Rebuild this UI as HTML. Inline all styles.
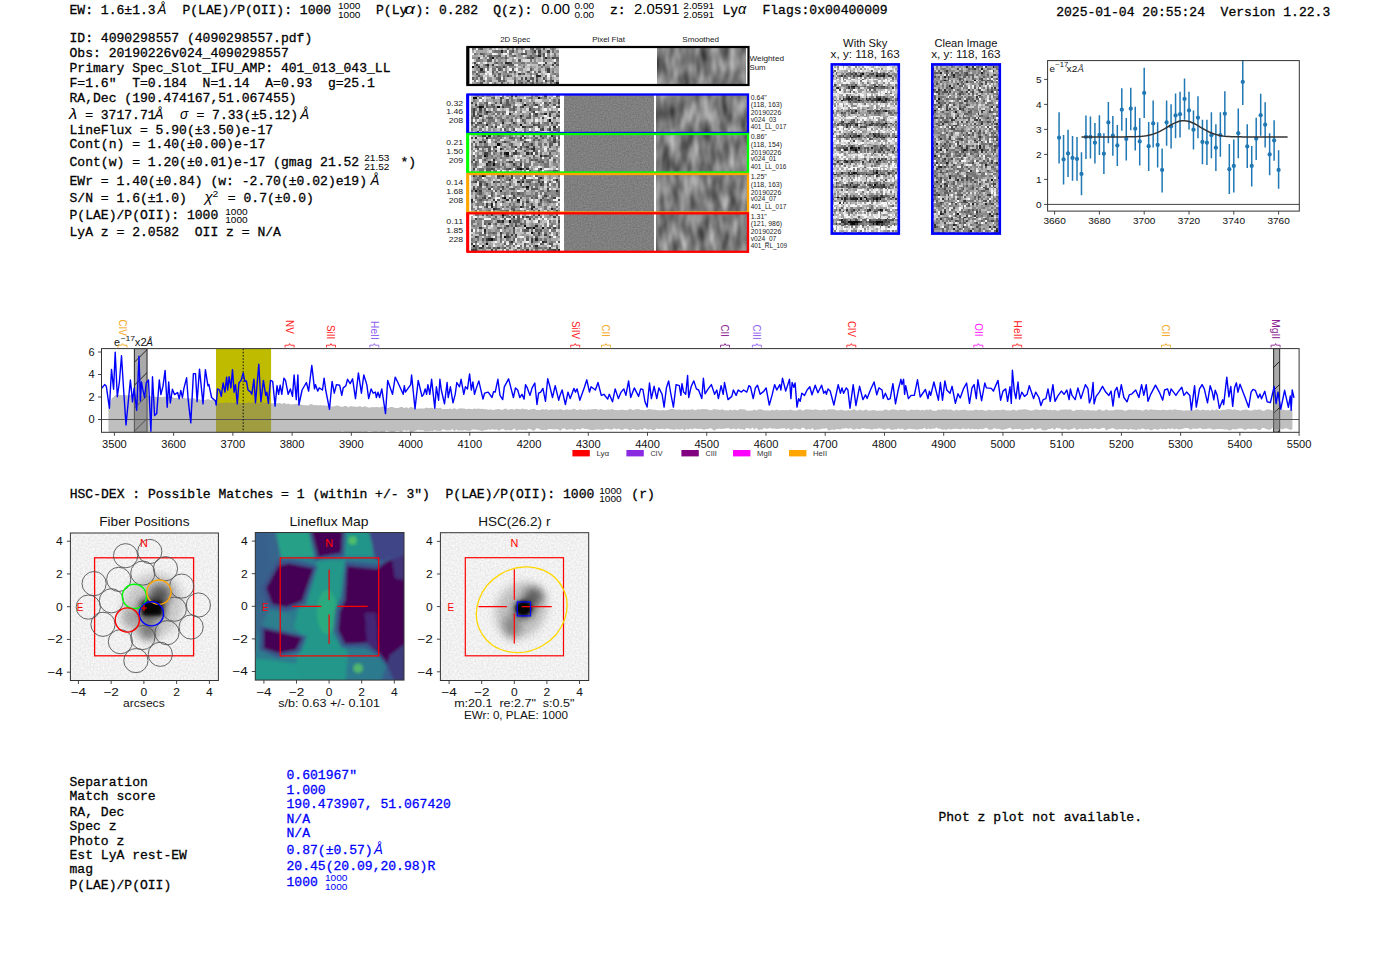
<!DOCTYPE html><html><head><meta charset="utf-8"><title>ELiXer report</title><style>html,body{margin:0;padding:0;background:#fff;width:1400px;height:953px;overflow:hidden}svg{display:block}.m{font-family:"Liberation Mono",monospace;font-size:13.60px}.s{font-family:"Liberation Sans",sans-serif}</style></head><body>
<svg width="1400" height="953" viewBox="0 0 1400 953">
<rect width="1400" height="953" fill="#fff"/>
<defs>
<filter id="fNoise" x="0" y="0" width="100%" height="100%" filterUnits="objectBoundingBox" color-interpolation-filters="sRGB">
  <feTurbulence type="fractalNoise" baseFrequency="0.6" numOctaves="1" seed="3" result="t"/>
  <feColorMatrix in="t" type="matrix" values="1 0 0 0 0  1 0 0 0 0  1 0 0 0 0  0 0 0 0 1"/>
  <feComponentTransfer><feFuncR type="linear" slope="1.6" intercept="-0.23"/><feFuncG type="linear" slope="1.6" intercept="-0.23"/><feFuncB type="linear" slope="1.6" intercept="-0.23"/></feComponentTransfer>
</filter>
<filter id="fNoise2" x="0" y="0" width="100%" height="100%" filterUnits="objectBoundingBox" color-interpolation-filters="sRGB">
  <feTurbulence type="fractalNoise" baseFrequency="0.62" numOctaves="1" seed="11" result="t"/>
  <feColorMatrix in="t" type="matrix" values="1 0 0 0 0  1 0 0 0 0  1 0 0 0 0  0 0 0 0 1"/>
  <feComponentTransfer><feFuncR type="linear" slope="1.55" intercept="-0.2"/><feFuncG type="linear" slope="1.55" intercept="-0.2"/><feFuncB type="linear" slope="1.55" intercept="-0.2"/></feComponentTransfer>
</filter>
<filter id="fSmooth" x="0" y="0" width="100%" height="100%" filterUnits="objectBoundingBox" color-interpolation-filters="sRGB">
  <feTurbulence type="fractalNoise" baseFrequency="0.1 0.04" numOctaves="2" seed="5" result="t"/>
  <feColorMatrix in="t" type="matrix" values="1 0 0 0 0  1 0 0 0 0  1 0 0 0 0  0 0 0 0 1"/>
  <feComponentTransfer><feFuncR type="linear" slope="0.72" intercept="0.13"/><feFuncG type="linear" slope="0.72" intercept="0.13"/><feFuncB type="linear" slope="0.72" intercept="0.13"/></feComponentTransfer>
</filter>
<filter id="fFlat" x="0" y="0" width="100%" height="100%" filterUnits="objectBoundingBox" color-interpolation-filters="sRGB">
  <feTurbulence type="fractalNoise" baseFrequency="0.7" numOctaves="1" seed="2" result="t"/>
  <feColorMatrix in="t" type="matrix" values="1 0 0 0 0  1 0 0 0 0  1 0 0 0 0  0 0 0 0 1"/>
  <feComponentTransfer><feFuncR type="linear" slope="0.19" intercept="0.405"/><feFuncG type="linear" slope="0.19" intercept="0.405"/><feFuncB type="linear" slope="0.19" intercept="0.405"/></feComponentTransfer>
</filter>
<filter id="fLight" x="0" y="0" width="100%" height="100%" filterUnits="objectBoundingBox" color-interpolation-filters="sRGB">
  <feTurbulence type="fractalNoise" baseFrequency="0.6" numOctaves="1" seed="9" result="t"/>
  <feColorMatrix in="t" type="matrix" values="1 0 0 0 0  1 0 0 0 0  1 0 0 0 0  0 0 0 0 1"/>
  <feComponentTransfer><feFuncR type="linear" slope="0.16" intercept="0.865"/><feFuncG type="linear" slope="0.16" intercept="0.865"/><feFuncB type="linear" slope="0.16" intercept="0.865"/></feComponentTransfer>
</filter>
<filter id="fClean" x="0" y="0" width="100%" height="100%" filterUnits="objectBoundingBox" color-interpolation-filters="sRGB">
  <feTurbulence type="fractalNoise" baseFrequency="0.8" numOctaves="1" seed="17" result="t"/>
  <feColorMatrix in="t" type="matrix" values="1 0 0 0 0  1 0 0 0 0  1 0 0 0 0  0 0 0 0 1"/>
  <feComponentTransfer><feFuncR type="linear" slope="1.7" intercept="-0.28"/><feFuncG type="linear" slope="1.7" intercept="-0.28"/><feFuncB type="linear" slope="1.7" intercept="-0.28"/></feComponentTransfer>
</filter>
<filter id="fBlur1"><feGaussianBlur stdDeviation="1.6"/></filter>
<filter id="fBlur2"><feGaussianBlur stdDeviation="4"/></filter>
<filter id="fBlur3"><feGaussianBlur stdDeviation="2.5"/></filter>
<pattern id="hatch0" patternUnits="userSpaceOnUse" width="23" height="23" patternTransform="translate(0,13.6)">
  <path d="M-2,25 L25,-2" stroke="#111" stroke-width="0.9"/>
</pattern>
<pattern id="hatch1" patternUnits="userSpaceOnUse" width="23" height="23" patternTransform="translate(0,8)">
  <path d="M-2,25 L25,-2" stroke="#111" stroke-width="0.9"/>
</pattern>
<pattern id="skyBands" patternUnits="userSpaceOnUse" x="0" y="69.5" width="70" height="12.4">
  <rect y="1.5" width="70" height="5.0" fill="#404040" filter="url(#fBlur1)"/>
</pattern>
<linearGradient id="skyMaskG" x1="0" x2="1" y1="0" y2="0">
  <stop offset="0" stop-color="#fff" stop-opacity="0.15"/>
  <stop offset="0.3" stop-color="#fff" stop-opacity="0.95"/>
  <stop offset="0.5" stop-color="#fff" stop-opacity="0.55"/>
  <stop offset="0.7" stop-color="#fff" stop-opacity="1.0"/>
  <stop offset="1" stop-color="#fff" stop-opacity="0.2"/>
</linearGradient>
<mask id="skyMask" maskUnits="userSpaceOnUse" x="830" y="60" width="72" height="180"><rect x="830" y="60" width="72" height="180" fill="url(#skyMaskG)"/></mask>
<filter id="fSkyN" x="0" y="0" width="100%" height="100%" filterUnits="objectBoundingBox" color-interpolation-filters="sRGB">
  <feTurbulence type="fractalNoise" baseFrequency="0.6" numOctaves="1" seed="21" result="t"/>
  <feColorMatrix in="t" type="matrix" values="1 0 0 0 0  1 0 0 0 0  1 0 0 0 0  0 0 0 0 1"/>
  <feComponentTransfer><feFuncR type="linear" slope="2.0" intercept="-0.15"/><feFuncG type="linear" slope="2.0" intercept="-0.15"/><feFuncB type="linear" slope="2.0" intercept="-0.15"/></feComponentTransfer>
</filter>
<filter id="fBlotch" x="0" y="0" width="100%" height="100%" filterUnits="objectBoundingBox" color-interpolation-filters="sRGB">
  <feTurbulence type="fractalNoise" baseFrequency="0.12 0.25" numOctaves="1" seed="4" result="t"/>
  <feColorMatrix in="t" type="matrix" values="0 0 0 0 1  0 0 0 0 1  0 0 0 0 1  3.5 0 0 0 -1.3"/>
</filter>
<radialGradient id="blobG" cx="50%" cy="50%" r="50%">
  <stop offset="0" stop-color="#000" stop-opacity="1"/>
  <stop offset="0.35" stop-color="#000" stop-opacity="0.85"/>
  <stop offset="1" stop-color="#000" stop-opacity="0"/>
</radialGradient>
<radialGradient id="haloG" cx="50%" cy="50%" r="50%">
  <stop offset="0" stop-color="#000" stop-opacity="0.55"/>
  <stop offset="0.5" stop-color="#000" stop-opacity="0.25"/>
  <stop offset="1" stop-color="#000" stop-opacity="0"/>
</radialGradient>
<clipPath id="cSpec"><rect x="101.5" y="348.6" width="1197.6" height="83.7"/></clipPath>
<clipPath id="cErr"><rect x="1047.6" y="60.6" width="251.7" height="150.5"/></clipPath>
<clipPath id="cFib"><rect x="70.4" y="533" width="148" height="147.5"/></clipPath>
<clipPath id="cLf"><rect x="255.3" y="532.5" width="148.7" height="147.6"/></clipPath>
<clipPath id="cHsc"><rect x="440.4" y="532.7" width="148.3" height="147.8"/></clipPath>
</defs>
<text x="69.50" y="14.40" class="m" fill="#000" stroke="#000" stroke-width="0.3" textLength="86.13" lengthAdjust="spacingAndGlyphs" xml:space="preserve">EW: 1.6±1.3</text>
<text x="157.50" y="14.40" class="s" font-size="13.78" fill="#000" text-anchor="start" textLength="8.89" lengthAdjust="spacingAndGlyphs" font-style="italic" xml:space="preserve" >Å</text>
<text x="182.40" y="14.40" class="m" fill="#000" stroke="#000" stroke-width="0.3" textLength="148.77" lengthAdjust="spacingAndGlyphs" xml:space="preserve">P(LAE)/P(OII): 1000</text>
<text x="338.00" y="8.90" class="s" font-size="9.33" fill="#000" text-anchor="start" textLength="22.40" lengthAdjust="spacingAndGlyphs" xml:space="preserve" >1000</text>
<text x="338.00" y="17.70" class="s" font-size="9.33" fill="#000" text-anchor="start" textLength="22.40" lengthAdjust="spacingAndGlyphs" xml:space="preserve" >1000</text>
<text x="376.00" y="14.40" class="m" fill="#000" stroke="#000" stroke-width="0.3" textLength="31.32" lengthAdjust="spacingAndGlyphs" xml:space="preserve">P(Ly</text>
<text x="404.50" y="14.40" class="s" font-size="14.31" fill="#000" text-anchor="start" textLength="10.50" lengthAdjust="spacingAndGlyphs" font-style="italic" xml:space="preserve" >α</text>
<text x="415.50" y="14.40" class="m" fill="#000" stroke="#000" stroke-width="0.3" textLength="62.64" lengthAdjust="spacingAndGlyphs" xml:space="preserve">): 0.282</text>
<text x="493.20" y="14.40" class="m" fill="#000" stroke="#000" stroke-width="0.3" textLength="39.15" lengthAdjust="spacingAndGlyphs" xml:space="preserve">Q(z):</text>
<text x="541.20" y="14.40" class="s" font-size="13.78" fill="#000" text-anchor="start" textLength="28.95" lengthAdjust="spacingAndGlyphs" xml:space="preserve" >0.00</text>
<text x="574.50" y="8.90" class="s" font-size="9.33" fill="#000" text-anchor="start" textLength="19.59" lengthAdjust="spacingAndGlyphs" xml:space="preserve" >0.00</text>
<text x="574.50" y="17.70" class="s" font-size="9.33" fill="#000" text-anchor="start" textLength="19.59" lengthAdjust="spacingAndGlyphs" xml:space="preserve" >0.00</text>
<text x="610.00" y="14.40" class="m" fill="#000" stroke="#000" stroke-width="0.3" textLength="15.66" lengthAdjust="spacingAndGlyphs" xml:space="preserve">z:</text>
<text x="634.00" y="14.40" class="s" font-size="13.78" fill="#000" text-anchor="start" textLength="45.49" lengthAdjust="spacingAndGlyphs" xml:space="preserve" >2.0591</text>
<text x="683.30" y="8.90" class="s" font-size="9.33" fill="#000" text-anchor="start" textLength="30.79" lengthAdjust="spacingAndGlyphs" xml:space="preserve" >2.0591</text>
<text x="683.30" y="17.70" class="s" font-size="9.33" fill="#000" text-anchor="start" textLength="30.79" lengthAdjust="spacingAndGlyphs" xml:space="preserve" >2.0591</text>
<text x="722.50" y="14.40" class="m" fill="#000" stroke="#000" stroke-width="0.3" textLength="15.66" lengthAdjust="spacingAndGlyphs" xml:space="preserve">Ly</text>
<text x="738.00" y="14.40" class="s" font-size="13.78" fill="#000" text-anchor="start" textLength="8.25" lengthAdjust="spacingAndGlyphs" font-style="italic" xml:space="preserve" >α</text>
<text x="762.40" y="14.40" class="m" fill="#000" stroke="#000" stroke-width="0.3" textLength="125.28" lengthAdjust="spacingAndGlyphs" xml:space="preserve">Flags:0x00400009</text>
<text x="1056.20" y="16.20" class="m" fill="#000" stroke="#000" stroke-width="0.3" textLength="274.05" lengthAdjust="spacingAndGlyphs" xml:space="preserve">2025-01-04 20:55:24  Version 1.22.3</text>
<text x="69.50" y="42.40" class="m" fill="#000" stroke="#000" stroke-width="0.3" textLength="242.73" lengthAdjust="spacingAndGlyphs" xml:space="preserve">ID: 4090298557 (4090298557.pdf)</text>
<text x="69.50" y="57.10" class="m" fill="#000" stroke="#000" stroke-width="0.3" textLength="219.24" lengthAdjust="spacingAndGlyphs" xml:space="preserve">Obs: 20190226v024_4090298557</text>
<text x="69.50" y="72.10" class="m" fill="#000" stroke="#000" stroke-width="0.3" textLength="321.03" lengthAdjust="spacingAndGlyphs" xml:space="preserve">Primary Spec_Slot_IFU_AMP: 401_013_043_LL</text>
<text x="69.50" y="87.10" class="m" fill="#000" stroke="#000" stroke-width="0.3" textLength="305.37" lengthAdjust="spacingAndGlyphs" xml:space="preserve">F=1.6&quot;  T=0.184  N=1.14  A=0.93  g=25.1</text>
<text x="69.50" y="101.90" class="m" fill="#000" stroke="#000" stroke-width="0.3" textLength="227.07" lengthAdjust="spacingAndGlyphs" xml:space="preserve">RA,Dec (190.474167,51.067455)</text>
<text x="69.00" y="118.60" class="s" font-size="13.78" fill="#000" text-anchor="start" textLength="8.25" lengthAdjust="spacingAndGlyphs" font-style="italic" xml:space="preserve" >λ</text>
<text x="77.30" y="118.60" class="m" fill="#000" stroke="#000" stroke-width="0.3" textLength="78.30" lengthAdjust="spacingAndGlyphs" xml:space="preserve"> = 3717.71</text>
<text x="154.50" y="118.60" class="s" font-size="13.78" fill="#000" text-anchor="start" textLength="8.89" lengthAdjust="spacingAndGlyphs" font-style="italic" xml:space="preserve" >Å</text>
<text x="180.00" y="118.60" class="s" font-size="13.78" fill="#000" text-anchor="start" textLength="8.25" lengthAdjust="spacingAndGlyphs" font-style="italic" xml:space="preserve" >σ</text>
<text x="188.60" y="118.60" class="m" fill="#000" stroke="#000" stroke-width="0.3" textLength="109.62" lengthAdjust="spacingAndGlyphs" xml:space="preserve"> = 7.33(±5.12)</text>
<text x="300.30" y="118.60" class="s" font-size="13.78" fill="#000" text-anchor="start" textLength="8.89" lengthAdjust="spacingAndGlyphs" font-style="italic" xml:space="preserve" >Å</text>
<text x="69.50" y="133.60" class="m" fill="#000" stroke="#000" stroke-width="0.3" textLength="203.58" lengthAdjust="spacingAndGlyphs" xml:space="preserve">LineFlux = 5.90(±3.50)e-17</text>
<text x="69.50" y="148.30" class="m" fill="#000" stroke="#000" stroke-width="0.3" textLength="195.75" lengthAdjust="spacingAndGlyphs" xml:space="preserve">Cont(n) = 1.40(±0.00)e-17</text>
<text x="69.50" y="166.40" class="m" fill="#000" stroke="#000" stroke-width="0.3" textLength="289.71" lengthAdjust="spacingAndGlyphs" xml:space="preserve">Cont(w) = 1.20(±0.01)e-17 (gmag 21.52</text>
<text x="364.20" y="160.60" class="s" font-size="9.33" fill="#000" text-anchor="start" textLength="25.19" lengthAdjust="spacingAndGlyphs" xml:space="preserve" >21.53</text>
<text x="364.20" y="169.60" class="s" font-size="9.33" fill="#000" text-anchor="start" textLength="25.19" lengthAdjust="spacingAndGlyphs" xml:space="preserve" >21.52</text>
<text x="392.60" y="166.40" class="m" fill="#000" stroke="#000" stroke-width="0.3" textLength="23.49" lengthAdjust="spacingAndGlyphs" xml:space="preserve"> *)</text>
<text x="69.50" y="184.60" class="m" fill="#000" stroke="#000" stroke-width="0.3" textLength="297.54" lengthAdjust="spacingAndGlyphs" xml:space="preserve">EWr = 1.40(±0.84) (w: -2.70(±0.02)e19)</text>
<text x="370.50" y="184.60" class="s" font-size="13.78" fill="#000" text-anchor="start" textLength="8.89" lengthAdjust="spacingAndGlyphs" font-style="italic" xml:space="preserve" >Å</text>
<text x="69.50" y="202.10" class="m" fill="#000" stroke="#000" stroke-width="0.3" textLength="117.45" lengthAdjust="spacingAndGlyphs" xml:space="preserve">S/N = 1.6(±1.0)</text>
<text x="204.50" y="202.10" class="s" font-size="13.78" fill="#000" text-anchor="start" textLength="8.25" lengthAdjust="spacingAndGlyphs" font-style="italic" xml:space="preserve" >χ</text>
<text x="212.50" y="196.60" class="s" font-size="9.54" fill="#000" text-anchor="start" textLength="5.73" lengthAdjust="spacingAndGlyphs" xml:space="preserve" >2</text>
<text x="220.00" y="202.10" class="m" fill="#000" stroke="#000" stroke-width="0.3" textLength="93.96" lengthAdjust="spacingAndGlyphs" xml:space="preserve"> = 0.7(±0.0)</text>
<text x="69.50" y="219.30" class="m" fill="#000" stroke="#000" stroke-width="0.3" textLength="148.77" lengthAdjust="spacingAndGlyphs" xml:space="preserve">P(LAE)/P(OII): 1000</text>
<text x="225.20" y="214.80" class="s" font-size="9.33" fill="#000" text-anchor="start" textLength="22.40" lengthAdjust="spacingAndGlyphs" xml:space="preserve" >1000</text>
<text x="225.20" y="223.20" class="s" font-size="9.33" fill="#000" text-anchor="start" textLength="22.40" lengthAdjust="spacingAndGlyphs" xml:space="preserve" >1000</text>
<text x="69.50" y="235.70" class="m" fill="#000" stroke="#000" stroke-width="0.3" textLength="211.41" lengthAdjust="spacingAndGlyphs" xml:space="preserve">LyA z = 2.0582  OII z = N/A</text>
<text x="69.70" y="498.40" class="m" fill="#000" stroke="#000" stroke-width="0.3" textLength="524.61" lengthAdjust="spacingAndGlyphs" xml:space="preserve">HSC-DEX : Possible Matches = 1 (within +/- 3&quot;)  P(LAE)/P(OII): 1000</text>
<text x="599.20" y="493.60" class="s" font-size="9.33" fill="#000" text-anchor="start" textLength="22.40" lengthAdjust="spacingAndGlyphs" xml:space="preserve" >1000</text>
<text x="599.20" y="502.20" class="s" font-size="9.33" fill="#000" text-anchor="start" textLength="22.40" lengthAdjust="spacingAndGlyphs" xml:space="preserve" >1000</text>
<text x="623.50" y="498.40" class="m" fill="#000" stroke="#000" stroke-width="0.3" textLength="31.32" lengthAdjust="spacingAndGlyphs" xml:space="preserve"> (r)</text>
<text x="69.50" y="785.70" class="m" fill="#000" stroke="#000" stroke-width="0.3" textLength="78.30" lengthAdjust="spacingAndGlyphs" xml:space="preserve">Separation</text>
<text x="69.50" y="800.40" class="m" fill="#000" stroke="#000" stroke-width="0.3" textLength="86.13" lengthAdjust="spacingAndGlyphs" xml:space="preserve">Match score</text>
<text x="69.50" y="815.50" class="m" fill="#000" stroke="#000" stroke-width="0.3" textLength="54.81" lengthAdjust="spacingAndGlyphs" xml:space="preserve">RA, Dec</text>
<text x="69.50" y="829.80" class="m" fill="#000" stroke="#000" stroke-width="0.3" textLength="46.98" lengthAdjust="spacingAndGlyphs" xml:space="preserve">Spec z</text>
<text x="69.50" y="844.50" class="m" fill="#000" stroke="#000" stroke-width="0.3" textLength="54.81" lengthAdjust="spacingAndGlyphs" xml:space="preserve">Photo z</text>
<text x="69.50" y="858.80" class="m" fill="#000" stroke="#000" stroke-width="0.3" textLength="117.45" lengthAdjust="spacingAndGlyphs" xml:space="preserve">Est LyA rest-EW</text>
<text x="69.50" y="873.20" class="m" fill="#000" stroke="#000" stroke-width="0.3" textLength="23.49" lengthAdjust="spacingAndGlyphs" xml:space="preserve">mag</text>
<text x="69.50" y="888.60" class="m" fill="#000" stroke="#000" stroke-width="0.3" textLength="101.79" lengthAdjust="spacingAndGlyphs" xml:space="preserve">P(LAE)/P(OII)</text>
<text x="286.50" y="779.10" class="m" fill="#0000ff" stroke="#0000ff" stroke-width="0.3" textLength="70.47" lengthAdjust="spacingAndGlyphs" xml:space="preserve">0.601967&quot;</text>
<text x="286.50" y="793.50" class="m" fill="#0000ff" stroke="#0000ff" stroke-width="0.3" textLength="39.15" lengthAdjust="spacingAndGlyphs" xml:space="preserve">1.000</text>
<text x="286.50" y="807.80" class="m" fill="#0000ff" stroke="#0000ff" stroke-width="0.3" textLength="164.43" lengthAdjust="spacingAndGlyphs" xml:space="preserve">190.473907, 51.067420</text>
<text x="286.50" y="822.50" class="m" fill="#0000ff" stroke="#0000ff" stroke-width="0.3" textLength="23.49" lengthAdjust="spacingAndGlyphs" xml:space="preserve">N/A</text>
<text x="286.50" y="837.10" class="m" fill="#0000ff" stroke="#0000ff" stroke-width="0.3" textLength="23.49" lengthAdjust="spacingAndGlyphs" xml:space="preserve">N/A</text>
<text x="286.50" y="854.00" class="m" fill="#0000ff" stroke="#0000ff" stroke-width="0.3" textLength="86.13" lengthAdjust="spacingAndGlyphs" xml:space="preserve">0.87(±0.57)</text>
<text x="374.00" y="854.00" class="s" font-size="13.78" fill="#0000ff" text-anchor="start" textLength="8.89" lengthAdjust="spacingAndGlyphs" font-style="italic" xml:space="preserve" >Å</text>
<text x="286.50" y="869.50" class="m" fill="#0000ff" stroke="#0000ff" stroke-width="0.3" textLength="148.77" lengthAdjust="spacingAndGlyphs" xml:space="preserve">20.45(20.09,20.98)R</text>
<text x="286.50" y="886.10" class="m" fill="#0000ff" stroke="#0000ff" stroke-width="0.3" textLength="31.32" lengthAdjust="spacingAndGlyphs" xml:space="preserve">1000</text>
<text x="325.00" y="880.80" class="s" font-size="9.33" fill="#0000ff" text-anchor="start" textLength="22.40" lengthAdjust="spacingAndGlyphs" xml:space="preserve" >1000</text>
<text x="325.00" y="889.60" class="s" font-size="9.33" fill="#0000ff" text-anchor="start" textLength="22.40" lengthAdjust="spacingAndGlyphs" xml:space="preserve" >1000</text>
<text x="938.40" y="820.70" class="m" fill="#000" stroke="#000" stroke-width="0.3" textLength="203.58" lengthAdjust="spacingAndGlyphs" xml:space="preserve">Phot z plot not available.</text>
<text x="515.20" y="42.20" class="s" font-size="7.63" fill="#222" text-anchor="middle" textLength="29.94" lengthAdjust="spacingAndGlyphs" xml:space="preserve" >2D Spec</text>
<text x="608.50" y="42.20" class="s" font-size="7.63" fill="#222" text-anchor="middle" textLength="32.70" lengthAdjust="spacingAndGlyphs" xml:space="preserve" >Pixel Flat</text>
<text x="700.70" y="42.20" class="s" font-size="7.63" fill="#222" text-anchor="middle" textLength="36.78" lengthAdjust="spacingAndGlyphs" xml:space="preserve" >Smoothed</text>
<g transform="translate(471.50,48.00) scale(2.2308,2.2500)" shape-rendering="crispEdges"><path fill="rgb(12,12,12)" d="M9 4h1v1h-1zM0 8h1v1h-1z"/><path fill="rgb(38,38,38)" d="M13 1h1v1h-1zM30 3h1v1h-1zM33 4h1v1h-1zM15 6h1v1h-1zM16 6h1v1h-1zM7 7h1v1h-1zM4 9h1v1h-1zM29 12h1v1h-1zM30 12h1v1h-1zM38 15h1v1h-1z"/><path fill="rgb(64,64,64)" d="M28 1h1v1h-1zM30 1h1v1h-1zM34 1h1v1h-1zM3 4h1v1h-1zM27 4h1v1h-1zM36 4h1v1h-1zM1 6h1v1h-1zM17 6h1v1h-1zM33 6h1v1h-1zM37 6h1v1h-1zM2 7h1v1h-1zM9 7h1v1h-1zM32 7h1v1h-1zM36 7h1v1h-1zM3 8h1v1h-1zM14 8h1v1h-1zM34 9h1v1h-1zM34 10h1v1h-1zM21 11h1v1h-1zM16 12h1v1h-1zM24 13h1v1h-1zM25 14h1v1h-1zM29 14h1v1h-1zM33 14h1v1h-1zM36 14h1v1h-1zM19 15h1v1h-1z"/><path fill="rgb(89,89,89)" d="M4 0h1v1h-1zM27 0h1v1h-1zM32 0h1v1h-1zM18 1h1v1h-1zM4 2h1v1h-1zM22 2h1v1h-1zM23 2h1v1h-1zM24 2h1v1h-1zM30 2h1v1h-1zM32 2h1v1h-1zM8 3h1v1h-1zM12 3h1v1h-1zM19 3h1v1h-1zM26 3h1v1h-1zM32 3h1v1h-1zM8 4h1v1h-1zM15 4h1v1h-1zM25 4h1v1h-1zM26 4h1v1h-1zM37 4h1v1h-1zM38 4h1v1h-1zM7 5h1v1h-1zM8 5h1v1h-1zM21 5h1v1h-1zM11 6h1v1h-1zM6 7h1v1h-1zM17 7h1v1h-1zM18 7h1v1h-1zM38 7h1v1h-1zM7 8h1v1h-1zM11 8h1v1h-1zM12 9h1v1h-1zM18 9h1v1h-1zM26 9h1v1h-1zM4 10h1v1h-1zM5 10h1v1h-1zM9 10h1v1h-1zM17 10h1v1h-1zM19 10h1v1h-1zM25 10h1v1h-1zM30 10h1v1h-1zM2 11h1v1h-1zM12 11h1v1h-1zM23 11h1v1h-1zM29 11h1v1h-1zM3 12h1v1h-1zM10 12h1v1h-1zM0 13h1v1h-1zM4 13h1v1h-1zM12 13h1v1h-1zM22 13h1v1h-1zM26 13h1v1h-1zM27 13h1v1h-1zM29 13h1v1h-1zM32 13h1v1h-1zM5 14h1v1h-1zM12 14h1v1h-1zM14 14h1v1h-1zM19 14h1v1h-1zM35 14h1v1h-1zM4 15h1v1h-1zM13 15h1v1h-1zM22 15h1v1h-1zM27 15h1v1h-1z"/><path fill="rgb(115,115,115)" d="M0 0h1v1h-1zM3 0h1v1h-1zM16 0h1v1h-1zM18 0h1v1h-1zM20 0h1v1h-1zM22 0h1v1h-1zM26 0h1v1h-1zM29 0h1v1h-1zM30 0h1v1h-1zM36 0h1v1h-1zM10 1h1v1h-1zM11 1h1v1h-1zM12 1h1v1h-1zM15 1h1v1h-1zM17 1h1v1h-1zM24 1h1v1h-1zM27 1h1v1h-1zM36 1h1v1h-1zM1 2h1v1h-1zM5 2h1v1h-1zM17 2h1v1h-1zM27 2h1v1h-1zM37 2h1v1h-1zM5 3h1v1h-1zM7 3h1v1h-1zM10 3h1v1h-1zM11 3h1v1h-1zM15 3h1v1h-1zM18 3h1v1h-1zM28 3h1v1h-1zM29 3h1v1h-1zM37 3h1v1h-1zM11 4h1v1h-1zM13 4h1v1h-1zM32 4h1v1h-1zM34 4h1v1h-1zM2 5h1v1h-1zM3 5h1v1h-1zM26 5h1v1h-1zM32 5h1v1h-1zM38 5h1v1h-1zM10 6h1v1h-1zM13 6h1v1h-1zM22 6h1v1h-1zM23 6h1v1h-1zM16 7h1v1h-1zM30 7h1v1h-1zM12 8h1v1h-1zM15 8h1v1h-1zM23 8h1v1h-1zM31 8h1v1h-1zM7 9h1v1h-1zM9 9h1v1h-1zM10 9h1v1h-1zM13 9h1v1h-1zM33 9h1v1h-1zM0 10h1v1h-1zM1 10h1v1h-1zM3 10h1v1h-1zM11 10h1v1h-1zM15 10h1v1h-1zM28 10h1v1h-1zM36 10h1v1h-1zM9 11h1v1h-1zM22 11h1v1h-1zM26 11h1v1h-1zM37 11h1v1h-1zM12 12h1v1h-1zM14 12h1v1h-1zM17 12h1v1h-1zM33 12h1v1h-1zM38 12h1v1h-1zM2 13h1v1h-1zM11 13h1v1h-1zM14 13h1v1h-1zM19 13h1v1h-1zM35 13h1v1h-1zM1 14h1v1h-1zM8 14h1v1h-1zM13 14h1v1h-1zM21 14h1v1h-1zM27 14h1v1h-1zM10 15h1v1h-1zM21 15h1v1h-1zM24 15h1v1h-1zM26 15h1v1h-1zM29 15h1v1h-1zM31 15h1v1h-1zM35 15h1v1h-1zM37 15h1v1h-1z"/><path fill="rgb(140,140,140)" d="M1 0h1v1h-1zM8 0h1v1h-1zM35 0h1v1h-1zM37 0h1v1h-1zM9 1h1v1h-1zM14 1h1v1h-1zM20 1h1v1h-1zM26 1h1v1h-1zM38 1h1v1h-1zM2 2h1v1h-1zM6 2h1v1h-1zM8 2h1v1h-1zM12 2h1v1h-1zM21 2h1v1h-1zM28 2h1v1h-1zM31 2h1v1h-1zM34 2h1v1h-1zM9 3h1v1h-1zM17 3h1v1h-1zM21 3h1v1h-1zM25 3h1v1h-1zM27 3h1v1h-1zM34 3h1v1h-1zM0 4h1v1h-1zM1 4h1v1h-1zM2 4h1v1h-1zM6 4h1v1h-1zM12 4h1v1h-1zM14 4h1v1h-1zM16 4h1v1h-1zM24 4h1v1h-1zM28 4h1v1h-1zM35 4h1v1h-1zM4 5h1v1h-1zM10 5h1v1h-1zM12 5h1v1h-1zM15 5h1v1h-1zM18 5h1v1h-1zM28 5h1v1h-1zM12 6h1v1h-1zM19 6h1v1h-1zM20 6h1v1h-1zM21 6h1v1h-1zM25 6h1v1h-1zM27 6h1v1h-1zM28 6h1v1h-1zM29 6h1v1h-1zM38 6h1v1h-1zM1 7h1v1h-1zM3 7h1v1h-1zM5 7h1v1h-1zM13 7h1v1h-1zM14 7h1v1h-1zM15 7h1v1h-1zM21 7h1v1h-1zM23 7h1v1h-1zM1 8h1v1h-1zM2 8h1v1h-1zM5 8h1v1h-1zM6 8h1v1h-1zM9 8h1v1h-1zM10 8h1v1h-1zM13 8h1v1h-1zM17 8h1v1h-1zM18 8h1v1h-1zM19 8h1v1h-1zM26 8h1v1h-1zM33 8h1v1h-1zM34 8h1v1h-1zM37 8h1v1h-1zM2 9h1v1h-1zM3 9h1v1h-1zM5 9h1v1h-1zM15 9h1v1h-1zM21 9h1v1h-1zM22 9h1v1h-1zM27 9h1v1h-1zM30 9h1v1h-1zM36 9h1v1h-1zM14 10h1v1h-1zM18 10h1v1h-1zM0 11h1v1h-1zM3 11h1v1h-1zM10 11h1v1h-1zM14 11h1v1h-1zM15 11h1v1h-1zM16 11h1v1h-1zM19 11h1v1h-1zM28 11h1v1h-1zM36 11h1v1h-1zM38 11h1v1h-1zM2 12h1v1h-1zM4 12h1v1h-1zM15 12h1v1h-1zM26 12h1v1h-1zM35 12h1v1h-1zM1 13h1v1h-1zM7 13h1v1h-1zM8 13h1v1h-1zM33 13h1v1h-1zM4 14h1v1h-1zM7 14h1v1h-1zM15 14h1v1h-1zM22 14h1v1h-1zM34 14h1v1h-1zM38 14h1v1h-1zM2 15h1v1h-1zM3 15h1v1h-1zM7 15h1v1h-1zM16 15h1v1h-1zM30 15h1v1h-1zM33 15h1v1h-1z"/><path fill="rgb(166,166,166)" d="M5 0h1v1h-1zM6 0h1v1h-1zM13 0h1v1h-1zM21 0h1v1h-1zM23 0h1v1h-1zM0 1h1v1h-1zM2 1h1v1h-1zM3 1h1v1h-1zM4 1h1v1h-1zM5 1h1v1h-1zM6 1h1v1h-1zM19 1h1v1h-1zM22 1h1v1h-1zM25 1h1v1h-1zM31 1h1v1h-1zM32 1h1v1h-1zM33 1h1v1h-1zM37 1h1v1h-1zM3 2h1v1h-1zM7 2h1v1h-1zM20 2h1v1h-1zM25 2h1v1h-1zM26 2h1v1h-1zM0 3h1v1h-1zM1 3h1v1h-1zM2 3h1v1h-1zM20 3h1v1h-1zM22 3h1v1h-1zM31 3h1v1h-1zM36 3h1v1h-1zM38 3h1v1h-1zM5 4h1v1h-1zM10 4h1v1h-1zM18 4h1v1h-1zM21 4h1v1h-1zM22 4h1v1h-1zM23 4h1v1h-1zM29 4h1v1h-1zM30 4h1v1h-1zM5 5h1v1h-1zM6 5h1v1h-1zM13 5h1v1h-1zM14 5h1v1h-1zM19 5h1v1h-1zM30 5h1v1h-1zM33 5h1v1h-1zM34 5h1v1h-1zM35 5h1v1h-1zM0 6h1v1h-1zM4 6h1v1h-1zM7 6h1v1h-1zM18 6h1v1h-1zM24 6h1v1h-1zM26 6h1v1h-1zM36 6h1v1h-1zM8 7h1v1h-1zM12 7h1v1h-1zM22 7h1v1h-1zM24 7h1v1h-1zM33 7h1v1h-1zM34 7h1v1h-1zM35 7h1v1h-1zM4 8h1v1h-1zM22 8h1v1h-1zM27 8h1v1h-1zM28 8h1v1h-1zM30 8h1v1h-1zM32 8h1v1h-1zM38 8h1v1h-1zM1 9h1v1h-1zM35 9h1v1h-1zM37 9h1v1h-1zM38 9h1v1h-1zM10 10h1v1h-1zM13 10h1v1h-1zM22 10h1v1h-1zM24 10h1v1h-1zM26 10h1v1h-1zM33 10h1v1h-1zM35 10h1v1h-1zM38 10h1v1h-1zM1 11h1v1h-1zM5 11h1v1h-1zM11 11h1v1h-1zM13 11h1v1h-1zM17 11h1v1h-1zM25 11h1v1h-1zM27 11h1v1h-1zM31 11h1v1h-1zM35 11h1v1h-1zM1 12h1v1h-1zM7 12h1v1h-1zM19 12h1v1h-1zM21 12h1v1h-1zM31 12h1v1h-1zM10 13h1v1h-1zM15 13h1v1h-1zM18 13h1v1h-1zM20 13h1v1h-1zM25 13h1v1h-1zM30 13h1v1h-1zM36 13h1v1h-1zM20 14h1v1h-1zM23 14h1v1h-1zM24 14h1v1h-1zM30 14h1v1h-1zM31 14h1v1h-1zM0 15h1v1h-1zM1 15h1v1h-1zM9 15h1v1h-1zM11 15h1v1h-1zM14 15h1v1h-1zM23 15h1v1h-1zM25 15h1v1h-1zM28 15h1v1h-1zM32 15h1v1h-1zM36 15h1v1h-1z"/><path fill="rgb(192,192,192)" d="M7 0h1v1h-1zM10 0h1v1h-1zM12 0h1v1h-1zM15 0h1v1h-1zM17 0h1v1h-1zM28 0h1v1h-1zM31 0h1v1h-1zM33 0h1v1h-1zM7 1h1v1h-1zM21 1h1v1h-1zM29 1h1v1h-1zM35 1h1v1h-1zM13 2h1v1h-1zM16 2h1v1h-1zM19 2h1v1h-1zM36 2h1v1h-1zM38 2h1v1h-1zM3 3h1v1h-1zM4 3h1v1h-1zM6 3h1v1h-1zM13 3h1v1h-1zM14 3h1v1h-1zM24 3h1v1h-1zM35 3h1v1h-1zM17 4h1v1h-1zM20 4h1v1h-1zM1 5h1v1h-1zM11 5h1v1h-1zM17 5h1v1h-1zM22 5h1v1h-1zM27 5h1v1h-1zM29 5h1v1h-1zM31 5h1v1h-1zM36 5h1v1h-1zM2 6h1v1h-1zM8 6h1v1h-1zM9 6h1v1h-1zM14 6h1v1h-1zM34 6h1v1h-1zM4 7h1v1h-1zM10 7h1v1h-1zM26 7h1v1h-1zM27 7h1v1h-1zM28 7h1v1h-1zM29 7h1v1h-1zM31 7h1v1h-1zM37 7h1v1h-1zM8 8h1v1h-1zM20 8h1v1h-1zM21 8h1v1h-1zM24 8h1v1h-1zM25 8h1v1h-1zM29 8h1v1h-1zM36 8h1v1h-1zM0 9h1v1h-1zM16 9h1v1h-1zM23 9h1v1h-1zM24 9h1v1h-1zM28 9h1v1h-1zM29 9h1v1h-1zM31 9h1v1h-1zM32 9h1v1h-1zM6 10h1v1h-1zM12 10h1v1h-1zM20 10h1v1h-1zM23 10h1v1h-1zM29 10h1v1h-1zM31 10h1v1h-1zM37 10h1v1h-1zM4 11h1v1h-1zM7 11h1v1h-1zM18 11h1v1h-1zM20 11h1v1h-1zM24 11h1v1h-1zM32 11h1v1h-1zM0 12h1v1h-1zM6 12h1v1h-1zM9 12h1v1h-1zM11 12h1v1h-1zM13 12h1v1h-1zM18 12h1v1h-1zM22 12h1v1h-1zM23 12h1v1h-1zM24 12h1v1h-1zM25 12h1v1h-1zM28 12h1v1h-1zM32 12h1v1h-1zM36 12h1v1h-1zM3 13h1v1h-1zM5 13h1v1h-1zM9 13h1v1h-1zM16 13h1v1h-1zM17 13h1v1h-1zM21 13h1v1h-1zM23 13h1v1h-1zM28 13h1v1h-1zM31 13h1v1h-1zM37 13h1v1h-1zM38 13h1v1h-1zM3 14h1v1h-1zM6 14h1v1h-1zM9 14h1v1h-1zM10 14h1v1h-1zM11 14h1v1h-1zM28 14h1v1h-1zM5 15h1v1h-1zM6 15h1v1h-1zM12 15h1v1h-1zM15 15h1v1h-1zM17 15h1v1h-1zM20 15h1v1h-1zM34 15h1v1h-1z"/><path fill="rgb(217,217,217)" d="M9 0h1v1h-1zM14 0h1v1h-1zM19 0h1v1h-1zM24 0h1v1h-1zM25 0h1v1h-1zM34 0h1v1h-1zM38 0h1v1h-1zM1 1h1v1h-1zM8 1h1v1h-1zM11 2h1v1h-1zM18 2h1v1h-1zM29 2h1v1h-1zM35 2h1v1h-1zM16 3h1v1h-1zM4 4h1v1h-1zM7 4h1v1h-1zM31 4h1v1h-1zM9 5h1v1h-1zM16 5h1v1h-1zM20 5h1v1h-1zM23 5h1v1h-1zM24 5h1v1h-1zM25 5h1v1h-1zM5 6h1v1h-1zM32 6h1v1h-1zM35 6h1v1h-1zM11 7h1v1h-1zM19 7h1v1h-1zM25 7h1v1h-1zM16 8h1v1h-1zM35 8h1v1h-1zM8 9h1v1h-1zM11 9h1v1h-1zM14 9h1v1h-1zM19 9h1v1h-1zM25 9h1v1h-1zM2 10h1v1h-1zM8 10h1v1h-1zM16 10h1v1h-1zM21 10h1v1h-1zM32 10h1v1h-1zM30 11h1v1h-1zM33 11h1v1h-1zM5 12h1v1h-1zM8 12h1v1h-1zM20 12h1v1h-1zM37 12h1v1h-1zM34 13h1v1h-1zM0 14h1v1h-1zM16 14h1v1h-1zM17 14h1v1h-1zM18 14h1v1h-1zM26 14h1v1h-1zM37 14h1v1h-1zM18 15h1v1h-1z"/><path fill="rgb(243,243,243)" d="M2 0h1v1h-1zM11 0h1v1h-1zM16 1h1v1h-1zM23 1h1v1h-1zM0 2h1v1h-1zM9 2h1v1h-1zM10 2h1v1h-1zM14 2h1v1h-1zM15 2h1v1h-1zM33 2h1v1h-1zM23 3h1v1h-1zM33 3h1v1h-1zM19 4h1v1h-1zM0 5h1v1h-1zM37 5h1v1h-1zM3 6h1v1h-1zM6 6h1v1h-1zM30 6h1v1h-1zM31 6h1v1h-1zM0 7h1v1h-1zM20 7h1v1h-1zM6 9h1v1h-1zM17 9h1v1h-1zM20 9h1v1h-1zM7 10h1v1h-1zM27 10h1v1h-1zM6 11h1v1h-1zM8 11h1v1h-1zM34 11h1v1h-1zM27 12h1v1h-1zM34 12h1v1h-1zM6 13h1v1h-1zM13 13h1v1h-1zM2 14h1v1h-1zM32 14h1v1h-1zM8 15h1v1h-1z"/></g>
<rect x="657.9" y="48" width="88" height="36" filter="url(#fSmooth)"/>
<rect x="467.5" y="47" width="281" height="38" fill="none" stroke="#000" stroke-width="2.2"/>
<rect x="466.4" y="46.5" width="3" height="39" fill="#000"/>
<text x="749.50" y="61.10" class="s" font-size="7.63" fill="#222" text-anchor="start" textLength="34.51" lengthAdjust="spacingAndGlyphs" xml:space="preserve" >Weighted</text>
<text x="749.50" y="70.00" class="s" font-size="7.63" fill="#222" text-anchor="start" textLength="16.15" lengthAdjust="spacingAndGlyphs" xml:space="preserve" >Sum</text>
<g transform="translate(470.50,94.90) scale(2.2375,2.2353)" shape-rendering="crispEdges"><path fill="rgb(12,12,12)" d="M1 1h1v1h-1zM2 1h1v1h-1zM30 1h1v1h-1zM24 4h1v1h-1zM4 5h1v1h-1zM12 5h1v1h-1zM35 11h1v1h-1zM22 13h1v1h-1z"/><path fill="rgb(38,38,38)" d="M5 5h1v1h-1zM7 7h1v1h-1zM17 8h1v1h-1zM33 8h1v1h-1zM4 9h1v1h-1zM22 9h1v1h-1zM14 12h1v1h-1zM7 13h1v1h-1zM23 14h1v1h-1zM37 14h1v1h-1z"/><path fill="rgb(64,64,64)" d="M18 0h1v1h-1zM20 0h1v1h-1zM33 0h1v1h-1zM13 1h1v1h-1zM22 2h1v1h-1zM0 3h1v1h-1zM13 3h1v1h-1zM39 3h1v1h-1zM2 4h1v1h-1zM29 4h1v1h-1zM14 5h1v1h-1zM23 5h1v1h-1zM39 5h1v1h-1zM1 6h1v1h-1zM4 6h1v1h-1zM26 6h1v1h-1zM1 7h1v1h-1zM28 7h1v1h-1zM39 7h1v1h-1zM1 8h1v1h-1zM29 8h1v1h-1zM35 8h1v1h-1zM1 9h1v1h-1zM35 9h1v1h-1zM39 9h1v1h-1zM32 10h1v1h-1zM0 12h1v1h-1zM4 12h1v1h-1zM19 12h1v1h-1zM36 12h1v1h-1zM28 13h1v1h-1zM11 14h1v1h-1zM24 14h1v1h-1zM30 14h1v1h-1zM32 15h1v1h-1zM35 15h1v1h-1zM3 16h1v1h-1z"/><path fill="rgb(89,89,89)" d="M38 0h1v1h-1zM10 1h1v1h-1zM13 2h1v1h-1zM16 2h1v1h-1zM39 2h1v1h-1zM7 3h1v1h-1zM11 3h1v1h-1zM16 3h1v1h-1zM28 3h1v1h-1zM33 3h1v1h-1zM35 3h1v1h-1zM7 4h1v1h-1zM9 4h1v1h-1zM16 4h1v1h-1zM17 4h1v1h-1zM34 4h1v1h-1zM37 4h1v1h-1zM3 5h1v1h-1zM7 5h1v1h-1zM10 5h1v1h-1zM19 5h1v1h-1zM22 5h1v1h-1zM38 5h1v1h-1zM6 6h1v1h-1zM19 6h1v1h-1zM4 7h1v1h-1zM8 7h1v1h-1zM36 7h1v1h-1zM3 8h1v1h-1zM7 8h1v1h-1zM14 8h1v1h-1zM26 8h1v1h-1zM26 9h1v1h-1zM29 9h1v1h-1zM38 9h1v1h-1zM0 10h1v1h-1zM2 10h1v1h-1zM3 10h1v1h-1zM8 10h1v1h-1zM9 10h1v1h-1zM22 10h1v1h-1zM25 10h1v1h-1zM26 10h1v1h-1zM37 10h1v1h-1zM5 11h1v1h-1zM14 11h1v1h-1zM18 11h1v1h-1zM23 11h1v1h-1zM3 12h1v1h-1zM24 12h1v1h-1zM30 12h1v1h-1zM38 12h1v1h-1zM2 13h1v1h-1zM17 13h1v1h-1zM29 13h1v1h-1zM30 13h1v1h-1zM2 14h1v1h-1zM5 14h1v1h-1zM9 14h1v1h-1zM26 14h1v1h-1zM27 14h1v1h-1zM15 15h1v1h-1zM19 15h1v1h-1zM31 15h1v1h-1zM37 15h1v1h-1zM5 16h1v1h-1zM16 16h1v1h-1zM17 16h1v1h-1zM20 16h1v1h-1z"/><path fill="rgb(115,115,115)" d="M3 0h1v1h-1zM5 0h1v1h-1zM14 0h1v1h-1zM27 0h1v1h-1zM29 0h1v1h-1zM39 0h1v1h-1zM4 1h1v1h-1zM9 1h1v1h-1zM14 1h1v1h-1zM18 1h1v1h-1zM26 1h1v1h-1zM27 1h1v1h-1zM31 1h1v1h-1zM33 1h1v1h-1zM1 2h1v1h-1zM18 2h1v1h-1zM21 2h1v1h-1zM37 2h1v1h-1zM6 3h1v1h-1zM19 3h1v1h-1zM4 4h1v1h-1zM5 4h1v1h-1zM10 4h1v1h-1zM14 4h1v1h-1zM15 4h1v1h-1zM23 4h1v1h-1zM25 4h1v1h-1zM28 4h1v1h-1zM33 4h1v1h-1zM8 5h1v1h-1zM9 5h1v1h-1zM15 5h1v1h-1zM16 5h1v1h-1zM17 5h1v1h-1zM20 5h1v1h-1zM26 5h1v1h-1zM27 5h1v1h-1zM30 5h1v1h-1zM33 5h1v1h-1zM0 6h1v1h-1zM2 6h1v1h-1zM10 6h1v1h-1zM17 6h1v1h-1zM18 6h1v1h-1zM27 6h1v1h-1zM28 6h1v1h-1zM30 6h1v1h-1zM0 7h1v1h-1zM6 7h1v1h-1zM11 7h1v1h-1zM12 7h1v1h-1zM14 7h1v1h-1zM15 7h1v1h-1zM22 7h1v1h-1zM27 7h1v1h-1zM35 7h1v1h-1zM37 7h1v1h-1zM6 8h1v1h-1zM10 8h1v1h-1zM12 8h1v1h-1zM28 8h1v1h-1zM31 8h1v1h-1zM32 8h1v1h-1zM38 8h1v1h-1zM0 9h1v1h-1zM11 9h1v1h-1zM19 9h1v1h-1zM23 9h1v1h-1zM28 9h1v1h-1zM7 10h1v1h-1zM12 10h1v1h-1zM13 10h1v1h-1zM16 10h1v1h-1zM20 10h1v1h-1zM0 11h1v1h-1zM8 11h1v1h-1zM9 11h1v1h-1zM10 11h1v1h-1zM13 11h1v1h-1zM24 11h1v1h-1zM34 11h1v1h-1zM1 12h1v1h-1zM7 12h1v1h-1zM8 12h1v1h-1zM11 12h1v1h-1zM20 12h1v1h-1zM27 12h1v1h-1zM28 12h1v1h-1zM33 12h1v1h-1zM34 12h1v1h-1zM0 13h1v1h-1zM3 13h1v1h-1zM5 13h1v1h-1zM11 13h1v1h-1zM20 13h1v1h-1zM34 13h1v1h-1zM38 13h1v1h-1zM1 14h1v1h-1zM14 14h1v1h-1zM16 14h1v1h-1zM18 14h1v1h-1zM25 14h1v1h-1zM32 14h1v1h-1zM35 14h1v1h-1zM39 14h1v1h-1zM0 15h1v1h-1zM4 15h1v1h-1zM13 15h1v1h-1zM24 15h1v1h-1zM34 15h1v1h-1zM38 15h1v1h-1zM39 15h1v1h-1zM24 16h1v1h-1zM26 16h1v1h-1zM29 16h1v1h-1zM39 16h1v1h-1z"/><path fill="rgb(140,140,140)" d="M2 0h1v1h-1zM7 0h1v1h-1zM8 0h1v1h-1zM10 0h1v1h-1zM16 0h1v1h-1zM17 1h1v1h-1zM25 1h1v1h-1zM32 1h1v1h-1zM35 1h1v1h-1zM38 1h1v1h-1zM2 2h1v1h-1zM7 2h1v1h-1zM10 2h1v1h-1zM19 2h1v1h-1zM27 2h1v1h-1zM2 3h1v1h-1zM4 3h1v1h-1zM15 3h1v1h-1zM17 3h1v1h-1zM18 3h1v1h-1zM23 3h1v1h-1zM25 3h1v1h-1zM26 3h1v1h-1zM34 3h1v1h-1zM37 3h1v1h-1zM38 3h1v1h-1zM19 4h1v1h-1zM27 4h1v1h-1zM30 4h1v1h-1zM39 4h1v1h-1zM0 5h1v1h-1zM2 5h1v1h-1zM11 5h1v1h-1zM31 5h1v1h-1zM35 5h1v1h-1zM11 6h1v1h-1zM20 6h1v1h-1zM22 6h1v1h-1zM29 6h1v1h-1zM3 7h1v1h-1zM9 7h1v1h-1zM13 7h1v1h-1zM19 7h1v1h-1zM0 8h1v1h-1zM4 8h1v1h-1zM9 8h1v1h-1zM18 8h1v1h-1zM23 8h1v1h-1zM39 8h1v1h-1zM2 9h1v1h-1zM3 9h1v1h-1zM5 9h1v1h-1zM8 9h1v1h-1zM13 9h1v1h-1zM16 9h1v1h-1zM17 9h1v1h-1zM18 9h1v1h-1zM21 9h1v1h-1zM25 9h1v1h-1zM5 10h1v1h-1zM18 10h1v1h-1zM28 10h1v1h-1zM30 10h1v1h-1zM2 11h1v1h-1zM6 11h1v1h-1zM15 11h1v1h-1zM17 11h1v1h-1zM28 11h1v1h-1zM10 12h1v1h-1zM18 12h1v1h-1zM32 12h1v1h-1zM39 12h1v1h-1zM4 13h1v1h-1zM6 13h1v1h-1zM8 13h1v1h-1zM12 13h1v1h-1zM14 13h1v1h-1zM16 13h1v1h-1zM19 13h1v1h-1zM31 13h1v1h-1zM32 13h1v1h-1zM33 13h1v1h-1zM36 13h1v1h-1zM37 13h1v1h-1zM8 14h1v1h-1zM17 14h1v1h-1zM21 14h1v1h-1zM31 14h1v1h-1zM8 15h1v1h-1zM10 15h1v1h-1zM16 15h1v1h-1zM18 15h1v1h-1zM6 16h1v1h-1zM7 16h1v1h-1zM27 16h1v1h-1zM36 16h1v1h-1zM38 16h1v1h-1z"/><path fill="rgb(166,166,166)" d="M1 0h1v1h-1zM4 0h1v1h-1zM9 0h1v1h-1zM17 0h1v1h-1zM21 0h1v1h-1zM22 0h1v1h-1zM23 0h1v1h-1zM28 0h1v1h-1zM30 0h1v1h-1zM32 0h1v1h-1zM36 0h1v1h-1zM21 1h1v1h-1zM28 1h1v1h-1zM29 1h1v1h-1zM37 1h1v1h-1zM39 1h1v1h-1zM3 2h1v1h-1zM5 2h1v1h-1zM8 2h1v1h-1zM9 2h1v1h-1zM11 2h1v1h-1zM12 2h1v1h-1zM15 2h1v1h-1zM17 2h1v1h-1zM20 2h1v1h-1zM23 2h1v1h-1zM24 2h1v1h-1zM25 2h1v1h-1zM28 2h1v1h-1zM32 2h1v1h-1zM33 2h1v1h-1zM34 2h1v1h-1zM36 2h1v1h-1zM38 2h1v1h-1zM1 3h1v1h-1zM5 3h1v1h-1zM10 3h1v1h-1zM12 3h1v1h-1zM14 3h1v1h-1zM22 3h1v1h-1zM27 3h1v1h-1zM29 3h1v1h-1zM31 3h1v1h-1zM36 3h1v1h-1zM0 4h1v1h-1zM6 4h1v1h-1zM8 4h1v1h-1zM18 4h1v1h-1zM26 4h1v1h-1zM36 4h1v1h-1zM1 5h1v1h-1zM13 5h1v1h-1zM24 5h1v1h-1zM25 5h1v1h-1zM34 5h1v1h-1zM5 6h1v1h-1zM8 6h1v1h-1zM14 6h1v1h-1zM24 6h1v1h-1zM31 6h1v1h-1zM34 6h1v1h-1zM36 6h1v1h-1zM38 6h1v1h-1zM5 7h1v1h-1zM10 7h1v1h-1zM17 7h1v1h-1zM21 7h1v1h-1zM25 7h1v1h-1zM26 7h1v1h-1zM31 7h1v1h-1zM33 7h1v1h-1zM34 7h1v1h-1zM5 8h1v1h-1zM8 8h1v1h-1zM15 8h1v1h-1zM21 8h1v1h-1zM24 8h1v1h-1zM25 8h1v1h-1zM30 8h1v1h-1zM36 8h1v1h-1zM9 9h1v1h-1zM12 9h1v1h-1zM14 9h1v1h-1zM20 9h1v1h-1zM24 9h1v1h-1zM30 9h1v1h-1zM31 9h1v1h-1zM37 9h1v1h-1zM1 10h1v1h-1zM10 10h1v1h-1zM11 10h1v1h-1zM15 10h1v1h-1zM17 10h1v1h-1zM21 10h1v1h-1zM23 10h1v1h-1zM24 10h1v1h-1zM39 10h1v1h-1zM4 11h1v1h-1zM7 11h1v1h-1zM12 11h1v1h-1zM16 11h1v1h-1zM20 11h1v1h-1zM22 11h1v1h-1zM32 11h1v1h-1zM37 11h1v1h-1zM5 12h1v1h-1zM9 12h1v1h-1zM12 12h1v1h-1zM13 12h1v1h-1zM15 12h1v1h-1zM22 12h1v1h-1zM23 12h1v1h-1zM25 12h1v1h-1zM29 12h1v1h-1zM37 12h1v1h-1zM9 13h1v1h-1zM15 13h1v1h-1zM18 13h1v1h-1zM21 13h1v1h-1zM25 13h1v1h-1zM26 13h1v1h-1zM27 13h1v1h-1zM0 14h1v1h-1zM4 14h1v1h-1zM6 14h1v1h-1zM10 14h1v1h-1zM15 14h1v1h-1zM19 14h1v1h-1zM20 14h1v1h-1zM28 14h1v1h-1zM1 15h1v1h-1zM2 15h1v1h-1zM6 15h1v1h-1zM11 15h1v1h-1zM25 15h1v1h-1zM27 15h1v1h-1zM28 15h1v1h-1zM0 16h1v1h-1zM2 16h1v1h-1zM8 16h1v1h-1zM10 16h1v1h-1zM11 16h1v1h-1zM12 16h1v1h-1zM15 16h1v1h-1zM22 16h1v1h-1zM25 16h1v1h-1zM30 16h1v1h-1zM35 16h1v1h-1z"/><path fill="rgb(192,192,192)" d="M0 0h1v1h-1zM6 0h1v1h-1zM12 0h1v1h-1zM19 0h1v1h-1zM24 0h1v1h-1zM25 0h1v1h-1zM26 0h1v1h-1zM34 0h1v1h-1zM35 0h1v1h-1zM0 1h1v1h-1zM3 1h1v1h-1zM7 1h1v1h-1zM8 1h1v1h-1zM12 1h1v1h-1zM15 1h1v1h-1zM20 1h1v1h-1zM22 1h1v1h-1zM23 1h1v1h-1zM34 1h1v1h-1zM0 2h1v1h-1zM14 2h1v1h-1zM9 3h1v1h-1zM20 3h1v1h-1zM21 3h1v1h-1zM30 3h1v1h-1zM1 4h1v1h-1zM3 4h1v1h-1zM11 4h1v1h-1zM12 4h1v1h-1zM32 4h1v1h-1zM35 4h1v1h-1zM6 5h1v1h-1zM18 5h1v1h-1zM21 5h1v1h-1zM32 5h1v1h-1zM36 5h1v1h-1zM3 6h1v1h-1zM13 6h1v1h-1zM15 6h1v1h-1zM21 6h1v1h-1zM23 6h1v1h-1zM37 6h1v1h-1zM2 7h1v1h-1zM18 7h1v1h-1zM30 7h1v1h-1zM32 7h1v1h-1zM38 7h1v1h-1zM13 8h1v1h-1zM19 8h1v1h-1zM20 8h1v1h-1zM22 8h1v1h-1zM34 8h1v1h-1zM37 8h1v1h-1zM7 9h1v1h-1zM10 9h1v1h-1zM15 9h1v1h-1zM27 9h1v1h-1zM32 9h1v1h-1zM34 9h1v1h-1zM36 9h1v1h-1zM6 10h1v1h-1zM14 10h1v1h-1zM19 10h1v1h-1zM27 10h1v1h-1zM29 10h1v1h-1zM33 10h1v1h-1zM19 11h1v1h-1zM25 11h1v1h-1zM26 11h1v1h-1zM30 11h1v1h-1zM36 11h1v1h-1zM38 11h1v1h-1zM39 11h1v1h-1zM16 12h1v1h-1zM17 12h1v1h-1zM21 12h1v1h-1zM35 12h1v1h-1zM1 13h1v1h-1zM23 13h1v1h-1zM24 13h1v1h-1zM35 13h1v1h-1zM33 14h1v1h-1zM3 15h1v1h-1zM9 15h1v1h-1zM12 15h1v1h-1zM23 15h1v1h-1zM33 15h1v1h-1zM9 16h1v1h-1zM13 16h1v1h-1zM14 16h1v1h-1zM18 16h1v1h-1zM19 16h1v1h-1zM21 16h1v1h-1zM28 16h1v1h-1zM31 16h1v1h-1zM37 16h1v1h-1z"/><path fill="rgb(217,217,217)" d="M11 0h1v1h-1zM15 0h1v1h-1zM31 0h1v1h-1zM6 1h1v1h-1zM11 1h1v1h-1zM16 1h1v1h-1zM19 1h1v1h-1zM36 1h1v1h-1zM6 2h1v1h-1zM26 2h1v1h-1zM29 2h1v1h-1zM30 2h1v1h-1zM31 2h1v1h-1zM35 2h1v1h-1zM3 3h1v1h-1zM24 3h1v1h-1zM13 4h1v1h-1zM21 4h1v1h-1zM22 4h1v1h-1zM38 4h1v1h-1zM28 5h1v1h-1zM7 6h1v1h-1zM9 6h1v1h-1zM12 6h1v1h-1zM16 6h1v1h-1zM25 6h1v1h-1zM32 6h1v1h-1zM35 6h1v1h-1zM23 7h1v1h-1zM24 7h1v1h-1zM2 8h1v1h-1zM11 8h1v1h-1zM6 9h1v1h-1zM4 10h1v1h-1zM31 10h1v1h-1zM35 10h1v1h-1zM36 10h1v1h-1zM38 10h1v1h-1zM3 11h1v1h-1zM11 11h1v1h-1zM27 11h1v1h-1zM31 11h1v1h-1zM33 11h1v1h-1zM2 12h1v1h-1zM26 12h1v1h-1zM31 12h1v1h-1zM10 13h1v1h-1zM3 14h1v1h-1zM13 14h1v1h-1zM22 14h1v1h-1zM29 14h1v1h-1zM34 14h1v1h-1zM36 14h1v1h-1zM5 15h1v1h-1zM7 15h1v1h-1zM17 15h1v1h-1zM21 15h1v1h-1zM22 15h1v1h-1zM30 15h1v1h-1zM36 15h1v1h-1zM1 16h1v1h-1zM4 16h1v1h-1z"/><path fill="rgb(243,243,243)" d="M13 0h1v1h-1zM37 0h1v1h-1zM5 1h1v1h-1zM24 1h1v1h-1zM4 2h1v1h-1zM8 3h1v1h-1zM32 3h1v1h-1zM20 4h1v1h-1zM31 4h1v1h-1zM29 5h1v1h-1zM37 5h1v1h-1zM33 6h1v1h-1zM39 6h1v1h-1zM16 7h1v1h-1zM20 7h1v1h-1zM29 7h1v1h-1zM16 8h1v1h-1zM27 8h1v1h-1zM33 9h1v1h-1zM34 10h1v1h-1zM1 11h1v1h-1zM21 11h1v1h-1zM29 11h1v1h-1zM6 12h1v1h-1zM13 13h1v1h-1zM39 13h1v1h-1zM7 14h1v1h-1zM12 14h1v1h-1zM38 14h1v1h-1zM14 15h1v1h-1zM20 15h1v1h-1zM26 15h1v1h-1zM29 15h1v1h-1zM23 16h1v1h-1zM32 16h1v1h-1zM33 16h1v1h-1zM34 16h1v1h-1z"/></g>
<rect x="564" y="94.9" width="89.6" height="38.0" filter="url(#fFlat)"/>
<rect x="656.4" y="94.9" width="90" height="38.0" filter="url(#fSmooth)" transform="translate(0,0)"/>
<rect x="467.6" y="94.5" width="280.4" height="38.5" fill="none" stroke="#0000ff" stroke-width="2.3"/>
<rect x="466.2" y="93.9" width="3" height="39.5" fill="#0000ff"/>
<text x="463.20" y="105.60" class="s" font-size="8.06" fill="#222" text-anchor="end" textLength="16.92" lengthAdjust="spacingAndGlyphs" xml:space="preserve" >0.32</text>
<text x="463.20" y="114.40" class="s" font-size="8.06" fill="#222" text-anchor="end" textLength="16.92" lengthAdjust="spacingAndGlyphs" xml:space="preserve" >1.46</text>
<text x="463.20" y="123.20" class="s" font-size="8.06" fill="#222" text-anchor="end" textLength="14.51" lengthAdjust="spacingAndGlyphs" xml:space="preserve" >208</text>
<text x="750.70" y="99.70" class="s" font-size="6.36" fill="#222" text-anchor="start" textLength="16.12" lengthAdjust="spacingAndGlyphs" xml:space="preserve" >0.64&quot;</text>
<text x="750.70" y="107.10" class="s" font-size="6.36" fill="#222" text-anchor="start" textLength="31.40" lengthAdjust="spacingAndGlyphs" xml:space="preserve" >(118, 163)</text>
<text x="750.70" y="115.40" class="s" font-size="6.36" fill="#222" text-anchor="start" textLength="30.54" lengthAdjust="spacingAndGlyphs" xml:space="preserve" >20190226</text>
<text x="750.70" y="121.90" class="s" font-size="6.36" fill="#222" text-anchor="start" textLength="25.64" lengthAdjust="spacingAndGlyphs" xml:space="preserve" >v024_03</text>
<text x="750.70" y="129.00" class="s" font-size="6.36" fill="#222" text-anchor="start" textLength="35.59" lengthAdjust="spacingAndGlyphs" xml:space="preserve" >401_LL_017</text>
<g transform="translate(470.50,134.40) scale(2.2375,2.2353)" shape-rendering="crispEdges"><path fill="rgb(12,12,12)" d="M12 4h1v1h-1zM16 8h1v1h-1zM6 9h1v1h-1zM10 13h1v1h-1zM22 15h1v1h-1z"/><path fill="rgb(38,38,38)" d="M8 0h1v1h-1zM36 0h1v1h-1zM2 1h1v1h-1zM7 1h1v1h-1zM6 3h1v1h-1zM11 5h1v1h-1zM13 6h1v1h-1zM28 6h1v1h-1zM15 8h1v1h-1zM25 8h1v1h-1zM31 9h1v1h-1zM10 11h1v1h-1zM8 12h1v1h-1zM7 13h1v1h-1zM21 15h1v1h-1zM25 15h1v1h-1zM31 15h1v1h-1z"/><path fill="rgb(64,64,64)" d="M5 0h1v1h-1zM6 0h1v1h-1zM23 0h1v1h-1zM31 0h1v1h-1zM22 1h1v1h-1zM24 1h1v1h-1zM37 2h1v1h-1zM4 3h1v1h-1zM15 3h1v1h-1zM24 3h1v1h-1zM37 3h1v1h-1zM27 4h1v1h-1zM2 5h1v1h-1zM20 5h1v1h-1zM25 5h1v1h-1zM28 5h1v1h-1zM27 6h1v1h-1zM11 7h1v1h-1zM20 7h1v1h-1zM28 7h1v1h-1zM6 8h1v1h-1zM7 8h1v1h-1zM19 8h1v1h-1zM20 8h1v1h-1zM27 8h1v1h-1zM7 9h1v1h-1zM16 9h1v1h-1zM33 9h1v1h-1zM1 11h1v1h-1zM17 12h1v1h-1zM18 12h1v1h-1zM19 13h1v1h-1zM22 13h1v1h-1zM1 15h1v1h-1zM9 15h1v1h-1zM17 15h1v1h-1zM23 15h1v1h-1z"/><path fill="rgb(89,89,89)" d="M12 0h1v1h-1zM28 0h1v1h-1zM0 1h1v1h-1zM17 1h1v1h-1zM18 1h1v1h-1zM29 1h1v1h-1zM32 1h1v1h-1zM37 1h1v1h-1zM39 1h1v1h-1zM22 2h1v1h-1zM28 2h1v1h-1zM30 2h1v1h-1zM1 3h1v1h-1zM11 3h1v1h-1zM39 3h1v1h-1zM18 4h1v1h-1zM23 4h1v1h-1zM35 4h1v1h-1zM36 4h1v1h-1zM39 4h1v1h-1zM3 5h1v1h-1zM6 5h1v1h-1zM7 5h1v1h-1zM8 5h1v1h-1zM10 5h1v1h-1zM18 5h1v1h-1zM22 5h1v1h-1zM35 5h1v1h-1zM3 6h1v1h-1zM8 6h1v1h-1zM22 6h1v1h-1zM8 7h1v1h-1zM24 7h1v1h-1zM13 8h1v1h-1zM29 8h1v1h-1zM35 8h1v1h-1zM1 9h1v1h-1zM18 9h1v1h-1zM28 9h1v1h-1zM34 9h1v1h-1zM35 10h1v1h-1zM6 11h1v1h-1zM27 11h1v1h-1zM29 11h1v1h-1zM37 11h1v1h-1zM0 12h1v1h-1zM2 12h1v1h-1zM10 12h1v1h-1zM30 12h1v1h-1zM32 12h1v1h-1zM2 13h1v1h-1zM8 13h1v1h-1zM14 13h1v1h-1zM21 14h1v1h-1zM24 14h1v1h-1zM7 15h1v1h-1zM8 15h1v1h-1zM10 15h1v1h-1zM16 15h1v1h-1zM7 16h1v1h-1zM8 16h1v1h-1zM26 16h1v1h-1zM30 16h1v1h-1zM37 16h1v1h-1zM38 16h1v1h-1z"/><path fill="rgb(115,115,115)" d="M10 0h1v1h-1zM13 0h1v1h-1zM14 0h1v1h-1zM17 0h1v1h-1zM33 0h1v1h-1zM37 0h1v1h-1zM39 0h1v1h-1zM8 1h1v1h-1zM10 1h1v1h-1zM11 1h1v1h-1zM13 1h1v1h-1zM19 1h1v1h-1zM35 1h1v1h-1zM5 2h1v1h-1zM12 2h1v1h-1zM19 2h1v1h-1zM23 2h1v1h-1zM34 2h1v1h-1zM35 2h1v1h-1zM5 3h1v1h-1zM14 3h1v1h-1zM16 3h1v1h-1zM25 3h1v1h-1zM35 3h1v1h-1zM36 3h1v1h-1zM0 4h1v1h-1zM2 4h1v1h-1zM6 4h1v1h-1zM7 4h1v1h-1zM13 4h1v1h-1zM17 4h1v1h-1zM26 4h1v1h-1zM30 4h1v1h-1zM31 4h1v1h-1zM33 4h1v1h-1zM4 5h1v1h-1zM5 5h1v1h-1zM15 5h1v1h-1zM19 5h1v1h-1zM24 5h1v1h-1zM31 5h1v1h-1zM38 5h1v1h-1zM0 6h1v1h-1zM5 6h1v1h-1zM10 6h1v1h-1zM14 6h1v1h-1zM25 6h1v1h-1zM26 6h1v1h-1zM34 6h1v1h-1zM5 7h1v1h-1zM29 7h1v1h-1zM36 7h1v1h-1zM37 7h1v1h-1zM8 8h1v1h-1zM10 8h1v1h-1zM21 8h1v1h-1zM26 8h1v1h-1zM31 8h1v1h-1zM3 9h1v1h-1zM4 9h1v1h-1zM9 9h1v1h-1zM15 9h1v1h-1zM24 9h1v1h-1zM32 9h1v1h-1zM35 9h1v1h-1zM36 9h1v1h-1zM3 10h1v1h-1zM4 10h1v1h-1zM7 10h1v1h-1zM11 10h1v1h-1zM13 10h1v1h-1zM26 10h1v1h-1zM28 10h1v1h-1zM31 10h1v1h-1zM19 11h1v1h-1zM22 11h1v1h-1zM26 11h1v1h-1zM28 11h1v1h-1zM31 11h1v1h-1zM34 11h1v1h-1zM3 12h1v1h-1zM9 12h1v1h-1zM16 12h1v1h-1zM22 12h1v1h-1zM26 12h1v1h-1zM31 12h1v1h-1zM34 12h1v1h-1zM37 12h1v1h-1zM1 13h1v1h-1zM9 13h1v1h-1zM11 13h1v1h-1zM12 13h1v1h-1zM20 13h1v1h-1zM24 13h1v1h-1zM25 13h1v1h-1zM26 13h1v1h-1zM33 13h1v1h-1zM34 13h1v1h-1zM2 14h1v1h-1zM7 14h1v1h-1zM8 14h1v1h-1zM12 14h1v1h-1zM15 14h1v1h-1zM20 14h1v1h-1zM22 14h1v1h-1zM25 14h1v1h-1zM33 14h1v1h-1zM34 14h1v1h-1zM38 14h1v1h-1zM4 15h1v1h-1zM5 15h1v1h-1zM15 15h1v1h-1zM20 15h1v1h-1zM30 15h1v1h-1zM4 16h1v1h-1zM5 16h1v1h-1zM10 16h1v1h-1zM11 16h1v1h-1zM24 16h1v1h-1z"/><path fill="rgb(140,140,140)" d="M3 0h1v1h-1zM4 0h1v1h-1zM11 0h1v1h-1zM15 0h1v1h-1zM16 0h1v1h-1zM18 0h1v1h-1zM20 0h1v1h-1zM22 0h1v1h-1zM32 0h1v1h-1zM5 1h1v1h-1zM9 1h1v1h-1zM12 1h1v1h-1zM20 1h1v1h-1zM21 1h1v1h-1zM25 1h1v1h-1zM27 1h1v1h-1zM28 1h1v1h-1zM31 1h1v1h-1zM33 1h1v1h-1zM6 2h1v1h-1zM7 2h1v1h-1zM9 2h1v1h-1zM11 2h1v1h-1zM18 2h1v1h-1zM21 2h1v1h-1zM29 2h1v1h-1zM31 2h1v1h-1zM39 2h1v1h-1zM10 3h1v1h-1zM17 3h1v1h-1zM27 3h1v1h-1zM28 3h1v1h-1zM30 3h1v1h-1zM31 3h1v1h-1zM38 3h1v1h-1zM4 4h1v1h-1zM25 4h1v1h-1zM28 4h1v1h-1zM0 5h1v1h-1zM14 5h1v1h-1zM23 5h1v1h-1zM16 6h1v1h-1zM18 6h1v1h-1zM19 6h1v1h-1zM21 6h1v1h-1zM29 6h1v1h-1zM30 6h1v1h-1zM31 6h1v1h-1zM38 6h1v1h-1zM1 7h1v1h-1zM4 7h1v1h-1zM6 7h1v1h-1zM9 7h1v1h-1zM10 7h1v1h-1zM25 7h1v1h-1zM31 7h1v1h-1zM32 7h1v1h-1zM34 7h1v1h-1zM35 7h1v1h-1zM3 8h1v1h-1zM5 8h1v1h-1zM11 8h1v1h-1zM18 8h1v1h-1zM38 8h1v1h-1zM0 9h1v1h-1zM8 9h1v1h-1zM12 9h1v1h-1zM13 9h1v1h-1zM17 9h1v1h-1zM23 9h1v1h-1zM39 9h1v1h-1zM0 10h1v1h-1zM1 10h1v1h-1zM6 10h1v1h-1zM8 10h1v1h-1zM9 10h1v1h-1zM10 10h1v1h-1zM14 10h1v1h-1zM15 10h1v1h-1zM16 10h1v1h-1zM29 10h1v1h-1zM33 10h1v1h-1zM37 10h1v1h-1zM38 10h1v1h-1zM0 11h1v1h-1zM3 11h1v1h-1zM5 11h1v1h-1zM7 11h1v1h-1zM11 11h1v1h-1zM14 11h1v1h-1zM15 11h1v1h-1zM24 11h1v1h-1zM30 11h1v1h-1zM32 11h1v1h-1zM33 11h1v1h-1zM39 11h1v1h-1zM5 12h1v1h-1zM12 12h1v1h-1zM14 12h1v1h-1zM20 12h1v1h-1zM21 12h1v1h-1zM24 12h1v1h-1zM29 12h1v1h-1zM39 12h1v1h-1zM0 13h1v1h-1zM3 13h1v1h-1zM15 13h1v1h-1zM18 13h1v1h-1zM28 13h1v1h-1zM29 13h1v1h-1zM31 13h1v1h-1zM32 13h1v1h-1zM37 13h1v1h-1zM38 13h1v1h-1zM1 14h1v1h-1zM6 14h1v1h-1zM9 14h1v1h-1zM10 14h1v1h-1zM11 14h1v1h-1zM13 14h1v1h-1zM18 14h1v1h-1zM19 14h1v1h-1zM3 15h1v1h-1zM12 15h1v1h-1zM14 15h1v1h-1zM18 15h1v1h-1zM24 15h1v1h-1zM27 15h1v1h-1zM0 16h1v1h-1zM1 16h1v1h-1zM13 16h1v1h-1zM16 16h1v1h-1zM22 16h1v1h-1zM27 16h1v1h-1zM31 16h1v1h-1zM34 16h1v1h-1zM35 16h1v1h-1zM36 16h1v1h-1zM39 16h1v1h-1z"/><path fill="rgb(166,166,166)" d="M1 0h1v1h-1zM7 0h1v1h-1zM25 0h1v1h-1zM30 0h1v1h-1zM38 0h1v1h-1zM14 1h1v1h-1zM16 1h1v1h-1zM26 1h1v1h-1zM36 1h1v1h-1zM3 2h1v1h-1zM15 2h1v1h-1zM16 2h1v1h-1zM17 2h1v1h-1zM24 2h1v1h-1zM27 2h1v1h-1zM32 2h1v1h-1zM36 2h1v1h-1zM38 2h1v1h-1zM7 3h1v1h-1zM9 3h1v1h-1zM12 3h1v1h-1zM13 3h1v1h-1zM21 3h1v1h-1zM23 3h1v1h-1zM32 3h1v1h-1zM34 3h1v1h-1zM5 4h1v1h-1zM9 4h1v1h-1zM11 4h1v1h-1zM16 4h1v1h-1zM19 4h1v1h-1zM24 4h1v1h-1zM1 5h1v1h-1zM13 5h1v1h-1zM16 5h1v1h-1zM26 5h1v1h-1zM27 5h1v1h-1zM29 5h1v1h-1zM36 5h1v1h-1zM37 5h1v1h-1zM39 5h1v1h-1zM2 6h1v1h-1zM6 6h1v1h-1zM11 6h1v1h-1zM17 6h1v1h-1zM24 6h1v1h-1zM32 6h1v1h-1zM37 6h1v1h-1zM0 7h1v1h-1zM3 7h1v1h-1zM13 7h1v1h-1zM15 7h1v1h-1zM17 7h1v1h-1zM23 7h1v1h-1zM38 7h1v1h-1zM0 8h1v1h-1zM2 8h1v1h-1zM12 8h1v1h-1zM14 8h1v1h-1zM22 8h1v1h-1zM23 8h1v1h-1zM33 8h1v1h-1zM36 8h1v1h-1zM37 8h1v1h-1zM39 8h1v1h-1zM5 9h1v1h-1zM10 9h1v1h-1zM11 9h1v1h-1zM25 9h1v1h-1zM2 10h1v1h-1zM12 10h1v1h-1zM17 10h1v1h-1zM18 10h1v1h-1zM21 10h1v1h-1zM25 10h1v1h-1zM30 10h1v1h-1zM34 10h1v1h-1zM39 10h1v1h-1zM8 11h1v1h-1zM12 11h1v1h-1zM17 11h1v1h-1zM38 11h1v1h-1zM6 12h1v1h-1zM7 12h1v1h-1zM13 12h1v1h-1zM15 12h1v1h-1zM23 12h1v1h-1zM33 12h1v1h-1zM36 12h1v1h-1zM17 13h1v1h-1zM21 13h1v1h-1zM30 13h1v1h-1zM36 13h1v1h-1zM39 13h1v1h-1zM0 14h1v1h-1zM5 14h1v1h-1zM14 14h1v1h-1zM16 14h1v1h-1zM17 14h1v1h-1zM27 14h1v1h-1zM28 14h1v1h-1zM32 14h1v1h-1zM35 14h1v1h-1zM39 14h1v1h-1zM0 15h1v1h-1zM6 15h1v1h-1zM26 15h1v1h-1zM32 15h1v1h-1zM37 15h1v1h-1zM39 15h1v1h-1zM3 16h1v1h-1zM19 16h1v1h-1zM20 16h1v1h-1zM21 16h1v1h-1zM28 16h1v1h-1zM29 16h1v1h-1zM33 16h1v1h-1z"/><path fill="rgb(192,192,192)" d="M0 0h1v1h-1zM2 0h1v1h-1zM9 0h1v1h-1zM19 0h1v1h-1zM21 0h1v1h-1zM27 0h1v1h-1zM29 0h1v1h-1zM35 0h1v1h-1zM1 1h1v1h-1zM4 1h1v1h-1zM30 1h1v1h-1zM34 1h1v1h-1zM0 2h1v1h-1zM2 2h1v1h-1zM4 2h1v1h-1zM10 2h1v1h-1zM33 2h1v1h-1zM0 3h1v1h-1zM2 3h1v1h-1zM3 3h1v1h-1zM18 3h1v1h-1zM19 3h1v1h-1zM20 3h1v1h-1zM22 3h1v1h-1zM26 3h1v1h-1zM29 3h1v1h-1zM33 3h1v1h-1zM3 4h1v1h-1zM8 4h1v1h-1zM10 4h1v1h-1zM14 4h1v1h-1zM15 4h1v1h-1zM20 4h1v1h-1zM21 4h1v1h-1zM29 4h1v1h-1zM32 4h1v1h-1zM34 4h1v1h-1zM37 4h1v1h-1zM9 5h1v1h-1zM17 5h1v1h-1zM21 5h1v1h-1zM30 5h1v1h-1zM32 5h1v1h-1zM34 5h1v1h-1zM7 6h1v1h-1zM15 6h1v1h-1zM23 6h1v1h-1zM35 6h1v1h-1zM36 6h1v1h-1zM7 7h1v1h-1zM14 7h1v1h-1zM16 7h1v1h-1zM18 7h1v1h-1zM21 7h1v1h-1zM22 7h1v1h-1zM26 7h1v1h-1zM27 7h1v1h-1zM4 8h1v1h-1zM24 8h1v1h-1zM30 8h1v1h-1zM32 8h1v1h-1zM34 8h1v1h-1zM14 9h1v1h-1zM19 9h1v1h-1zM21 9h1v1h-1zM26 9h1v1h-1zM27 9h1v1h-1zM29 9h1v1h-1zM30 9h1v1h-1zM37 9h1v1h-1zM5 10h1v1h-1zM19 10h1v1h-1zM22 10h1v1h-1zM23 10h1v1h-1zM24 10h1v1h-1zM27 10h1v1h-1zM2 11h1v1h-1zM18 11h1v1h-1zM23 11h1v1h-1zM25 11h1v1h-1zM19 12h1v1h-1zM25 12h1v1h-1zM28 12h1v1h-1zM35 12h1v1h-1zM38 12h1v1h-1zM4 13h1v1h-1zM6 13h1v1h-1zM13 13h1v1h-1zM16 13h1v1h-1zM35 13h1v1h-1zM29 14h1v1h-1zM36 14h1v1h-1zM37 14h1v1h-1zM11 15h1v1h-1zM13 15h1v1h-1zM28 15h1v1h-1zM2 16h1v1h-1zM9 16h1v1h-1zM18 16h1v1h-1z"/><path fill="rgb(217,217,217)" d="M24 0h1v1h-1zM26 0h1v1h-1zM34 0h1v1h-1zM3 1h1v1h-1zM6 1h1v1h-1zM15 1h1v1h-1zM23 1h1v1h-1zM1 2h1v1h-1zM13 2h1v1h-1zM14 2h1v1h-1zM20 2h1v1h-1zM1 4h1v1h-1zM38 4h1v1h-1zM33 5h1v1h-1zM1 6h1v1h-1zM4 6h1v1h-1zM12 6h1v1h-1zM39 6h1v1h-1zM12 7h1v1h-1zM19 7h1v1h-1zM33 7h1v1h-1zM39 7h1v1h-1zM9 8h1v1h-1zM17 8h1v1h-1zM2 9h1v1h-1zM20 10h1v1h-1zM36 10h1v1h-1zM9 11h1v1h-1zM13 11h1v1h-1zM16 11h1v1h-1zM35 11h1v1h-1zM36 11h1v1h-1zM1 12h1v1h-1zM27 12h1v1h-1zM5 13h1v1h-1zM23 13h1v1h-1zM27 13h1v1h-1zM3 14h1v1h-1zM26 14h1v1h-1zM31 14h1v1h-1zM2 15h1v1h-1zM35 15h1v1h-1zM36 15h1v1h-1zM6 16h1v1h-1zM15 16h1v1h-1zM23 16h1v1h-1z"/><path fill="rgb(243,243,243)" d="M38 1h1v1h-1zM8 2h1v1h-1zM25 2h1v1h-1zM26 2h1v1h-1zM8 3h1v1h-1zM22 4h1v1h-1zM12 5h1v1h-1zM9 6h1v1h-1zM20 6h1v1h-1zM33 6h1v1h-1zM2 7h1v1h-1zM30 7h1v1h-1zM1 8h1v1h-1zM28 8h1v1h-1zM20 9h1v1h-1zM22 9h1v1h-1zM38 9h1v1h-1zM32 10h1v1h-1zM4 11h1v1h-1zM20 11h1v1h-1zM21 11h1v1h-1zM4 12h1v1h-1zM11 12h1v1h-1zM4 14h1v1h-1zM23 14h1v1h-1zM30 14h1v1h-1zM19 15h1v1h-1zM29 15h1v1h-1zM33 15h1v1h-1zM34 15h1v1h-1zM38 15h1v1h-1zM12 16h1v1h-1zM14 16h1v1h-1zM17 16h1v1h-1zM25 16h1v1h-1zM32 16h1v1h-1z"/></g>
<rect x="564" y="134.4" width="89.6" height="38.0" filter="url(#fFlat)"/>
<rect x="656.4" y="134.4" width="90" height="38.0" filter="url(#fSmooth)" transform="translate(0,0)"/>
<rect x="467.6" y="134.0" width="280.4" height="38.5" fill="none" stroke="#00ff00" stroke-width="2.3"/>
<rect x="466.2" y="133.4" width="3" height="39.5" fill="#00ff00"/>
<text x="463.20" y="145.10" class="s" font-size="8.06" fill="#222" text-anchor="end" textLength="16.92" lengthAdjust="spacingAndGlyphs" xml:space="preserve" >0.21</text>
<text x="463.20" y="153.90" class="s" font-size="8.06" fill="#222" text-anchor="end" textLength="16.92" lengthAdjust="spacingAndGlyphs" xml:space="preserve" >1.50</text>
<text x="463.20" y="162.70" class="s" font-size="8.06" fill="#222" text-anchor="end" textLength="14.51" lengthAdjust="spacingAndGlyphs" xml:space="preserve" >209</text>
<text x="750.70" y="139.20" class="s" font-size="6.36" fill="#222" text-anchor="start" textLength="16.12" lengthAdjust="spacingAndGlyphs" xml:space="preserve" >0.86&quot;</text>
<text x="750.70" y="146.60" class="s" font-size="6.36" fill="#222" text-anchor="start" textLength="31.40" lengthAdjust="spacingAndGlyphs" xml:space="preserve" >(118, 154)</text>
<text x="750.70" y="154.90" class="s" font-size="6.36" fill="#222" text-anchor="start" textLength="30.54" lengthAdjust="spacingAndGlyphs" xml:space="preserve" >20190226</text>
<text x="750.70" y="161.40" class="s" font-size="6.36" fill="#222" text-anchor="start" textLength="25.64" lengthAdjust="spacingAndGlyphs" xml:space="preserve" >v024_01</text>
<text x="750.70" y="168.50" class="s" font-size="6.36" fill="#222" text-anchor="start" textLength="35.59" lengthAdjust="spacingAndGlyphs" xml:space="preserve" >401_LL_016</text>
<g transform="translate(470.50,174.40) scale(2.2375,2.2353)" shape-rendering="crispEdges"><path fill="rgb(12,12,12)" d="M5 0h1v1h-1zM25 5h1v1h-1zM2 7h1v1h-1zM15 10h1v1h-1zM21 11h1v1h-1z"/><path fill="rgb(38,38,38)" d="M14 0h1v1h-1zM24 0h1v1h-1zM24 1h1v1h-1zM31 1h1v1h-1zM38 2h1v1h-1zM21 3h1v1h-1zM23 3h1v1h-1zM13 7h1v1h-1zM38 7h1v1h-1zM0 11h1v1h-1zM16 11h1v1h-1zM11 12h1v1h-1zM9 13h1v1h-1zM9 14h1v1h-1zM22 14h1v1h-1zM28 14h1v1h-1zM10 15h1v1h-1zM27 15h1v1h-1zM36 15h1v1h-1z"/><path fill="rgb(64,64,64)" d="M1 0h1v1h-1zM6 0h1v1h-1zM12 0h1v1h-1zM18 0h1v1h-1zM18 1h1v1h-1zM17 2h1v1h-1zM2 3h1v1h-1zM10 3h1v1h-1zM30 3h1v1h-1zM32 3h1v1h-1zM4 4h1v1h-1zM7 4h1v1h-1zM31 4h1v1h-1zM14 5h1v1h-1zM1 6h1v1h-1zM8 6h1v1h-1zM25 6h1v1h-1zM34 6h1v1h-1zM4 7h1v1h-1zM19 9h1v1h-1zM33 9h1v1h-1zM6 10h1v1h-1zM14 10h1v1h-1zM37 10h1v1h-1zM10 11h1v1h-1zM31 11h1v1h-1zM39 11h1v1h-1zM0 12h1v1h-1zM21 12h1v1h-1zM25 12h1v1h-1zM7 13h1v1h-1zM7 14h1v1h-1zM27 14h1v1h-1zM11 15h1v1h-1zM19 16h1v1h-1zM30 16h1v1h-1zM38 16h1v1h-1z"/><path fill="rgb(89,89,89)" d="M4 0h1v1h-1zM13 0h1v1h-1zM29 0h1v1h-1zM12 1h1v1h-1zM30 1h1v1h-1zM3 2h1v1h-1zM23 2h1v1h-1zM27 2h1v1h-1zM30 2h1v1h-1zM1 3h1v1h-1zM4 3h1v1h-1zM12 3h1v1h-1zM25 3h1v1h-1zM26 3h1v1h-1zM35 3h1v1h-1zM39 3h1v1h-1zM17 4h1v1h-1zM22 4h1v1h-1zM32 4h1v1h-1zM34 4h1v1h-1zM39 4h1v1h-1zM1 5h1v1h-1zM4 5h1v1h-1zM9 5h1v1h-1zM23 5h1v1h-1zM39 5h1v1h-1zM3 6h1v1h-1zM14 6h1v1h-1zM18 6h1v1h-1zM19 6h1v1h-1zM27 6h1v1h-1zM28 6h1v1h-1zM29 6h1v1h-1zM0 7h1v1h-1zM11 7h1v1h-1zM34 7h1v1h-1zM4 8h1v1h-1zM9 8h1v1h-1zM18 8h1v1h-1zM21 8h1v1h-1zM6 9h1v1h-1zM9 9h1v1h-1zM2 10h1v1h-1zM5 10h1v1h-1zM8 10h1v1h-1zM17 10h1v1h-1zM19 10h1v1h-1zM22 10h1v1h-1zM27 10h1v1h-1zM29 10h1v1h-1zM32 10h1v1h-1zM4 11h1v1h-1zM12 11h1v1h-1zM18 11h1v1h-1zM34 11h1v1h-1zM14 12h1v1h-1zM31 12h1v1h-1zM35 12h1v1h-1zM23 13h1v1h-1zM27 13h1v1h-1zM30 13h1v1h-1zM23 14h1v1h-1zM12 15h1v1h-1zM18 15h1v1h-1zM19 15h1v1h-1zM2 16h1v1h-1zM16 16h1v1h-1z"/><path fill="rgb(115,115,115)" d="M2 0h1v1h-1zM39 0h1v1h-1zM3 1h1v1h-1zM4 1h1v1h-1zM16 1h1v1h-1zM23 1h1v1h-1zM32 1h1v1h-1zM2 2h1v1h-1zM16 2h1v1h-1zM25 2h1v1h-1zM26 2h1v1h-1zM37 2h1v1h-1zM0 3h1v1h-1zM5 3h1v1h-1zM6 3h1v1h-1zM11 3h1v1h-1zM14 3h1v1h-1zM22 3h1v1h-1zM31 3h1v1h-1zM38 3h1v1h-1zM6 4h1v1h-1zM26 4h1v1h-1zM29 4h1v1h-1zM37 4h1v1h-1zM3 5h1v1h-1zM7 5h1v1h-1zM12 5h1v1h-1zM13 5h1v1h-1zM16 5h1v1h-1zM20 5h1v1h-1zM24 5h1v1h-1zM27 5h1v1h-1zM29 5h1v1h-1zM4 6h1v1h-1zM12 6h1v1h-1zM17 6h1v1h-1zM3 7h1v1h-1zM9 7h1v1h-1zM24 7h1v1h-1zM31 7h1v1h-1zM32 7h1v1h-1zM35 7h1v1h-1zM39 7h1v1h-1zM3 8h1v1h-1zM15 8h1v1h-1zM19 8h1v1h-1zM22 8h1v1h-1zM23 8h1v1h-1zM29 8h1v1h-1zM31 8h1v1h-1zM33 8h1v1h-1zM38 8h1v1h-1zM39 8h1v1h-1zM2 9h1v1h-1zM12 9h1v1h-1zM15 9h1v1h-1zM23 9h1v1h-1zM25 9h1v1h-1zM26 9h1v1h-1zM28 9h1v1h-1zM29 9h1v1h-1zM34 9h1v1h-1zM36 9h1v1h-1zM39 9h1v1h-1zM20 10h1v1h-1zM36 10h1v1h-1zM3 11h1v1h-1zM5 11h1v1h-1zM7 11h1v1h-1zM25 11h1v1h-1zM33 11h1v1h-1zM35 11h1v1h-1zM4 12h1v1h-1zM23 12h1v1h-1zM34 12h1v1h-1zM36 12h1v1h-1zM37 12h1v1h-1zM3 13h1v1h-1zM5 13h1v1h-1zM11 13h1v1h-1zM17 13h1v1h-1zM19 13h1v1h-1zM31 13h1v1h-1zM0 14h1v1h-1zM6 14h1v1h-1zM11 14h1v1h-1zM14 14h1v1h-1zM16 14h1v1h-1zM18 14h1v1h-1zM19 14h1v1h-1zM20 14h1v1h-1zM25 14h1v1h-1zM33 14h1v1h-1zM38 14h1v1h-1zM0 15h1v1h-1zM3 15h1v1h-1zM33 15h1v1h-1zM37 15h1v1h-1zM8 16h1v1h-1zM10 16h1v1h-1zM13 16h1v1h-1zM14 16h1v1h-1zM15 16h1v1h-1zM21 16h1v1h-1zM24 16h1v1h-1zM28 16h1v1h-1zM34 16h1v1h-1z"/><path fill="rgb(140,140,140)" d="M15 0h1v1h-1zM16 0h1v1h-1zM20 0h1v1h-1zM21 0h1v1h-1zM22 0h1v1h-1zM26 0h1v1h-1zM30 0h1v1h-1zM31 0h1v1h-1zM32 0h1v1h-1zM35 0h1v1h-1zM1 1h1v1h-1zM2 1h1v1h-1zM7 1h1v1h-1zM8 1h1v1h-1zM13 1h1v1h-1zM14 1h1v1h-1zM17 1h1v1h-1zM20 1h1v1h-1zM21 1h1v1h-1zM35 1h1v1h-1zM1 2h1v1h-1zM4 2h1v1h-1zM5 2h1v1h-1zM8 2h1v1h-1zM13 2h1v1h-1zM15 2h1v1h-1zM22 2h1v1h-1zM28 2h1v1h-1zM29 2h1v1h-1zM39 2h1v1h-1zM15 3h1v1h-1zM17 3h1v1h-1zM18 3h1v1h-1zM34 3h1v1h-1zM8 4h1v1h-1zM11 4h1v1h-1zM13 4h1v1h-1zM16 4h1v1h-1zM27 4h1v1h-1zM28 4h1v1h-1zM30 4h1v1h-1zM36 4h1v1h-1zM8 5h1v1h-1zM10 5h1v1h-1zM19 5h1v1h-1zM21 5h1v1h-1zM22 5h1v1h-1zM32 5h1v1h-1zM34 5h1v1h-1zM35 5h1v1h-1zM37 5h1v1h-1zM2 6h1v1h-1zM5 6h1v1h-1zM6 6h1v1h-1zM10 6h1v1h-1zM11 6h1v1h-1zM15 6h1v1h-1zM21 6h1v1h-1zM30 6h1v1h-1zM1 7h1v1h-1zM7 7h1v1h-1zM8 7h1v1h-1zM16 7h1v1h-1zM19 7h1v1h-1zM27 7h1v1h-1zM28 7h1v1h-1zM30 7h1v1h-1zM36 7h1v1h-1zM37 7h1v1h-1zM0 8h1v1h-1zM2 8h1v1h-1zM5 8h1v1h-1zM10 8h1v1h-1zM13 8h1v1h-1zM14 8h1v1h-1zM16 8h1v1h-1zM20 8h1v1h-1zM24 8h1v1h-1zM27 8h1v1h-1zM34 8h1v1h-1zM35 8h1v1h-1zM36 8h1v1h-1zM37 8h1v1h-1zM4 9h1v1h-1zM5 9h1v1h-1zM10 9h1v1h-1zM20 9h1v1h-1zM21 9h1v1h-1zM22 9h1v1h-1zM24 9h1v1h-1zM27 9h1v1h-1zM32 9h1v1h-1zM37 9h1v1h-1zM38 9h1v1h-1zM3 10h1v1h-1zM4 10h1v1h-1zM9 10h1v1h-1zM18 10h1v1h-1zM25 10h1v1h-1zM28 10h1v1h-1zM33 10h1v1h-1zM35 10h1v1h-1zM6 11h1v1h-1zM15 11h1v1h-1zM32 11h1v1h-1zM36 11h1v1h-1zM1 12h1v1h-1zM3 12h1v1h-1zM9 12h1v1h-1zM15 12h1v1h-1zM18 12h1v1h-1zM20 12h1v1h-1zM33 12h1v1h-1zM0 13h1v1h-1zM2 13h1v1h-1zM4 13h1v1h-1zM8 13h1v1h-1zM25 13h1v1h-1zM26 13h1v1h-1zM34 13h1v1h-1zM39 13h1v1h-1zM3 14h1v1h-1zM21 14h1v1h-1zM36 14h1v1h-1zM1 15h1v1h-1zM4 15h1v1h-1zM7 15h1v1h-1zM8 15h1v1h-1zM13 15h1v1h-1zM25 15h1v1h-1zM26 15h1v1h-1zM29 15h1v1h-1zM4 16h1v1h-1zM7 16h1v1h-1zM12 16h1v1h-1zM18 16h1v1h-1zM20 16h1v1h-1zM22 16h1v1h-1zM37 16h1v1h-1zM39 16h1v1h-1z"/><path fill="rgb(166,166,166)" d="M0 0h1v1h-1zM3 0h1v1h-1zM9 0h1v1h-1zM10 0h1v1h-1zM17 0h1v1h-1zM19 0h1v1h-1zM25 0h1v1h-1zM27 0h1v1h-1zM34 0h1v1h-1zM36 0h1v1h-1zM37 0h1v1h-1zM38 0h1v1h-1zM9 1h1v1h-1zM10 1h1v1h-1zM15 1h1v1h-1zM34 1h1v1h-1zM36 1h1v1h-1zM38 1h1v1h-1zM39 1h1v1h-1zM9 2h1v1h-1zM11 2h1v1h-1zM18 2h1v1h-1zM21 2h1v1h-1zM24 2h1v1h-1zM31 2h1v1h-1zM32 2h1v1h-1zM35 2h1v1h-1zM7 3h1v1h-1zM8 3h1v1h-1zM13 3h1v1h-1zM24 3h1v1h-1zM27 3h1v1h-1zM29 3h1v1h-1zM36 3h1v1h-1zM0 4h1v1h-1zM5 4h1v1h-1zM10 4h1v1h-1zM15 4h1v1h-1zM18 4h1v1h-1zM19 4h1v1h-1zM21 4h1v1h-1zM24 4h1v1h-1zM25 4h1v1h-1zM11 5h1v1h-1zM15 5h1v1h-1zM26 5h1v1h-1zM30 5h1v1h-1zM31 5h1v1h-1zM36 5h1v1h-1zM0 6h1v1h-1zM7 6h1v1h-1zM16 6h1v1h-1zM20 6h1v1h-1zM32 6h1v1h-1zM36 6h1v1h-1zM38 6h1v1h-1zM39 6h1v1h-1zM5 7h1v1h-1zM6 7h1v1h-1zM12 7h1v1h-1zM14 7h1v1h-1zM15 7h1v1h-1zM17 7h1v1h-1zM18 7h1v1h-1zM20 7h1v1h-1zM26 7h1v1h-1zM33 7h1v1h-1zM6 8h1v1h-1zM8 8h1v1h-1zM12 8h1v1h-1zM17 8h1v1h-1zM25 8h1v1h-1zM26 8h1v1h-1zM28 8h1v1h-1zM7 9h1v1h-1zM13 9h1v1h-1zM0 10h1v1h-1zM10 10h1v1h-1zM13 10h1v1h-1zM24 10h1v1h-1zM2 11h1v1h-1zM8 11h1v1h-1zM14 11h1v1h-1zM20 11h1v1h-1zM23 11h1v1h-1zM28 11h1v1h-1zM30 11h1v1h-1zM5 12h1v1h-1zM13 12h1v1h-1zM19 12h1v1h-1zM24 12h1v1h-1zM26 12h1v1h-1zM28 12h1v1h-1zM30 12h1v1h-1zM32 12h1v1h-1zM38 12h1v1h-1zM14 13h1v1h-1zM15 13h1v1h-1zM16 13h1v1h-1zM18 13h1v1h-1zM20 13h1v1h-1zM21 13h1v1h-1zM28 13h1v1h-1zM33 13h1v1h-1zM35 13h1v1h-1zM37 13h1v1h-1zM10 14h1v1h-1zM13 14h1v1h-1zM15 14h1v1h-1zM17 14h1v1h-1zM24 14h1v1h-1zM30 14h1v1h-1zM31 14h1v1h-1zM32 14h1v1h-1zM37 14h1v1h-1zM6 15h1v1h-1zM15 15h1v1h-1zM16 15h1v1h-1zM17 15h1v1h-1zM20 15h1v1h-1zM21 15h1v1h-1zM28 15h1v1h-1zM32 15h1v1h-1zM35 15h1v1h-1zM39 15h1v1h-1zM0 16h1v1h-1zM1 16h1v1h-1zM5 16h1v1h-1zM6 16h1v1h-1zM11 16h1v1h-1zM23 16h1v1h-1zM26 16h1v1h-1zM27 16h1v1h-1zM32 16h1v1h-1zM35 16h1v1h-1z"/><path fill="rgb(192,192,192)" d="M7 0h1v1h-1zM23 0h1v1h-1zM33 0h1v1h-1zM0 1h1v1h-1zM6 1h1v1h-1zM11 1h1v1h-1zM28 1h1v1h-1zM0 2h1v1h-1zM6 2h1v1h-1zM7 2h1v1h-1zM14 2h1v1h-1zM19 2h1v1h-1zM34 2h1v1h-1zM1 4h1v1h-1zM2 4h1v1h-1zM9 4h1v1h-1zM12 4h1v1h-1zM14 4h1v1h-1zM33 4h1v1h-1zM38 4h1v1h-1zM0 5h1v1h-1zM2 5h1v1h-1zM6 5h1v1h-1zM17 5h1v1h-1zM38 5h1v1h-1zM13 6h1v1h-1zM22 6h1v1h-1zM23 6h1v1h-1zM26 6h1v1h-1zM33 6h1v1h-1zM25 7h1v1h-1zM29 7h1v1h-1zM1 8h1v1h-1zM7 8h1v1h-1zM30 8h1v1h-1zM0 9h1v1h-1zM1 9h1v1h-1zM3 9h1v1h-1zM11 9h1v1h-1zM16 9h1v1h-1zM18 9h1v1h-1zM31 9h1v1h-1zM35 9h1v1h-1zM1 10h1v1h-1zM7 10h1v1h-1zM16 10h1v1h-1zM23 10h1v1h-1zM26 10h1v1h-1zM30 10h1v1h-1zM31 10h1v1h-1zM34 10h1v1h-1zM9 11h1v1h-1zM13 11h1v1h-1zM22 11h1v1h-1zM24 11h1v1h-1zM26 11h1v1h-1zM7 12h1v1h-1zM10 12h1v1h-1zM12 12h1v1h-1zM16 12h1v1h-1zM17 12h1v1h-1zM27 12h1v1h-1zM1 13h1v1h-1zM6 13h1v1h-1zM12 13h1v1h-1zM29 13h1v1h-1zM32 13h1v1h-1zM36 13h1v1h-1zM5 14h1v1h-1zM12 14h1v1h-1zM29 14h1v1h-1zM34 14h1v1h-1zM39 14h1v1h-1zM5 15h1v1h-1zM9 15h1v1h-1zM24 15h1v1h-1zM30 15h1v1h-1zM34 15h1v1h-1zM38 15h1v1h-1zM29 16h1v1h-1zM31 16h1v1h-1zM36 16h1v1h-1z"/><path fill="rgb(217,217,217)" d="M8 0h1v1h-1zM11 0h1v1h-1zM27 1h1v1h-1zM33 1h1v1h-1zM37 1h1v1h-1zM10 2h1v1h-1zM12 2h1v1h-1zM20 2h1v1h-1zM33 2h1v1h-1zM36 2h1v1h-1zM3 3h1v1h-1zM9 3h1v1h-1zM16 3h1v1h-1zM19 3h1v1h-1zM20 3h1v1h-1zM28 3h1v1h-1zM20 4h1v1h-1zM23 4h1v1h-1zM5 5h1v1h-1zM18 5h1v1h-1zM28 5h1v1h-1zM33 5h1v1h-1zM24 6h1v1h-1zM31 6h1v1h-1zM37 6h1v1h-1zM10 7h1v1h-1zM22 7h1v1h-1zM23 7h1v1h-1zM11 8h1v1h-1zM32 8h1v1h-1zM39 10h1v1h-1zM1 11h1v1h-1zM17 11h1v1h-1zM19 11h1v1h-1zM29 11h1v1h-1zM2 12h1v1h-1zM8 12h1v1h-1zM22 12h1v1h-1zM29 12h1v1h-1zM39 12h1v1h-1zM22 13h1v1h-1zM24 13h1v1h-1zM1 14h1v1h-1zM2 14h1v1h-1zM8 14h1v1h-1zM26 14h1v1h-1zM35 14h1v1h-1zM2 15h1v1h-1zM14 15h1v1h-1zM23 15h1v1h-1zM31 15h1v1h-1zM3 16h1v1h-1zM17 16h1v1h-1zM25 16h1v1h-1zM33 16h1v1h-1z"/><path fill="rgb(243,243,243)" d="M28 0h1v1h-1zM5 1h1v1h-1zM19 1h1v1h-1zM22 1h1v1h-1zM25 1h1v1h-1zM26 1h1v1h-1zM29 1h1v1h-1zM33 3h1v1h-1zM37 3h1v1h-1zM3 4h1v1h-1zM35 4h1v1h-1zM9 6h1v1h-1zM35 6h1v1h-1zM21 7h1v1h-1zM8 9h1v1h-1zM14 9h1v1h-1zM17 9h1v1h-1zM30 9h1v1h-1zM11 10h1v1h-1zM12 10h1v1h-1zM21 10h1v1h-1zM38 10h1v1h-1zM11 11h1v1h-1zM27 11h1v1h-1zM37 11h1v1h-1zM38 11h1v1h-1zM6 12h1v1h-1zM10 13h1v1h-1zM13 13h1v1h-1zM38 13h1v1h-1zM4 14h1v1h-1zM22 15h1v1h-1zM9 16h1v1h-1z"/></g>
<rect x="564" y="174.4" width="89.6" height="38.0" filter="url(#fFlat)"/>
<rect x="656.4" y="174.4" width="90" height="38.0" filter="url(#fSmooth)" transform="translate(0,0)"/>
<rect x="467.6" y="174.0" width="280.4" height="38.5" fill="none" stroke="#ffa500" stroke-width="2.3"/>
<rect x="466.2" y="173.4" width="3" height="39.5" fill="#ffa500"/>
<text x="463.20" y="185.10" class="s" font-size="8.06" fill="#222" text-anchor="end" textLength="16.92" lengthAdjust="spacingAndGlyphs" xml:space="preserve" >0.14</text>
<text x="463.20" y="193.90" class="s" font-size="8.06" fill="#222" text-anchor="end" textLength="16.92" lengthAdjust="spacingAndGlyphs" xml:space="preserve" >1.68</text>
<text x="463.20" y="202.70" class="s" font-size="8.06" fill="#222" text-anchor="end" textLength="14.51" lengthAdjust="spacingAndGlyphs" xml:space="preserve" >208</text>
<text x="750.70" y="179.20" class="s" font-size="6.36" fill="#222" text-anchor="start" textLength="16.12" lengthAdjust="spacingAndGlyphs" xml:space="preserve" >1.25&quot;</text>
<text x="750.70" y="186.60" class="s" font-size="6.36" fill="#222" text-anchor="start" textLength="31.40" lengthAdjust="spacingAndGlyphs" xml:space="preserve" >(118, 163)</text>
<text x="750.70" y="194.90" class="s" font-size="6.36" fill="#222" text-anchor="start" textLength="30.54" lengthAdjust="spacingAndGlyphs" xml:space="preserve" >20190226</text>
<text x="750.70" y="201.40" class="s" font-size="6.36" fill="#222" text-anchor="start" textLength="25.64" lengthAdjust="spacingAndGlyphs" xml:space="preserve" >v024_07</text>
<text x="750.70" y="208.50" class="s" font-size="6.36" fill="#222" text-anchor="start" textLength="35.59" lengthAdjust="spacingAndGlyphs" xml:space="preserve" >401_LL_017</text>
<g transform="translate(470.50,213.70) scale(2.2375,2.2353)" shape-rendering="crispEdges"><path fill="rgb(12,12,12)" d="M14 0h1v1h-1zM17 3h1v1h-1zM24 5h1v1h-1zM28 6h1v1h-1zM32 6h1v1h-1zM27 8h1v1h-1zM15 10h1v1h-1zM9 11h1v1h-1zM7 13h1v1h-1zM1 14h1v1h-1z"/><path fill="rgb(38,38,38)" d="M30 0h1v1h-1zM19 1h1v1h-1zM14 3h1v1h-1zM29 5h1v1h-1zM25 6h1v1h-1zM6 7h1v1h-1zM8 11h1v1h-1zM29 11h1v1h-1zM18 12h1v1h-1zM32 12h1v1h-1zM5 14h1v1h-1zM29 14h1v1h-1zM39 16h1v1h-1z"/><path fill="rgb(64,64,64)" d="M9 0h1v1h-1zM14 1h1v1h-1zM23 1h1v1h-1zM25 1h1v1h-1zM37 1h1v1h-1zM2 2h1v1h-1zM26 2h1v1h-1zM12 3h1v1h-1zM39 3h1v1h-1zM8 4h1v1h-1zM16 5h1v1h-1zM20 5h1v1h-1zM4 6h1v1h-1zM19 6h1v1h-1zM26 6h1v1h-1zM37 6h1v1h-1zM6 8h1v1h-1zM13 8h1v1h-1zM30 8h1v1h-1zM18 9h1v1h-1zM20 9h1v1h-1zM33 9h1v1h-1zM2 10h1v1h-1zM16 10h1v1h-1zM35 10h1v1h-1zM7 11h1v1h-1zM27 11h1v1h-1zM27 12h1v1h-1zM33 12h1v1h-1zM0 13h1v1h-1zM4 15h1v1h-1zM12 15h1v1h-1zM35 15h1v1h-1zM0 16h1v1h-1zM1 16h1v1h-1zM2 16h1v1h-1zM9 16h1v1h-1zM25 16h1v1h-1zM37 16h1v1h-1z"/><path fill="rgb(89,89,89)" d="M5 0h1v1h-1zM7 0h1v1h-1zM15 0h1v1h-1zM28 0h1v1h-1zM38 0h1v1h-1zM11 1h1v1h-1zM17 1h1v1h-1zM21 1h1v1h-1zM15 2h1v1h-1zM21 2h1v1h-1zM13 3h1v1h-1zM19 3h1v1h-1zM20 3h1v1h-1zM21 3h1v1h-1zM30 3h1v1h-1zM6 4h1v1h-1zM11 4h1v1h-1zM20 4h1v1h-1zM22 4h1v1h-1zM39 5h1v1h-1zM12 6h1v1h-1zM15 6h1v1h-1zM27 6h1v1h-1zM34 6h1v1h-1zM35 6h1v1h-1zM39 6h1v1h-1zM0 7h1v1h-1zM19 7h1v1h-1zM24 7h1v1h-1zM25 7h1v1h-1zM29 7h1v1h-1zM31 7h1v1h-1zM10 8h1v1h-1zM19 8h1v1h-1zM13 9h1v1h-1zM16 9h1v1h-1zM30 9h1v1h-1zM38 9h1v1h-1zM3 10h1v1h-1zM13 10h1v1h-1zM17 10h1v1h-1zM20 10h1v1h-1zM29 10h1v1h-1zM5 11h1v1h-1zM10 11h1v1h-1zM19 11h1v1h-1zM25 11h1v1h-1zM2 12h1v1h-1zM17 12h1v1h-1zM39 12h1v1h-1zM15 13h1v1h-1zM24 13h1v1h-1zM31 13h1v1h-1zM35 13h1v1h-1zM36 13h1v1h-1zM24 14h1v1h-1zM2 15h1v1h-1zM5 15h1v1h-1zM8 15h1v1h-1zM10 15h1v1h-1zM15 15h1v1h-1zM21 15h1v1h-1zM29 15h1v1h-1zM38 15h1v1h-1zM11 16h1v1h-1zM34 16h1v1h-1zM35 16h1v1h-1zM36 16h1v1h-1z"/><path fill="rgb(115,115,115)" d="M2 0h1v1h-1zM3 0h1v1h-1zM16 0h1v1h-1zM18 0h1v1h-1zM21 0h1v1h-1zM35 0h1v1h-1zM36 0h1v1h-1zM16 1h1v1h-1zM26 1h1v1h-1zM27 1h1v1h-1zM29 1h1v1h-1zM31 1h1v1h-1zM39 1h1v1h-1zM4 2h1v1h-1zM10 2h1v1h-1zM18 2h1v1h-1zM19 2h1v1h-1zM28 2h1v1h-1zM39 2h1v1h-1zM0 3h1v1h-1zM1 3h1v1h-1zM6 3h1v1h-1zM7 3h1v1h-1zM8 3h1v1h-1zM24 3h1v1h-1zM35 3h1v1h-1zM0 4h1v1h-1zM3 4h1v1h-1zM18 4h1v1h-1zM23 4h1v1h-1zM24 4h1v1h-1zM36 4h1v1h-1zM39 4h1v1h-1zM1 5h1v1h-1zM18 5h1v1h-1zM21 5h1v1h-1zM35 5h1v1h-1zM36 5h1v1h-1zM13 6h1v1h-1zM23 7h1v1h-1zM27 7h1v1h-1zM30 7h1v1h-1zM36 7h1v1h-1zM37 7h1v1h-1zM4 8h1v1h-1zM8 8h1v1h-1zM9 8h1v1h-1zM11 8h1v1h-1zM16 8h1v1h-1zM28 8h1v1h-1zM33 8h1v1h-1zM35 8h1v1h-1zM38 8h1v1h-1zM4 9h1v1h-1zM5 9h1v1h-1zM6 9h1v1h-1zM28 9h1v1h-1zM8 10h1v1h-1zM11 10h1v1h-1zM25 10h1v1h-1zM0 11h1v1h-1zM3 11h1v1h-1zM11 11h1v1h-1zM13 11h1v1h-1zM16 11h1v1h-1zM31 11h1v1h-1zM33 11h1v1h-1zM7 12h1v1h-1zM13 12h1v1h-1zM36 12h1v1h-1zM17 13h1v1h-1zM18 13h1v1h-1zM20 13h1v1h-1zM32 13h1v1h-1zM2 14h1v1h-1zM3 14h1v1h-1zM16 14h1v1h-1zM19 14h1v1h-1zM22 14h1v1h-1zM26 14h1v1h-1zM28 14h1v1h-1zM36 14h1v1h-1zM38 14h1v1h-1zM1 15h1v1h-1zM7 15h1v1h-1zM11 15h1v1h-1zM14 15h1v1h-1zM17 15h1v1h-1zM24 15h1v1h-1zM30 15h1v1h-1zM31 15h1v1h-1zM33 15h1v1h-1zM16 16h1v1h-1zM20 16h1v1h-1zM23 16h1v1h-1zM27 16h1v1h-1zM29 16h1v1h-1zM32 16h1v1h-1zM38 16h1v1h-1z"/><path fill="rgb(140,140,140)" d="M8 0h1v1h-1zM10 0h1v1h-1zM13 0h1v1h-1zM20 0h1v1h-1zM24 0h1v1h-1zM8 1h1v1h-1zM24 1h1v1h-1zM34 1h1v1h-1zM35 1h1v1h-1zM3 2h1v1h-1zM5 2h1v1h-1zM9 2h1v1h-1zM11 2h1v1h-1zM22 2h1v1h-1zM23 2h1v1h-1zM32 2h1v1h-1zM3 3h1v1h-1zM4 3h1v1h-1zM9 3h1v1h-1zM18 3h1v1h-1zM22 3h1v1h-1zM37 3h1v1h-1zM4 4h1v1h-1zM7 4h1v1h-1zM10 4h1v1h-1zM13 4h1v1h-1zM14 4h1v1h-1zM17 4h1v1h-1zM27 4h1v1h-1zM29 4h1v1h-1zM33 4h1v1h-1zM37 4h1v1h-1zM0 5h1v1h-1zM2 5h1v1h-1zM3 5h1v1h-1zM4 5h1v1h-1zM7 5h1v1h-1zM11 5h1v1h-1zM15 5h1v1h-1zM17 5h1v1h-1zM22 5h1v1h-1zM27 5h1v1h-1zM28 5h1v1h-1zM31 5h1v1h-1zM33 5h1v1h-1zM2 6h1v1h-1zM5 6h1v1h-1zM7 6h1v1h-1zM16 6h1v1h-1zM29 6h1v1h-1zM30 6h1v1h-1zM38 6h1v1h-1zM2 7h1v1h-1zM8 7h1v1h-1zM11 7h1v1h-1zM12 7h1v1h-1zM15 7h1v1h-1zM17 7h1v1h-1zM33 7h1v1h-1zM34 7h1v1h-1zM2 8h1v1h-1zM3 8h1v1h-1zM14 8h1v1h-1zM17 8h1v1h-1zM24 8h1v1h-1zM31 8h1v1h-1zM0 9h1v1h-1zM8 9h1v1h-1zM10 9h1v1h-1zM11 9h1v1h-1zM23 9h1v1h-1zM29 9h1v1h-1zM31 9h1v1h-1zM34 9h1v1h-1zM6 10h1v1h-1zM7 10h1v1h-1zM19 10h1v1h-1zM27 10h1v1h-1zM34 10h1v1h-1zM36 10h1v1h-1zM39 10h1v1h-1zM1 11h1v1h-1zM6 11h1v1h-1zM17 11h1v1h-1zM21 11h1v1h-1zM23 11h1v1h-1zM28 11h1v1h-1zM30 11h1v1h-1zM35 11h1v1h-1zM0 12h1v1h-1zM1 12h1v1h-1zM5 12h1v1h-1zM15 12h1v1h-1zM19 12h1v1h-1zM22 12h1v1h-1zM28 12h1v1h-1zM29 12h1v1h-1zM35 12h1v1h-1zM37 12h1v1h-1zM2 13h1v1h-1zM6 13h1v1h-1zM25 13h1v1h-1zM27 13h1v1h-1zM8 14h1v1h-1zM14 14h1v1h-1zM17 14h1v1h-1zM0 15h1v1h-1zM3 15h1v1h-1zM13 15h1v1h-1zM22 15h1v1h-1zM25 15h1v1h-1zM28 15h1v1h-1zM32 15h1v1h-1zM3 16h1v1h-1zM5 16h1v1h-1zM6 16h1v1h-1zM14 16h1v1h-1zM19 16h1v1h-1zM22 16h1v1h-1z"/><path fill="rgb(166,166,166)" d="M4 0h1v1h-1zM11 0h1v1h-1zM12 0h1v1h-1zM19 0h1v1h-1zM23 0h1v1h-1zM27 0h1v1h-1zM31 0h1v1h-1zM33 0h1v1h-1zM34 0h1v1h-1zM37 0h1v1h-1zM0 1h1v1h-1zM3 1h1v1h-1zM7 1h1v1h-1zM10 1h1v1h-1zM13 1h1v1h-1zM28 1h1v1h-1zM33 1h1v1h-1zM0 2h1v1h-1zM12 2h1v1h-1zM20 2h1v1h-1zM34 2h1v1h-1zM2 3h1v1h-1zM11 3h1v1h-1zM15 3h1v1h-1zM16 3h1v1h-1zM27 3h1v1h-1zM31 3h1v1h-1zM36 3h1v1h-1zM19 4h1v1h-1zM21 4h1v1h-1zM26 4h1v1h-1zM28 4h1v1h-1zM30 4h1v1h-1zM35 4h1v1h-1zM10 5h1v1h-1zM13 5h1v1h-1zM19 5h1v1h-1zM23 5h1v1h-1zM26 5h1v1h-1zM30 5h1v1h-1zM38 5h1v1h-1zM0 6h1v1h-1zM1 6h1v1h-1zM3 6h1v1h-1zM6 6h1v1h-1zM10 6h1v1h-1zM11 6h1v1h-1zM14 6h1v1h-1zM17 6h1v1h-1zM18 6h1v1h-1zM23 6h1v1h-1zM31 6h1v1h-1zM33 6h1v1h-1zM36 6h1v1h-1zM4 7h1v1h-1zM7 7h1v1h-1zM9 7h1v1h-1zM10 7h1v1h-1zM14 7h1v1h-1zM16 7h1v1h-1zM18 7h1v1h-1zM21 7h1v1h-1zM32 7h1v1h-1zM7 8h1v1h-1zM15 8h1v1h-1zM18 8h1v1h-1zM29 8h1v1h-1zM34 8h1v1h-1zM37 8h1v1h-1zM39 8h1v1h-1zM9 9h1v1h-1zM17 9h1v1h-1zM19 9h1v1h-1zM22 9h1v1h-1zM24 9h1v1h-1zM25 9h1v1h-1zM37 9h1v1h-1zM1 10h1v1h-1zM4 10h1v1h-1zM12 10h1v1h-1zM18 10h1v1h-1zM24 10h1v1h-1zM26 10h1v1h-1zM30 10h1v1h-1zM33 10h1v1h-1zM38 10h1v1h-1zM2 11h1v1h-1zM4 11h1v1h-1zM14 11h1v1h-1zM18 11h1v1h-1zM22 11h1v1h-1zM32 11h1v1h-1zM34 11h1v1h-1zM36 11h1v1h-1zM37 11h1v1h-1zM38 11h1v1h-1zM3 12h1v1h-1zM6 12h1v1h-1zM8 12h1v1h-1zM21 12h1v1h-1zM30 12h1v1h-1zM34 12h1v1h-1zM4 13h1v1h-1zM8 13h1v1h-1zM9 13h1v1h-1zM11 13h1v1h-1zM12 13h1v1h-1zM14 13h1v1h-1zM28 13h1v1h-1zM34 13h1v1h-1zM0 14h1v1h-1zM6 14h1v1h-1zM9 14h1v1h-1zM12 14h1v1h-1zM13 14h1v1h-1zM30 14h1v1h-1zM32 14h1v1h-1zM33 14h1v1h-1zM37 14h1v1h-1zM6 15h1v1h-1zM9 15h1v1h-1zM27 15h1v1h-1zM34 15h1v1h-1zM4 16h1v1h-1zM24 16h1v1h-1zM30 16h1v1h-1zM33 16h1v1h-1z"/><path fill="rgb(192,192,192)" d="M1 0h1v1h-1zM6 0h1v1h-1zM17 0h1v1h-1zM25 0h1v1h-1zM29 0h1v1h-1zM5 1h1v1h-1zM6 1h1v1h-1zM9 1h1v1h-1zM12 1h1v1h-1zM15 1h1v1h-1zM18 1h1v1h-1zM30 1h1v1h-1zM36 1h1v1h-1zM38 1h1v1h-1zM1 2h1v1h-1zM14 2h1v1h-1zM25 2h1v1h-1zM27 2h1v1h-1zM29 2h1v1h-1zM35 2h1v1h-1zM37 2h1v1h-1zM10 3h1v1h-1zM23 3h1v1h-1zM26 3h1v1h-1zM32 3h1v1h-1zM33 3h1v1h-1zM1 4h1v1h-1zM2 4h1v1h-1zM9 4h1v1h-1zM12 4h1v1h-1zM15 4h1v1h-1zM25 4h1v1h-1zM31 4h1v1h-1zM32 4h1v1h-1zM38 4h1v1h-1zM8 5h1v1h-1zM12 5h1v1h-1zM14 5h1v1h-1zM25 5h1v1h-1zM9 6h1v1h-1zM21 6h1v1h-1zM22 6h1v1h-1zM20 7h1v1h-1zM26 7h1v1h-1zM39 7h1v1h-1zM1 8h1v1h-1zM12 8h1v1h-1zM20 8h1v1h-1zM21 8h1v1h-1zM22 8h1v1h-1zM23 8h1v1h-1zM1 9h1v1h-1zM2 9h1v1h-1zM3 9h1v1h-1zM15 9h1v1h-1zM21 9h1v1h-1zM26 9h1v1h-1zM32 9h1v1h-1zM35 9h1v1h-1zM39 9h1v1h-1zM0 10h1v1h-1zM9 10h1v1h-1zM31 10h1v1h-1zM32 10h1v1h-1zM12 11h1v1h-1zM15 11h1v1h-1zM26 11h1v1h-1zM39 11h1v1h-1zM4 12h1v1h-1zM9 12h1v1h-1zM12 12h1v1h-1zM26 12h1v1h-1zM5 13h1v1h-1zM13 13h1v1h-1zM21 13h1v1h-1zM22 13h1v1h-1zM26 13h1v1h-1zM29 13h1v1h-1zM38 13h1v1h-1zM11 14h1v1h-1zM18 14h1v1h-1zM31 14h1v1h-1zM39 14h1v1h-1zM16 15h1v1h-1zM18 15h1v1h-1zM19 15h1v1h-1zM23 15h1v1h-1zM26 15h1v1h-1zM36 15h1v1h-1zM39 15h1v1h-1zM7 16h1v1h-1zM8 16h1v1h-1zM10 16h1v1h-1zM12 16h1v1h-1zM17 16h1v1h-1zM21 16h1v1h-1zM26 16h1v1h-1zM28 16h1v1h-1zM31 16h1v1h-1z"/><path fill="rgb(217,217,217)" d="M22 0h1v1h-1zM32 0h1v1h-1zM4 1h1v1h-1zM13 2h1v1h-1zM17 2h1v1h-1zM31 2h1v1h-1zM36 2h1v1h-1zM38 2h1v1h-1zM5 3h1v1h-1zM25 3h1v1h-1zM28 3h1v1h-1zM38 3h1v1h-1zM5 4h1v1h-1zM16 4h1v1h-1zM5 5h1v1h-1zM32 5h1v1h-1zM8 6h1v1h-1zM20 6h1v1h-1zM24 6h1v1h-1zM3 7h1v1h-1zM5 7h1v1h-1zM22 7h1v1h-1zM28 7h1v1h-1zM38 7h1v1h-1zM0 8h1v1h-1zM25 8h1v1h-1zM26 8h1v1h-1zM32 8h1v1h-1zM36 8h1v1h-1zM7 9h1v1h-1zM12 9h1v1h-1zM14 9h1v1h-1zM27 9h1v1h-1zM5 10h1v1h-1zM14 10h1v1h-1zM21 10h1v1h-1zM28 10h1v1h-1zM24 11h1v1h-1zM10 12h1v1h-1zM16 12h1v1h-1zM20 12h1v1h-1zM23 12h1v1h-1zM24 12h1v1h-1zM10 13h1v1h-1zM23 13h1v1h-1zM33 13h1v1h-1zM37 13h1v1h-1zM39 13h1v1h-1zM7 14h1v1h-1zM15 14h1v1h-1zM20 14h1v1h-1zM23 14h1v1h-1zM25 14h1v1h-1zM27 14h1v1h-1zM34 14h1v1h-1zM20 15h1v1h-1zM37 15h1v1h-1zM13 16h1v1h-1zM18 16h1v1h-1z"/><path fill="rgb(243,243,243)" d="M0 0h1v1h-1zM26 0h1v1h-1zM39 0h1v1h-1zM1 1h1v1h-1zM2 1h1v1h-1zM20 1h1v1h-1zM22 1h1v1h-1zM32 1h1v1h-1zM6 2h1v1h-1zM7 2h1v1h-1zM8 2h1v1h-1zM16 2h1v1h-1zM24 2h1v1h-1zM30 2h1v1h-1zM33 2h1v1h-1zM29 3h1v1h-1zM34 3h1v1h-1zM34 4h1v1h-1zM6 5h1v1h-1zM9 5h1v1h-1zM34 5h1v1h-1zM37 5h1v1h-1zM1 7h1v1h-1zM13 7h1v1h-1zM35 7h1v1h-1zM5 8h1v1h-1zM36 9h1v1h-1zM10 10h1v1h-1zM22 10h1v1h-1zM23 10h1v1h-1zM37 10h1v1h-1zM20 11h1v1h-1zM11 12h1v1h-1zM14 12h1v1h-1zM25 12h1v1h-1zM31 12h1v1h-1zM38 12h1v1h-1zM1 13h1v1h-1zM3 13h1v1h-1zM16 13h1v1h-1zM19 13h1v1h-1zM30 13h1v1h-1zM4 14h1v1h-1zM10 14h1v1h-1zM21 14h1v1h-1zM35 14h1v1h-1zM15 16h1v1h-1z"/></g>
<rect x="564" y="213.7" width="89.6" height="38.0" filter="url(#fFlat)"/>
<rect x="656.4" y="213.7" width="90" height="38.0" filter="url(#fSmooth)" transform="translate(0,0)"/>
<rect x="467.6" y="213.3" width="280.4" height="38.5" fill="none" stroke="#ff0000" stroke-width="2.3"/>
<rect x="466.2" y="212.7" width="3" height="39.5" fill="#ff0000"/>
<text x="463.20" y="224.40" class="s" font-size="8.06" fill="#222" text-anchor="end" textLength="16.92" lengthAdjust="spacingAndGlyphs" xml:space="preserve" >0.11</text>
<text x="463.20" y="233.20" class="s" font-size="8.06" fill="#222" text-anchor="end" textLength="16.92" lengthAdjust="spacingAndGlyphs" xml:space="preserve" >1.85</text>
<text x="463.20" y="242.00" class="s" font-size="8.06" fill="#222" text-anchor="end" textLength="14.51" lengthAdjust="spacingAndGlyphs" xml:space="preserve" >228</text>
<text x="750.70" y="218.50" class="s" font-size="6.36" fill="#222" text-anchor="start" textLength="16.12" lengthAdjust="spacingAndGlyphs" xml:space="preserve" >1.31&quot;</text>
<text x="750.70" y="225.90" class="s" font-size="6.36" fill="#222" text-anchor="start" textLength="31.40" lengthAdjust="spacingAndGlyphs" xml:space="preserve" >(121, 986)</text>
<text x="750.70" y="234.20" class="s" font-size="6.36" fill="#222" text-anchor="start" textLength="30.54" lengthAdjust="spacingAndGlyphs" xml:space="preserve" >20190226</text>
<text x="750.70" y="240.70" class="s" font-size="6.36" fill="#222" text-anchor="start" textLength="25.64" lengthAdjust="spacingAndGlyphs" xml:space="preserve" >v024_07</text>
<text x="750.70" y="247.80" class="s" font-size="6.36" fill="#222" text-anchor="start" textLength="36.42" lengthAdjust="spacingAndGlyphs" xml:space="preserve" >401_RL_109</text>
<text x="865.20" y="47.00" class="s" font-size="10.60" fill="#111" text-anchor="middle" textLength="44.16" lengthAdjust="spacingAndGlyphs" xml:space="preserve" >With Sky</text>
<text x="865.20" y="57.80" class="s" font-size="10.60" fill="#111" text-anchor="middle" textLength="69.27" lengthAdjust="spacingAndGlyphs" xml:space="preserve" >x, y: 118, 163</text>
<text x="965.90" y="47.00" class="s" font-size="10.60" fill="#111" text-anchor="middle" textLength="62.88" lengthAdjust="spacingAndGlyphs" xml:space="preserve" >Clean Image</text>
<text x="965.90" y="57.80" class="s" font-size="10.60" fill="#111" text-anchor="middle" textLength="69.27" lengthAdjust="spacingAndGlyphs" xml:space="preserve" >x, y: 118, 163</text>
<g transform="translate(832.00,64.50) scale(1.7632,1.7604)" shape-rendering="crispEdges"><path fill="rgb(10,10,10)" d="M17 5h1v1h-1zM25 6h1v1h-1zM12 12h1v1h-1zM25 12h1v1h-1zM26 19h1v1h-1zM27 19h1v1h-1zM5 20h1v1h-1zM15 20h1v1h-1zM26 20h1v1h-1zM30 33h1v1h-1zM14 34h1v1h-1zM10 40h1v1h-1zM15 40h1v1h-1zM36 41h1v1h-1zM10 47h1v1h-1zM11 47h1v1h-1zM15 47h1v1h-1zM13 48h1v1h-1zM27 54h1v1h-1zM12 61h1v1h-1zM25 61h1v1h-1zM10 62h1v1h-1zM19 62h1v1h-1zM24 68h1v1h-1zM3 75h1v1h-1zM18 75h1v1h-1zM14 76h1v1h-1zM16 76h1v1h-1zM19 76h1v1h-1zM25 76h1v1h-1zM27 76h1v1h-1zM27 82h1v1h-1zM9 89h1v1h-1zM10 89h1v1h-1zM11 89h1v1h-1zM12 89h1v1h-1zM13 89h1v1h-1zM14 89h1v1h-1zM25 89h1v1h-1zM26 89h1v1h-1zM27 89h1v1h-1zM28 89h1v1h-1zM11 90h1v1h-1zM12 90h1v1h-1zM23 90h1v1h-1zM25 90h1v1h-1z"/><path fill="rgb(32,32,32)" d="M16 6h1v1h-1zM29 6h1v1h-1zM11 12h1v1h-1zM3 13h1v1h-1zM9 19h1v1h-1zM10 19h1v1h-1zM19 19h1v1h-1zM30 19h1v1h-1zM28 20h1v1h-1zM30 20h1v1h-1zM13 26h1v1h-1zM30 26h1v1h-1zM9 33h1v1h-1zM23 33h1v1h-1zM23 39h1v1h-1zM24 40h1v1h-1zM11 41h1v1h-1zM27 41h1v1h-1zM29 41h1v1h-1zM22 47h1v1h-1zM7 48h1v1h-1zM7 54h1v1h-1zM26 54h1v1h-1zM8 55h1v1h-1zM13 61h1v1h-1zM14 62h1v1h-1zM10 68h1v1h-1zM12 69h1v1h-1zM23 69h1v1h-1zM7 75h1v1h-1zM10 75h1v1h-1zM23 75h1v1h-1zM25 75h1v1h-1zM34 75h1v1h-1zM7 76h1v1h-1zM11 76h1v1h-1zM12 76h1v1h-1zM13 76h1v1h-1zM23 76h1v1h-1zM21 82h1v1h-1zM28 82h1v1h-1zM5 88h1v1h-1zM6 89h1v1h-1zM15 89h1v1h-1zM10 90h1v1h-1zM14 90h1v1h-1z"/><path fill="rgb(53,53,53)" d="M12 0h1v1h-1zM26 0h1v1h-1zM29 0h1v1h-1zM13 5h1v1h-1zM23 5h1v1h-1zM29 5h1v1h-1zM5 6h1v1h-1zM27 6h1v1h-1zM28 6h1v1h-1zM32 6h1v1h-1zM9 12h1v1h-1zM24 12h1v1h-1zM29 12h1v1h-1zM9 13h1v1h-1zM12 13h1v1h-1zM34 13h1v1h-1zM9 18h1v1h-1zM11 18h1v1h-1zM15 18h1v1h-1zM6 19h1v1h-1zM8 19h1v1h-1zM13 19h1v1h-1zM21 19h1v1h-1zM25 19h1v1h-1zM31 19h1v1h-1zM37 19h1v1h-1zM9 20h1v1h-1zM20 20h1v1h-1zM22 20h1v1h-1zM25 20h1v1h-1zM25 26h1v1h-1zM6 32h1v1h-1zM11 33h1v1h-1zM14 33h1v1h-1zM22 33h1v1h-1zM8 34h1v1h-1zM10 34h1v1h-1zM13 34h1v1h-1zM21 34h1v1h-1zM29 34h1v1h-1zM8 35h1v1h-1zM14 40h1v1h-1zM26 40h1v1h-1zM25 41h1v1h-1zM6 47h1v1h-1zM8 47h1v1h-1zM12 47h1v1h-1zM13 47h1v1h-1zM27 47h1v1h-1zM35 47h1v1h-1zM8 48h1v1h-1zM12 48h1v1h-1zM28 48h1v1h-1zM11 54h1v1h-1zM13 54h1v1h-1zM15 54h1v1h-1zM3 55h1v1h-1zM11 55h1v1h-1zM17 55h1v1h-1zM25 55h1v1h-1zM25 60h1v1h-1zM5 61h1v1h-1zM9 61h1v1h-1zM32 61h1v1h-1zM1 62h1v1h-1zM11 62h1v1h-1zM22 62h1v1h-1zM23 62h1v1h-1zM28 62h1v1h-1zM25 63h1v1h-1zM8 68h1v1h-1zM21 68h1v1h-1zM29 68h1v1h-1zM13 69h1v1h-1zM29 69h1v1h-1zM28 74h1v1h-1zM12 75h1v1h-1zM13 75h1v1h-1zM16 75h1v1h-1zM26 75h1v1h-1zM27 75h1v1h-1zM28 75h1v1h-1zM29 75h1v1h-1zM5 76h1v1h-1zM10 76h1v1h-1zM24 76h1v1h-1zM36 76h1v1h-1zM4 78h1v1h-1zM6 78h1v1h-1zM8 82h1v1h-1zM12 82h1v1h-1zM6 83h1v1h-1zM20 83h1v1h-1zM31 87h1v1h-1zM35 87h1v1h-1zM30 88h1v1h-1zM5 89h1v1h-1zM16 89h1v1h-1zM21 89h1v1h-1zM22 89h1v1h-1zM23 89h1v1h-1zM24 89h1v1h-1zM2 90h1v1h-1zM7 90h1v1h-1zM13 90h1v1h-1zM26 90h1v1h-1zM28 90h1v1h-1zM28 91h1v1h-1zM7 95h1v1h-1z"/><path fill="rgb(74,74,74)" d="M8 0h1v1h-1zM11 5h1v1h-1zM16 5h1v1h-1zM22 5h1v1h-1zM25 5h1v1h-1zM27 5h1v1h-1zM31 5h1v1h-1zM0 6h1v1h-1zM7 6h1v1h-1zM12 6h1v1h-1zM14 6h1v1h-1zM15 6h1v1h-1zM20 6h1v1h-1zM26 6h1v1h-1zM33 6h1v1h-1zM1 11h1v1h-1zM13 11h1v1h-1zM14 12h1v1h-1zM28 12h1v1h-1zM2 13h1v1h-1zM11 13h1v1h-1zM23 13h1v1h-1zM4 14h1v1h-1zM10 15h1v1h-1zM25 18h1v1h-1zM27 18h1v1h-1zM11 19h1v1h-1zM23 19h1v1h-1zM24 19h1v1h-1zM6 20h1v1h-1zM11 20h1v1h-1zM14 20h1v1h-1zM16 20h1v1h-1zM23 20h1v1h-1zM24 20h1v1h-1zM27 20h1v1h-1zM32 20h1v1h-1zM10 21h1v1h-1zM29 21h1v1h-1zM10 25h1v1h-1zM27 25h1v1h-1zM26 26h1v1h-1zM29 26h1v1h-1zM5 27h1v1h-1zM11 27h1v1h-1zM5 32h1v1h-1zM4 33h1v1h-1zM5 33h1v1h-1zM13 33h1v1h-1zM16 33h1v1h-1zM25 33h1v1h-1zM26 33h1v1h-1zM29 33h1v1h-1zM33 33h1v1h-1zM3 34h1v1h-1zM6 34h1v1h-1zM19 34h1v1h-1zM22 34h1v1h-1zM25 34h1v1h-1zM28 34h1v1h-1zM16 35h1v1h-1zM18 35h1v1h-1zM24 39h1v1h-1zM26 39h1v1h-1zM6 40h1v1h-1zM12 40h1v1h-1zM13 40h1v1h-1zM28 40h1v1h-1zM32 40h1v1h-1zM7 41h1v1h-1zM12 41h1v1h-1zM13 41h1v1h-1zM23 41h1v1h-1zM28 41h1v1h-1zM21 42h1v1h-1zM12 43h1v1h-1zM11 46h1v1h-1zM29 46h1v1h-1zM20 47h1v1h-1zM28 47h1v1h-1zM10 48h1v1h-1zM11 48h1v1h-1zM31 48h1v1h-1zM32 48h1v1h-1zM37 48h1v1h-1zM13 49h1v1h-1zM14 49h1v1h-1zM24 49h1v1h-1zM26 49h1v1h-1zM27 49h1v1h-1zM34 49h1v1h-1zM23 50h1v1h-1zM26 53h1v1h-1zM28 53h1v1h-1zM30 53h1v1h-1zM21 54h1v1h-1zM7 55h1v1h-1zM21 55h1v1h-1zM5 56h1v1h-1zM23 60h1v1h-1zM11 61h1v1h-1zM23 61h1v1h-1zM24 61h1v1h-1zM36 61h1v1h-1zM9 62h1v1h-1zM15 62h1v1h-1zM20 62h1v1h-1zM26 62h1v1h-1zM29 62h1v1h-1zM32 62h1v1h-1zM11 67h1v1h-1zM18 67h1v1h-1zM25 67h1v1h-1zM14 68h1v1h-1zM27 68h1v1h-1zM33 68h1v1h-1zM2 69h1v1h-1zM5 69h1v1h-1zM22 69h1v1h-1zM24 69h1v1h-1zM25 69h1v1h-1zM26 69h1v1h-1zM28 69h1v1h-1zM23 70h1v1h-1zM8 74h1v1h-1zM27 74h1v1h-1zM19 75h1v1h-1zM22 75h1v1h-1zM24 75h1v1h-1zM8 76h1v1h-1zM26 76h1v1h-1zM7 77h1v1h-1zM20 77h1v1h-1zM23 77h1v1h-1zM25 77h1v1h-1zM4 82h1v1h-1zM20 82h1v1h-1zM26 82h1v1h-1zM11 83h1v1h-1zM24 83h1v1h-1zM7 88h1v1h-1zM10 88h1v1h-1zM13 88h1v1h-1zM21 88h1v1h-1zM27 88h1v1h-1zM34 88h1v1h-1zM7 89h1v1h-1zM19 89h1v1h-1zM29 89h1v1h-1zM30 89h1v1h-1zM32 89h1v1h-1zM8 90h1v1h-1zM29 90h1v1h-1zM17 91h1v1h-1zM15 95h1v1h-1z"/><path fill="rgb(96,96,96)" d="M6 0h1v1h-1zM11 0h1v1h-1zM27 0h1v1h-1zM31 0h1v1h-1zM1 3h1v1h-1zM22 3h1v1h-1zM0 4h1v1h-1zM10 4h1v1h-1zM12 4h1v1h-1zM25 4h1v1h-1zM2 5h1v1h-1zM8 5h1v1h-1zM10 5h1v1h-1zM21 5h1v1h-1zM26 5h1v1h-1zM4 6h1v1h-1zM10 6h1v1h-1zM34 7h1v1h-1zM17 8h1v1h-1zM8 11h1v1h-1zM24 11h1v1h-1zM13 12h1v1h-1zM18 12h1v1h-1zM27 12h1v1h-1zM15 13h1v1h-1zM21 13h1v1h-1zM22 13h1v1h-1zM24 13h1v1h-1zM28 13h1v1h-1zM29 13h1v1h-1zM31 13h1v1h-1zM21 14h1v1h-1zM24 14h1v1h-1zM30 16h1v1h-1zM33 16h1v1h-1zM8 18h1v1h-1zM26 18h1v1h-1zM29 18h1v1h-1zM7 19h1v1h-1zM12 19h1v1h-1zM15 19h1v1h-1zM20 19h1v1h-1zM28 19h1v1h-1zM29 19h1v1h-1zM32 19h1v1h-1zM1 20h1v1h-1zM7 20h1v1h-1zM29 20h1v1h-1zM34 20h1v1h-1zM36 20h1v1h-1zM37 20h1v1h-1zM13 21h1v1h-1zM22 21h1v1h-1zM25 21h1v1h-1zM28 21h1v1h-1zM30 21h1v1h-1zM9 26h1v1h-1zM11 26h1v1h-1zM20 26h1v1h-1zM21 26h1v1h-1zM23 26h1v1h-1zM32 26h1v1h-1zM0 27h1v1h-1zM7 27h1v1h-1zM12 27h1v1h-1zM21 27h1v1h-1zM24 27h1v1h-1zM26 27h1v1h-1zM32 27h1v1h-1zM33 27h1v1h-1zM35 27h1v1h-1zM6 28h1v1h-1zM14 29h1v1h-1zM12 31h1v1h-1zM14 31h1v1h-1zM29 31h1v1h-1zM10 32h1v1h-1zM11 32h1v1h-1zM12 32h1v1h-1zM18 32h1v1h-1zM22 32h1v1h-1zM36 32h1v1h-1zM7 33h1v1h-1zM8 33h1v1h-1zM12 33h1v1h-1zM18 33h1v1h-1zM27 33h1v1h-1zM5 34h1v1h-1zM24 34h1v1h-1zM27 34h1v1h-1zM17 35h1v1h-1zM19 35h1v1h-1zM28 35h1v1h-1zM30 35h1v1h-1zM32 35h1v1h-1zM0 39h1v1h-1zM7 39h1v1h-1zM13 39h1v1h-1zM21 39h1v1h-1zM25 39h1v1h-1zM4 40h1v1h-1zM16 40h1v1h-1zM20 40h1v1h-1zM23 40h1v1h-1zM25 40h1v1h-1zM30 40h1v1h-1zM4 41h1v1h-1zM8 41h1v1h-1zM9 41h1v1h-1zM15 41h1v1h-1zM18 41h1v1h-1zM20 41h1v1h-1zM22 42h1v1h-1zM24 46h1v1h-1zM4 47h1v1h-1zM7 47h1v1h-1zM18 47h1v1h-1zM30 47h1v1h-1zM4 48h1v1h-1zM14 48h1v1h-1zM15 48h1v1h-1zM20 48h1v1h-1zM24 48h1v1h-1zM26 48h1v1h-1zM35 48h1v1h-1zM29 49h1v1h-1zM31 50h1v1h-1zM18 53h1v1h-1zM24 53h1v1h-1zM4 54h1v1h-1zM8 54h1v1h-1zM12 54h1v1h-1zM14 54h1v1h-1zM23 54h1v1h-1zM36 54h1v1h-1zM23 55h1v1h-1zM27 55h1v1h-1zM0 56h1v1h-1zM1 56h1v1h-1zM10 56h1v1h-1zM18 58h1v1h-1zM14 59h1v1h-1zM10 60h1v1h-1zM14 60h1v1h-1zM34 60h1v1h-1zM27 61h1v1h-1zM33 61h1v1h-1zM0 62h1v1h-1zM2 62h1v1h-1zM3 62h1v1h-1zM5 62h1v1h-1zM12 62h1v1h-1zM17 62h1v1h-1zM21 62h1v1h-1zM35 62h1v1h-1zM5 64h1v1h-1zM19 64h1v1h-1zM30 65h1v1h-1zM29 66h1v1h-1zM2 67h1v1h-1zM24 67h1v1h-1zM27 67h1v1h-1zM6 68h1v1h-1zM13 68h1v1h-1zM15 68h1v1h-1zM20 68h1v1h-1zM22 68h1v1h-1zM25 68h1v1h-1zM28 68h1v1h-1zM34 68h1v1h-1zM8 69h1v1h-1zM9 69h1v1h-1zM10 69h1v1h-1zM11 69h1v1h-1zM14 69h1v1h-1zM27 69h1v1h-1zM30 69h1v1h-1zM32 69h1v1h-1zM30 70h1v1h-1zM5 71h1v1h-1zM10 74h1v1h-1zM12 74h1v1h-1zM24 74h1v1h-1zM25 74h1v1h-1zM30 74h1v1h-1zM31 74h1v1h-1zM35 74h1v1h-1zM2 75h1v1h-1zM4 75h1v1h-1zM5 75h1v1h-1zM8 75h1v1h-1zM11 75h1v1h-1zM15 75h1v1h-1zM32 75h1v1h-1zM0 76h1v1h-1zM20 76h1v1h-1zM21 76h1v1h-1zM22 76h1v1h-1zM33 76h1v1h-1zM13 77h1v1h-1zM34 80h1v1h-1zM5 81h1v1h-1zM15 82h1v1h-1zM30 82h1v1h-1zM37 82h1v1h-1zM14 83h1v1h-1zM25 83h1v1h-1zM28 83h1v1h-1zM0 85h1v1h-1zM15 86h1v1h-1zM4 88h1v1h-1zM14 88h1v1h-1zM18 88h1v1h-1zM25 88h1v1h-1zM26 88h1v1h-1zM29 88h1v1h-1zM32 88h1v1h-1zM33 88h1v1h-1zM37 88h1v1h-1zM8 89h1v1h-1zM31 89h1v1h-1zM4 90h1v1h-1zM22 90h1v1h-1zM24 90h1v1h-1zM27 90h1v1h-1zM31 90h1v1h-1zM35 90h1v1h-1zM5 91h1v1h-1zM6 91h1v1h-1zM11 91h1v1h-1zM21 91h1v1h-1zM30 91h1v1h-1zM31 91h1v1h-1zM35 91h1v1h-1zM32 92h1v1h-1zM21 95h1v1h-1zM23 95h1v1h-1z"/><path fill="rgb(117,117,117)" d="M13 0h1v1h-1zM14 0h1v1h-1zM16 0h1v1h-1zM19 0h1v1h-1zM21 0h1v1h-1zM23 0h1v1h-1zM24 0h1v1h-1zM28 0h1v1h-1zM2 4h1v1h-1zM15 4h1v1h-1zM19 4h1v1h-1zM32 4h1v1h-1zM6 5h1v1h-1zM9 5h1v1h-1zM12 5h1v1h-1zM28 5h1v1h-1zM30 5h1v1h-1zM9 6h1v1h-1zM13 6h1v1h-1zM19 6h1v1h-1zM21 6h1v1h-1zM22 6h1v1h-1zM24 6h1v1h-1zM36 6h1v1h-1zM2 7h1v1h-1zM6 7h1v1h-1zM12 7h1v1h-1zM18 7h1v1h-1zM21 7h1v1h-1zM29 7h1v1h-1zM6 8h1v1h-1zM34 8h1v1h-1zM16 9h1v1h-1zM20 10h1v1h-1zM5 11h1v1h-1zM11 11h1v1h-1zM23 11h1v1h-1zM26 11h1v1h-1zM36 11h1v1h-1zM0 12h1v1h-1zM1 12h1v1h-1zM10 12h1v1h-1zM15 12h1v1h-1zM17 12h1v1h-1zM20 12h1v1h-1zM21 12h1v1h-1zM26 12h1v1h-1zM31 12h1v1h-1zM36 12h1v1h-1zM8 13h1v1h-1zM20 13h1v1h-1zM26 13h1v1h-1zM27 13h1v1h-1zM30 13h1v1h-1zM10 14h1v1h-1zM19 14h1v1h-1zM12 15h1v1h-1zM22 15h1v1h-1zM8 17h1v1h-1zM6 18h1v1h-1zM12 18h1v1h-1zM13 18h1v1h-1zM19 18h1v1h-1zM22 18h1v1h-1zM34 18h1v1h-1zM37 18h1v1h-1zM4 19h1v1h-1zM17 19h1v1h-1zM22 19h1v1h-1zM36 19h1v1h-1zM12 20h1v1h-1zM13 20h1v1h-1zM17 20h1v1h-1zM19 20h1v1h-1zM33 20h1v1h-1zM9 21h1v1h-1zM12 21h1v1h-1zM15 21h1v1h-1zM17 21h1v1h-1zM23 21h1v1h-1zM18 22h1v1h-1zM36 22h1v1h-1zM6 23h1v1h-1zM20 24h1v1h-1zM17 25h1v1h-1zM0 26h1v1h-1zM3 26h1v1h-1zM8 26h1v1h-1zM22 26h1v1h-1zM27 26h1v1h-1zM28 26h1v1h-1zM31 26h1v1h-1zM13 27h1v1h-1zM15 27h1v1h-1zM25 27h1v1h-1zM27 27h1v1h-1zM36 27h1v1h-1zM37 27h1v1h-1zM19 28h1v1h-1zM26 28h1v1h-1zM34 28h1v1h-1zM7 29h1v1h-1zM11 31h1v1h-1zM26 32h1v1h-1zM30 32h1v1h-1zM1 33h1v1h-1zM3 33h1v1h-1zM10 33h1v1h-1zM15 33h1v1h-1zM24 33h1v1h-1zM28 33h1v1h-1zM31 33h1v1h-1zM35 33h1v1h-1zM9 34h1v1h-1zM20 34h1v1h-1zM26 34h1v1h-1zM30 34h1v1h-1zM34 34h1v1h-1zM36 34h1v1h-1zM10 35h1v1h-1zM14 35h1v1h-1zM19 36h1v1h-1zM12 37h1v1h-1zM11 38h1v1h-1zM9 39h1v1h-1zM11 39h1v1h-1zM12 39h1v1h-1zM16 39h1v1h-1zM28 39h1v1h-1zM31 39h1v1h-1zM35 39h1v1h-1zM2 40h1v1h-1zM8 40h1v1h-1zM9 40h1v1h-1zM19 40h1v1h-1zM27 40h1v1h-1zM29 40h1v1h-1zM34 40h1v1h-1zM35 40h1v1h-1zM37 40h1v1h-1zM3 41h1v1h-1zM5 41h1v1h-1zM6 41h1v1h-1zM14 41h1v1h-1zM16 41h1v1h-1zM24 41h1v1h-1zM26 41h1v1h-1zM30 41h1v1h-1zM34 41h1v1h-1zM8 42h1v1h-1zM28 42h1v1h-1zM29 42h1v1h-1zM17 43h1v1h-1zM28 45h1v1h-1zM2 46h1v1h-1zM5 46h1v1h-1zM7 46h1v1h-1zM9 46h1v1h-1zM10 46h1v1h-1zM12 46h1v1h-1zM16 46h1v1h-1zM23 46h1v1h-1zM25 46h1v1h-1zM27 46h1v1h-1zM33 46h1v1h-1zM2 47h1v1h-1zM3 47h1v1h-1zM5 47h1v1h-1zM14 47h1v1h-1zM16 47h1v1h-1zM19 47h1v1h-1zM24 47h1v1h-1zM25 47h1v1h-1zM29 47h1v1h-1zM3 48h1v1h-1zM16 48h1v1h-1zM18 48h1v1h-1zM25 48h1v1h-1zM27 48h1v1h-1zM30 48h1v1h-1zM5 49h1v1h-1zM10 49h1v1h-1zM16 49h1v1h-1zM18 49h1v1h-1zM20 49h1v1h-1zM29 50h1v1h-1zM28 51h1v1h-1zM0 53h1v1h-1zM10 53h1v1h-1zM22 53h1v1h-1zM29 53h1v1h-1zM1 54h1v1h-1zM3 54h1v1h-1zM5 54h1v1h-1zM9 54h1v1h-1zM10 54h1v1h-1zM28 54h1v1h-1zM29 54h1v1h-1zM32 54h1v1h-1zM34 54h1v1h-1zM9 55h1v1h-1zM10 55h1v1h-1zM12 55h1v1h-1zM26 55h1v1h-1zM29 55h1v1h-1zM33 55h1v1h-1zM4 56h1v1h-1zM17 56h1v1h-1zM25 56h1v1h-1zM26 56h1v1h-1zM32 56h1v1h-1zM7 57h1v1h-1zM22 57h1v1h-1zM24 57h1v1h-1zM37 57h1v1h-1zM12 59h1v1h-1zM27 60h1v1h-1zM30 60h1v1h-1zM31 60h1v1h-1zM0 61h1v1h-1zM2 61h1v1h-1zM6 61h1v1h-1zM7 61h1v1h-1zM14 61h1v1h-1zM15 61h1v1h-1zM16 61h1v1h-1zM17 61h1v1h-1zM18 61h1v1h-1zM19 61h1v1h-1zM28 61h1v1h-1zM29 61h1v1h-1zM31 61h1v1h-1zM4 62h1v1h-1zM8 62h1v1h-1zM13 62h1v1h-1zM16 62h1v1h-1zM3 63h1v1h-1zM9 63h1v1h-1zM12 63h1v1h-1zM14 63h1v1h-1zM21 63h1v1h-1zM26 63h1v1h-1zM30 63h1v1h-1zM34 63h1v1h-1zM10 64h1v1h-1zM35 64h1v1h-1zM2 65h1v1h-1zM3 67h1v1h-1zM10 67h1v1h-1zM14 67h1v1h-1zM21 67h1v1h-1zM35 67h1v1h-1zM2 68h1v1h-1zM7 68h1v1h-1zM12 68h1v1h-1zM26 68h1v1h-1zM3 69h1v1h-1zM4 69h1v1h-1zM6 69h1v1h-1zM17 69h1v1h-1zM18 69h1v1h-1zM21 69h1v1h-1zM36 69h1v1h-1zM9 70h1v1h-1zM20 70h1v1h-1zM27 70h1v1h-1zM28 70h1v1h-1zM32 70h1v1h-1zM8 71h1v1h-1zM20 71h1v1h-1zM17 72h1v1h-1zM33 72h1v1h-1zM18 74h1v1h-1zM21 74h1v1h-1zM22 74h1v1h-1zM23 74h1v1h-1zM29 74h1v1h-1zM32 74h1v1h-1zM37 74h1v1h-1zM1 75h1v1h-1zM35 75h1v1h-1zM9 76h1v1h-1zM17 77h1v1h-1zM18 77h1v1h-1zM19 77h1v1h-1zM22 77h1v1h-1zM29 77h1v1h-1zM22 80h1v1h-1zM11 81h1v1h-1zM16 81h1v1h-1zM22 81h1v1h-1zM2 82h1v1h-1zM10 82h1v1h-1zM11 82h1v1h-1zM24 82h1v1h-1zM25 82h1v1h-1zM31 82h1v1h-1zM1 83h1v1h-1zM8 83h1v1h-1zM12 83h1v1h-1zM23 83h1v1h-1zM27 83h1v1h-1zM32 83h1v1h-1zM9 84h1v1h-1zM11 84h1v1h-1zM24 84h1v1h-1zM27 84h1v1h-1zM12 87h1v1h-1zM13 87h1v1h-1zM19 87h1v1h-1zM6 88h1v1h-1zM8 88h1v1h-1zM17 88h1v1h-1zM22 88h1v1h-1zM23 88h1v1h-1zM24 88h1v1h-1zM28 88h1v1h-1zM31 88h1v1h-1zM17 89h1v1h-1zM20 89h1v1h-1zM6 90h1v1h-1zM9 90h1v1h-1zM15 90h1v1h-1zM16 90h1v1h-1zM17 90h1v1h-1zM21 90h1v1h-1zM30 90h1v1h-1zM32 90h1v1h-1zM13 91h1v1h-1zM14 91h1v1h-1zM19 91h1v1h-1zM26 91h1v1h-1zM33 91h1v1h-1zM11 92h1v1h-1zM1 94h1v1h-1zM13 94h1v1h-1zM16 94h1v1h-1zM34 94h1v1h-1zM0 95h1v1h-1zM10 95h1v1h-1zM17 95h1v1h-1zM31 95h1v1h-1z"/><path fill="rgb(138,138,138)" d="M5 0h1v1h-1zM7 0h1v1h-1zM10 0h1v1h-1zM15 0h1v1h-1zM20 0h1v1h-1zM25 0h1v1h-1zM30 0h1v1h-1zM3 1h1v1h-1zM13 1h1v1h-1zM16 2h1v1h-1zM28 2h1v1h-1zM10 3h1v1h-1zM33 3h1v1h-1zM37 3h1v1h-1zM9 4h1v1h-1zM13 4h1v1h-1zM17 4h1v1h-1zM20 4h1v1h-1zM23 4h1v1h-1zM29 4h1v1h-1zM5 5h1v1h-1zM34 5h1v1h-1zM35 5h1v1h-1zM36 5h1v1h-1zM3 6h1v1h-1zM8 6h1v1h-1zM23 6h1v1h-1zM30 6h1v1h-1zM31 6h1v1h-1zM35 6h1v1h-1zM7 7h1v1h-1zM8 7h1v1h-1zM25 7h1v1h-1zM36 7h1v1h-1zM10 8h1v1h-1zM26 8h1v1h-1zM12 10h1v1h-1zM17 10h1v1h-1zM25 10h1v1h-1zM29 10h1v1h-1zM2 11h1v1h-1zM6 11h1v1h-1zM7 11h1v1h-1zM9 11h1v1h-1zM12 11h1v1h-1zM18 11h1v1h-1zM22 11h1v1h-1zM28 11h1v1h-1zM32 11h1v1h-1zM6 12h1v1h-1zM7 12h1v1h-1zM8 12h1v1h-1zM16 12h1v1h-1zM22 12h1v1h-1zM30 12h1v1h-1zM33 12h1v1h-1zM34 12h1v1h-1zM4 13h1v1h-1zM10 13h1v1h-1zM25 13h1v1h-1zM32 13h1v1h-1zM37 13h1v1h-1zM0 14h1v1h-1zM1 14h1v1h-1zM7 14h1v1h-1zM11 14h1v1h-1zM16 14h1v1h-1zM23 14h1v1h-1zM2 15h1v1h-1zM7 15h1v1h-1zM15 15h1v1h-1zM23 15h1v1h-1zM24 15h1v1h-1zM25 15h1v1h-1zM10 17h1v1h-1zM37 17h1v1h-1zM14 18h1v1h-1zM23 18h1v1h-1zM28 18h1v1h-1zM30 18h1v1h-1zM31 18h1v1h-1zM33 18h1v1h-1zM0 19h1v1h-1zM14 19h1v1h-1zM16 19h1v1h-1zM33 19h1v1h-1zM8 20h1v1h-1zM10 20h1v1h-1zM18 20h1v1h-1zM21 20h1v1h-1zM31 20h1v1h-1zM11 21h1v1h-1zM14 21h1v1h-1zM16 21h1v1h-1zM19 21h1v1h-1zM20 21h1v1h-1zM27 21h1v1h-1zM11 22h1v1h-1zM1 23h1v1h-1zM11 23h1v1h-1zM12 23h1v1h-1zM13 23h1v1h-1zM25 23h1v1h-1zM9 24h1v1h-1zM25 24h1v1h-1zM28 24h1v1h-1zM5 25h1v1h-1zM9 25h1v1h-1zM12 25h1v1h-1zM13 25h1v1h-1zM18 25h1v1h-1zM24 25h1v1h-1zM2 26h1v1h-1zM12 26h1v1h-1zM14 26h1v1h-1zM15 26h1v1h-1zM24 26h1v1h-1zM33 26h1v1h-1zM34 26h1v1h-1zM35 26h1v1h-1zM2 27h1v1h-1zM6 27h1v1h-1zM9 27h1v1h-1zM20 27h1v1h-1zM28 27h1v1h-1zM7 28h1v1h-1zM9 28h1v1h-1zM17 28h1v1h-1zM24 28h1v1h-1zM25 28h1v1h-1zM27 28h1v1h-1zM33 28h1v1h-1zM5 29h1v1h-1zM18 29h1v1h-1zM31 29h1v1h-1zM23 30h1v1h-1zM29 30h1v1h-1zM0 31h1v1h-1zM26 31h1v1h-1zM28 31h1v1h-1zM19 32h1v1h-1zM21 32h1v1h-1zM25 32h1v1h-1zM28 32h1v1h-1zM6 33h1v1h-1zM17 33h1v1h-1zM19 33h1v1h-1zM20 33h1v1h-1zM21 33h1v1h-1zM32 33h1v1h-1zM37 33h1v1h-1zM0 34h1v1h-1zM1 34h1v1h-1zM7 34h1v1h-1zM11 34h1v1h-1zM12 34h1v1h-1zM18 34h1v1h-1zM23 34h1v1h-1zM31 34h1v1h-1zM0 35h1v1h-1zM12 35h1v1h-1zM13 35h1v1h-1zM26 35h1v1h-1zM36 35h1v1h-1zM3 36h1v1h-1zM6 36h1v1h-1zM15 36h1v1h-1zM22 36h1v1h-1zM36 36h1v1h-1zM16 37h1v1h-1zM34 37h1v1h-1zM1 38h1v1h-1zM4 38h1v1h-1zM17 38h1v1h-1zM22 39h1v1h-1zM32 39h1v1h-1zM34 39h1v1h-1zM5 40h1v1h-1zM11 40h1v1h-1zM17 40h1v1h-1zM21 40h1v1h-1zM22 40h1v1h-1zM36 40h1v1h-1zM2 41h1v1h-1zM10 41h1v1h-1zM21 41h1v1h-1zM31 41h1v1h-1zM33 41h1v1h-1zM35 41h1v1h-1zM11 42h1v1h-1zM15 42h1v1h-1zM16 42h1v1h-1zM4 43h1v1h-1zM10 43h1v1h-1zM26 43h1v1h-1zM30 43h1v1h-1zM9 44h1v1h-1zM14 45h1v1h-1zM17 45h1v1h-1zM21 45h1v1h-1zM37 45h1v1h-1zM15 46h1v1h-1zM28 46h1v1h-1zM30 46h1v1h-1zM34 46h1v1h-1zM1 47h1v1h-1zM17 47h1v1h-1zM23 47h1v1h-1zM26 47h1v1h-1zM31 47h1v1h-1zM33 47h1v1h-1zM21 48h1v1h-1zM22 48h1v1h-1zM34 48h1v1h-1zM23 49h1v1h-1zM36 49h1v1h-1zM37 49h1v1h-1zM7 50h1v1h-1zM9 50h1v1h-1zM14 50h1v1h-1zM34 50h1v1h-1zM35 50h1v1h-1zM7 51h1v1h-1zM19 51h1v1h-1zM22 51h1v1h-1zM31 51h1v1h-1zM2 53h1v1h-1zM13 53h1v1h-1zM14 53h1v1h-1zM21 53h1v1h-1zM33 53h1v1h-1zM36 53h1v1h-1zM37 53h1v1h-1zM16 54h1v1h-1zM19 54h1v1h-1zM22 54h1v1h-1zM25 54h1v1h-1zM30 54h1v1h-1zM31 54h1v1h-1zM33 54h1v1h-1zM35 54h1v1h-1zM2 55h1v1h-1zM6 55h1v1h-1zM13 55h1v1h-1zM14 55h1v1h-1zM15 55h1v1h-1zM20 55h1v1h-1zM30 55h1v1h-1zM31 55h1v1h-1zM35 55h1v1h-1zM36 55h1v1h-1zM13 56h1v1h-1zM18 56h1v1h-1zM24 56h1v1h-1zM12 57h1v1h-1zM9 58h1v1h-1zM15 59h1v1h-1zM17 59h1v1h-1zM23 59h1v1h-1zM37 59h1v1h-1zM19 60h1v1h-1zM21 60h1v1h-1zM22 60h1v1h-1zM24 60h1v1h-1zM26 60h1v1h-1zM29 60h1v1h-1zM35 60h1v1h-1zM4 61h1v1h-1zM8 61h1v1h-1zM20 61h1v1h-1zM21 61h1v1h-1zM22 61h1v1h-1zM34 61h1v1h-1zM18 62h1v1h-1zM24 62h1v1h-1zM25 62h1v1h-1zM27 62h1v1h-1zM31 62h1v1h-1zM34 62h1v1h-1zM4 63h1v1h-1zM11 65h1v1h-1zM19 65h1v1h-1zM24 65h1v1h-1zM27 65h1v1h-1zM4 66h1v1h-1zM19 66h1v1h-1zM21 66h1v1h-1zM36 66h1v1h-1zM4 67h1v1h-1zM9 67h1v1h-1zM16 67h1v1h-1zM22 67h1v1h-1zM23 67h1v1h-1zM29 67h1v1h-1zM30 67h1v1h-1zM37 67h1v1h-1zM0 68h1v1h-1zM5 68h1v1h-1zM9 68h1v1h-1zM11 68h1v1h-1zM31 68h1v1h-1zM0 69h1v1h-1zM1 69h1v1h-1zM7 69h1v1h-1zM16 69h1v1h-1zM34 69h1v1h-1zM16 70h1v1h-1zM21 70h1v1h-1zM33 70h1v1h-1zM13 71h1v1h-1zM3 72h1v1h-1zM27 72h1v1h-1zM28 72h1v1h-1zM37 72h1v1h-1zM1 73h1v1h-1zM8 73h1v1h-1zM16 73h1v1h-1zM22 73h1v1h-1zM25 73h1v1h-1zM28 73h1v1h-1zM30 73h1v1h-1zM35 73h1v1h-1zM37 73h1v1h-1zM0 74h1v1h-1zM3 74h1v1h-1zM6 74h1v1h-1zM15 74h1v1h-1zM0 75h1v1h-1zM6 75h1v1h-1zM9 75h1v1h-1zM14 75h1v1h-1zM17 75h1v1h-1zM21 75h1v1h-1zM31 75h1v1h-1zM3 76h1v1h-1zM17 76h1v1h-1zM28 76h1v1h-1zM29 76h1v1h-1zM31 76h1v1h-1zM32 76h1v1h-1zM34 76h1v1h-1zM37 76h1v1h-1zM1 77h1v1h-1zM6 77h1v1h-1zM10 77h1v1h-1zM11 77h1v1h-1zM12 77h1v1h-1zM15 77h1v1h-1zM16 77h1v1h-1zM26 77h1v1h-1zM28 77h1v1h-1zM30 77h1v1h-1zM37 77h1v1h-1zM8 78h1v1h-1zM10 78h1v1h-1zM22 78h1v1h-1zM36 78h1v1h-1zM13 79h1v1h-1zM21 79h1v1h-1zM6 80h1v1h-1zM33 80h1v1h-1zM2 81h1v1h-1zM10 81h1v1h-1zM14 81h1v1h-1zM15 81h1v1h-1zM21 81h1v1h-1zM25 81h1v1h-1zM27 81h1v1h-1zM1 82h1v1h-1zM13 82h1v1h-1zM18 82h1v1h-1zM22 82h1v1h-1zM32 82h1v1h-1zM36 82h1v1h-1zM4 83h1v1h-1zM9 83h1v1h-1zM10 83h1v1h-1zM21 83h1v1h-1zM31 83h1v1h-1zM33 83h1v1h-1zM35 83h1v1h-1zM13 84h1v1h-1zM18 84h1v1h-1zM37 84h1v1h-1zM9 85h1v1h-1zM29 85h1v1h-1zM36 85h1v1h-1zM27 86h1v1h-1zM32 86h1v1h-1zM2 87h1v1h-1zM6 87h1v1h-1zM26 87h1v1h-1zM34 87h1v1h-1zM0 88h1v1h-1zM3 88h1v1h-1zM11 88h1v1h-1zM12 88h1v1h-1zM19 88h1v1h-1zM36 88h1v1h-1zM0 89h1v1h-1zM2 89h1v1h-1zM18 89h1v1h-1zM0 90h1v1h-1zM1 90h1v1h-1zM5 90h1v1h-1zM18 90h1v1h-1zM19 90h1v1h-1zM20 90h1v1h-1zM34 90h1v1h-1zM36 90h1v1h-1zM9 91h1v1h-1zM10 91h1v1h-1zM12 91h1v1h-1zM22 91h1v1h-1zM23 91h1v1h-1zM25 91h1v1h-1zM27 91h1v1h-1zM29 91h1v1h-1zM13 92h1v1h-1zM17 92h1v1h-1zM27 92h1v1h-1zM18 93h1v1h-1zM37 93h1v1h-1zM11 94h1v1h-1zM12 94h1v1h-1zM31 94h1v1h-1zM32 94h1v1h-1zM36 94h1v1h-1zM2 95h1v1h-1zM4 95h1v1h-1zM9 95h1v1h-1zM18 95h1v1h-1zM24 95h1v1h-1zM25 95h1v1h-1zM30 95h1v1h-1z"/><path fill="rgb(160,160,160)" d="M32 0h1v1h-1zM35 0h1v1h-1zM1 1h1v1h-1zM6 1h1v1h-1zM9 1h1v1h-1zM17 1h1v1h-1zM23 1h1v1h-1zM3 2h1v1h-1zM18 2h1v1h-1zM36 2h1v1h-1zM0 3h1v1h-1zM7 3h1v1h-1zM8 3h1v1h-1zM3 4h1v1h-1zM5 4h1v1h-1zM7 4h1v1h-1zM16 4h1v1h-1zM21 4h1v1h-1zM24 4h1v1h-1zM27 4h1v1h-1zM28 4h1v1h-1zM14 5h1v1h-1zM15 5h1v1h-1zM18 5h1v1h-1zM19 5h1v1h-1zM20 5h1v1h-1zM24 5h1v1h-1zM32 5h1v1h-1zM6 6h1v1h-1zM11 6h1v1h-1zM17 6h1v1h-1zM18 6h1v1h-1zM0 7h1v1h-1zM4 7h1v1h-1zM11 7h1v1h-1zM14 7h1v1h-1zM16 7h1v1h-1zM19 7h1v1h-1zM23 7h1v1h-1zM24 7h1v1h-1zM26 7h1v1h-1zM27 7h1v1h-1zM30 7h1v1h-1zM4 8h1v1h-1zM27 8h1v1h-1zM31 8h1v1h-1zM36 8h1v1h-1zM37 8h1v1h-1zM7 9h1v1h-1zM24 9h1v1h-1zM25 9h1v1h-1zM34 9h1v1h-1zM37 9h1v1h-1zM10 10h1v1h-1zM11 10h1v1h-1zM32 10h1v1h-1zM10 11h1v1h-1zM14 11h1v1h-1zM17 11h1v1h-1zM21 11h1v1h-1zM27 11h1v1h-1zM31 11h1v1h-1zM4 12h1v1h-1zM5 12h1v1h-1zM32 12h1v1h-1zM7 13h1v1h-1zM13 13h1v1h-1zM14 13h1v1h-1zM18 13h1v1h-1zM36 13h1v1h-1zM6 14h1v1h-1zM15 14h1v1h-1zM17 14h1v1h-1zM27 14h1v1h-1zM9 15h1v1h-1zM16 15h1v1h-1zM19 15h1v1h-1zM20 15h1v1h-1zM31 15h1v1h-1zM33 15h1v1h-1zM13 16h1v1h-1zM31 16h1v1h-1zM5 17h1v1h-1zM19 17h1v1h-1zM22 17h1v1h-1zM25 17h1v1h-1zM31 17h1v1h-1zM35 17h1v1h-1zM1 18h1v1h-1zM4 18h1v1h-1zM21 18h1v1h-1zM2 19h1v1h-1zM18 19h1v1h-1zM3 20h1v1h-1zM2 21h1v1h-1zM5 21h1v1h-1zM18 21h1v1h-1zM21 21h1v1h-1zM26 21h1v1h-1zM31 21h1v1h-1zM32 21h1v1h-1zM34 21h1v1h-1zM35 21h1v1h-1zM36 21h1v1h-1zM1 22h1v1h-1zM3 22h1v1h-1zM6 22h1v1h-1zM10 22h1v1h-1zM14 22h1v1h-1zM23 22h1v1h-1zM31 22h1v1h-1zM33 22h1v1h-1zM34 22h1v1h-1zM8 23h1v1h-1zM22 23h1v1h-1zM30 23h1v1h-1zM35 23h1v1h-1zM14 24h1v1h-1zM15 24h1v1h-1zM17 24h1v1h-1zM21 24h1v1h-1zM22 24h1v1h-1zM30 24h1v1h-1zM32 24h1v1h-1zM11 25h1v1h-1zM14 25h1v1h-1zM15 25h1v1h-1zM22 25h1v1h-1zM25 25h1v1h-1zM28 25h1v1h-1zM29 25h1v1h-1zM34 25h1v1h-1zM4 26h1v1h-1zM5 26h1v1h-1zM7 26h1v1h-1zM17 26h1v1h-1zM4 27h1v1h-1zM10 27h1v1h-1zM16 27h1v1h-1zM17 27h1v1h-1zM18 27h1v1h-1zM19 27h1v1h-1zM22 27h1v1h-1zM23 27h1v1h-1zM29 27h1v1h-1zM34 27h1v1h-1zM1 28h1v1h-1zM2 28h1v1h-1zM5 28h1v1h-1zM16 28h1v1h-1zM20 28h1v1h-1zM22 28h1v1h-1zM23 28h1v1h-1zM29 28h1v1h-1zM36 28h1v1h-1zM1 29h1v1h-1zM15 29h1v1h-1zM19 29h1v1h-1zM20 29h1v1h-1zM29 29h1v1h-1zM30 29h1v1h-1zM0 30h1v1h-1zM13 30h1v1h-1zM26 30h1v1h-1zM30 30h1v1h-1zM5 31h1v1h-1zM7 31h1v1h-1zM17 31h1v1h-1zM21 31h1v1h-1zM27 31h1v1h-1zM30 31h1v1h-1zM1 32h1v1h-1zM4 32h1v1h-1zM9 32h1v1h-1zM14 32h1v1h-1zM20 32h1v1h-1zM27 32h1v1h-1zM0 33h1v1h-1zM2 34h1v1h-1zM4 34h1v1h-1zM16 34h1v1h-1zM33 34h1v1h-1zM2 35h1v1h-1zM6 35h1v1h-1zM7 35h1v1h-1zM9 35h1v1h-1zM35 35h1v1h-1zM2 36h1v1h-1zM9 36h1v1h-1zM25 36h1v1h-1zM27 36h1v1h-1zM28 36h1v1h-1zM33 36h1v1h-1zM8 37h1v1h-1zM18 37h1v1h-1zM19 37h1v1h-1zM23 37h1v1h-1zM26 37h1v1h-1zM36 37h1v1h-1zM10 38h1v1h-1zM18 38h1v1h-1zM19 38h1v1h-1zM26 38h1v1h-1zM8 39h1v1h-1zM10 39h1v1h-1zM15 39h1v1h-1zM27 39h1v1h-1zM29 39h1v1h-1zM30 39h1v1h-1zM3 40h1v1h-1zM7 40h1v1h-1zM31 40h1v1h-1zM1 41h1v1h-1zM17 41h1v1h-1zM32 41h1v1h-1zM37 41h1v1h-1zM2 42h1v1h-1zM3 42h1v1h-1zM4 42h1v1h-1zM9 42h1v1h-1zM13 42h1v1h-1zM24 42h1v1h-1zM25 42h1v1h-1zM26 42h1v1h-1zM30 42h1v1h-1zM20 43h1v1h-1zM23 43h1v1h-1zM27 43h1v1h-1zM32 44h1v1h-1zM36 44h1v1h-1zM3 45h1v1h-1zM4 45h1v1h-1zM10 45h1v1h-1zM20 45h1v1h-1zM30 45h1v1h-1zM36 45h1v1h-1zM3 46h1v1h-1zM4 46h1v1h-1zM6 46h1v1h-1zM17 46h1v1h-1zM22 46h1v1h-1zM26 46h1v1h-1zM0 47h1v1h-1zM21 47h1v1h-1zM32 47h1v1h-1zM34 47h1v1h-1zM0 48h1v1h-1zM2 48h1v1h-1zM6 48h1v1h-1zM9 48h1v1h-1zM17 48h1v1h-1zM23 48h1v1h-1zM29 48h1v1h-1zM4 49h1v1h-1zM9 49h1v1h-1zM12 49h1v1h-1zM17 49h1v1h-1zM22 49h1v1h-1zM25 49h1v1h-1zM28 49h1v1h-1zM31 49h1v1h-1zM32 49h1v1h-1zM33 49h1v1h-1zM0 50h1v1h-1zM4 50h1v1h-1zM10 50h1v1h-1zM11 50h1v1h-1zM22 50h1v1h-1zM30 50h1v1h-1zM18 51h1v1h-1zM24 51h1v1h-1zM36 51h1v1h-1zM3 52h1v1h-1zM13 52h1v1h-1zM14 52h1v1h-1zM7 53h1v1h-1zM9 53h1v1h-1zM17 53h1v1h-1zM35 53h1v1h-1zM2 54h1v1h-1zM6 54h1v1h-1zM18 54h1v1h-1zM24 54h1v1h-1zM4 55h1v1h-1zM19 55h1v1h-1zM22 55h1v1h-1zM24 55h1v1h-1zM28 55h1v1h-1zM2 56h1v1h-1zM9 56h1v1h-1zM27 56h1v1h-1zM37 56h1v1h-1zM1 57h1v1h-1zM4 57h1v1h-1zM18 57h1v1h-1zM25 57h1v1h-1zM32 57h1v1h-1zM29 58h1v1h-1zM3 59h1v1h-1zM5 59h1v1h-1zM27 59h1v1h-1zM36 59h1v1h-1zM8 60h1v1h-1zM9 60h1v1h-1zM12 60h1v1h-1zM18 60h1v1h-1zM28 60h1v1h-1zM33 60h1v1h-1zM37 60h1v1h-1zM3 61h1v1h-1zM26 61h1v1h-1zM6 62h1v1h-1zM7 62h1v1h-1zM30 62h1v1h-1zM1 63h1v1h-1zM6 63h1v1h-1zM7 63h1v1h-1zM11 63h1v1h-1zM18 63h1v1h-1zM20 63h1v1h-1zM23 63h1v1h-1zM29 63h1v1h-1zM0 64h1v1h-1zM12 64h1v1h-1zM32 64h1v1h-1zM9 65h1v1h-1zM28 65h1v1h-1zM37 65h1v1h-1zM9 66h1v1h-1zM16 66h1v1h-1zM25 66h1v1h-1zM26 66h1v1h-1zM5 67h1v1h-1zM12 67h1v1h-1zM19 67h1v1h-1zM20 67h1v1h-1zM26 67h1v1h-1zM31 67h1v1h-1zM32 67h1v1h-1zM34 67h1v1h-1zM3 68h1v1h-1zM17 68h1v1h-1zM18 68h1v1h-1zM30 68h1v1h-1zM32 68h1v1h-1zM35 68h1v1h-1zM19 69h1v1h-1zM31 69h1v1h-1zM10 70h1v1h-1zM12 70h1v1h-1zM13 70h1v1h-1zM15 70h1v1h-1zM18 70h1v1h-1zM26 70h1v1h-1zM34 70h1v1h-1zM37 70h1v1h-1zM2 71h1v1h-1zM10 71h1v1h-1zM12 71h1v1h-1zM27 71h1v1h-1zM31 71h1v1h-1zM21 72h1v1h-1zM25 72h1v1h-1zM3 73h1v1h-1zM4 73h1v1h-1zM7 73h1v1h-1zM11 73h1v1h-1zM13 73h1v1h-1zM14 73h1v1h-1zM17 73h1v1h-1zM19 73h1v1h-1zM21 73h1v1h-1zM23 73h1v1h-1zM26 73h1v1h-1zM5 74h1v1h-1zM7 74h1v1h-1zM11 74h1v1h-1zM13 74h1v1h-1zM14 74h1v1h-1zM17 74h1v1h-1zM19 74h1v1h-1zM20 74h1v1h-1zM26 74h1v1h-1zM33 74h1v1h-1zM34 74h1v1h-1zM20 75h1v1h-1zM30 75h1v1h-1zM37 75h1v1h-1zM4 76h1v1h-1zM6 76h1v1h-1zM15 76h1v1h-1zM0 77h1v1h-1zM2 77h1v1h-1zM4 77h1v1h-1zM8 77h1v1h-1zM9 77h1v1h-1zM18 78h1v1h-1zM31 78h1v1h-1zM5 79h1v1h-1zM19 80h1v1h-1zM20 80h1v1h-1zM21 80h1v1h-1zM32 80h1v1h-1zM8 81h1v1h-1zM13 81h1v1h-1zM17 81h1v1h-1zM19 81h1v1h-1zM23 81h1v1h-1zM28 81h1v1h-1zM29 81h1v1h-1zM30 81h1v1h-1zM6 82h1v1h-1zM9 82h1v1h-1zM14 82h1v1h-1zM19 82h1v1h-1zM23 82h1v1h-1zM34 82h1v1h-1zM0 83h1v1h-1zM5 83h1v1h-1zM19 83h1v1h-1zM1 84h1v1h-1zM4 84h1v1h-1zM10 84h1v1h-1zM15 84h1v1h-1zM16 84h1v1h-1zM20 84h1v1h-1zM22 84h1v1h-1zM23 84h1v1h-1zM25 84h1v1h-1zM32 84h1v1h-1zM36 84h1v1h-1zM5 85h1v1h-1zM12 85h1v1h-1zM27 85h1v1h-1zM30 85h1v1h-1zM31 85h1v1h-1zM5 86h1v1h-1zM6 86h1v1h-1zM37 86h1v1h-1zM7 87h1v1h-1zM9 87h1v1h-1zM15 87h1v1h-1zM16 87h1v1h-1zM23 87h1v1h-1zM1 88h1v1h-1zM2 88h1v1h-1zM9 88h1v1h-1zM15 88h1v1h-1zM33 89h1v1h-1zM34 89h1v1h-1zM37 89h1v1h-1zM3 90h1v1h-1zM33 90h1v1h-1zM37 90h1v1h-1zM7 91h1v1h-1zM15 91h1v1h-1zM18 91h1v1h-1zM24 91h1v1h-1zM2 92h1v1h-1zM7 92h1v1h-1zM8 92h1v1h-1zM14 92h1v1h-1zM20 92h1v1h-1zM0 93h1v1h-1zM2 93h1v1h-1zM12 93h1v1h-1zM25 93h1v1h-1zM5 94h1v1h-1zM6 94h1v1h-1zM22 94h1v1h-1zM23 94h1v1h-1zM29 94h1v1h-1zM30 94h1v1h-1zM8 95h1v1h-1zM26 95h1v1h-1zM29 95h1v1h-1zM35 95h1v1h-1zM37 95h1v1h-1z"/><path fill="rgb(181,181,181)" d="M9 0h1v1h-1zM22 0h1v1h-1zM37 0h1v1h-1zM10 1h1v1h-1zM15 1h1v1h-1zM22 1h1v1h-1zM34 1h1v1h-1zM35 1h1v1h-1zM37 1h1v1h-1zM10 2h1v1h-1zM12 2h1v1h-1zM14 2h1v1h-1zM24 2h1v1h-1zM26 2h1v1h-1zM5 3h1v1h-1zM11 3h1v1h-1zM12 3h1v1h-1zM25 3h1v1h-1zM27 3h1v1h-1zM29 3h1v1h-1zM30 3h1v1h-1zM34 3h1v1h-1zM4 4h1v1h-1zM8 4h1v1h-1zM11 4h1v1h-1zM14 4h1v1h-1zM18 4h1v1h-1zM22 4h1v1h-1zM34 4h1v1h-1zM35 4h1v1h-1zM7 5h1v1h-1zM33 5h1v1h-1zM1 6h1v1h-1zM34 6h1v1h-1zM3 7h1v1h-1zM10 7h1v1h-1zM13 7h1v1h-1zM31 7h1v1h-1zM33 7h1v1h-1zM0 8h1v1h-1zM1 8h1v1h-1zM8 8h1v1h-1zM9 8h1v1h-1zM14 8h1v1h-1zM18 8h1v1h-1zM28 8h1v1h-1zM29 8h1v1h-1zM35 8h1v1h-1zM4 9h1v1h-1zM6 9h1v1h-1zM20 9h1v1h-1zM23 9h1v1h-1zM28 9h1v1h-1zM33 9h1v1h-1zM3 10h1v1h-1zM4 10h1v1h-1zM14 10h1v1h-1zM16 10h1v1h-1zM21 10h1v1h-1zM24 10h1v1h-1zM19 11h1v1h-1zM33 11h1v1h-1zM37 11h1v1h-1zM2 12h1v1h-1zM3 12h1v1h-1zM19 12h1v1h-1zM37 12h1v1h-1zM0 13h1v1h-1zM19 13h1v1h-1zM33 13h1v1h-1zM14 14h1v1h-1zM25 14h1v1h-1zM26 14h1v1h-1zM28 14h1v1h-1zM32 14h1v1h-1zM33 14h1v1h-1zM36 14h1v1h-1zM0 15h1v1h-1zM1 15h1v1h-1zM6 15h1v1h-1zM8 15h1v1h-1zM21 15h1v1h-1zM27 15h1v1h-1zM35 15h1v1h-1zM19 16h1v1h-1zM22 16h1v1h-1zM24 16h1v1h-1zM27 16h1v1h-1zM32 16h1v1h-1zM36 16h1v1h-1zM37 16h1v1h-1zM4 17h1v1h-1zM9 17h1v1h-1zM15 17h1v1h-1zM30 17h1v1h-1zM32 17h1v1h-1zM36 17h1v1h-1zM0 18h1v1h-1zM5 18h1v1h-1zM7 18h1v1h-1zM32 18h1v1h-1zM36 18h1v1h-1zM34 19h1v1h-1zM35 19h1v1h-1zM0 20h1v1h-1zM2 20h1v1h-1zM35 20h1v1h-1zM0 21h1v1h-1zM4 21h1v1h-1zM24 21h1v1h-1zM0 22h1v1h-1zM17 22h1v1h-1zM21 22h1v1h-1zM24 22h1v1h-1zM25 22h1v1h-1zM27 22h1v1h-1zM30 22h1v1h-1zM21 23h1v1h-1zM26 23h1v1h-1zM3 24h1v1h-1zM18 24h1v1h-1zM19 24h1v1h-1zM26 24h1v1h-1zM29 24h1v1h-1zM31 24h1v1h-1zM3 25h1v1h-1zM16 25h1v1h-1zM21 25h1v1h-1zM30 25h1v1h-1zM35 25h1v1h-1zM37 25h1v1h-1zM6 26h1v1h-1zM10 26h1v1h-1zM16 26h1v1h-1zM18 26h1v1h-1zM19 26h1v1h-1zM36 26h1v1h-1zM1 27h1v1h-1zM3 27h1v1h-1zM8 27h1v1h-1zM10 28h1v1h-1zM13 28h1v1h-1zM14 28h1v1h-1zM21 28h1v1h-1zM28 28h1v1h-1zM32 28h1v1h-1zM2 29h1v1h-1zM10 29h1v1h-1zM17 29h1v1h-1zM27 29h1v1h-1zM6 30h1v1h-1zM20 30h1v1h-1zM25 30h1v1h-1zM33 30h1v1h-1zM2 31h1v1h-1zM8 31h1v1h-1zM9 31h1v1h-1zM10 31h1v1h-1zM15 31h1v1h-1zM2 32h1v1h-1zM7 32h1v1h-1zM13 32h1v1h-1zM16 32h1v1h-1zM17 32h1v1h-1zM23 32h1v1h-1zM24 32h1v1h-1zM29 32h1v1h-1zM31 32h1v1h-1zM32 32h1v1h-1zM34 33h1v1h-1zM36 33h1v1h-1zM17 34h1v1h-1zM1 35h1v1h-1zM15 35h1v1h-1zM20 35h1v1h-1zM24 35h1v1h-1zM25 35h1v1h-1zM27 35h1v1h-1zM29 35h1v1h-1zM31 35h1v1h-1zM33 35h1v1h-1zM14 36h1v1h-1zM16 36h1v1h-1zM24 36h1v1h-1zM30 36h1v1h-1zM0 37h1v1h-1zM7 37h1v1h-1zM10 37h1v1h-1zM14 37h1v1h-1zM17 37h1v1h-1zM22 37h1v1h-1zM24 37h1v1h-1zM30 37h1v1h-1zM32 37h1v1h-1zM6 38h1v1h-1zM8 38h1v1h-1zM9 38h1v1h-1zM13 38h1v1h-1zM21 38h1v1h-1zM33 38h1v1h-1zM35 38h1v1h-1zM37 38h1v1h-1zM5 39h1v1h-1zM6 39h1v1h-1zM17 39h1v1h-1zM18 39h1v1h-1zM20 39h1v1h-1zM18 40h1v1h-1zM0 41h1v1h-1zM19 41h1v1h-1zM7 42h1v1h-1zM12 42h1v1h-1zM14 42h1v1h-1zM18 42h1v1h-1zM19 42h1v1h-1zM23 42h1v1h-1zM33 42h1v1h-1zM35 42h1v1h-1zM16 43h1v1h-1zM19 43h1v1h-1zM25 43h1v1h-1zM29 43h1v1h-1zM35 43h1v1h-1zM0 44h1v1h-1zM19 44h1v1h-1zM24 44h1v1h-1zM25 44h1v1h-1zM28 44h1v1h-1zM30 44h1v1h-1zM0 45h1v1h-1zM1 45h1v1h-1zM8 45h1v1h-1zM9 45h1v1h-1zM12 45h1v1h-1zM18 45h1v1h-1zM22 45h1v1h-1zM24 45h1v1h-1zM25 45h1v1h-1zM31 45h1v1h-1zM32 45h1v1h-1zM34 45h1v1h-1zM13 46h1v1h-1zM20 46h1v1h-1zM21 46h1v1h-1zM32 46h1v1h-1zM37 46h1v1h-1zM9 47h1v1h-1zM36 47h1v1h-1zM33 48h1v1h-1zM1 49h1v1h-1zM6 49h1v1h-1zM7 49h1v1h-1zM21 49h1v1h-1zM35 49h1v1h-1zM12 50h1v1h-1zM15 50h1v1h-1zM27 50h1v1h-1zM28 50h1v1h-1zM8 51h1v1h-1zM25 51h1v1h-1zM30 51h1v1h-1zM2 52h1v1h-1zM5 52h1v1h-1zM8 52h1v1h-1zM18 52h1v1h-1zM29 52h1v1h-1zM32 52h1v1h-1zM33 52h1v1h-1zM1 53h1v1h-1zM3 53h1v1h-1zM12 53h1v1h-1zM16 53h1v1h-1zM19 53h1v1h-1zM23 53h1v1h-1zM25 53h1v1h-1zM17 54h1v1h-1zM18 55h1v1h-1zM37 55h1v1h-1zM3 56h1v1h-1zM7 56h1v1h-1zM8 56h1v1h-1zM15 56h1v1h-1zM19 56h1v1h-1zM20 56h1v1h-1zM22 56h1v1h-1zM30 56h1v1h-1zM33 56h1v1h-1zM36 56h1v1h-1zM6 57h1v1h-1zM9 57h1v1h-1zM13 57h1v1h-1zM14 57h1v1h-1zM19 57h1v1h-1zM20 57h1v1h-1zM23 57h1v1h-1zM26 57h1v1h-1zM35 57h1v1h-1zM2 58h1v1h-1zM5 58h1v1h-1zM16 58h1v1h-1zM19 58h1v1h-1zM28 58h1v1h-1zM30 58h1v1h-1zM32 58h1v1h-1zM37 58h1v1h-1zM0 59h1v1h-1zM6 59h1v1h-1zM8 59h1v1h-1zM18 59h1v1h-1zM20 59h1v1h-1zM24 59h1v1h-1zM25 59h1v1h-1zM29 59h1v1h-1zM31 59h1v1h-1zM32 59h1v1h-1zM34 59h1v1h-1zM35 59h1v1h-1zM2 60h1v1h-1zM4 60h1v1h-1zM11 60h1v1h-1zM15 60h1v1h-1zM17 60h1v1h-1zM32 60h1v1h-1zM36 60h1v1h-1zM10 61h1v1h-1zM30 61h1v1h-1zM35 61h1v1h-1zM33 62h1v1h-1zM2 63h1v1h-1zM10 63h1v1h-1zM15 63h1v1h-1zM17 63h1v1h-1zM22 63h1v1h-1zM32 63h1v1h-1zM35 63h1v1h-1zM8 64h1v1h-1zM14 64h1v1h-1zM23 64h1v1h-1zM25 64h1v1h-1zM29 64h1v1h-1zM30 64h1v1h-1zM33 64h1v1h-1zM1 65h1v1h-1zM5 65h1v1h-1zM23 65h1v1h-1zM35 65h1v1h-1zM5 66h1v1h-1zM7 66h1v1h-1zM13 66h1v1h-1zM24 66h1v1h-1zM27 66h1v1h-1zM33 66h1v1h-1zM35 66h1v1h-1zM8 67h1v1h-1zM13 67h1v1h-1zM15 67h1v1h-1zM28 67h1v1h-1zM33 67h1v1h-1zM36 67h1v1h-1zM36 68h1v1h-1zM37 68h1v1h-1zM15 69h1v1h-1zM20 69h1v1h-1zM33 69h1v1h-1zM37 69h1v1h-1zM0 70h1v1h-1zM7 70h1v1h-1zM11 70h1v1h-1zM14 70h1v1h-1zM19 70h1v1h-1zM22 70h1v1h-1zM24 70h1v1h-1zM36 70h1v1h-1zM3 71h1v1h-1zM4 71h1v1h-1zM7 71h1v1h-1zM9 71h1v1h-1zM11 71h1v1h-1zM19 71h1v1h-1zM22 71h1v1h-1zM28 71h1v1h-1zM36 71h1v1h-1zM1 72h1v1h-1zM9 72h1v1h-1zM12 72h1v1h-1zM0 73h1v1h-1zM10 73h1v1h-1zM12 73h1v1h-1zM33 73h1v1h-1zM1 74h1v1h-1zM9 74h1v1h-1zM36 75h1v1h-1zM18 76h1v1h-1zM35 76h1v1h-1zM3 77h1v1h-1zM24 77h1v1h-1zM32 77h1v1h-1zM35 77h1v1h-1zM0 78h1v1h-1zM11 78h1v1h-1zM12 78h1v1h-1zM13 78h1v1h-1zM16 78h1v1h-1zM25 78h1v1h-1zM33 78h1v1h-1zM0 79h1v1h-1zM31 79h1v1h-1zM34 79h1v1h-1zM1 80h1v1h-1zM2 80h1v1h-1zM9 80h1v1h-1zM14 80h1v1h-1zM15 80h1v1h-1zM17 80h1v1h-1zM18 80h1v1h-1zM23 80h1v1h-1zM26 80h1v1h-1zM27 80h1v1h-1zM36 80h1v1h-1zM4 81h1v1h-1zM6 81h1v1h-1zM12 81h1v1h-1zM26 81h1v1h-1zM0 82h1v1h-1zM3 82h1v1h-1zM7 82h1v1h-1zM16 82h1v1h-1zM17 82h1v1h-1zM35 82h1v1h-1zM16 83h1v1h-1zM18 83h1v1h-1zM34 83h1v1h-1zM5 84h1v1h-1zM8 84h1v1h-1zM33 84h1v1h-1zM35 84h1v1h-1zM1 85h1v1h-1zM2 85h1v1h-1zM3 85h1v1h-1zM6 85h1v1h-1zM20 85h1v1h-1zM22 85h1v1h-1zM28 85h1v1h-1zM11 86h1v1h-1zM16 86h1v1h-1zM36 86h1v1h-1zM3 87h1v1h-1zM8 87h1v1h-1zM18 87h1v1h-1zM20 87h1v1h-1zM24 87h1v1h-1zM27 87h1v1h-1zM35 88h1v1h-1zM1 89h1v1h-1zM36 89h1v1h-1zM3 91h1v1h-1zM37 91h1v1h-1zM22 92h1v1h-1zM23 92h1v1h-1zM30 92h1v1h-1zM31 92h1v1h-1zM13 93h1v1h-1zM20 93h1v1h-1zM4 94h1v1h-1zM8 94h1v1h-1zM18 94h1v1h-1zM25 94h1v1h-1zM27 94h1v1h-1zM37 94h1v1h-1zM1 95h1v1h-1zM6 95h1v1h-1zM11 95h1v1h-1zM12 95h1v1h-1zM13 95h1v1h-1zM14 95h1v1h-1zM16 95h1v1h-1zM19 95h1v1h-1zM22 95h1v1h-1zM27 95h1v1h-1zM28 95h1v1h-1zM32 95h1v1h-1zM34 95h1v1h-1zM36 95h1v1h-1z"/><path fill="rgb(202,202,202)" d="M1 0h1v1h-1zM4 0h1v1h-1zM17 0h1v1h-1zM27 1h1v1h-1zM28 1h1v1h-1zM29 1h1v1h-1zM30 1h1v1h-1zM36 1h1v1h-1zM0 2h1v1h-1zM8 2h1v1h-1zM9 2h1v1h-1zM20 2h1v1h-1zM25 2h1v1h-1zM30 2h1v1h-1zM34 2h1v1h-1zM3 3h1v1h-1zM4 3h1v1h-1zM6 3h1v1h-1zM14 3h1v1h-1zM15 3h1v1h-1zM17 3h1v1h-1zM20 3h1v1h-1zM21 3h1v1h-1zM24 3h1v1h-1zM28 3h1v1h-1zM32 3h1v1h-1zM36 3h1v1h-1zM6 4h1v1h-1zM30 4h1v1h-1zM33 4h1v1h-1zM37 4h1v1h-1zM0 5h1v1h-1zM1 5h1v1h-1zM3 5h1v1h-1zM4 5h1v1h-1zM37 5h1v1h-1zM1 7h1v1h-1zM20 7h1v1h-1zM22 7h1v1h-1zM28 7h1v1h-1zM2 8h1v1h-1zM13 8h1v1h-1zM15 8h1v1h-1zM20 8h1v1h-1zM23 8h1v1h-1zM32 8h1v1h-1zM2 9h1v1h-1zM3 9h1v1h-1zM11 9h1v1h-1zM12 9h1v1h-1zM14 9h1v1h-1zM21 9h1v1h-1zM31 9h1v1h-1zM36 9h1v1h-1zM1 10h1v1h-1zM5 10h1v1h-1zM13 10h1v1h-1zM27 10h1v1h-1zM28 10h1v1h-1zM3 11h1v1h-1zM15 11h1v1h-1zM16 11h1v1h-1zM25 11h1v1h-1zM30 11h1v1h-1zM34 11h1v1h-1zM35 12h1v1h-1zM1 13h1v1h-1zM5 13h1v1h-1zM6 13h1v1h-1zM9 14h1v1h-1zM18 14h1v1h-1zM29 14h1v1h-1zM31 14h1v1h-1zM13 15h1v1h-1zM18 15h1v1h-1zM34 15h1v1h-1zM36 15h1v1h-1zM37 15h1v1h-1zM3 16h1v1h-1zM6 16h1v1h-1zM14 16h1v1h-1zM17 16h1v1h-1zM18 16h1v1h-1zM23 16h1v1h-1zM11 17h1v1h-1zM12 17h1v1h-1zM18 17h1v1h-1zM24 17h1v1h-1zM27 17h1v1h-1zM2 18h1v1h-1zM16 18h1v1h-1zM18 18h1v1h-1zM20 18h1v1h-1zM24 18h1v1h-1zM1 19h1v1h-1zM5 19h1v1h-1zM4 20h1v1h-1zM3 21h1v1h-1zM7 21h1v1h-1zM8 21h1v1h-1zM33 21h1v1h-1zM37 21h1v1h-1zM9 22h1v1h-1zM20 22h1v1h-1zM3 23h1v1h-1zM7 23h1v1h-1zM23 23h1v1h-1zM33 23h1v1h-1zM34 23h1v1h-1zM4 24h1v1h-1zM11 24h1v1h-1zM23 24h1v1h-1zM27 24h1v1h-1zM36 24h1v1h-1zM37 24h1v1h-1zM1 25h1v1h-1zM4 25h1v1h-1zM7 25h1v1h-1zM8 25h1v1h-1zM19 25h1v1h-1zM20 25h1v1h-1zM32 25h1v1h-1zM33 25h1v1h-1zM36 25h1v1h-1zM37 26h1v1h-1zM30 27h1v1h-1zM0 28h1v1h-1zM4 28h1v1h-1zM8 28h1v1h-1zM11 28h1v1h-1zM12 28h1v1h-1zM15 28h1v1h-1zM30 28h1v1h-1zM31 28h1v1h-1zM35 28h1v1h-1zM0 29h1v1h-1zM3 29h1v1h-1zM8 29h1v1h-1zM11 29h1v1h-1zM16 29h1v1h-1zM28 29h1v1h-1zM35 29h1v1h-1zM37 29h1v1h-1zM4 30h1v1h-1zM7 30h1v1h-1zM34 30h1v1h-1zM1 31h1v1h-1zM3 31h1v1h-1zM13 31h1v1h-1zM19 31h1v1h-1zM20 31h1v1h-1zM22 31h1v1h-1zM23 31h1v1h-1zM36 31h1v1h-1zM3 32h1v1h-1zM8 32h1v1h-1zM34 32h1v1h-1zM35 32h1v1h-1zM32 34h1v1h-1zM35 34h1v1h-1zM37 34h1v1h-1zM21 35h1v1h-1zM23 35h1v1h-1zM34 35h1v1h-1zM37 35h1v1h-1zM11 36h1v1h-1zM13 36h1v1h-1zM17 36h1v1h-1zM18 36h1v1h-1zM31 36h1v1h-1zM32 36h1v1h-1zM37 36h1v1h-1zM2 37h1v1h-1zM6 37h1v1h-1zM29 37h1v1h-1zM37 37h1v1h-1zM0 38h1v1h-1zM2 38h1v1h-1zM3 38h1v1h-1zM7 38h1v1h-1zM15 38h1v1h-1zM20 38h1v1h-1zM24 38h1v1h-1zM27 38h1v1h-1zM30 38h1v1h-1zM31 38h1v1h-1zM32 38h1v1h-1zM2 39h1v1h-1zM4 39h1v1h-1zM14 39h1v1h-1zM19 39h1v1h-1zM36 39h1v1h-1zM37 39h1v1h-1zM33 40h1v1h-1zM22 41h1v1h-1zM17 42h1v1h-1zM27 42h1v1h-1zM37 42h1v1h-1zM1 43h1v1h-1zM2 43h1v1h-1zM11 43h1v1h-1zM15 43h1v1h-1zM18 43h1v1h-1zM21 43h1v1h-1zM31 43h1v1h-1zM34 43h1v1h-1zM37 43h1v1h-1zM4 44h1v1h-1zM7 44h1v1h-1zM11 44h1v1h-1zM18 44h1v1h-1zM21 44h1v1h-1zM22 44h1v1h-1zM26 44h1v1h-1zM35 44h1v1h-1zM37 44h1v1h-1zM2 45h1v1h-1zM13 45h1v1h-1zM16 45h1v1h-1zM19 45h1v1h-1zM23 45h1v1h-1zM26 45h1v1h-1zM27 45h1v1h-1zM33 45h1v1h-1zM35 45h1v1h-1zM0 46h1v1h-1zM8 46h1v1h-1zM14 46h1v1h-1zM19 46h1v1h-1zM36 46h1v1h-1zM37 47h1v1h-1zM19 48h1v1h-1zM36 48h1v1h-1zM0 49h1v1h-1zM3 49h1v1h-1zM11 49h1v1h-1zM19 49h1v1h-1zM30 49h1v1h-1zM6 50h1v1h-1zM8 50h1v1h-1zM13 50h1v1h-1zM17 50h1v1h-1zM19 50h1v1h-1zM24 50h1v1h-1zM26 50h1v1h-1zM32 50h1v1h-1zM33 50h1v1h-1zM36 50h1v1h-1zM2 51h1v1h-1zM6 51h1v1h-1zM10 51h1v1h-1zM14 51h1v1h-1zM21 51h1v1h-1zM23 51h1v1h-1zM35 51h1v1h-1zM37 51h1v1h-1zM0 52h1v1h-1zM1 52h1v1h-1zM9 52h1v1h-1zM10 52h1v1h-1zM11 52h1v1h-1zM21 52h1v1h-1zM24 52h1v1h-1zM25 52h1v1h-1zM26 52h1v1h-1zM36 52h1v1h-1zM37 52h1v1h-1zM4 53h1v1h-1zM6 53h1v1h-1zM11 53h1v1h-1zM15 53h1v1h-1zM27 53h1v1h-1zM32 53h1v1h-1zM0 54h1v1h-1zM0 55h1v1h-1zM1 55h1v1h-1zM5 55h1v1h-1zM16 55h1v1h-1zM12 56h1v1h-1zM21 56h1v1h-1zM23 56h1v1h-1zM28 56h1v1h-1zM29 56h1v1h-1zM10 57h1v1h-1zM21 57h1v1h-1zM29 57h1v1h-1zM1 58h1v1h-1zM3 58h1v1h-1zM4 58h1v1h-1zM10 58h1v1h-1zM22 58h1v1h-1zM27 58h1v1h-1zM1 59h1v1h-1zM2 59h1v1h-1zM19 59h1v1h-1zM3 60h1v1h-1zM6 60h1v1h-1zM7 60h1v1h-1zM13 60h1v1h-1zM16 60h1v1h-1zM20 60h1v1h-1zM1 61h1v1h-1zM36 62h1v1h-1zM0 63h1v1h-1zM5 63h1v1h-1zM8 63h1v1h-1zM13 63h1v1h-1zM27 63h1v1h-1zM31 63h1v1h-1zM37 63h1v1h-1zM1 64h1v1h-1zM3 64h1v1h-1zM9 64h1v1h-1zM11 64h1v1h-1zM16 64h1v1h-1zM17 64h1v1h-1zM18 64h1v1h-1zM20 64h1v1h-1zM22 64h1v1h-1zM31 64h1v1h-1zM3 65h1v1h-1zM8 65h1v1h-1zM14 65h1v1h-1zM17 65h1v1h-1zM18 65h1v1h-1zM21 65h1v1h-1zM29 65h1v1h-1zM31 65h1v1h-1zM33 65h1v1h-1zM36 65h1v1h-1zM12 66h1v1h-1zM14 66h1v1h-1zM18 66h1v1h-1zM1 67h1v1h-1zM6 67h1v1h-1zM17 67h1v1h-1zM1 68h1v1h-1zM4 68h1v1h-1zM16 68h1v1h-1zM1 70h1v1h-1zM2 70h1v1h-1zM3 70h1v1h-1zM5 70h1v1h-1zM8 70h1v1h-1zM17 70h1v1h-1zM25 70h1v1h-1zM0 71h1v1h-1zM1 71h1v1h-1zM18 71h1v1h-1zM26 71h1v1h-1zM33 71h1v1h-1zM35 71h1v1h-1zM5 72h1v1h-1zM6 72h1v1h-1zM10 72h1v1h-1zM11 72h1v1h-1zM15 72h1v1h-1zM16 72h1v1h-1zM18 72h1v1h-1zM30 72h1v1h-1zM35 72h1v1h-1zM36 72h1v1h-1zM5 73h1v1h-1zM20 73h1v1h-1zM24 73h1v1h-1zM27 73h1v1h-1zM31 73h1v1h-1zM32 73h1v1h-1zM34 73h1v1h-1zM36 73h1v1h-1zM36 74h1v1h-1zM33 75h1v1h-1zM1 76h1v1h-1zM30 76h1v1h-1zM5 77h1v1h-1zM14 77h1v1h-1zM21 77h1v1h-1zM27 77h1v1h-1zM31 77h1v1h-1zM34 77h1v1h-1zM36 77h1v1h-1zM7 78h1v1h-1zM15 78h1v1h-1zM26 78h1v1h-1zM37 78h1v1h-1zM3 79h1v1h-1zM7 79h1v1h-1zM9 79h1v1h-1zM10 79h1v1h-1zM22 79h1v1h-1zM25 79h1v1h-1zM32 79h1v1h-1zM36 79h1v1h-1zM37 79h1v1h-1zM3 80h1v1h-1zM5 80h1v1h-1zM24 80h1v1h-1zM28 80h1v1h-1zM35 80h1v1h-1zM37 80h1v1h-1zM0 81h1v1h-1zM3 81h1v1h-1zM9 81h1v1h-1zM18 81h1v1h-1zM32 81h1v1h-1zM33 81h1v1h-1zM37 81h1v1h-1zM5 82h1v1h-1zM29 82h1v1h-1zM2 83h1v1h-1zM3 83h1v1h-1zM13 83h1v1h-1zM15 83h1v1h-1zM22 83h1v1h-1zM36 83h1v1h-1zM0 84h1v1h-1zM12 84h1v1h-1zM17 84h1v1h-1zM31 84h1v1h-1zM34 84h1v1h-1zM11 85h1v1h-1zM13 85h1v1h-1zM34 85h1v1h-1zM3 86h1v1h-1zM4 86h1v1h-1zM10 86h1v1h-1zM14 86h1v1h-1zM17 86h1v1h-1zM21 86h1v1h-1zM22 86h1v1h-1zM23 86h1v1h-1zM31 86h1v1h-1zM33 86h1v1h-1zM35 86h1v1h-1zM0 87h1v1h-1zM10 87h1v1h-1zM11 87h1v1h-1zM17 87h1v1h-1zM22 87h1v1h-1zM32 87h1v1h-1zM35 89h1v1h-1zM36 91h1v1h-1zM5 92h1v1h-1zM9 92h1v1h-1zM18 92h1v1h-1zM19 92h1v1h-1zM37 92h1v1h-1zM5 93h1v1h-1zM23 93h1v1h-1zM24 93h1v1h-1zM27 93h1v1h-1zM30 93h1v1h-1zM0 94h1v1h-1zM7 94h1v1h-1zM15 94h1v1h-1zM20 94h1v1h-1zM24 94h1v1h-1zM28 94h1v1h-1zM35 94h1v1h-1zM3 95h1v1h-1zM33 95h1v1h-1z"/><path fill="rgb(224,224,224)" d="M2 0h1v1h-1zM2 1h1v1h-1zM8 1h1v1h-1zM16 1h1v1h-1zM21 1h1v1h-1zM24 1h1v1h-1zM26 1h1v1h-1zM33 1h1v1h-1zM6 2h1v1h-1zM11 2h1v1h-1zM13 2h1v1h-1zM15 2h1v1h-1zM17 2h1v1h-1zM29 2h1v1h-1zM18 3h1v1h-1zM19 3h1v1h-1zM31 3h1v1h-1zM1 4h1v1h-1zM36 4h1v1h-1zM2 6h1v1h-1zM37 6h1v1h-1zM32 7h1v1h-1zM35 7h1v1h-1zM37 7h1v1h-1zM16 8h1v1h-1zM25 8h1v1h-1zM0 9h1v1h-1zM9 9h1v1h-1zM10 9h1v1h-1zM13 9h1v1h-1zM22 9h1v1h-1zM35 9h1v1h-1zM2 10h1v1h-1zM8 10h1v1h-1zM18 10h1v1h-1zM19 10h1v1h-1zM26 10h1v1h-1zM30 10h1v1h-1zM35 10h1v1h-1zM36 10h1v1h-1zM20 11h1v1h-1zM29 11h1v1h-1zM35 11h1v1h-1zM23 12h1v1h-1zM16 13h1v1h-1zM17 13h1v1h-1zM35 13h1v1h-1zM2 14h1v1h-1zM8 14h1v1h-1zM20 14h1v1h-1zM22 14h1v1h-1zM34 14h1v1h-1zM5 15h1v1h-1zM11 15h1v1h-1zM17 15h1v1h-1zM26 15h1v1h-1zM29 15h1v1h-1zM1 16h1v1h-1zM7 16h1v1h-1zM12 16h1v1h-1zM21 16h1v1h-1zM25 16h1v1h-1zM28 16h1v1h-1zM34 16h1v1h-1zM35 16h1v1h-1zM0 17h1v1h-1zM1 17h1v1h-1zM3 17h1v1h-1zM13 17h1v1h-1zM29 17h1v1h-1zM33 17h1v1h-1zM3 18h1v1h-1zM10 18h1v1h-1zM17 18h1v1h-1zM3 19h1v1h-1zM1 21h1v1h-1zM6 21h1v1h-1zM7 22h1v1h-1zM12 22h1v1h-1zM13 22h1v1h-1zM16 22h1v1h-1zM22 22h1v1h-1zM28 22h1v1h-1zM29 22h1v1h-1zM4 23h1v1h-1zM10 23h1v1h-1zM15 23h1v1h-1zM17 23h1v1h-1zM18 23h1v1h-1zM28 23h1v1h-1zM36 23h1v1h-1zM37 23h1v1h-1zM0 24h1v1h-1zM2 24h1v1h-1zM5 24h1v1h-1zM7 24h1v1h-1zM8 24h1v1h-1zM16 24h1v1h-1zM33 24h1v1h-1zM34 24h1v1h-1zM35 24h1v1h-1zM23 25h1v1h-1zM26 25h1v1h-1zM31 25h1v1h-1zM1 26h1v1h-1zM14 27h1v1h-1zM31 27h1v1h-1zM18 28h1v1h-1zM9 29h1v1h-1zM21 29h1v1h-1zM23 29h1v1h-1zM32 29h1v1h-1zM36 29h1v1h-1zM2 30h1v1h-1zM3 30h1v1h-1zM5 30h1v1h-1zM12 30h1v1h-1zM14 30h1v1h-1zM15 30h1v1h-1zM16 30h1v1h-1zM21 30h1v1h-1zM31 30h1v1h-1zM32 30h1v1h-1zM37 30h1v1h-1zM24 31h1v1h-1zM32 31h1v1h-1zM34 31h1v1h-1zM35 31h1v1h-1zM33 32h1v1h-1zM15 34h1v1h-1zM3 35h1v1h-1zM22 35h1v1h-1zM0 36h1v1h-1zM5 36h1v1h-1zM8 36h1v1h-1zM26 36h1v1h-1zM29 36h1v1h-1zM4 37h1v1h-1zM11 37h1v1h-1zM13 37h1v1h-1zM20 37h1v1h-1zM21 37h1v1h-1zM35 37h1v1h-1zM14 38h1v1h-1zM22 38h1v1h-1zM28 38h1v1h-1zM1 39h1v1h-1zM33 39h1v1h-1zM0 40h1v1h-1zM5 42h1v1h-1zM31 42h1v1h-1zM32 42h1v1h-1zM6 43h1v1h-1zM14 43h1v1h-1zM1 44h1v1h-1zM5 44h1v1h-1zM6 44h1v1h-1zM8 44h1v1h-1zM10 44h1v1h-1zM12 44h1v1h-1zM14 44h1v1h-1zM15 44h1v1h-1zM20 44h1v1h-1zM23 44h1v1h-1zM33 44h1v1h-1zM34 44h1v1h-1zM11 45h1v1h-1zM29 45h1v1h-1zM1 46h1v1h-1zM18 46h1v1h-1zM31 46h1v1h-1zM1 48h1v1h-1zM2 49h1v1h-1zM8 49h1v1h-1zM15 49h1v1h-1zM20 50h1v1h-1zM25 50h1v1h-1zM1 51h1v1h-1zM9 51h1v1h-1zM11 51h1v1h-1zM12 51h1v1h-1zM13 51h1v1h-1zM17 51h1v1h-1zM20 51h1v1h-1zM26 51h1v1h-1zM32 51h1v1h-1zM34 51h1v1h-1zM15 52h1v1h-1zM19 52h1v1h-1zM20 52h1v1h-1zM23 52h1v1h-1zM27 52h1v1h-1zM28 52h1v1h-1zM31 52h1v1h-1zM20 53h1v1h-1zM31 53h1v1h-1zM34 53h1v1h-1zM20 54h1v1h-1zM37 54h1v1h-1zM32 55h1v1h-1zM34 55h1v1h-1zM11 56h1v1h-1zM14 56h1v1h-1zM16 56h1v1h-1zM31 56h1v1h-1zM3 57h1v1h-1zM8 57h1v1h-1zM11 57h1v1h-1zM17 57h1v1h-1zM28 57h1v1h-1zM31 57h1v1h-1zM33 57h1v1h-1zM36 57h1v1h-1zM0 58h1v1h-1zM6 58h1v1h-1zM14 58h1v1h-1zM15 58h1v1h-1zM17 58h1v1h-1zM25 58h1v1h-1zM34 58h1v1h-1zM16 59h1v1h-1zM21 59h1v1h-1zM1 60h1v1h-1zM5 60h1v1h-1zM37 62h1v1h-1zM19 63h1v1h-1zM28 63h1v1h-1zM33 63h1v1h-1zM2 64h1v1h-1zM4 64h1v1h-1zM6 64h1v1h-1zM7 64h1v1h-1zM24 64h1v1h-1zM26 64h1v1h-1zM27 64h1v1h-1zM34 64h1v1h-1zM4 65h1v1h-1zM7 65h1v1h-1zM16 65h1v1h-1zM22 65h1v1h-1zM25 65h1v1h-1zM2 66h1v1h-1zM11 66h1v1h-1zM15 66h1v1h-1zM17 66h1v1h-1zM20 66h1v1h-1zM23 66h1v1h-1zM28 66h1v1h-1zM30 66h1v1h-1zM31 66h1v1h-1zM0 67h1v1h-1zM23 68h1v1h-1zM35 69h1v1h-1zM4 70h1v1h-1zM6 70h1v1h-1zM35 70h1v1h-1zM21 71h1v1h-1zM24 71h1v1h-1zM30 71h1v1h-1zM34 71h1v1h-1zM0 72h1v1h-1zM2 72h1v1h-1zM4 72h1v1h-1zM7 72h1v1h-1zM19 72h1v1h-1zM22 72h1v1h-1zM23 72h1v1h-1zM26 72h1v1h-1zM31 72h1v1h-1zM2 73h1v1h-1zM9 73h1v1h-1zM18 73h1v1h-1zM2 74h1v1h-1zM4 74h1v1h-1zM16 74h1v1h-1zM2 76h1v1h-1zM33 77h1v1h-1zM9 78h1v1h-1zM14 78h1v1h-1zM19 78h1v1h-1zM23 78h1v1h-1zM27 78h1v1h-1zM34 78h1v1h-1zM11 79h1v1h-1zM16 79h1v1h-1zM17 79h1v1h-1zM18 79h1v1h-1zM20 79h1v1h-1zM23 79h1v1h-1zM24 79h1v1h-1zM28 79h1v1h-1zM7 80h1v1h-1zM30 80h1v1h-1zM31 80h1v1h-1zM20 81h1v1h-1zM24 81h1v1h-1zM7 83h1v1h-1zM26 83h1v1h-1zM29 83h1v1h-1zM30 83h1v1h-1zM3 84h1v1h-1zM7 84h1v1h-1zM14 84h1v1h-1zM21 84h1v1h-1zM28 84h1v1h-1zM30 84h1v1h-1zM15 85h1v1h-1zM16 85h1v1h-1zM19 85h1v1h-1zM24 85h1v1h-1zM25 85h1v1h-1zM32 85h1v1h-1zM1 86h1v1h-1zM7 86h1v1h-1zM12 86h1v1h-1zM13 86h1v1h-1zM20 86h1v1h-1zM25 86h1v1h-1zM28 86h1v1h-1zM29 86h1v1h-1zM30 86h1v1h-1zM34 86h1v1h-1zM1 87h1v1h-1zM14 87h1v1h-1zM21 87h1v1h-1zM28 87h1v1h-1zM30 87h1v1h-1zM37 87h1v1h-1zM16 88h1v1h-1zM4 89h1v1h-1zM1 91h1v1h-1zM2 91h1v1h-1zM4 91h1v1h-1zM8 91h1v1h-1zM32 91h1v1h-1zM4 92h1v1h-1zM15 92h1v1h-1zM21 92h1v1h-1zM24 92h1v1h-1zM33 92h1v1h-1zM4 93h1v1h-1zM8 93h1v1h-1zM9 93h1v1h-1zM11 93h1v1h-1zM14 93h1v1h-1zM21 93h1v1h-1zM22 93h1v1h-1zM26 93h1v1h-1zM33 94h1v1h-1zM5 95h1v1h-1zM20 95h1v1h-1z"/><path fill="rgb(245,245,245)" d="M0 0h1v1h-1zM3 0h1v1h-1zM18 0h1v1h-1zM33 0h1v1h-1zM34 0h1v1h-1zM36 0h1v1h-1zM0 1h1v1h-1zM4 1h1v1h-1zM5 1h1v1h-1zM7 1h1v1h-1zM11 1h1v1h-1zM12 1h1v1h-1zM14 1h1v1h-1zM18 1h1v1h-1zM19 1h1v1h-1zM20 1h1v1h-1zM25 1h1v1h-1zM31 1h1v1h-1zM32 1h1v1h-1zM1 2h1v1h-1zM2 2h1v1h-1zM4 2h1v1h-1zM5 2h1v1h-1zM7 2h1v1h-1zM19 2h1v1h-1zM21 2h1v1h-1zM22 2h1v1h-1zM23 2h1v1h-1zM27 2h1v1h-1zM31 2h1v1h-1zM32 2h1v1h-1zM33 2h1v1h-1zM35 2h1v1h-1zM37 2h1v1h-1zM2 3h1v1h-1zM9 3h1v1h-1zM13 3h1v1h-1zM16 3h1v1h-1zM23 3h1v1h-1zM26 3h1v1h-1zM35 3h1v1h-1zM26 4h1v1h-1zM31 4h1v1h-1zM5 7h1v1h-1zM9 7h1v1h-1zM15 7h1v1h-1zM17 7h1v1h-1zM3 8h1v1h-1zM5 8h1v1h-1zM7 8h1v1h-1zM11 8h1v1h-1zM12 8h1v1h-1zM19 8h1v1h-1zM21 8h1v1h-1zM22 8h1v1h-1zM24 8h1v1h-1zM30 8h1v1h-1zM33 8h1v1h-1zM1 9h1v1h-1zM5 9h1v1h-1zM8 9h1v1h-1zM15 9h1v1h-1zM17 9h1v1h-1zM18 9h1v1h-1zM19 9h1v1h-1zM26 9h1v1h-1zM27 9h1v1h-1zM29 9h1v1h-1zM30 9h1v1h-1zM32 9h1v1h-1zM0 10h1v1h-1zM6 10h1v1h-1zM7 10h1v1h-1zM9 10h1v1h-1zM15 10h1v1h-1zM22 10h1v1h-1zM23 10h1v1h-1zM31 10h1v1h-1zM33 10h1v1h-1zM34 10h1v1h-1zM37 10h1v1h-1zM0 11h1v1h-1zM4 11h1v1h-1zM3 14h1v1h-1zM5 14h1v1h-1zM12 14h1v1h-1zM13 14h1v1h-1zM30 14h1v1h-1zM35 14h1v1h-1zM37 14h1v1h-1zM3 15h1v1h-1zM4 15h1v1h-1zM14 15h1v1h-1zM28 15h1v1h-1zM30 15h1v1h-1zM32 15h1v1h-1zM0 16h1v1h-1zM2 16h1v1h-1zM4 16h1v1h-1zM5 16h1v1h-1zM8 16h1v1h-1zM9 16h1v1h-1zM10 16h1v1h-1zM11 16h1v1h-1zM15 16h1v1h-1zM16 16h1v1h-1zM20 16h1v1h-1zM26 16h1v1h-1zM29 16h1v1h-1zM2 17h1v1h-1zM6 17h1v1h-1zM7 17h1v1h-1zM14 17h1v1h-1zM16 17h1v1h-1zM17 17h1v1h-1zM20 17h1v1h-1zM21 17h1v1h-1zM23 17h1v1h-1zM26 17h1v1h-1zM28 17h1v1h-1zM34 17h1v1h-1zM35 18h1v1h-1zM2 22h1v1h-1zM4 22h1v1h-1zM5 22h1v1h-1zM8 22h1v1h-1zM15 22h1v1h-1zM19 22h1v1h-1zM26 22h1v1h-1zM32 22h1v1h-1zM35 22h1v1h-1zM37 22h1v1h-1zM0 23h1v1h-1zM2 23h1v1h-1zM5 23h1v1h-1zM9 23h1v1h-1zM14 23h1v1h-1zM16 23h1v1h-1zM19 23h1v1h-1zM20 23h1v1h-1zM24 23h1v1h-1zM27 23h1v1h-1zM29 23h1v1h-1zM31 23h1v1h-1zM32 23h1v1h-1zM1 24h1v1h-1zM6 24h1v1h-1zM10 24h1v1h-1zM12 24h1v1h-1zM13 24h1v1h-1zM24 24h1v1h-1zM0 25h1v1h-1zM2 25h1v1h-1zM6 25h1v1h-1zM3 28h1v1h-1zM37 28h1v1h-1zM4 29h1v1h-1zM6 29h1v1h-1zM12 29h1v1h-1zM13 29h1v1h-1zM22 29h1v1h-1zM24 29h1v1h-1zM25 29h1v1h-1zM26 29h1v1h-1zM33 29h1v1h-1zM34 29h1v1h-1zM1 30h1v1h-1zM8 30h1v1h-1zM9 30h1v1h-1zM10 30h1v1h-1zM11 30h1v1h-1zM17 30h1v1h-1zM18 30h1v1h-1zM19 30h1v1h-1zM22 30h1v1h-1zM24 30h1v1h-1zM27 30h1v1h-1zM28 30h1v1h-1zM35 30h1v1h-1zM36 30h1v1h-1zM4 31h1v1h-1zM6 31h1v1h-1zM16 31h1v1h-1zM18 31h1v1h-1zM25 31h1v1h-1zM31 31h1v1h-1zM33 31h1v1h-1zM37 31h1v1h-1zM0 32h1v1h-1zM15 32h1v1h-1zM37 32h1v1h-1zM2 33h1v1h-1zM4 35h1v1h-1zM5 35h1v1h-1zM11 35h1v1h-1zM1 36h1v1h-1zM4 36h1v1h-1zM7 36h1v1h-1zM10 36h1v1h-1zM12 36h1v1h-1zM20 36h1v1h-1zM21 36h1v1h-1zM23 36h1v1h-1zM34 36h1v1h-1zM35 36h1v1h-1zM1 37h1v1h-1zM3 37h1v1h-1zM5 37h1v1h-1zM9 37h1v1h-1zM15 37h1v1h-1zM25 37h1v1h-1zM27 37h1v1h-1zM28 37h1v1h-1zM31 37h1v1h-1zM33 37h1v1h-1zM5 38h1v1h-1zM12 38h1v1h-1zM16 38h1v1h-1zM23 38h1v1h-1zM25 38h1v1h-1zM29 38h1v1h-1zM34 38h1v1h-1zM36 38h1v1h-1zM3 39h1v1h-1zM1 40h1v1h-1zM0 42h1v1h-1zM1 42h1v1h-1zM6 42h1v1h-1zM10 42h1v1h-1zM20 42h1v1h-1zM34 42h1v1h-1zM36 42h1v1h-1zM0 43h1v1h-1zM3 43h1v1h-1zM5 43h1v1h-1zM7 43h1v1h-1zM8 43h1v1h-1zM9 43h1v1h-1zM13 43h1v1h-1zM22 43h1v1h-1zM24 43h1v1h-1zM28 43h1v1h-1zM32 43h1v1h-1zM33 43h1v1h-1zM36 43h1v1h-1zM2 44h1v1h-1zM3 44h1v1h-1zM13 44h1v1h-1zM16 44h1v1h-1zM17 44h1v1h-1zM27 44h1v1h-1zM29 44h1v1h-1zM31 44h1v1h-1zM5 45h1v1h-1zM6 45h1v1h-1zM7 45h1v1h-1zM15 45h1v1h-1zM35 46h1v1h-1zM5 48h1v1h-1zM1 50h1v1h-1zM2 50h1v1h-1zM3 50h1v1h-1zM5 50h1v1h-1zM16 50h1v1h-1zM18 50h1v1h-1zM21 50h1v1h-1zM37 50h1v1h-1zM0 51h1v1h-1zM3 51h1v1h-1zM4 51h1v1h-1zM5 51h1v1h-1zM15 51h1v1h-1zM16 51h1v1h-1zM27 51h1v1h-1zM29 51h1v1h-1zM33 51h1v1h-1zM4 52h1v1h-1zM6 52h1v1h-1zM7 52h1v1h-1zM12 52h1v1h-1zM16 52h1v1h-1zM17 52h1v1h-1zM22 52h1v1h-1zM30 52h1v1h-1zM34 52h1v1h-1zM35 52h1v1h-1zM5 53h1v1h-1zM8 53h1v1h-1zM6 56h1v1h-1zM34 56h1v1h-1zM35 56h1v1h-1zM0 57h1v1h-1zM2 57h1v1h-1zM5 57h1v1h-1zM15 57h1v1h-1zM16 57h1v1h-1zM27 57h1v1h-1zM30 57h1v1h-1zM34 57h1v1h-1zM7 58h1v1h-1zM8 58h1v1h-1zM11 58h1v1h-1zM12 58h1v1h-1zM13 58h1v1h-1zM20 58h1v1h-1zM21 58h1v1h-1zM23 58h1v1h-1zM24 58h1v1h-1zM26 58h1v1h-1zM31 58h1v1h-1zM33 58h1v1h-1zM35 58h1v1h-1zM36 58h1v1h-1zM4 59h1v1h-1zM7 59h1v1h-1zM9 59h1v1h-1zM10 59h1v1h-1zM11 59h1v1h-1zM13 59h1v1h-1zM22 59h1v1h-1zM26 59h1v1h-1zM28 59h1v1h-1zM30 59h1v1h-1zM33 59h1v1h-1zM0 60h1v1h-1zM37 61h1v1h-1zM16 63h1v1h-1zM24 63h1v1h-1zM36 63h1v1h-1zM13 64h1v1h-1zM15 64h1v1h-1zM21 64h1v1h-1zM28 64h1v1h-1zM36 64h1v1h-1zM37 64h1v1h-1zM0 65h1v1h-1zM6 65h1v1h-1zM10 65h1v1h-1zM12 65h1v1h-1zM13 65h1v1h-1zM15 65h1v1h-1zM20 65h1v1h-1zM26 65h1v1h-1zM32 65h1v1h-1zM34 65h1v1h-1zM0 66h1v1h-1zM1 66h1v1h-1zM3 66h1v1h-1zM6 66h1v1h-1zM8 66h1v1h-1zM10 66h1v1h-1zM22 66h1v1h-1zM32 66h1v1h-1zM34 66h1v1h-1zM37 66h1v1h-1zM7 67h1v1h-1zM19 68h1v1h-1zM29 70h1v1h-1zM31 70h1v1h-1zM6 71h1v1h-1zM14 71h1v1h-1zM15 71h1v1h-1zM16 71h1v1h-1zM17 71h1v1h-1zM23 71h1v1h-1zM25 71h1v1h-1zM29 71h1v1h-1zM32 71h1v1h-1zM37 71h1v1h-1zM8 72h1v1h-1zM13 72h1v1h-1zM14 72h1v1h-1zM20 72h1v1h-1zM24 72h1v1h-1zM29 72h1v1h-1zM32 72h1v1h-1zM34 72h1v1h-1zM6 73h1v1h-1zM15 73h1v1h-1zM29 73h1v1h-1zM1 78h1v1h-1zM2 78h1v1h-1zM3 78h1v1h-1zM5 78h1v1h-1zM17 78h1v1h-1zM20 78h1v1h-1zM21 78h1v1h-1zM24 78h1v1h-1zM28 78h1v1h-1zM29 78h1v1h-1zM30 78h1v1h-1zM32 78h1v1h-1zM35 78h1v1h-1zM1 79h1v1h-1zM2 79h1v1h-1zM4 79h1v1h-1zM6 79h1v1h-1zM8 79h1v1h-1zM12 79h1v1h-1zM14 79h1v1h-1zM15 79h1v1h-1zM19 79h1v1h-1zM26 79h1v1h-1zM27 79h1v1h-1zM29 79h1v1h-1zM30 79h1v1h-1zM33 79h1v1h-1zM35 79h1v1h-1zM0 80h1v1h-1zM4 80h1v1h-1zM8 80h1v1h-1zM10 80h1v1h-1zM11 80h1v1h-1zM12 80h1v1h-1zM13 80h1v1h-1zM16 80h1v1h-1zM25 80h1v1h-1zM29 80h1v1h-1zM1 81h1v1h-1zM7 81h1v1h-1zM31 81h1v1h-1zM34 81h1v1h-1zM35 81h1v1h-1zM36 81h1v1h-1zM33 82h1v1h-1zM17 83h1v1h-1zM37 83h1v1h-1zM2 84h1v1h-1zM6 84h1v1h-1zM19 84h1v1h-1zM26 84h1v1h-1zM29 84h1v1h-1zM4 85h1v1h-1zM7 85h1v1h-1zM8 85h1v1h-1zM10 85h1v1h-1zM14 85h1v1h-1zM17 85h1v1h-1zM18 85h1v1h-1zM21 85h1v1h-1zM23 85h1v1h-1zM26 85h1v1h-1zM33 85h1v1h-1zM35 85h1v1h-1zM37 85h1v1h-1zM0 86h1v1h-1zM2 86h1v1h-1zM8 86h1v1h-1zM9 86h1v1h-1zM18 86h1v1h-1zM19 86h1v1h-1zM24 86h1v1h-1zM26 86h1v1h-1zM4 87h1v1h-1zM5 87h1v1h-1zM25 87h1v1h-1zM29 87h1v1h-1zM33 87h1v1h-1zM36 87h1v1h-1zM20 88h1v1h-1zM3 89h1v1h-1zM0 91h1v1h-1zM16 91h1v1h-1zM20 91h1v1h-1zM34 91h1v1h-1zM0 92h1v1h-1zM1 92h1v1h-1zM3 92h1v1h-1zM6 92h1v1h-1zM10 92h1v1h-1zM12 92h1v1h-1zM16 92h1v1h-1zM25 92h1v1h-1zM26 92h1v1h-1zM28 92h1v1h-1zM29 92h1v1h-1zM34 92h1v1h-1zM35 92h1v1h-1zM36 92h1v1h-1zM1 93h1v1h-1zM3 93h1v1h-1zM6 93h1v1h-1zM7 93h1v1h-1zM10 93h1v1h-1zM15 93h1v1h-1zM16 93h1v1h-1zM17 93h1v1h-1zM19 93h1v1h-1zM28 93h1v1h-1zM29 93h1v1h-1zM31 93h1v1h-1zM32 93h1v1h-1zM33 93h1v1h-1zM34 93h1v1h-1zM35 93h1v1h-1zM36 93h1v1h-1zM2 94h1v1h-1zM3 94h1v1h-1zM9 94h1v1h-1zM10 94h1v1h-1zM14 94h1v1h-1zM17 94h1v1h-1zM19 94h1v1h-1zM21 94h1v1h-1zM26 94h1v1h-1z"/></g>
<rect x="831.8" y="64.4" width="67" height="169.2" fill="none" stroke="#0000ff" stroke-width="2.6"/>
<g transform="translate(932.50,64.50) scale(1.8750,1.8778)" shape-rendering="crispEdges"><path fill="rgb(10,10,10)" d="M22 8h1v1h-1zM3 18h1v1h-1zM1 24h1v1h-1zM35 60h1v1h-1zM31 61h1v1h-1zM13 79h1v1h-1z"/><path fill="rgb(32,32,32)" d="M18 1h1v1h-1zM32 1h1v1h-1zM0 2h1v1h-1zM26 2h1v1h-1zM4 4h1v1h-1zM26 4h1v1h-1zM11 5h1v1h-1zM6 6h1v1h-1zM6 8h1v1h-1zM9 11h1v1h-1zM10 12h1v1h-1zM0 13h1v1h-1zM12 25h1v1h-1zM2 42h1v1h-1zM25 43h1v1h-1zM25 44h1v1h-1zM4 45h1v1h-1zM17 45h1v1h-1zM26 45h1v1h-1zM1 48h1v1h-1zM7 52h1v1h-1zM28 53h1v1h-1zM4 54h1v1h-1zM9 60h1v1h-1zM13 61h1v1h-1zM0 64h1v1h-1zM21 74h1v1h-1zM28 74h1v1h-1zM4 79h1v1h-1zM30 79h1v1h-1zM31 80h1v1h-1zM17 81h1v1h-1zM11 85h1v1h-1zM11 87h1v1h-1zM20 88h1v1h-1zM34 88h1v1h-1z"/><path fill="rgb(53,53,53)" d="M21 1h1v1h-1zM22 2h1v1h-1zM7 3h1v1h-1zM32 3h1v1h-1zM11 6h1v1h-1zM18 9h1v1h-1zM13 10h1v1h-1zM33 12h1v1h-1zM3 13h1v1h-1zM6 13h1v1h-1zM19 13h1v1h-1zM35 13h1v1h-1zM2 14h1v1h-1zM26 14h1v1h-1zM31 14h1v1h-1zM25 16h1v1h-1zM23 17h1v1h-1zM17 19h1v1h-1zM3 20h1v1h-1zM3 22h1v1h-1zM31 22h1v1h-1zM14 23h1v1h-1zM7 24h1v1h-1zM16 24h1v1h-1zM26 24h1v1h-1zM27 24h1v1h-1zM24 26h1v1h-1zM12 28h1v1h-1zM24 28h1v1h-1zM10 29h1v1h-1zM23 29h1v1h-1zM5 31h1v1h-1zM26 31h1v1h-1zM34 31h1v1h-1zM12 32h1v1h-1zM25 38h1v1h-1zM4 39h1v1h-1zM22 40h1v1h-1zM34 40h1v1h-1zM14 43h1v1h-1zM0 44h1v1h-1zM18 44h1v1h-1zM7 45h1v1h-1zM16 45h1v1h-1zM21 45h1v1h-1zM16 46h1v1h-1zM26 46h1v1h-1zM6 50h1v1h-1zM2 52h1v1h-1zM34 52h1v1h-1zM3 54h1v1h-1zM20 56h1v1h-1zM9 59h1v1h-1zM2 62h1v1h-1zM6 63h1v1h-1zM4 64h1v1h-1zM7 64h1v1h-1zM3 69h1v1h-1zM8 69h1v1h-1zM30 69h1v1h-1zM5 71h1v1h-1zM17 72h1v1h-1zM4 73h1v1h-1zM6 78h1v1h-1zM23 78h1v1h-1zM34 79h1v1h-1zM22 80h1v1h-1zM4 82h1v1h-1zM1 85h1v1h-1zM1 86h1v1h-1zM16 86h1v1h-1zM30 86h1v1h-1zM33 86h1v1h-1zM34 87h1v1h-1zM0 88h1v1h-1z"/><path fill="rgb(74,74,74)" d="M35 0h1v1h-1zM28 1h1v1h-1zM13 2h1v1h-1zM10 4h1v1h-1zM18 4h1v1h-1zM7 5h1v1h-1zM18 5h1v1h-1zM33 5h1v1h-1zM1 6h1v1h-1zM8 6h1v1h-1zM31 6h1v1h-1zM8 7h1v1h-1zM14 7h1v1h-1zM26 7h1v1h-1zM16 8h1v1h-1zM26 8h1v1h-1zM29 8h1v1h-1zM28 9h1v1h-1zM2 10h1v1h-1zM16 10h1v1h-1zM26 10h1v1h-1zM24 13h1v1h-1zM25 13h1v1h-1zM6 14h1v1h-1zM7 14h1v1h-1zM9 14h1v1h-1zM15 14h1v1h-1zM18 14h1v1h-1zM21 14h1v1h-1zM3 15h1v1h-1zM8 15h1v1h-1zM14 15h1v1h-1zM35 17h1v1h-1zM14 18h1v1h-1zM34 18h1v1h-1zM2 19h1v1h-1zM18 19h1v1h-1zM22 19h1v1h-1zM4 21h1v1h-1zM11 21h1v1h-1zM18 21h1v1h-1zM7 22h1v1h-1zM34 22h1v1h-1zM7 23h1v1h-1zM9 23h1v1h-1zM16 23h1v1h-1zM8 24h1v1h-1zM19 25h1v1h-1zM26 25h1v1h-1zM30 25h1v1h-1zM0 26h1v1h-1zM13 27h1v1h-1zM1 28h1v1h-1zM2 28h1v1h-1zM29 28h1v1h-1zM11 29h1v1h-1zM22 29h1v1h-1zM25 29h1v1h-1zM6 30h1v1h-1zM7 30h1v1h-1zM15 30h1v1h-1zM18 30h1v1h-1zM26 30h1v1h-1zM29 30h1v1h-1zM32 30h1v1h-1zM22 31h1v1h-1zM3 32h1v1h-1zM11 32h1v1h-1zM10 33h1v1h-1zM29 33h1v1h-1zM10 34h1v1h-1zM11 34h1v1h-1zM20 35h1v1h-1zM25 35h1v1h-1zM24 36h1v1h-1zM16 37h1v1h-1zM19 37h1v1h-1zM9 38h1v1h-1zM33 38h1v1h-1zM9 39h1v1h-1zM14 39h1v1h-1zM15 39h1v1h-1zM15 40h1v1h-1zM25 40h1v1h-1zM13 41h1v1h-1zM23 41h1v1h-1zM6 42h1v1h-1zM13 42h1v1h-1zM5 43h1v1h-1zM9 43h1v1h-1zM18 43h1v1h-1zM33 43h1v1h-1zM15 44h1v1h-1zM18 45h1v1h-1zM22 45h1v1h-1zM33 45h1v1h-1zM2 46h1v1h-1zM32 47h1v1h-1zM7 48h1v1h-1zM17 48h1v1h-1zM24 48h1v1h-1zM10 50h1v1h-1zM8 51h1v1h-1zM31 51h1v1h-1zM21 52h1v1h-1zM31 52h1v1h-1zM11 53h1v1h-1zM0 54h1v1h-1zM6 54h1v1h-1zM2 55h1v1h-1zM4 57h1v1h-1zM18 57h1v1h-1zM25 57h1v1h-1zM1 59h1v1h-1zM18 59h1v1h-1zM4 60h1v1h-1zM18 60h1v1h-1zM15 61h1v1h-1zM18 61h1v1h-1zM22 62h1v1h-1zM25 63h1v1h-1zM32 63h1v1h-1zM33 63h1v1h-1zM32 64h1v1h-1zM0 65h1v1h-1zM1 65h1v1h-1zM21 65h1v1h-1zM27 65h1v1h-1zM33 65h1v1h-1zM6 66h1v1h-1zM16 66h1v1h-1zM28 66h1v1h-1zM29 66h1v1h-1zM9 67h1v1h-1zM1 69h1v1h-1zM15 69h1v1h-1zM29 69h1v1h-1zM24 70h1v1h-1zM8 71h1v1h-1zM13 71h1v1h-1zM24 71h1v1h-1zM16 72h1v1h-1zM28 72h1v1h-1zM10 73h1v1h-1zM17 73h1v1h-1zM18 73h1v1h-1zM12 74h1v1h-1zM31 74h1v1h-1zM32 74h1v1h-1zM11 76h1v1h-1zM6 77h1v1h-1zM4 78h1v1h-1zM5 79h1v1h-1zM18 80h1v1h-1zM14 81h1v1h-1zM23 81h1v1h-1zM10 82h1v1h-1zM16 82h1v1h-1zM12 83h1v1h-1zM18 83h1v1h-1zM31 83h1v1h-1zM32 83h1v1h-1zM6 84h1v1h-1zM23 84h1v1h-1zM12 85h1v1h-1zM23 86h1v1h-1zM3 89h1v1h-1zM33 89h1v1h-1zM35 89h1v1h-1z"/><path fill="rgb(96,96,96)" d="M9 0h1v1h-1zM10 0h1v1h-1zM22 0h1v1h-1zM30 0h1v1h-1zM24 1h1v1h-1zM19 2h1v1h-1zM21 2h1v1h-1zM3 3h1v1h-1zM27 3h1v1h-1zM1 4h1v1h-1zM2 4h1v1h-1zM7 4h1v1h-1zM12 4h1v1h-1zM13 4h1v1h-1zM17 4h1v1h-1zM10 5h1v1h-1zM14 5h1v1h-1zM17 5h1v1h-1zM21 5h1v1h-1zM29 5h1v1h-1zM32 5h1v1h-1zM3 6h1v1h-1zM16 6h1v1h-1zM17 6h1v1h-1zM21 6h1v1h-1zM27 6h1v1h-1zM35 6h1v1h-1zM21 7h1v1h-1zM25 7h1v1h-1zM34 7h1v1h-1zM5 8h1v1h-1zM7 8h1v1h-1zM14 8h1v1h-1zM27 8h1v1h-1zM30 8h1v1h-1zM4 9h1v1h-1zM15 9h1v1h-1zM31 9h1v1h-1zM0 10h1v1h-1zM28 10h1v1h-1zM14 11h1v1h-1zM15 11h1v1h-1zM25 11h1v1h-1zM7 12h1v1h-1zM22 12h1v1h-1zM24 12h1v1h-1zM31 12h1v1h-1zM1 13h1v1h-1zM13 13h1v1h-1zM29 13h1v1h-1zM31 13h1v1h-1zM0 14h1v1h-1zM3 14h1v1h-1zM5 14h1v1h-1zM25 14h1v1h-1zM16 15h1v1h-1zM19 15h1v1h-1zM21 15h1v1h-1zM14 16h1v1h-1zM24 16h1v1h-1zM1 17h1v1h-1zM19 17h1v1h-1zM1 18h1v1h-1zM7 18h1v1h-1zM13 18h1v1h-1zM18 18h1v1h-1zM19 18h1v1h-1zM21 18h1v1h-1zM23 18h1v1h-1zM24 18h1v1h-1zM35 18h1v1h-1zM0 19h1v1h-1zM27 19h1v1h-1zM6 20h1v1h-1zM9 20h1v1h-1zM14 20h1v1h-1zM15 20h1v1h-1zM30 20h1v1h-1zM1 21h1v1h-1zM7 21h1v1h-1zM8 21h1v1h-1zM35 21h1v1h-1zM4 22h1v1h-1zM14 22h1v1h-1zM17 22h1v1h-1zM35 22h1v1h-1zM11 23h1v1h-1zM15 23h1v1h-1zM20 24h1v1h-1zM30 24h1v1h-1zM0 25h1v1h-1zM1 25h1v1h-1zM5 25h1v1h-1zM20 25h1v1h-1zM31 25h1v1h-1zM17 26h1v1h-1zM18 26h1v1h-1zM16 27h1v1h-1zM25 27h1v1h-1zM26 27h1v1h-1zM32 27h1v1h-1zM34 27h1v1h-1zM4 28h1v1h-1zM5 28h1v1h-1zM7 28h1v1h-1zM9 28h1v1h-1zM10 28h1v1h-1zM16 28h1v1h-1zM17 28h1v1h-1zM19 28h1v1h-1zM22 28h1v1h-1zM32 28h1v1h-1zM19 29h1v1h-1zM33 29h1v1h-1zM4 30h1v1h-1zM8 30h1v1h-1zM13 30h1v1h-1zM30 30h1v1h-1zM2 31h1v1h-1zM13 31h1v1h-1zM33 31h1v1h-1zM4 32h1v1h-1zM9 32h1v1h-1zM13 32h1v1h-1zM16 32h1v1h-1zM23 32h1v1h-1zM0 33h1v1h-1zM8 33h1v1h-1zM33 33h1v1h-1zM34 33h1v1h-1zM30 34h1v1h-1zM34 34h1v1h-1zM15 35h1v1h-1zM16 35h1v1h-1zM22 35h1v1h-1zM7 36h1v1h-1zM10 36h1v1h-1zM18 36h1v1h-1zM21 36h1v1h-1zM25 36h1v1h-1zM27 36h1v1h-1zM31 36h1v1h-1zM33 36h1v1h-1zM10 37h1v1h-1zM21 37h1v1h-1zM28 37h1v1h-1zM32 37h1v1h-1zM0 38h1v1h-1zM3 38h1v1h-1zM24 38h1v1h-1zM31 38h1v1h-1zM34 38h1v1h-1zM13 39h1v1h-1zM25 39h1v1h-1zM34 39h1v1h-1zM10 40h1v1h-1zM32 40h1v1h-1zM7 41h1v1h-1zM8 41h1v1h-1zM26 41h1v1h-1zM29 41h1v1h-1zM0 42h1v1h-1zM9 42h1v1h-1zM30 42h1v1h-1zM31 42h1v1h-1zM21 43h1v1h-1zM23 43h1v1h-1zM27 43h1v1h-1zM34 43h1v1h-1zM35 43h1v1h-1zM2 44h1v1h-1zM4 44h1v1h-1zM6 44h1v1h-1zM8 44h1v1h-1zM23 44h1v1h-1zM27 44h1v1h-1zM3 45h1v1h-1zM15 45h1v1h-1zM24 45h1v1h-1zM27 45h1v1h-1zM29 45h1v1h-1zM0 46h1v1h-1zM12 46h1v1h-1zM13 46h1v1h-1zM15 46h1v1h-1zM22 46h1v1h-1zM23 46h1v1h-1zM28 46h1v1h-1zM4 47h1v1h-1zM5 47h1v1h-1zM8 47h1v1h-1zM14 47h1v1h-1zM17 47h1v1h-1zM20 47h1v1h-1zM13 48h1v1h-1zM14 48h1v1h-1zM16 48h1v1h-1zM2 49h1v1h-1zM28 49h1v1h-1zM15 50h1v1h-1zM5 51h1v1h-1zM14 51h1v1h-1zM23 51h1v1h-1zM27 51h1v1h-1zM29 51h1v1h-1zM8 52h1v1h-1zM26 52h1v1h-1zM1 53h1v1h-1zM7 53h1v1h-1zM15 53h1v1h-1zM10 54h1v1h-1zM15 54h1v1h-1zM18 54h1v1h-1zM28 54h1v1h-1zM31 54h1v1h-1zM32 54h1v1h-1zM13 55h1v1h-1zM19 55h1v1h-1zM4 56h1v1h-1zM7 56h1v1h-1zM14 56h1v1h-1zM29 56h1v1h-1zM34 56h1v1h-1zM5 57h1v1h-1zM19 57h1v1h-1zM24 57h1v1h-1zM13 58h1v1h-1zM14 59h1v1h-1zM2 60h1v1h-1zM12 60h1v1h-1zM16 60h1v1h-1zM19 60h1v1h-1zM20 60h1v1h-1zM23 60h1v1h-1zM4 61h1v1h-1zM6 61h1v1h-1zM12 61h1v1h-1zM16 61h1v1h-1zM20 61h1v1h-1zM21 61h1v1h-1zM29 61h1v1h-1zM4 62h1v1h-1zM8 62h1v1h-1zM11 62h1v1h-1zM28 62h1v1h-1zM32 62h1v1h-1zM7 63h1v1h-1zM11 63h1v1h-1zM6 64h1v1h-1zM18 64h1v1h-1zM4 65h1v1h-1zM6 65h1v1h-1zM11 65h1v1h-1zM28 65h1v1h-1zM21 66h1v1h-1zM23 66h1v1h-1zM1 67h1v1h-1zM7 67h1v1h-1zM14 67h1v1h-1zM26 67h1v1h-1zM27 67h1v1h-1zM2 68h1v1h-1zM6 68h1v1h-1zM7 68h1v1h-1zM0 69h1v1h-1zM2 69h1v1h-1zM13 69h1v1h-1zM14 69h1v1h-1zM17 70h1v1h-1zM22 70h1v1h-1zM25 70h1v1h-1zM0 71h1v1h-1zM0 72h1v1h-1zM2 72h1v1h-1zM27 72h1v1h-1zM30 72h1v1h-1zM34 72h1v1h-1zM5 73h1v1h-1zM15 73h1v1h-1zM16 73h1v1h-1zM22 73h1v1h-1zM30 73h1v1h-1zM4 74h1v1h-1zM19 74h1v1h-1zM23 74h1v1h-1zM3 75h1v1h-1zM19 75h1v1h-1zM16 76h1v1h-1zM10 77h1v1h-1zM19 77h1v1h-1zM21 77h1v1h-1zM23 77h1v1h-1zM0 78h1v1h-1zM1 78h1v1h-1zM17 78h1v1h-1zM19 78h1v1h-1zM25 78h1v1h-1zM12 79h1v1h-1zM20 79h1v1h-1zM23 79h1v1h-1zM12 80h1v1h-1zM14 80h1v1h-1zM32 80h1v1h-1zM7 81h1v1h-1zM10 81h1v1h-1zM8 82h1v1h-1zM28 82h1v1h-1zM34 82h1v1h-1zM13 83h1v1h-1zM16 83h1v1h-1zM26 83h1v1h-1zM34 83h1v1h-1zM0 84h1v1h-1zM14 84h1v1h-1zM16 84h1v1h-1zM17 84h1v1h-1zM28 84h1v1h-1zM8 85h1v1h-1zM24 85h1v1h-1zM25 85h1v1h-1zM2 86h1v1h-1zM6 86h1v1h-1zM13 86h1v1h-1zM32 86h1v1h-1zM0 87h1v1h-1zM5 87h1v1h-1zM14 87h1v1h-1zM21 87h1v1h-1zM25 87h1v1h-1zM5 88h1v1h-1zM13 88h1v1h-1zM19 88h1v1h-1zM25 88h1v1h-1zM33 88h1v1h-1zM5 89h1v1h-1zM11 89h1v1h-1zM19 89h1v1h-1zM34 89h1v1h-1z"/><path fill="rgb(117,117,117)" d="M4 0h1v1h-1zM5 0h1v1h-1zM15 0h1v1h-1zM24 0h1v1h-1zM31 0h1v1h-1zM0 1h1v1h-1zM2 1h1v1h-1zM10 1h1v1h-1zM23 1h1v1h-1zM26 1h1v1h-1zM33 1h1v1h-1zM34 1h1v1h-1zM5 2h1v1h-1zM6 2h1v1h-1zM20 2h1v1h-1zM24 2h1v1h-1zM29 2h1v1h-1zM30 2h1v1h-1zM34 2h1v1h-1zM35 2h1v1h-1zM0 3h1v1h-1zM6 3h1v1h-1zM14 3h1v1h-1zM15 3h1v1h-1zM19 3h1v1h-1zM25 3h1v1h-1zM0 4h1v1h-1zM3 4h1v1h-1zM8 4h1v1h-1zM15 4h1v1h-1zM24 4h1v1h-1zM27 4h1v1h-1zM0 5h1v1h-1zM13 5h1v1h-1zM19 5h1v1h-1zM20 5h1v1h-1zM23 5h1v1h-1zM26 5h1v1h-1zM9 6h1v1h-1zM13 6h1v1h-1zM19 6h1v1h-1zM0 7h1v1h-1zM15 7h1v1h-1zM16 7h1v1h-1zM22 7h1v1h-1zM8 8h1v1h-1zM10 8h1v1h-1zM31 8h1v1h-1zM35 8h1v1h-1zM2 9h1v1h-1zM20 9h1v1h-1zM21 9h1v1h-1zM25 9h1v1h-1zM34 9h1v1h-1zM15 10h1v1h-1zM25 10h1v1h-1zM0 11h1v1h-1zM1 11h1v1h-1zM5 11h1v1h-1zM7 11h1v1h-1zM11 11h1v1h-1zM17 11h1v1h-1zM22 11h1v1h-1zM3 12h1v1h-1zM9 12h1v1h-1zM11 12h1v1h-1zM16 12h1v1h-1zM18 12h1v1h-1zM27 12h1v1h-1zM29 12h1v1h-1zM4 13h1v1h-1zM8 13h1v1h-1zM9 13h1v1h-1zM14 13h1v1h-1zM21 13h1v1h-1zM33 13h1v1h-1zM34 13h1v1h-1zM1 14h1v1h-1zM14 14h1v1h-1zM20 14h1v1h-1zM29 14h1v1h-1zM30 14h1v1h-1zM32 14h1v1h-1zM5 15h1v1h-1zM11 15h1v1h-1zM13 15h1v1h-1zM15 15h1v1h-1zM23 15h1v1h-1zM32 15h1v1h-1zM34 15h1v1h-1zM1 16h1v1h-1zM21 16h1v1h-1zM32 16h1v1h-1zM35 16h1v1h-1zM3 17h1v1h-1zM4 17h1v1h-1zM5 17h1v1h-1zM9 17h1v1h-1zM15 17h1v1h-1zM20 17h1v1h-1zM25 17h1v1h-1zM26 17h1v1h-1zM32 17h1v1h-1zM4 18h1v1h-1zM8 18h1v1h-1zM10 18h1v1h-1zM11 18h1v1h-1zM20 18h1v1h-1zM30 18h1v1h-1zM3 19h1v1h-1zM5 19h1v1h-1zM13 19h1v1h-1zM20 19h1v1h-1zM21 19h1v1h-1zM24 19h1v1h-1zM0 20h1v1h-1zM4 20h1v1h-1zM5 20h1v1h-1zM11 20h1v1h-1zM18 20h1v1h-1zM23 20h1v1h-1zM29 20h1v1h-1zM31 20h1v1h-1zM35 20h1v1h-1zM2 21h1v1h-1zM14 21h1v1h-1zM19 21h1v1h-1zM28 21h1v1h-1zM29 21h1v1h-1zM32 21h1v1h-1zM16 22h1v1h-1zM30 22h1v1h-1zM0 23h1v1h-1zM2 23h1v1h-1zM19 23h1v1h-1zM21 23h1v1h-1zM32 23h1v1h-1zM10 24h1v1h-1zM15 24h1v1h-1zM22 24h1v1h-1zM23 24h1v1h-1zM32 24h1v1h-1zM33 24h1v1h-1zM35 24h1v1h-1zM24 25h1v1h-1zM32 25h1v1h-1zM34 25h1v1h-1zM7 26h1v1h-1zM8 26h1v1h-1zM13 26h1v1h-1zM19 26h1v1h-1zM20 26h1v1h-1zM7 27h1v1h-1zM20 27h1v1h-1zM14 28h1v1h-1zM18 28h1v1h-1zM21 28h1v1h-1zM28 28h1v1h-1zM0 29h1v1h-1zM5 29h1v1h-1zM6 29h1v1h-1zM7 29h1v1h-1zM3 30h1v1h-1zM10 30h1v1h-1zM25 30h1v1h-1zM35 30h1v1h-1zM3 31h1v1h-1zM8 31h1v1h-1zM16 31h1v1h-1zM31 31h1v1h-1zM0 32h1v1h-1zM18 32h1v1h-1zM25 32h1v1h-1zM30 32h1v1h-1zM7 33h1v1h-1zM12 33h1v1h-1zM22 33h1v1h-1zM35 33h1v1h-1zM6 34h1v1h-1zM9 34h1v1h-1zM15 34h1v1h-1zM16 34h1v1h-1zM21 34h1v1h-1zM31 34h1v1h-1zM6 35h1v1h-1zM11 35h1v1h-1zM12 35h1v1h-1zM13 35h1v1h-1zM14 35h1v1h-1zM30 35h1v1h-1zM32 35h1v1h-1zM35 35h1v1h-1zM3 36h1v1h-1zM15 36h1v1h-1zM4 37h1v1h-1zM5 37h1v1h-1zM6 37h1v1h-1zM18 37h1v1h-1zM24 37h1v1h-1zM25 37h1v1h-1zM34 37h1v1h-1zM6 38h1v1h-1zM17 38h1v1h-1zM26 38h1v1h-1zM29 38h1v1h-1zM32 38h1v1h-1zM1 39h1v1h-1zM6 39h1v1h-1zM8 39h1v1h-1zM18 39h1v1h-1zM22 39h1v1h-1zM29 39h1v1h-1zM32 39h1v1h-1zM7 40h1v1h-1zM24 40h1v1h-1zM29 40h1v1h-1zM1 41h1v1h-1zM18 41h1v1h-1zM22 41h1v1h-1zM4 42h1v1h-1zM26 42h1v1h-1zM27 42h1v1h-1zM28 42h1v1h-1zM34 42h1v1h-1zM35 42h1v1h-1zM1 43h1v1h-1zM6 43h1v1h-1zM7 43h1v1h-1zM13 43h1v1h-1zM15 43h1v1h-1zM19 43h1v1h-1zM30 43h1v1h-1zM12 44h1v1h-1zM13 44h1v1h-1zM31 44h1v1h-1zM33 44h1v1h-1zM34 44h1v1h-1zM0 45h1v1h-1zM1 45h1v1h-1zM2 45h1v1h-1zM10 45h1v1h-1zM11 45h1v1h-1zM20 45h1v1h-1zM23 45h1v1h-1zM28 45h1v1h-1zM31 45h1v1h-1zM32 45h1v1h-1zM9 46h1v1h-1zM18 46h1v1h-1zM20 46h1v1h-1zM31 46h1v1h-1zM33 46h1v1h-1zM0 47h1v1h-1zM7 47h1v1h-1zM9 47h1v1h-1zM12 47h1v1h-1zM21 47h1v1h-1zM24 47h1v1h-1zM2 48h1v1h-1zM4 48h1v1h-1zM8 48h1v1h-1zM9 48h1v1h-1zM12 48h1v1h-1zM23 48h1v1h-1zM28 48h1v1h-1zM29 48h1v1h-1zM30 48h1v1h-1zM34 48h1v1h-1zM0 49h1v1h-1zM3 49h1v1h-1zM4 49h1v1h-1zM15 49h1v1h-1zM19 49h1v1h-1zM22 49h1v1h-1zM1 50h1v1h-1zM3 50h1v1h-1zM5 50h1v1h-1zM8 50h1v1h-1zM9 50h1v1h-1zM13 50h1v1h-1zM25 50h1v1h-1zM29 50h1v1h-1zM2 51h1v1h-1zM6 51h1v1h-1zM21 51h1v1h-1zM24 51h1v1h-1zM0 52h1v1h-1zM4 52h1v1h-1zM6 52h1v1h-1zM10 52h1v1h-1zM19 52h1v1h-1zM20 52h1v1h-1zM25 52h1v1h-1zM27 52h1v1h-1zM28 52h1v1h-1zM30 52h1v1h-1zM33 52h1v1h-1zM16 53h1v1h-1zM22 53h1v1h-1zM29 53h1v1h-1zM34 53h1v1h-1zM35 53h1v1h-1zM5 54h1v1h-1zM8 54h1v1h-1zM26 54h1v1h-1zM3 55h1v1h-1zM11 55h1v1h-1zM14 55h1v1h-1zM15 55h1v1h-1zM16 55h1v1h-1zM33 55h1v1h-1zM1 56h1v1h-1zM9 56h1v1h-1zM10 56h1v1h-1zM15 56h1v1h-1zM35 56h1v1h-1zM1 57h1v1h-1zM3 57h1v1h-1zM6 57h1v1h-1zM7 57h1v1h-1zM11 57h1v1h-1zM13 57h1v1h-1zM21 57h1v1h-1zM27 57h1v1h-1zM30 57h1v1h-1zM31 57h1v1h-1zM35 57h1v1h-1zM0 58h1v1h-1zM2 58h1v1h-1zM5 58h1v1h-1zM18 58h1v1h-1zM19 58h1v1h-1zM20 58h1v1h-1zM21 58h1v1h-1zM22 58h1v1h-1zM26 58h1v1h-1zM27 58h1v1h-1zM32 58h1v1h-1zM33 58h1v1h-1zM10 59h1v1h-1zM11 59h1v1h-1zM12 59h1v1h-1zM21 59h1v1h-1zM22 59h1v1h-1zM23 59h1v1h-1zM26 59h1v1h-1zM27 59h1v1h-1zM30 59h1v1h-1zM31 59h1v1h-1zM15 60h1v1h-1zM17 60h1v1h-1zM22 60h1v1h-1zM0 61h1v1h-1zM3 61h1v1h-1zM25 61h1v1h-1zM33 61h1v1h-1zM7 62h1v1h-1zM13 62h1v1h-1zM16 62h1v1h-1zM20 62h1v1h-1zM23 62h1v1h-1zM29 62h1v1h-1zM1 63h1v1h-1zM3 63h1v1h-1zM10 63h1v1h-1zM31 63h1v1h-1zM12 64h1v1h-1zM16 64h1v1h-1zM21 64h1v1h-1zM25 64h1v1h-1zM28 64h1v1h-1zM30 64h1v1h-1zM9 65h1v1h-1zM15 65h1v1h-1zM16 65h1v1h-1zM24 65h1v1h-1zM3 66h1v1h-1zM5 66h1v1h-1zM12 66h1v1h-1zM15 66h1v1h-1zM20 66h1v1h-1zM0 67h1v1h-1zM6 67h1v1h-1zM11 67h1v1h-1zM12 67h1v1h-1zM15 67h1v1h-1zM18 67h1v1h-1zM24 67h1v1h-1zM8 68h1v1h-1zM13 68h1v1h-1zM14 68h1v1h-1zM19 68h1v1h-1zM25 68h1v1h-1zM6 69h1v1h-1zM18 69h1v1h-1zM24 69h1v1h-1zM1 70h1v1h-1zM14 70h1v1h-1zM32 70h1v1h-1zM34 70h1v1h-1zM35 70h1v1h-1zM1 71h1v1h-1zM11 71h1v1h-1zM14 71h1v1h-1zM22 71h1v1h-1zM26 71h1v1h-1zM29 71h1v1h-1zM33 71h1v1h-1zM6 72h1v1h-1zM8 72h1v1h-1zM20 72h1v1h-1zM21 72h1v1h-1zM32 72h1v1h-1zM2 73h1v1h-1zM11 73h1v1h-1zM35 73h1v1h-1zM2 74h1v1h-1zM3 74h1v1h-1zM10 74h1v1h-1zM30 74h1v1h-1zM2 75h1v1h-1zM9 75h1v1h-1zM16 75h1v1h-1zM18 75h1v1h-1zM5 76h1v1h-1zM8 76h1v1h-1zM27 76h1v1h-1zM31 76h1v1h-1zM34 76h1v1h-1zM35 76h1v1h-1zM15 77h1v1h-1zM25 77h1v1h-1zM33 77h1v1h-1zM9 78h1v1h-1zM12 78h1v1h-1zM15 78h1v1h-1zM18 78h1v1h-1zM31 78h1v1h-1zM18 79h1v1h-1zM32 79h1v1h-1zM33 79h1v1h-1zM35 79h1v1h-1zM3 80h1v1h-1zM21 80h1v1h-1zM24 80h1v1h-1zM26 80h1v1h-1zM29 80h1v1h-1zM30 80h1v1h-1zM0 81h1v1h-1zM6 81h1v1h-1zM13 81h1v1h-1zM18 81h1v1h-1zM20 81h1v1h-1zM29 81h1v1h-1zM2 82h1v1h-1zM9 82h1v1h-1zM14 82h1v1h-1zM19 82h1v1h-1zM21 82h1v1h-1zM22 82h1v1h-1zM27 82h1v1h-1zM29 82h1v1h-1zM5 83h1v1h-1zM7 83h1v1h-1zM9 83h1v1h-1zM14 83h1v1h-1zM29 83h1v1h-1zM30 83h1v1h-1zM35 83h1v1h-1zM2 84h1v1h-1zM22 84h1v1h-1zM35 84h1v1h-1zM16 85h1v1h-1zM20 85h1v1h-1zM34 85h1v1h-1zM35 85h1v1h-1zM7 86h1v1h-1zM8 86h1v1h-1zM17 86h1v1h-1zM18 86h1v1h-1zM24 86h1v1h-1zM7 87h1v1h-1zM8 87h1v1h-1zM19 87h1v1h-1zM27 87h1v1h-1zM31 87h1v1h-1zM7 88h1v1h-1zM12 88h1v1h-1zM16 88h1v1h-1zM24 88h1v1h-1zM28 88h1v1h-1zM29 88h1v1h-1zM2 89h1v1h-1zM9 89h1v1h-1zM27 89h1v1h-1z"/><path fill="rgb(138,138,138)" d="M3 0h1v1h-1zM6 0h1v1h-1zM20 0h1v1h-1zM25 0h1v1h-1zM29 0h1v1h-1zM33 0h1v1h-1zM4 1h1v1h-1zM7 1h1v1h-1zM11 1h1v1h-1zM14 1h1v1h-1zM17 1h1v1h-1zM19 1h1v1h-1zM25 1h1v1h-1zM2 2h1v1h-1zM4 2h1v1h-1zM9 2h1v1h-1zM15 2h1v1h-1zM23 2h1v1h-1zM1 3h1v1h-1zM8 3h1v1h-1zM9 3h1v1h-1zM10 3h1v1h-1zM11 3h1v1h-1zM18 3h1v1h-1zM21 3h1v1h-1zM22 3h1v1h-1zM24 3h1v1h-1zM28 3h1v1h-1zM35 3h1v1h-1zM6 4h1v1h-1zM21 4h1v1h-1zM22 4h1v1h-1zM25 4h1v1h-1zM29 4h1v1h-1zM1 5h1v1h-1zM12 5h1v1h-1zM15 5h1v1h-1zM16 5h1v1h-1zM24 5h1v1h-1zM27 5h1v1h-1zM34 5h1v1h-1zM35 5h1v1h-1zM0 6h1v1h-1zM2 6h1v1h-1zM5 6h1v1h-1zM7 6h1v1h-1zM10 6h1v1h-1zM12 6h1v1h-1zM14 6h1v1h-1zM25 6h1v1h-1zM28 6h1v1h-1zM29 6h1v1h-1zM2 7h1v1h-1zM3 7h1v1h-1zM5 7h1v1h-1zM6 7h1v1h-1zM13 7h1v1h-1zM30 7h1v1h-1zM33 7h1v1h-1zM1 8h1v1h-1zM4 8h1v1h-1zM18 8h1v1h-1zM24 8h1v1h-1zM28 8h1v1h-1zM1 9h1v1h-1zM7 9h1v1h-1zM8 9h1v1h-1zM10 9h1v1h-1zM12 9h1v1h-1zM14 9h1v1h-1zM17 9h1v1h-1zM19 9h1v1h-1zM23 9h1v1h-1zM30 9h1v1h-1zM32 9h1v1h-1zM3 10h1v1h-1zM5 10h1v1h-1zM7 10h1v1h-1zM11 10h1v1h-1zM12 10h1v1h-1zM21 10h1v1h-1zM24 10h1v1h-1zM32 10h1v1h-1zM35 10h1v1h-1zM8 11h1v1h-1zM29 11h1v1h-1zM32 11h1v1h-1zM35 11h1v1h-1zM5 12h1v1h-1zM8 12h1v1h-1zM14 12h1v1h-1zM17 12h1v1h-1zM10 13h1v1h-1zM12 13h1v1h-1zM30 13h1v1h-1zM32 13h1v1h-1zM4 14h1v1h-1zM11 14h1v1h-1zM17 14h1v1h-1zM27 14h1v1h-1zM28 14h1v1h-1zM34 14h1v1h-1zM4 15h1v1h-1zM17 15h1v1h-1zM26 15h1v1h-1zM29 15h1v1h-1zM33 15h1v1h-1zM0 16h1v1h-1zM3 16h1v1h-1zM8 16h1v1h-1zM28 16h1v1h-1zM30 16h1v1h-1zM6 17h1v1h-1zM11 17h1v1h-1zM13 17h1v1h-1zM14 17h1v1h-1zM17 17h1v1h-1zM21 17h1v1h-1zM30 17h1v1h-1zM33 17h1v1h-1zM34 17h1v1h-1zM6 18h1v1h-1zM9 18h1v1h-1zM12 18h1v1h-1zM26 18h1v1h-1zM27 18h1v1h-1zM4 19h1v1h-1zM7 19h1v1h-1zM12 19h1v1h-1zM31 19h1v1h-1zM8 20h1v1h-1zM10 20h1v1h-1zM21 20h1v1h-1zM26 20h1v1h-1zM27 20h1v1h-1zM0 21h1v1h-1zM5 21h1v1h-1zM12 21h1v1h-1zM17 21h1v1h-1zM23 21h1v1h-1zM34 21h1v1h-1zM1 22h1v1h-1zM10 22h1v1h-1zM15 22h1v1h-1zM22 22h1v1h-1zM23 22h1v1h-1zM1 23h1v1h-1zM12 23h1v1h-1zM20 23h1v1h-1zM22 23h1v1h-1zM23 23h1v1h-1zM25 23h1v1h-1zM28 23h1v1h-1zM30 23h1v1h-1zM33 23h1v1h-1zM2 24h1v1h-1zM9 24h1v1h-1zM12 24h1v1h-1zM13 24h1v1h-1zM17 24h1v1h-1zM4 25h1v1h-1zM9 25h1v1h-1zM11 25h1v1h-1zM16 25h1v1h-1zM17 25h1v1h-1zM22 25h1v1h-1zM23 25h1v1h-1zM29 25h1v1h-1zM33 25h1v1h-1zM1 26h1v1h-1zM2 26h1v1h-1zM6 26h1v1h-1zM9 26h1v1h-1zM21 26h1v1h-1zM22 26h1v1h-1zM29 26h1v1h-1zM35 26h1v1h-1zM1 27h1v1h-1zM4 27h1v1h-1zM8 27h1v1h-1zM9 27h1v1h-1zM12 27h1v1h-1zM19 27h1v1h-1zM27 27h1v1h-1zM28 27h1v1h-1zM29 27h1v1h-1zM31 27h1v1h-1zM33 27h1v1h-1zM35 27h1v1h-1zM3 28h1v1h-1zM8 28h1v1h-1zM27 28h1v1h-1zM30 28h1v1h-1zM3 29h1v1h-1zM8 29h1v1h-1zM28 29h1v1h-1zM30 29h1v1h-1zM35 29h1v1h-1zM5 30h1v1h-1zM9 30h1v1h-1zM19 30h1v1h-1zM21 30h1v1h-1zM24 30h1v1h-1zM27 30h1v1h-1zM28 30h1v1h-1zM1 31h1v1h-1zM9 31h1v1h-1zM17 31h1v1h-1zM18 31h1v1h-1zM20 31h1v1h-1zM24 31h1v1h-1zM25 31h1v1h-1zM29 31h1v1h-1zM5 32h1v1h-1zM10 32h1v1h-1zM20 32h1v1h-1zM21 32h1v1h-1zM24 32h1v1h-1zM28 32h1v1h-1zM34 32h1v1h-1zM35 32h1v1h-1zM1 33h1v1h-1zM2 33h1v1h-1zM16 33h1v1h-1zM17 33h1v1h-1zM24 33h1v1h-1zM26 33h1v1h-1zM1 34h1v1h-1zM3 34h1v1h-1zM4 34h1v1h-1zM8 34h1v1h-1zM13 34h1v1h-1zM22 34h1v1h-1zM25 34h1v1h-1zM28 34h1v1h-1zM35 34h1v1h-1zM0 35h1v1h-1zM1 35h1v1h-1zM2 35h1v1h-1zM4 35h1v1h-1zM8 35h1v1h-1zM17 35h1v1h-1zM27 35h1v1h-1zM34 35h1v1h-1zM1 36h1v1h-1zM2 36h1v1h-1zM4 36h1v1h-1zM9 36h1v1h-1zM23 36h1v1h-1zM32 36h1v1h-1zM9 37h1v1h-1zM14 37h1v1h-1zM17 37h1v1h-1zM20 37h1v1h-1zM29 37h1v1h-1zM31 37h1v1h-1zM4 38h1v1h-1zM5 38h1v1h-1zM13 38h1v1h-1zM14 38h1v1h-1zM18 38h1v1h-1zM20 38h1v1h-1zM28 38h1v1h-1zM30 38h1v1h-1zM3 39h1v1h-1zM5 39h1v1h-1zM12 39h1v1h-1zM16 39h1v1h-1zM21 39h1v1h-1zM23 39h1v1h-1zM28 39h1v1h-1zM35 39h1v1h-1zM3 40h1v1h-1zM6 40h1v1h-1zM11 40h1v1h-1zM14 40h1v1h-1zM16 40h1v1h-1zM17 40h1v1h-1zM18 40h1v1h-1zM31 40h1v1h-1zM12 41h1v1h-1zM17 41h1v1h-1zM32 41h1v1h-1zM33 41h1v1h-1zM35 41h1v1h-1zM1 42h1v1h-1zM7 42h1v1h-1zM10 42h1v1h-1zM29 42h1v1h-1zM4 43h1v1h-1zM11 43h1v1h-1zM20 43h1v1h-1zM31 43h1v1h-1zM32 43h1v1h-1zM7 44h1v1h-1zM14 44h1v1h-1zM19 44h1v1h-1zM26 44h1v1h-1zM8 45h1v1h-1zM9 45h1v1h-1zM14 45h1v1h-1zM19 45h1v1h-1zM25 45h1v1h-1zM3 46h1v1h-1zM5 46h1v1h-1zM7 46h1v1h-1zM11 46h1v1h-1zM17 46h1v1h-1zM21 46h1v1h-1zM24 46h1v1h-1zM1 47h1v1h-1zM6 47h1v1h-1zM13 47h1v1h-1zM15 47h1v1h-1zM23 47h1v1h-1zM29 47h1v1h-1zM11 48h1v1h-1zM22 48h1v1h-1zM26 48h1v1h-1zM1 49h1v1h-1zM8 49h1v1h-1zM11 49h1v1h-1zM23 49h1v1h-1zM25 49h1v1h-1zM31 49h1v1h-1zM32 49h1v1h-1zM0 50h1v1h-1zM2 50h1v1h-1zM12 50h1v1h-1zM14 50h1v1h-1zM19 50h1v1h-1zM21 50h1v1h-1zM28 50h1v1h-1zM32 50h1v1h-1zM35 50h1v1h-1zM3 51h1v1h-1zM9 51h1v1h-1zM20 51h1v1h-1zM35 51h1v1h-1zM5 52h1v1h-1zM13 52h1v1h-1zM16 52h1v1h-1zM3 53h1v1h-1zM12 53h1v1h-1zM21 53h1v1h-1zM26 53h1v1h-1zM30 53h1v1h-1zM32 53h1v1h-1zM33 53h1v1h-1zM2 54h1v1h-1zM7 54h1v1h-1zM11 54h1v1h-1zM12 54h1v1h-1zM17 54h1v1h-1zM20 54h1v1h-1zM22 54h1v1h-1zM23 54h1v1h-1zM25 54h1v1h-1zM4 55h1v1h-1zM5 55h1v1h-1zM12 55h1v1h-1zM22 55h1v1h-1zM26 55h1v1h-1zM31 55h1v1h-1zM32 55h1v1h-1zM2 56h1v1h-1zM8 56h1v1h-1zM11 56h1v1h-1zM16 56h1v1h-1zM17 56h1v1h-1zM21 56h1v1h-1zM22 56h1v1h-1zM25 56h1v1h-1zM30 56h1v1h-1zM33 56h1v1h-1zM2 57h1v1h-1zM8 57h1v1h-1zM14 57h1v1h-1zM20 57h1v1h-1zM22 57h1v1h-1zM26 57h1v1h-1zM29 57h1v1h-1zM34 57h1v1h-1zM1 58h1v1h-1zM8 58h1v1h-1zM10 58h1v1h-1zM12 58h1v1h-1zM34 58h1v1h-1zM2 59h1v1h-1zM6 59h1v1h-1zM8 59h1v1h-1zM13 59h1v1h-1zM15 59h1v1h-1zM19 59h1v1h-1zM20 59h1v1h-1zM24 59h1v1h-1zM25 59h1v1h-1zM28 59h1v1h-1zM34 59h1v1h-1zM35 59h1v1h-1zM3 60h1v1h-1zM5 60h1v1h-1zM6 60h1v1h-1zM7 60h1v1h-1zM14 60h1v1h-1zM25 60h1v1h-1zM26 60h1v1h-1zM32 60h1v1h-1zM7 61h1v1h-1zM19 61h1v1h-1zM34 61h1v1h-1zM0 62h1v1h-1zM1 62h1v1h-1zM3 62h1v1h-1zM10 62h1v1h-1zM14 62h1v1h-1zM15 62h1v1h-1zM18 62h1v1h-1zM26 62h1v1h-1zM2 63h1v1h-1zM13 63h1v1h-1zM14 63h1v1h-1zM16 63h1v1h-1zM18 63h1v1h-1zM21 63h1v1h-1zM23 63h1v1h-1zM26 63h1v1h-1zM30 63h1v1h-1zM2 64h1v1h-1zM11 64h1v1h-1zM17 64h1v1h-1zM20 64h1v1h-1zM23 64h1v1h-1zM24 64h1v1h-1zM2 65h1v1h-1zM7 65h1v1h-1zM12 65h1v1h-1zM14 65h1v1h-1zM18 65h1v1h-1zM19 65h1v1h-1zM20 65h1v1h-1zM31 65h1v1h-1zM0 66h1v1h-1zM1 66h1v1h-1zM4 66h1v1h-1zM8 66h1v1h-1zM10 66h1v1h-1zM11 66h1v1h-1zM19 66h1v1h-1zM24 66h1v1h-1zM34 66h1v1h-1zM4 67h1v1h-1zM5 67h1v1h-1zM13 67h1v1h-1zM19 67h1v1h-1zM25 67h1v1h-1zM28 67h1v1h-1zM29 67h1v1h-1zM34 67h1v1h-1zM1 68h1v1h-1zM3 68h1v1h-1zM4 68h1v1h-1zM9 68h1v1h-1zM10 68h1v1h-1zM16 68h1v1h-1zM17 68h1v1h-1zM21 68h1v1h-1zM23 68h1v1h-1zM29 68h1v1h-1zM30 68h1v1h-1zM34 68h1v1h-1zM4 69h1v1h-1zM5 69h1v1h-1zM11 69h1v1h-1zM21 69h1v1h-1zM23 69h1v1h-1zM26 69h1v1h-1zM11 70h1v1h-1zM27 70h1v1h-1zM30 70h1v1h-1zM2 71h1v1h-1zM3 71h1v1h-1zM10 71h1v1h-1zM21 71h1v1h-1zM32 71h1v1h-1zM34 71h1v1h-1zM35 71h1v1h-1zM7 72h1v1h-1zM9 72h1v1h-1zM10 72h1v1h-1zM18 72h1v1h-1zM19 72h1v1h-1zM23 72h1v1h-1zM3 73h1v1h-1zM13 73h1v1h-1zM14 73h1v1h-1zM21 73h1v1h-1zM23 73h1v1h-1zM24 73h1v1h-1zM26 73h1v1h-1zM33 73h1v1h-1zM1 74h1v1h-1zM5 74h1v1h-1zM7 74h1v1h-1zM15 74h1v1h-1zM17 74h1v1h-1zM24 74h1v1h-1zM29 74h1v1h-1zM0 75h1v1h-1zM1 75h1v1h-1zM4 75h1v1h-1zM6 75h1v1h-1zM10 75h1v1h-1zM11 75h1v1h-1zM12 75h1v1h-1zM13 75h1v1h-1zM21 75h1v1h-1zM23 75h1v1h-1zM26 75h1v1h-1zM28 75h1v1h-1zM29 75h1v1h-1zM33 75h1v1h-1zM3 76h1v1h-1zM4 76h1v1h-1zM21 76h1v1h-1zM22 76h1v1h-1zM24 76h1v1h-1zM26 76h1v1h-1zM0 77h1v1h-1zM1 77h1v1h-1zM3 77h1v1h-1zM4 77h1v1h-1zM11 77h1v1h-1zM18 77h1v1h-1zM20 77h1v1h-1zM22 77h1v1h-1zM29 77h1v1h-1zM30 77h1v1h-1zM34 77h1v1h-1zM14 78h1v1h-1zM16 78h1v1h-1zM20 78h1v1h-1zM21 78h1v1h-1zM28 78h1v1h-1zM33 78h1v1h-1zM34 78h1v1h-1zM6 79h1v1h-1zM10 79h1v1h-1zM16 79h1v1h-1zM19 79h1v1h-1zM21 79h1v1h-1zM24 79h1v1h-1zM25 79h1v1h-1zM26 79h1v1h-1zM27 79h1v1h-1zM28 79h1v1h-1zM29 79h1v1h-1zM0 80h1v1h-1zM23 80h1v1h-1zM25 80h1v1h-1zM34 80h1v1h-1zM4 81h1v1h-1zM5 81h1v1h-1zM8 81h1v1h-1zM16 81h1v1h-1zM19 81h1v1h-1zM5 82h1v1h-1zM7 82h1v1h-1zM15 82h1v1h-1zM31 82h1v1h-1zM32 82h1v1h-1zM2 83h1v1h-1zM3 83h1v1h-1zM17 83h1v1h-1zM25 83h1v1h-1zM27 83h1v1h-1zM33 83h1v1h-1zM1 84h1v1h-1zM3 84h1v1h-1zM11 84h1v1h-1zM15 84h1v1h-1zM25 84h1v1h-1zM33 84h1v1h-1zM34 84h1v1h-1zM0 85h1v1h-1zM6 85h1v1h-1zM7 85h1v1h-1zM9 85h1v1h-1zM10 85h1v1h-1zM21 85h1v1h-1zM23 85h1v1h-1zM26 85h1v1h-1zM29 85h1v1h-1zM32 85h1v1h-1zM3 86h1v1h-1zM10 86h1v1h-1zM25 86h1v1h-1zM1 87h1v1h-1zM2 87h1v1h-1zM3 87h1v1h-1zM4 87h1v1h-1zM13 87h1v1h-1zM15 87h1v1h-1zM17 87h1v1h-1zM18 87h1v1h-1zM22 87h1v1h-1zM24 87h1v1h-1zM35 87h1v1h-1zM17 88h1v1h-1zM18 88h1v1h-1zM22 88h1v1h-1zM23 88h1v1h-1zM30 88h1v1h-1zM1 89h1v1h-1zM6 89h1v1h-1zM10 89h1v1h-1zM13 89h1v1h-1zM14 89h1v1h-1zM23 89h1v1h-1zM26 89h1v1h-1z"/><path fill="rgb(160,160,160)" d="M1 0h1v1h-1zM2 0h1v1h-1zM7 0h1v1h-1zM11 0h1v1h-1zM14 0h1v1h-1zM21 0h1v1h-1zM26 0h1v1h-1zM27 0h1v1h-1zM32 0h1v1h-1zM34 0h1v1h-1zM8 1h1v1h-1zM13 1h1v1h-1zM15 1h1v1h-1zM29 1h1v1h-1zM30 1h1v1h-1zM31 1h1v1h-1zM35 1h1v1h-1zM7 2h1v1h-1zM8 2h1v1h-1zM12 2h1v1h-1zM18 2h1v1h-1zM27 2h1v1h-1zM31 2h1v1h-1zM5 3h1v1h-1zM20 3h1v1h-1zM23 3h1v1h-1zM29 3h1v1h-1zM33 3h1v1h-1zM14 4h1v1h-1zM16 4h1v1h-1zM19 4h1v1h-1zM23 4h1v1h-1zM28 4h1v1h-1zM32 4h1v1h-1zM34 4h1v1h-1zM4 5h1v1h-1zM9 5h1v1h-1zM28 5h1v1h-1zM24 6h1v1h-1zM26 6h1v1h-1zM30 6h1v1h-1zM1 7h1v1h-1zM9 7h1v1h-1zM10 7h1v1h-1zM12 7h1v1h-1zM18 7h1v1h-1zM19 7h1v1h-1zM23 7h1v1h-1zM28 7h1v1h-1zM32 7h1v1h-1zM35 7h1v1h-1zM2 8h1v1h-1zM3 8h1v1h-1zM12 8h1v1h-1zM19 8h1v1h-1zM20 8h1v1h-1zM25 8h1v1h-1zM33 8h1v1h-1zM5 9h1v1h-1zM6 9h1v1h-1zM26 9h1v1h-1zM29 9h1v1h-1zM33 9h1v1h-1zM1 10h1v1h-1zM8 10h1v1h-1zM9 10h1v1h-1zM17 10h1v1h-1zM20 10h1v1h-1zM22 10h1v1h-1zM30 10h1v1h-1zM34 10h1v1h-1zM2 11h1v1h-1zM3 11h1v1h-1zM4 11h1v1h-1zM12 11h1v1h-1zM18 11h1v1h-1zM20 11h1v1h-1zM26 11h1v1h-1zM33 11h1v1h-1zM34 11h1v1h-1zM0 12h1v1h-1zM12 12h1v1h-1zM13 12h1v1h-1zM20 12h1v1h-1zM26 12h1v1h-1zM7 13h1v1h-1zM16 13h1v1h-1zM18 13h1v1h-1zM20 13h1v1h-1zM23 13h1v1h-1zM28 13h1v1h-1zM12 14h1v1h-1zM13 14h1v1h-1zM16 14h1v1h-1zM24 14h1v1h-1zM0 15h1v1h-1zM6 15h1v1h-1zM7 15h1v1h-1zM9 15h1v1h-1zM10 15h1v1h-1zM27 15h1v1h-1zM4 16h1v1h-1zM5 16h1v1h-1zM7 16h1v1h-1zM10 16h1v1h-1zM11 16h1v1h-1zM13 16h1v1h-1zM16 16h1v1h-1zM18 16h1v1h-1zM34 16h1v1h-1zM10 17h1v1h-1zM18 17h1v1h-1zM27 17h1v1h-1zM28 17h1v1h-1zM15 18h1v1h-1zM16 18h1v1h-1zM33 18h1v1h-1zM8 19h1v1h-1zM15 19h1v1h-1zM19 19h1v1h-1zM26 19h1v1h-1zM28 19h1v1h-1zM33 19h1v1h-1zM12 20h1v1h-1zM13 20h1v1h-1zM16 20h1v1h-1zM19 20h1v1h-1zM20 20h1v1h-1zM22 20h1v1h-1zM24 20h1v1h-1zM32 20h1v1h-1zM3 21h1v1h-1zM15 21h1v1h-1zM16 21h1v1h-1zM21 21h1v1h-1zM30 21h1v1h-1zM31 21h1v1h-1zM33 21h1v1h-1zM26 22h1v1h-1zM4 23h1v1h-1zM8 23h1v1h-1zM17 23h1v1h-1zM18 23h1v1h-1zM29 23h1v1h-1zM35 23h1v1h-1zM3 24h1v1h-1zM6 24h1v1h-1zM11 24h1v1h-1zM19 24h1v1h-1zM21 24h1v1h-1zM29 24h1v1h-1zM2 25h1v1h-1zM6 25h1v1h-1zM7 25h1v1h-1zM8 25h1v1h-1zM13 25h1v1h-1zM15 25h1v1h-1zM18 25h1v1h-1zM21 25h1v1h-1zM3 26h1v1h-1zM4 26h1v1h-1zM5 26h1v1h-1zM12 26h1v1h-1zM14 26h1v1h-1zM26 26h1v1h-1zM27 26h1v1h-1zM28 26h1v1h-1zM30 26h1v1h-1zM31 26h1v1h-1zM34 26h1v1h-1zM18 27h1v1h-1zM21 27h1v1h-1zM23 27h1v1h-1zM15 28h1v1h-1zM26 28h1v1h-1zM31 28h1v1h-1zM33 28h1v1h-1zM1 29h1v1h-1zM12 29h1v1h-1zM16 29h1v1h-1zM24 29h1v1h-1zM27 29h1v1h-1zM29 29h1v1h-1zM0 30h1v1h-1zM1 30h1v1h-1zM12 30h1v1h-1zM23 30h1v1h-1zM31 30h1v1h-1zM6 31h1v1h-1zM14 31h1v1h-1zM28 31h1v1h-1zM8 32h1v1h-1zM14 32h1v1h-1zM19 32h1v1h-1zM22 32h1v1h-1zM31 32h1v1h-1zM3 33h1v1h-1zM14 33h1v1h-1zM15 33h1v1h-1zM19 33h1v1h-1zM27 33h1v1h-1zM31 33h1v1h-1zM5 34h1v1h-1zM12 34h1v1h-1zM14 34h1v1h-1zM17 34h1v1h-1zM20 34h1v1h-1zM23 34h1v1h-1zM27 34h1v1h-1zM3 35h1v1h-1zM5 35h1v1h-1zM7 35h1v1h-1zM19 35h1v1h-1zM23 35h1v1h-1zM24 35h1v1h-1zM33 35h1v1h-1zM6 36h1v1h-1zM11 36h1v1h-1zM14 36h1v1h-1zM17 36h1v1h-1zM26 36h1v1h-1zM29 36h1v1h-1zM35 36h1v1h-1zM1 37h1v1h-1zM2 37h1v1h-1zM3 37h1v1h-1zM15 37h1v1h-1zM23 37h1v1h-1zM27 37h1v1h-1zM2 38h1v1h-1zM21 38h1v1h-1zM23 38h1v1h-1zM7 39h1v1h-1zM19 39h1v1h-1zM20 39h1v1h-1zM26 39h1v1h-1zM0 40h1v1h-1zM1 40h1v1h-1zM8 40h1v1h-1zM9 40h1v1h-1zM13 40h1v1h-1zM33 40h1v1h-1zM35 40h1v1h-1zM0 41h1v1h-1zM5 41h1v1h-1zM6 41h1v1h-1zM10 41h1v1h-1zM15 41h1v1h-1zM20 41h1v1h-1zM27 41h1v1h-1zM5 42h1v1h-1zM8 42h1v1h-1zM11 42h1v1h-1zM15 42h1v1h-1zM16 42h1v1h-1zM17 42h1v1h-1zM25 42h1v1h-1zM2 43h1v1h-1zM3 43h1v1h-1zM8 43h1v1h-1zM26 43h1v1h-1zM1 44h1v1h-1zM16 44h1v1h-1zM17 44h1v1h-1zM12 45h1v1h-1zM13 45h1v1h-1zM8 46h1v1h-1zM10 46h1v1h-1zM19 46h1v1h-1zM30 46h1v1h-1zM32 46h1v1h-1zM11 47h1v1h-1zM16 47h1v1h-1zM22 47h1v1h-1zM27 47h1v1h-1zM30 47h1v1h-1zM34 47h1v1h-1zM0 48h1v1h-1zM18 48h1v1h-1zM21 48h1v1h-1zM31 48h1v1h-1zM33 48h1v1h-1zM6 49h1v1h-1zM7 49h1v1h-1zM9 49h1v1h-1zM10 49h1v1h-1zM30 49h1v1h-1zM33 49h1v1h-1zM34 49h1v1h-1zM7 50h1v1h-1zM16 50h1v1h-1zM18 50h1v1h-1zM23 50h1v1h-1zM24 50h1v1h-1zM26 50h1v1h-1zM31 50h1v1h-1zM34 50h1v1h-1zM4 51h1v1h-1zM7 51h1v1h-1zM10 51h1v1h-1zM12 51h1v1h-1zM28 51h1v1h-1zM32 51h1v1h-1zM1 52h1v1h-1zM3 52h1v1h-1zM14 52h1v1h-1zM18 52h1v1h-1zM5 53h1v1h-1zM8 53h1v1h-1zM13 53h1v1h-1zM14 53h1v1h-1zM9 54h1v1h-1zM21 54h1v1h-1zM33 54h1v1h-1zM35 54h1v1h-1zM0 55h1v1h-1zM6 55h1v1h-1zM9 55h1v1h-1zM18 55h1v1h-1zM20 55h1v1h-1zM24 55h1v1h-1zM28 55h1v1h-1zM34 55h1v1h-1zM0 56h1v1h-1zM6 56h1v1h-1zM18 56h1v1h-1zM28 56h1v1h-1zM32 56h1v1h-1zM0 57h1v1h-1zM9 57h1v1h-1zM10 57h1v1h-1zM4 58h1v1h-1zM6 58h1v1h-1zM11 58h1v1h-1zM14 58h1v1h-1zM23 58h1v1h-1zM29 58h1v1h-1zM4 59h1v1h-1zM29 59h1v1h-1zM0 60h1v1h-1zM1 60h1v1h-1zM11 60h1v1h-1zM24 60h1v1h-1zM27 60h1v1h-1zM29 60h1v1h-1zM30 60h1v1h-1zM34 60h1v1h-1zM2 61h1v1h-1zM17 61h1v1h-1zM22 61h1v1h-1zM23 61h1v1h-1zM9 62h1v1h-1zM17 62h1v1h-1zM19 62h1v1h-1zM21 62h1v1h-1zM30 62h1v1h-1zM33 62h1v1h-1zM34 62h1v1h-1zM5 63h1v1h-1zM8 63h1v1h-1zM9 63h1v1h-1zM1 64h1v1h-1zM3 64h1v1h-1zM9 64h1v1h-1zM10 64h1v1h-1zM13 64h1v1h-1zM19 64h1v1h-1zM22 64h1v1h-1zM8 65h1v1h-1zM17 65h1v1h-1zM22 65h1v1h-1zM30 65h1v1h-1zM35 65h1v1h-1zM2 66h1v1h-1zM7 66h1v1h-1zM9 66h1v1h-1zM14 66h1v1h-1zM18 66h1v1h-1zM27 66h1v1h-1zM32 66h1v1h-1zM3 67h1v1h-1zM20 67h1v1h-1zM21 67h1v1h-1zM0 68h1v1h-1zM5 68h1v1h-1zM11 68h1v1h-1zM26 68h1v1h-1zM28 68h1v1h-1zM32 68h1v1h-1zM12 69h1v1h-1zM19 69h1v1h-1zM25 69h1v1h-1zM28 69h1v1h-1zM31 69h1v1h-1zM2 70h1v1h-1zM6 70h1v1h-1zM8 70h1v1h-1zM9 70h1v1h-1zM13 70h1v1h-1zM15 70h1v1h-1zM20 70h1v1h-1zM21 70h1v1h-1zM23 70h1v1h-1zM26 70h1v1h-1zM29 70h1v1h-1zM6 71h1v1h-1zM15 71h1v1h-1zM20 71h1v1h-1zM25 71h1v1h-1zM28 71h1v1h-1zM11 72h1v1h-1zM12 72h1v1h-1zM14 72h1v1h-1zM15 72h1v1h-1zM24 72h1v1h-1zM26 72h1v1h-1zM31 72h1v1h-1zM8 73h1v1h-1zM9 73h1v1h-1zM20 73h1v1h-1zM25 73h1v1h-1zM31 73h1v1h-1zM34 73h1v1h-1zM13 74h1v1h-1zM16 74h1v1h-1zM27 74h1v1h-1zM34 74h1v1h-1zM7 75h1v1h-1zM25 75h1v1h-1zM27 75h1v1h-1zM30 75h1v1h-1zM0 76h1v1h-1zM2 76h1v1h-1zM7 76h1v1h-1zM12 76h1v1h-1zM25 76h1v1h-1zM28 76h1v1h-1zM29 76h1v1h-1zM32 76h1v1h-1zM8 77h1v1h-1zM17 77h1v1h-1zM32 77h1v1h-1zM35 77h1v1h-1zM2 78h1v1h-1zM10 78h1v1h-1zM11 78h1v1h-1zM24 78h1v1h-1zM26 78h1v1h-1zM27 78h1v1h-1zM9 79h1v1h-1zM15 79h1v1h-1zM17 79h1v1h-1zM6 80h1v1h-1zM7 80h1v1h-1zM11 80h1v1h-1zM13 80h1v1h-1zM27 80h1v1h-1zM28 80h1v1h-1zM21 81h1v1h-1zM24 81h1v1h-1zM25 81h1v1h-1zM26 81h1v1h-1zM28 81h1v1h-1zM30 81h1v1h-1zM32 81h1v1h-1zM3 82h1v1h-1zM11 82h1v1h-1zM12 82h1v1h-1zM20 82h1v1h-1zM23 82h1v1h-1zM26 82h1v1h-1zM30 82h1v1h-1zM0 83h1v1h-1zM1 83h1v1h-1zM6 83h1v1h-1zM10 83h1v1h-1zM11 83h1v1h-1zM15 83h1v1h-1zM19 83h1v1h-1zM21 83h1v1h-1zM23 83h1v1h-1zM24 83h1v1h-1zM21 84h1v1h-1zM29 84h1v1h-1zM30 84h1v1h-1zM2 85h1v1h-1zM13 85h1v1h-1zM15 85h1v1h-1zM18 85h1v1h-1zM22 85h1v1h-1zM27 85h1v1h-1zM28 85h1v1h-1zM0 86h1v1h-1zM15 86h1v1h-1zM22 86h1v1h-1zM27 86h1v1h-1zM28 86h1v1h-1zM29 86h1v1h-1zM31 86h1v1h-1zM34 86h1v1h-1zM35 86h1v1h-1zM9 87h1v1h-1zM10 87h1v1h-1zM23 87h1v1h-1zM26 87h1v1h-1zM28 87h1v1h-1zM1 88h1v1h-1zM2 88h1v1h-1zM3 88h1v1h-1zM6 88h1v1h-1zM9 88h1v1h-1zM14 88h1v1h-1zM26 88h1v1h-1zM35 88h1v1h-1zM0 89h1v1h-1zM4 89h1v1h-1zM17 89h1v1h-1zM20 89h1v1h-1zM29 89h1v1h-1zM31 89h1v1h-1zM32 89h1v1h-1z"/><path fill="rgb(181,181,181)" d="M0 0h1v1h-1zM12 0h1v1h-1zM16 0h1v1h-1zM18 0h1v1h-1zM19 0h1v1h-1zM5 1h1v1h-1zM6 1h1v1h-1zM9 1h1v1h-1zM12 1h1v1h-1zM16 1h1v1h-1zM20 1h1v1h-1zM3 2h1v1h-1zM10 2h1v1h-1zM11 2h1v1h-1zM17 2h1v1h-1zM25 2h1v1h-1zM28 2h1v1h-1zM32 2h1v1h-1zM33 2h1v1h-1zM4 3h1v1h-1zM12 3h1v1h-1zM13 3h1v1h-1zM16 3h1v1h-1zM17 3h1v1h-1zM34 3h1v1h-1zM9 4h1v1h-1zM11 4h1v1h-1zM30 4h1v1h-1zM33 4h1v1h-1zM2 5h1v1h-1zM3 5h1v1h-1zM5 5h1v1h-1zM22 5h1v1h-1zM25 5h1v1h-1zM30 5h1v1h-1zM31 5h1v1h-1zM15 6h1v1h-1zM18 6h1v1h-1zM20 6h1v1h-1zM32 6h1v1h-1zM34 6h1v1h-1zM7 7h1v1h-1zM11 7h1v1h-1zM20 7h1v1h-1zM24 7h1v1h-1zM27 7h1v1h-1zM0 8h1v1h-1zM13 8h1v1h-1zM15 8h1v1h-1zM17 8h1v1h-1zM3 9h1v1h-1zM9 9h1v1h-1zM13 9h1v1h-1zM16 9h1v1h-1zM6 10h1v1h-1zM10 10h1v1h-1zM14 10h1v1h-1zM23 10h1v1h-1zM27 10h1v1h-1zM6 11h1v1h-1zM13 11h1v1h-1zM23 11h1v1h-1zM31 11h1v1h-1zM1 12h1v1h-1zM2 12h1v1h-1zM4 12h1v1h-1zM6 12h1v1h-1zM34 12h1v1h-1zM5 13h1v1h-1zM15 13h1v1h-1zM17 13h1v1h-1zM8 14h1v1h-1zM10 14h1v1h-1zM22 14h1v1h-1zM18 15h1v1h-1zM22 15h1v1h-1zM30 15h1v1h-1zM31 15h1v1h-1zM35 15h1v1h-1zM2 16h1v1h-1zM6 16h1v1h-1zM12 16h1v1h-1zM17 16h1v1h-1zM19 16h1v1h-1zM23 16h1v1h-1zM26 16h1v1h-1zM27 16h1v1h-1zM0 17h1v1h-1zM2 17h1v1h-1zM7 17h1v1h-1zM22 17h1v1h-1zM5 18h1v1h-1zM22 18h1v1h-1zM28 18h1v1h-1zM31 18h1v1h-1zM32 18h1v1h-1zM6 19h1v1h-1zM11 19h1v1h-1zM25 19h1v1h-1zM32 19h1v1h-1zM34 19h1v1h-1zM35 19h1v1h-1zM2 20h1v1h-1zM7 20h1v1h-1zM25 20h1v1h-1zM33 20h1v1h-1zM13 21h1v1h-1zM20 21h1v1h-1zM22 21h1v1h-1zM26 21h1v1h-1zM5 22h1v1h-1zM6 22h1v1h-1zM8 22h1v1h-1zM9 22h1v1h-1zM11 22h1v1h-1zM13 22h1v1h-1zM18 22h1v1h-1zM25 22h1v1h-1zM27 22h1v1h-1zM28 22h1v1h-1zM29 22h1v1h-1zM6 23h1v1h-1zM34 23h1v1h-1zM5 24h1v1h-1zM18 24h1v1h-1zM24 24h1v1h-1zM25 24h1v1h-1zM28 24h1v1h-1zM34 24h1v1h-1zM27 25h1v1h-1zM28 25h1v1h-1zM35 25h1v1h-1zM15 26h1v1h-1zM2 27h1v1h-1zM3 27h1v1h-1zM5 27h1v1h-1zM6 27h1v1h-1zM10 27h1v1h-1zM14 27h1v1h-1zM24 27h1v1h-1zM30 27h1v1h-1zM0 28h1v1h-1zM13 28h1v1h-1zM20 28h1v1h-1zM9 29h1v1h-1zM13 29h1v1h-1zM14 29h1v1h-1zM15 29h1v1h-1zM17 29h1v1h-1zM31 29h1v1h-1zM34 29h1v1h-1zM2 30h1v1h-1zM16 30h1v1h-1zM20 30h1v1h-1zM33 30h1v1h-1zM34 30h1v1h-1zM0 31h1v1h-1zM4 31h1v1h-1zM7 31h1v1h-1zM10 31h1v1h-1zM15 31h1v1h-1zM19 31h1v1h-1zM23 31h1v1h-1zM27 31h1v1h-1zM30 31h1v1h-1zM32 31h1v1h-1zM2 32h1v1h-1zM7 32h1v1h-1zM27 32h1v1h-1zM29 32h1v1h-1zM32 32h1v1h-1zM5 33h1v1h-1zM13 33h1v1h-1zM18 33h1v1h-1zM20 33h1v1h-1zM2 34h1v1h-1zM7 34h1v1h-1zM18 34h1v1h-1zM26 34h1v1h-1zM10 35h1v1h-1zM18 35h1v1h-1zM26 35h1v1h-1zM29 35h1v1h-1zM31 35h1v1h-1zM0 36h1v1h-1zM8 36h1v1h-1zM16 36h1v1h-1zM20 36h1v1h-1zM22 36h1v1h-1zM30 36h1v1h-1zM34 36h1v1h-1zM8 37h1v1h-1zM11 37h1v1h-1zM26 37h1v1h-1zM33 37h1v1h-1zM1 38h1v1h-1zM7 38h1v1h-1zM8 38h1v1h-1zM12 38h1v1h-1zM15 38h1v1h-1zM27 38h1v1h-1zM10 39h1v1h-1zM17 39h1v1h-1zM31 39h1v1h-1zM2 40h1v1h-1zM4 40h1v1h-1zM12 40h1v1h-1zM21 40h1v1h-1zM23 40h1v1h-1zM27 40h1v1h-1zM28 40h1v1h-1zM4 41h1v1h-1zM9 41h1v1h-1zM14 41h1v1h-1zM25 41h1v1h-1zM31 41h1v1h-1zM34 41h1v1h-1zM18 42h1v1h-1zM20 42h1v1h-1zM21 42h1v1h-1zM23 42h1v1h-1zM33 42h1v1h-1zM17 43h1v1h-1zM22 43h1v1h-1zM24 43h1v1h-1zM28 43h1v1h-1zM29 43h1v1h-1zM5 44h1v1h-1zM9 44h1v1h-1zM21 44h1v1h-1zM22 44h1v1h-1zM28 44h1v1h-1zM30 44h1v1h-1zM32 44h1v1h-1zM34 45h1v1h-1zM35 45h1v1h-1zM1 46h1v1h-1zM27 46h1v1h-1zM29 46h1v1h-1zM34 46h1v1h-1zM35 46h1v1h-1zM2 47h1v1h-1zM3 47h1v1h-1zM18 47h1v1h-1zM25 47h1v1h-1zM28 47h1v1h-1zM35 47h1v1h-1zM5 48h1v1h-1zM6 48h1v1h-1zM15 48h1v1h-1zM19 48h1v1h-1zM20 48h1v1h-1zM32 48h1v1h-1zM35 48h1v1h-1zM12 49h1v1h-1zM13 49h1v1h-1zM20 49h1v1h-1zM21 49h1v1h-1zM24 49h1v1h-1zM26 49h1v1h-1zM4 50h1v1h-1zM20 50h1v1h-1zM22 50h1v1h-1zM33 50h1v1h-1zM13 51h1v1h-1zM18 51h1v1h-1zM19 51h1v1h-1zM26 51h1v1h-1zM30 51h1v1h-1zM34 51h1v1h-1zM9 52h1v1h-1zM15 52h1v1h-1zM17 52h1v1h-1zM22 52h1v1h-1zM29 52h1v1h-1zM32 52h1v1h-1zM35 52h1v1h-1zM10 53h1v1h-1zM24 53h1v1h-1zM27 53h1v1h-1zM31 53h1v1h-1zM16 54h1v1h-1zM19 54h1v1h-1zM8 55h1v1h-1zM10 55h1v1h-1zM17 55h1v1h-1zM21 55h1v1h-1zM25 55h1v1h-1zM27 55h1v1h-1zM35 55h1v1h-1zM3 56h1v1h-1zM5 56h1v1h-1zM12 56h1v1h-1zM26 56h1v1h-1zM27 56h1v1h-1zM31 56h1v1h-1zM17 57h1v1h-1zM23 57h1v1h-1zM28 57h1v1h-1zM3 58h1v1h-1zM9 58h1v1h-1zM17 58h1v1h-1zM24 58h1v1h-1zM25 58h1v1h-1zM30 58h1v1h-1zM35 58h1v1h-1zM3 59h1v1h-1zM5 59h1v1h-1zM7 59h1v1h-1zM16 59h1v1h-1zM33 59h1v1h-1zM8 60h1v1h-1zM10 60h1v1h-1zM13 60h1v1h-1zM28 60h1v1h-1zM31 60h1v1h-1zM9 61h1v1h-1zM11 61h1v1h-1zM14 61h1v1h-1zM30 61h1v1h-1zM6 62h1v1h-1zM25 62h1v1h-1zM35 62h1v1h-1zM0 63h1v1h-1zM4 63h1v1h-1zM15 63h1v1h-1zM17 63h1v1h-1zM19 63h1v1h-1zM20 63h1v1h-1zM22 63h1v1h-1zM27 63h1v1h-1zM34 63h1v1h-1zM35 63h1v1h-1zM26 64h1v1h-1zM33 64h1v1h-1zM34 64h1v1h-1zM35 64h1v1h-1zM3 65h1v1h-1zM5 65h1v1h-1zM23 65h1v1h-1zM25 65h1v1h-1zM34 65h1v1h-1zM13 66h1v1h-1zM17 66h1v1h-1zM22 66h1v1h-1zM25 66h1v1h-1zM26 66h1v1h-1zM35 66h1v1h-1zM2 67h1v1h-1zM16 67h1v1h-1zM17 67h1v1h-1zM22 67h1v1h-1zM23 67h1v1h-1zM30 67h1v1h-1zM15 68h1v1h-1zM24 68h1v1h-1zM35 68h1v1h-1zM7 69h1v1h-1zM20 69h1v1h-1zM22 69h1v1h-1zM27 69h1v1h-1zM32 69h1v1h-1zM34 69h1v1h-1zM5 70h1v1h-1zM18 70h1v1h-1zM19 70h1v1h-1zM28 70h1v1h-1zM33 70h1v1h-1zM9 71h1v1h-1zM16 71h1v1h-1zM17 71h1v1h-1zM23 71h1v1h-1zM27 71h1v1h-1zM31 71h1v1h-1zM1 72h1v1h-1zM3 72h1v1h-1zM33 72h1v1h-1zM35 72h1v1h-1zM6 73h1v1h-1zM7 73h1v1h-1zM28 73h1v1h-1zM29 73h1v1h-1zM32 73h1v1h-1zM0 74h1v1h-1zM6 74h1v1h-1zM8 74h1v1h-1zM11 74h1v1h-1zM18 74h1v1h-1zM25 74h1v1h-1zM26 74h1v1h-1zM35 74h1v1h-1zM8 75h1v1h-1zM14 75h1v1h-1zM20 75h1v1h-1zM22 75h1v1h-1zM24 75h1v1h-1zM31 75h1v1h-1zM32 75h1v1h-1zM13 76h1v1h-1zM18 76h1v1h-1zM23 76h1v1h-1zM30 76h1v1h-1zM33 76h1v1h-1zM7 77h1v1h-1zM13 77h1v1h-1zM16 77h1v1h-1zM24 77h1v1h-1zM26 77h1v1h-1zM27 77h1v1h-1zM28 77h1v1h-1zM31 77h1v1h-1zM5 78h1v1h-1zM7 78h1v1h-1zM8 78h1v1h-1zM0 79h1v1h-1zM2 79h1v1h-1zM7 79h1v1h-1zM22 79h1v1h-1zM5 80h1v1h-1zM8 80h1v1h-1zM10 80h1v1h-1zM15 80h1v1h-1zM16 80h1v1h-1zM20 80h1v1h-1zM3 81h1v1h-1zM9 81h1v1h-1zM12 81h1v1h-1zM31 81h1v1h-1zM34 81h1v1h-1zM6 82h1v1h-1zM13 82h1v1h-1zM17 82h1v1h-1zM18 82h1v1h-1zM33 82h1v1h-1zM35 82h1v1h-1zM4 83h1v1h-1zM4 84h1v1h-1zM5 84h1v1h-1zM8 84h1v1h-1zM18 84h1v1h-1zM20 84h1v1h-1zM31 84h1v1h-1zM3 85h1v1h-1zM4 85h1v1h-1zM30 85h1v1h-1zM31 85h1v1h-1zM33 85h1v1h-1zM9 86h1v1h-1zM12 86h1v1h-1zM19 86h1v1h-1zM21 86h1v1h-1zM26 86h1v1h-1zM12 87h1v1h-1zM20 87h1v1h-1zM29 87h1v1h-1zM4 88h1v1h-1zM8 88h1v1h-1zM11 88h1v1h-1zM8 89h1v1h-1zM15 89h1v1h-1zM16 89h1v1h-1zM21 89h1v1h-1zM24 89h1v1h-1z"/><path fill="rgb(202,202,202)" d="M8 0h1v1h-1zM13 0h1v1h-1zM17 0h1v1h-1zM1 1h1v1h-1zM3 1h1v1h-1zM1 2h1v1h-1zM14 2h1v1h-1zM16 2h1v1h-1zM2 3h1v1h-1zM5 4h1v1h-1zM20 4h1v1h-1zM31 4h1v1h-1zM35 4h1v1h-1zM4 6h1v1h-1zM22 6h1v1h-1zM23 6h1v1h-1zM33 6h1v1h-1zM4 7h1v1h-1zM17 7h1v1h-1zM11 8h1v1h-1zM21 8h1v1h-1zM0 9h1v1h-1zM11 9h1v1h-1zM24 9h1v1h-1zM27 9h1v1h-1zM35 9h1v1h-1zM4 10h1v1h-1zM18 10h1v1h-1zM19 10h1v1h-1zM33 10h1v1h-1zM10 11h1v1h-1zM24 11h1v1h-1zM27 11h1v1h-1zM15 12h1v1h-1zM23 12h1v1h-1zM28 12h1v1h-1zM30 12h1v1h-1zM32 12h1v1h-1zM35 12h1v1h-1zM2 13h1v1h-1zM22 13h1v1h-1zM27 13h1v1h-1zM23 14h1v1h-1zM2 15h1v1h-1zM20 15h1v1h-1zM24 15h1v1h-1zM25 15h1v1h-1zM28 15h1v1h-1zM15 16h1v1h-1zM20 16h1v1h-1zM31 16h1v1h-1zM33 16h1v1h-1zM16 17h1v1h-1zM2 18h1v1h-1zM9 19h1v1h-1zM14 19h1v1h-1zM16 19h1v1h-1zM23 19h1v1h-1zM30 19h1v1h-1zM17 20h1v1h-1zM6 21h1v1h-1zM10 21h1v1h-1zM24 21h1v1h-1zM27 21h1v1h-1zM2 22h1v1h-1zM12 22h1v1h-1zM19 22h1v1h-1zM20 22h1v1h-1zM21 22h1v1h-1zM33 22h1v1h-1zM10 23h1v1h-1zM24 23h1v1h-1zM26 23h1v1h-1zM0 24h1v1h-1zM14 24h1v1h-1zM3 25h1v1h-1zM10 25h1v1h-1zM14 25h1v1h-1zM25 25h1v1h-1zM10 26h1v1h-1zM16 26h1v1h-1zM23 26h1v1h-1zM25 26h1v1h-1zM15 27h1v1h-1zM17 27h1v1h-1zM22 27h1v1h-1zM6 28h1v1h-1zM25 28h1v1h-1zM2 29h1v1h-1zM4 29h1v1h-1zM18 29h1v1h-1zM20 29h1v1h-1zM21 29h1v1h-1zM26 29h1v1h-1zM32 29h1v1h-1zM11 30h1v1h-1zM14 30h1v1h-1zM17 30h1v1h-1zM22 30h1v1h-1zM12 31h1v1h-1zM21 31h1v1h-1zM35 31h1v1h-1zM1 32h1v1h-1zM6 32h1v1h-1zM26 32h1v1h-1zM11 33h1v1h-1zM21 33h1v1h-1zM23 33h1v1h-1zM25 33h1v1h-1zM19 34h1v1h-1zM24 34h1v1h-1zM29 34h1v1h-1zM32 34h1v1h-1zM9 35h1v1h-1zM28 36h1v1h-1zM7 37h1v1h-1zM12 37h1v1h-1zM13 37h1v1h-1zM22 37h1v1h-1zM10 38h1v1h-1zM11 38h1v1h-1zM19 38h1v1h-1zM22 38h1v1h-1zM35 38h1v1h-1zM0 39h1v1h-1zM2 39h1v1h-1zM27 39h1v1h-1zM5 40h1v1h-1zM19 40h1v1h-1zM20 40h1v1h-1zM2 41h1v1h-1zM21 41h1v1h-1zM24 41h1v1h-1zM3 42h1v1h-1zM14 42h1v1h-1zM19 42h1v1h-1zM22 42h1v1h-1zM0 43h1v1h-1zM10 43h1v1h-1zM12 43h1v1h-1zM10 44h1v1h-1zM11 44h1v1h-1zM20 44h1v1h-1zM24 44h1v1h-1zM29 44h1v1h-1zM5 45h1v1h-1zM30 45h1v1h-1zM4 46h1v1h-1zM14 46h1v1h-1zM25 46h1v1h-1zM26 47h1v1h-1zM31 47h1v1h-1zM33 47h1v1h-1zM10 48h1v1h-1zM5 49h1v1h-1zM16 49h1v1h-1zM18 49h1v1h-1zM29 49h1v1h-1zM11 50h1v1h-1zM0 51h1v1h-1zM11 51h1v1h-1zM25 51h1v1h-1zM11 52h1v1h-1zM23 52h1v1h-1zM6 53h1v1h-1zM9 53h1v1h-1zM17 53h1v1h-1zM23 53h1v1h-1zM1 54h1v1h-1zM24 54h1v1h-1zM27 54h1v1h-1zM29 54h1v1h-1zM30 54h1v1h-1zM34 54h1v1h-1zM1 55h1v1h-1zM7 55h1v1h-1zM29 55h1v1h-1zM30 55h1v1h-1zM13 56h1v1h-1zM15 57h1v1h-1zM16 57h1v1h-1zM32 57h1v1h-1zM33 57h1v1h-1zM7 58h1v1h-1zM15 58h1v1h-1zM16 58h1v1h-1zM0 59h1v1h-1zM21 60h1v1h-1zM1 61h1v1h-1zM5 61h1v1h-1zM8 61h1v1h-1zM10 61h1v1h-1zM24 61h1v1h-1zM26 61h1v1h-1zM28 61h1v1h-1zM32 61h1v1h-1zM35 61h1v1h-1zM12 62h1v1h-1zM27 62h1v1h-1zM31 62h1v1h-1zM12 63h1v1h-1zM24 63h1v1h-1zM28 63h1v1h-1zM29 63h1v1h-1zM5 64h1v1h-1zM14 64h1v1h-1zM15 64h1v1h-1zM27 64h1v1h-1zM29 64h1v1h-1zM13 65h1v1h-1zM29 65h1v1h-1zM32 65h1v1h-1zM30 66h1v1h-1zM8 67h1v1h-1zM10 67h1v1h-1zM32 67h1v1h-1zM18 68h1v1h-1zM27 68h1v1h-1zM9 69h1v1h-1zM16 69h1v1h-1zM17 69h1v1h-1zM35 69h1v1h-1zM0 70h1v1h-1zM4 70h1v1h-1zM7 70h1v1h-1zM10 70h1v1h-1zM7 71h1v1h-1zM12 71h1v1h-1zM4 72h1v1h-1zM5 72h1v1h-1zM22 72h1v1h-1zM25 72h1v1h-1zM19 73h1v1h-1zM22 74h1v1h-1zM33 74h1v1h-1zM5 75h1v1h-1zM15 75h1v1h-1zM34 75h1v1h-1zM1 76h1v1h-1zM6 76h1v1h-1zM17 76h1v1h-1zM19 76h1v1h-1zM20 76h1v1h-1zM2 77h1v1h-1zM5 77h1v1h-1zM12 77h1v1h-1zM30 78h1v1h-1zM35 78h1v1h-1zM8 79h1v1h-1zM31 79h1v1h-1zM1 80h1v1h-1zM2 80h1v1h-1zM4 80h1v1h-1zM17 80h1v1h-1zM33 80h1v1h-1zM1 81h1v1h-1zM0 82h1v1h-1zM1 82h1v1h-1zM24 82h1v1h-1zM8 83h1v1h-1zM20 83h1v1h-1zM7 84h1v1h-1zM10 84h1v1h-1zM13 84h1v1h-1zM19 84h1v1h-1zM24 84h1v1h-1zM27 84h1v1h-1zM5 85h1v1h-1zM14 85h1v1h-1zM4 86h1v1h-1zM14 86h1v1h-1zM6 87h1v1h-1zM33 87h1v1h-1zM10 88h1v1h-1zM15 88h1v1h-1zM21 88h1v1h-1zM7 89h1v1h-1zM12 89h1v1h-1zM18 89h1v1h-1zM22 89h1v1h-1zM28 89h1v1h-1z"/><path fill="rgb(224,224,224)" d="M23 0h1v1h-1zM28 0h1v1h-1zM22 1h1v1h-1zM26 3h1v1h-1zM30 3h1v1h-1zM29 7h1v1h-1zM9 8h1v1h-1zM23 8h1v1h-1zM22 9h1v1h-1zM29 10h1v1h-1zM31 10h1v1h-1zM19 11h1v1h-1zM28 11h1v1h-1zM21 12h1v1h-1zM11 13h1v1h-1zM26 13h1v1h-1zM19 14h1v1h-1zM12 15h1v1h-1zM29 16h1v1h-1zM12 17h1v1h-1zM24 17h1v1h-1zM29 17h1v1h-1zM31 17h1v1h-1zM0 18h1v1h-1zM17 18h1v1h-1zM29 18h1v1h-1zM1 19h1v1h-1zM1 20h1v1h-1zM28 20h1v1h-1zM25 21h1v1h-1zM0 22h1v1h-1zM24 22h1v1h-1zM32 22h1v1h-1zM5 23h1v1h-1zM13 23h1v1h-1zM27 23h1v1h-1zM31 23h1v1h-1zM4 24h1v1h-1zM11 26h1v1h-1zM32 26h1v1h-1zM33 26h1v1h-1zM0 27h1v1h-1zM11 27h1v1h-1zM11 28h1v1h-1zM23 28h1v1h-1zM35 28h1v1h-1zM11 31h1v1h-1zM33 32h1v1h-1zM6 33h1v1h-1zM32 33h1v1h-1zM33 34h1v1h-1zM21 35h1v1h-1zM28 35h1v1h-1zM5 36h1v1h-1zM12 36h1v1h-1zM13 36h1v1h-1zM19 36h1v1h-1zM0 37h1v1h-1zM30 37h1v1h-1zM35 37h1v1h-1zM11 39h1v1h-1zM24 39h1v1h-1zM33 39h1v1h-1zM26 40h1v1h-1zM30 40h1v1h-1zM3 41h1v1h-1zM11 41h1v1h-1zM16 41h1v1h-1zM19 41h1v1h-1zM32 42h1v1h-1zM16 43h1v1h-1zM3 44h1v1h-1zM6 45h1v1h-1zM6 46h1v1h-1zM10 47h1v1h-1zM19 47h1v1h-1zM25 48h1v1h-1zM14 49h1v1h-1zM27 49h1v1h-1zM35 49h1v1h-1zM17 50h1v1h-1zM27 50h1v1h-1zM30 50h1v1h-1zM33 51h1v1h-1zM12 52h1v1h-1zM24 52h1v1h-1zM19 53h1v1h-1zM25 53h1v1h-1zM13 54h1v1h-1zM23 55h1v1h-1zM19 56h1v1h-1zM24 56h1v1h-1zM31 58h1v1h-1zM32 59h1v1h-1zM27 61h1v1h-1zM24 62h1v1h-1zM31 64h1v1h-1zM10 65h1v1h-1zM31 66h1v1h-1zM33 66h1v1h-1zM33 67h1v1h-1zM35 67h1v1h-1zM12 68h1v1h-1zM20 68h1v1h-1zM22 68h1v1h-1zM12 70h1v1h-1zM16 70h1v1h-1zM31 70h1v1h-1zM4 71h1v1h-1zM18 71h1v1h-1zM29 72h1v1h-1zM27 73h1v1h-1zM14 74h1v1h-1zM20 74h1v1h-1zM35 75h1v1h-1zM9 76h1v1h-1zM10 76h1v1h-1zM15 76h1v1h-1zM13 78h1v1h-1zM29 78h1v1h-1zM32 78h1v1h-1zM1 79h1v1h-1zM3 79h1v1h-1zM14 79h1v1h-1zM2 81h1v1h-1zM11 81h1v1h-1zM15 81h1v1h-1zM27 81h1v1h-1zM33 81h1v1h-1zM25 82h1v1h-1zM22 83h1v1h-1zM9 84h1v1h-1zM19 85h1v1h-1zM11 86h1v1h-1zM20 86h1v1h-1zM30 87h1v1h-1zM32 87h1v1h-1zM27 88h1v1h-1zM31 88h1v1h-1zM32 88h1v1h-1z"/><path fill="rgb(245,245,245)" d="M27 1h1v1h-1zM31 3h1v1h-1zM6 5h1v1h-1zM8 5h1v1h-1zM31 7h1v1h-1zM32 8h1v1h-1zM34 8h1v1h-1zM16 11h1v1h-1zM21 11h1v1h-1zM30 11h1v1h-1zM19 12h1v1h-1zM25 12h1v1h-1zM33 14h1v1h-1zM35 14h1v1h-1zM1 15h1v1h-1zM9 16h1v1h-1zM22 16h1v1h-1zM8 17h1v1h-1zM25 18h1v1h-1zM10 19h1v1h-1zM29 19h1v1h-1zM34 20h1v1h-1zM9 21h1v1h-1zM3 23h1v1h-1zM31 24h1v1h-1zM34 28h1v1h-1zM15 32h1v1h-1zM17 32h1v1h-1zM4 33h1v1h-1zM9 33h1v1h-1zM28 33h1v1h-1zM30 33h1v1h-1zM0 34h1v1h-1zM16 38h1v1h-1zM30 39h1v1h-1zM28 41h1v1h-1zM30 41h1v1h-1zM12 42h1v1h-1zM24 42h1v1h-1zM35 44h1v1h-1zM3 48h1v1h-1zM27 48h1v1h-1zM17 49h1v1h-1zM1 51h1v1h-1zM15 51h1v1h-1zM16 51h1v1h-1zM17 51h1v1h-1zM22 51h1v1h-1zM0 53h1v1h-1zM2 53h1v1h-1zM4 53h1v1h-1zM18 53h1v1h-1zM20 53h1v1h-1zM14 54h1v1h-1zM23 56h1v1h-1zM12 57h1v1h-1zM28 58h1v1h-1zM17 59h1v1h-1zM33 60h1v1h-1zM5 62h1v1h-1zM8 64h1v1h-1zM26 65h1v1h-1zM31 67h1v1h-1zM31 68h1v1h-1zM33 68h1v1h-1zM10 69h1v1h-1zM33 69h1v1h-1zM3 70h1v1h-1zM19 71h1v1h-1zM30 71h1v1h-1zM13 72h1v1h-1zM0 73h1v1h-1zM1 73h1v1h-1zM12 73h1v1h-1zM9 74h1v1h-1zM17 75h1v1h-1zM14 76h1v1h-1zM9 77h1v1h-1zM14 77h1v1h-1zM3 78h1v1h-1zM22 78h1v1h-1zM11 79h1v1h-1zM9 80h1v1h-1zM19 80h1v1h-1zM35 80h1v1h-1zM22 81h1v1h-1zM35 81h1v1h-1zM28 83h1v1h-1zM12 84h1v1h-1zM26 84h1v1h-1zM32 84h1v1h-1zM17 85h1v1h-1zM5 86h1v1h-1zM16 87h1v1h-1zM25 89h1v1h-1zM30 89h1v1h-1z"/></g>
<rect x="932.3" y="64.4" width="67.5" height="169.2" fill="none" stroke="#0000ff" stroke-width="2.6"/>
<rect x="1047.6" y="60.6" width="251.7" height="150.5" fill="#fff" stroke="none"/>
<line x1="1047.6" y1="204.4" x2="1299.3" y2="204.4" stroke="#444" stroke-width="1"/>
<g clip-path="url(#cErr)"><line x1="1059.08" y1="112.15" x2="1059.08" y2="163.40" stroke="#1f77b4" stroke-width="1.5"/><circle cx="1059.08" cy="137.65" r="2.1" fill="#1f77b4"/><line x1="1063.56" y1="134.90" x2="1063.56" y2="184.40" stroke="#1f77b4" stroke-width="1.5"/><circle cx="1063.56" cy="159.40" r="2.1" fill="#1f77b4"/><line x1="1068.04" y1="129.65" x2="1068.04" y2="176.90" stroke="#1f77b4" stroke-width="1.5"/><circle cx="1068.04" cy="153.40" r="2.1" fill="#1f77b4"/><line x1="1072.52" y1="135.90" x2="1072.52" y2="180.65" stroke="#1f77b4" stroke-width="1.5"/><circle cx="1072.52" cy="157.90" r="2.1" fill="#1f77b4"/><line x1="1077.00" y1="136.90" x2="1077.00" y2="180.65" stroke="#1f77b4" stroke-width="1.5"/><circle cx="1077.00" cy="158.90" r="2.1" fill="#1f77b4"/><line x1="1081.48" y1="152.15" x2="1081.48" y2="195.15" stroke="#1f77b4" stroke-width="1.5"/><circle cx="1081.48" cy="173.90" r="2.1" fill="#1f77b4"/><line x1="1085.96" y1="115.40" x2="1085.96" y2="158.90" stroke="#1f77b4" stroke-width="1.5"/><circle cx="1085.96" cy="136.90" r="2.1" fill="#1f77b4"/><line x1="1090.44" y1="116.40" x2="1090.44" y2="158.40" stroke="#1f77b4" stroke-width="1.5"/><circle cx="1090.44" cy="136.90" r="2.1" fill="#1f77b4"/><line x1="1094.92" y1="122.90" x2="1094.92" y2="163.40" stroke="#1f77b4" stroke-width="1.5"/><circle cx="1094.92" cy="142.65" r="2.1" fill="#1f77b4"/><line x1="1099.40" y1="115.15" x2="1099.40" y2="154.90" stroke="#1f77b4" stroke-width="1.5"/><circle cx="1099.40" cy="134.90" r="2.1" fill="#1f77b4"/><line x1="1103.88" y1="133.15" x2="1103.88" y2="173.90" stroke="#1f77b4" stroke-width="1.5"/><circle cx="1103.88" cy="153.65" r="2.1" fill="#1f77b4"/><line x1="1108.36" y1="101.90" x2="1108.36" y2="143.15" stroke="#1f77b4" stroke-width="1.5"/><circle cx="1108.36" cy="122.40" r="2.1" fill="#1f77b4"/><line x1="1112.84" y1="115.90" x2="1112.84" y2="155.65" stroke="#1f77b4" stroke-width="1.5"/><circle cx="1112.84" cy="135.65" r="2.1" fill="#1f77b4"/><line x1="1117.32" y1="124.90" x2="1117.32" y2="165.90" stroke="#1f77b4" stroke-width="1.5"/><circle cx="1117.32" cy="145.40" r="2.1" fill="#1f77b4"/><line x1="1121.80" y1="88.15" x2="1121.80" y2="130.65" stroke="#1f77b4" stroke-width="1.5"/><circle cx="1121.80" cy="109.65" r="2.1" fill="#1f77b4"/><line x1="1126.28" y1="117.90" x2="1126.28" y2="160.40" stroke="#1f77b4" stroke-width="1.5"/><circle cx="1126.28" cy="138.90" r="2.1" fill="#1f77b4"/><line x1="1130.76" y1="87.65" x2="1130.76" y2="130.15" stroke="#1f77b4" stroke-width="1.5"/><circle cx="1130.76" cy="108.65" r="2.1" fill="#1f77b4"/><line x1="1135.24" y1="106.65" x2="1135.24" y2="150.40" stroke="#1f77b4" stroke-width="1.5"/><circle cx="1135.24" cy="128.65" r="2.1" fill="#1f77b4"/><line x1="1139.72" y1="117.90" x2="1139.72" y2="165.40" stroke="#1f77b4" stroke-width="1.5"/><circle cx="1139.72" cy="141.40" r="2.1" fill="#1f77b4"/><line x1="1144.20" y1="67.65" x2="1144.20" y2="117.90" stroke="#1f77b4" stroke-width="1.5"/><circle cx="1144.20" cy="92.90" r="2.1" fill="#1f77b4"/><line x1="1148.68" y1="121.90" x2="1148.68" y2="170.90" stroke="#1f77b4" stroke-width="1.5"/><circle cx="1148.68" cy="146.15" r="2.1" fill="#1f77b4"/><line x1="1153.16" y1="100.40" x2="1153.16" y2="147.40" stroke="#1f77b4" stroke-width="1.5"/><circle cx="1153.16" cy="123.40" r="2.1" fill="#1f77b4"/><line x1="1157.64" y1="122.15" x2="1157.64" y2="167.40" stroke="#1f77b4" stroke-width="1.5"/><circle cx="1157.64" cy="144.90" r="2.1" fill="#1f77b4"/><line x1="1162.12" y1="148.40" x2="1162.12" y2="192.40" stroke="#1f77b4" stroke-width="1.5"/><circle cx="1162.12" cy="169.90" r="2.1" fill="#1f77b4"/><line x1="1166.60" y1="100.40" x2="1166.60" y2="145.65" stroke="#1f77b4" stroke-width="1.5"/><circle cx="1166.60" cy="122.40" r="2.1" fill="#1f77b4"/><line x1="1171.08" y1="104.15" x2="1171.08" y2="148.40" stroke="#1f77b4" stroke-width="1.5"/><circle cx="1171.08" cy="126.40" r="2.1" fill="#1f77b4"/><line x1="1175.56" y1="93.40" x2="1175.56" y2="138.15" stroke="#1f77b4" stroke-width="1.5"/><circle cx="1175.56" cy="115.40" r="2.1" fill="#1f77b4"/><line x1="1180.04" y1="91.65" x2="1180.04" y2="137.40" stroke="#1f77b4" stroke-width="1.5"/><circle cx="1180.04" cy="114.15" r="2.1" fill="#1f77b4"/><line x1="1184.52" y1="78.40" x2="1184.52" y2="119.65" stroke="#1f77b4" stroke-width="1.5"/><circle cx="1184.52" cy="98.90" r="2.1" fill="#1f77b4"/><line x1="1189.00" y1="91.65" x2="1189.00" y2="129.40" stroke="#1f77b4" stroke-width="1.5"/><circle cx="1189.00" cy="110.40" r="2.1" fill="#1f77b4"/><line x1="1193.48" y1="110.40" x2="1193.48" y2="149.40" stroke="#1f77b4" stroke-width="1.5"/><circle cx="1193.48" cy="129.65" r="2.1" fill="#1f77b4"/><line x1="1197.96" y1="96.15" x2="1197.96" y2="138.15" stroke="#1f77b4" stroke-width="1.5"/><circle cx="1197.96" cy="117.65" r="2.1" fill="#1f77b4"/><line x1="1202.44" y1="119.65" x2="1202.44" y2="164.15" stroke="#1f77b4" stroke-width="1.5"/><circle cx="1202.44" cy="141.90" r="2.1" fill="#1f77b4"/><line x1="1206.92" y1="119.65" x2="1206.92" y2="164.90" stroke="#1f77b4" stroke-width="1.5"/><circle cx="1206.92" cy="142.65" r="2.1" fill="#1f77b4"/><line x1="1211.40" y1="112.15" x2="1211.40" y2="158.15" stroke="#1f77b4" stroke-width="1.5"/><circle cx="1211.40" cy="135.15" r="2.1" fill="#1f77b4"/><line x1="1215.88" y1="124.15" x2="1215.88" y2="170.90" stroke="#1f77b4" stroke-width="1.5"/><circle cx="1215.88" cy="147.65" r="2.1" fill="#1f77b4"/><line x1="1220.36" y1="112.15" x2="1220.36" y2="156.65" stroke="#1f77b4" stroke-width="1.5"/><circle cx="1220.36" cy="135.15" r="2.1" fill="#1f77b4"/><line x1="1224.84" y1="91.15" x2="1224.84" y2="135.65" stroke="#1f77b4" stroke-width="1.5"/><circle cx="1224.84" cy="113.65" r="2.1" fill="#1f77b4"/><line x1="1229.32" y1="143.90" x2="1229.32" y2="193.90" stroke="#1f77b4" stroke-width="1.5"/><circle cx="1229.32" cy="169.15" r="2.1" fill="#1f77b4"/><line x1="1233.80" y1="139.40" x2="1233.80" y2="192.40" stroke="#1f77b4" stroke-width="1.5"/><circle cx="1233.80" cy="165.90" r="2.1" fill="#1f77b4"/><line x1="1238.28" y1="108.40" x2="1238.28" y2="158.15" stroke="#1f77b4" stroke-width="1.5"/><circle cx="1238.28" cy="133.15" r="2.1" fill="#1f77b4"/><line x1="1242.76" y1="56.90" x2="1242.76" y2="104.90" stroke="#1f77b4" stroke-width="1.5"/><circle cx="1242.76" cy="81.90" r="2.1" fill="#1f77b4"/><line x1="1247.24" y1="124.15" x2="1247.24" y2="167.90" stroke="#1f77b4" stroke-width="1.5"/><circle cx="1247.24" cy="146.40" r="2.1" fill="#1f77b4"/><line x1="1251.72" y1="145.90" x2="1251.72" y2="186.40" stroke="#1f77b4" stroke-width="1.5"/><circle cx="1251.72" cy="165.90" r="2.1" fill="#1f77b4"/><line x1="1256.20" y1="117.65" x2="1256.20" y2="159.90" stroke="#1f77b4" stroke-width="1.5"/><circle cx="1256.20" cy="138.65" r="2.1" fill="#1f77b4"/><line x1="1260.68" y1="93.65" x2="1260.68" y2="135.65" stroke="#1f77b4" stroke-width="1.5"/><circle cx="1260.68" cy="115.15" r="2.1" fill="#1f77b4"/><line x1="1265.16" y1="102.15" x2="1265.16" y2="147.40" stroke="#1f77b4" stroke-width="1.5"/><circle cx="1265.16" cy="124.65" r="2.1" fill="#1f77b4"/><line x1="1269.64" y1="133.15" x2="1269.64" y2="175.15" stroke="#1f77b4" stroke-width="1.5"/><circle cx="1269.64" cy="154.40" r="2.1" fill="#1f77b4"/><line x1="1274.12" y1="120.15" x2="1274.12" y2="160.65" stroke="#1f77b4" stroke-width="1.5"/><circle cx="1274.12" cy="140.40" r="2.1" fill="#1f77b4"/><line x1="1278.60" y1="150.15" x2="1278.60" y2="188.65" stroke="#1f77b4" stroke-width="1.5"/><circle cx="1278.60" cy="169.90" r="2.1" fill="#1f77b4"/><polyline points="1081.5,136.90 1083.7,136.90 1086.0,136.90 1088.2,136.90 1090.4,136.90 1092.7,136.90 1094.9,136.90 1097.2,136.90 1099.4,136.90 1101.6,136.90 1103.9,136.90 1106.1,136.90 1108.4,136.90 1110.6,136.90 1112.8,136.90 1115.1,136.90 1117.3,136.90 1119.6,136.89 1121.8,136.89 1124.0,136.88 1126.3,136.87 1128.5,136.85 1130.8,136.82 1133.0,136.77 1135.2,136.70 1137.5,136.61 1139.7,136.47 1142.0,136.29 1144.2,136.04 1146.4,135.71 1148.7,135.29 1150.9,134.76 1153.2,134.11 1155.4,133.32 1157.6,132.40 1159.9,131.35 1162.1,130.18 1164.4,128.91 1166.6,127.58 1168.8,126.24 1171.1,124.92 1173.3,123.69 1175.6,122.61 1177.8,121.72 1180.0,121.08 1182.3,120.72 1184.5,120.66 1186.8,120.91 1189.0,121.44 1191.2,122.23 1193.5,123.24 1195.7,124.41 1198.0,125.70 1200.2,127.04 1202.4,128.39 1204.7,129.68 1206.9,130.89 1209.2,132.00 1211.4,132.97 1213.6,133.81 1215.9,134.51 1218.1,135.09 1220.4,135.56 1222.6,135.92 1224.8,136.20 1227.1,136.41 1229.3,136.56 1231.6,136.67 1233.8,136.75 1236.0,136.80 1238.3,136.84 1240.5,136.86 1242.8,136.88 1245.0,136.89 1247.2,136.89 1249.5,136.89 1251.7,136.90 1254.0,136.90 1256.2,136.90 1258.4,136.90 1260.7,136.90 1262.9,136.90 1265.2,136.90 1267.4,136.90 1269.6,136.90 1271.9,136.90 1274.1,136.90 1276.4,136.90 1278.6,136.90 1280.8,136.90 1283.1,136.90 1285.3,136.90 1287.6,136.90" fill="none" stroke="#333" stroke-width="1.5"/></g>
<rect x="1047.6" y="60.6" width="251.7" height="150.5" fill="none" stroke="#333" stroke-width="1"/>
<line x1="1054.60" y1="211.1" x2="1054.60" y2="214.6" stroke="#333" stroke-width="0.9"/>
<text x="1054.60" y="224.20" class="s" font-size="9.33" fill="#111" text-anchor="middle" textLength="22.40" lengthAdjust="spacingAndGlyphs" xml:space="preserve" >3660</text>
<line x1="1099.40" y1="211.1" x2="1099.40" y2="214.6" stroke="#333" stroke-width="0.9"/>
<text x="1099.40" y="224.20" class="s" font-size="9.33" fill="#111" text-anchor="middle" textLength="22.40" lengthAdjust="spacingAndGlyphs" xml:space="preserve" >3680</text>
<line x1="1144.20" y1="211.1" x2="1144.20" y2="214.6" stroke="#333" stroke-width="0.9"/>
<text x="1144.20" y="224.20" class="s" font-size="9.33" fill="#111" text-anchor="middle" textLength="22.40" lengthAdjust="spacingAndGlyphs" xml:space="preserve" >3700</text>
<line x1="1189.00" y1="211.1" x2="1189.00" y2="214.6" stroke="#333" stroke-width="0.9"/>
<text x="1189.00" y="224.20" class="s" font-size="9.33" fill="#111" text-anchor="middle" textLength="22.40" lengthAdjust="spacingAndGlyphs" xml:space="preserve" >3720</text>
<line x1="1233.80" y1="211.1" x2="1233.80" y2="214.6" stroke="#333" stroke-width="0.9"/>
<text x="1233.80" y="224.20" class="s" font-size="9.33" fill="#111" text-anchor="middle" textLength="22.40" lengthAdjust="spacingAndGlyphs" xml:space="preserve" >3740</text>
<line x1="1278.60" y1="211.1" x2="1278.60" y2="214.6" stroke="#333" stroke-width="0.9"/>
<text x="1278.60" y="224.20" class="s" font-size="9.33" fill="#111" text-anchor="middle" textLength="22.40" lengthAdjust="spacingAndGlyphs" xml:space="preserve" >3760</text>
<line x1="1044.1" y1="204.40" x2="1047.6" y2="204.40" stroke="#333" stroke-width="0.9"/>
<text x="1041.60" y="207.60" class="s" font-size="9.33" fill="#111" text-anchor="end" textLength="5.60" lengthAdjust="spacingAndGlyphs" xml:space="preserve" >0</text>
<line x1="1044.1" y1="179.40" x2="1047.6" y2="179.40" stroke="#333" stroke-width="0.9"/>
<text x="1041.60" y="182.60" class="s" font-size="9.33" fill="#111" text-anchor="end" textLength="5.60" lengthAdjust="spacingAndGlyphs" xml:space="preserve" >1</text>
<line x1="1044.1" y1="154.40" x2="1047.6" y2="154.40" stroke="#333" stroke-width="0.9"/>
<text x="1041.60" y="157.60" class="s" font-size="9.33" fill="#111" text-anchor="end" textLength="5.60" lengthAdjust="spacingAndGlyphs" xml:space="preserve" >2</text>
<line x1="1044.1" y1="129.40" x2="1047.6" y2="129.40" stroke="#333" stroke-width="0.9"/>
<text x="1041.60" y="132.60" class="s" font-size="9.33" fill="#111" text-anchor="end" textLength="5.60" lengthAdjust="spacingAndGlyphs" xml:space="preserve" >3</text>
<line x1="1044.1" y1="104.40" x2="1047.6" y2="104.40" stroke="#333" stroke-width="0.9"/>
<text x="1041.60" y="107.60" class="s" font-size="9.33" fill="#111" text-anchor="end" textLength="5.60" lengthAdjust="spacingAndGlyphs" xml:space="preserve" >4</text>
<line x1="1044.1" y1="79.40" x2="1047.6" y2="79.40" stroke="#333" stroke-width="0.9"/>
<text x="1041.60" y="82.60" class="s" font-size="9.33" fill="#111" text-anchor="end" textLength="5.60" lengthAdjust="spacingAndGlyphs" xml:space="preserve" >5</text>
<text x="1049.50" y="71.50" class="s" font-size="9.33" fill="#111" text-anchor="start" textLength="5.41" lengthAdjust="spacingAndGlyphs" xml:space="preserve" >e</text>
<text x="1055.30" y="67.00" class="s" font-size="6.57" fill="#111" text-anchor="start" textLength="13.08" lengthAdjust="spacingAndGlyphs" xml:space="preserve" >−17</text>
<text x="1066.60" y="71.50" class="s" font-size="9.33" fill="#111" text-anchor="start" textLength="10.81" lengthAdjust="spacingAndGlyphs" xml:space="preserve" >x2</text>
<text x="1077.80" y="71.50" class="s" font-size="9.33" fill="#111" text-anchor="start" textLength="6.02" lengthAdjust="spacingAndGlyphs" font-style="italic" xml:space="preserve" >Å</text>
<g clip-path="url(#cSpec)"><rect x="215.99" y="348.6" width="55.09" height="83.7" fill="#bfbb00"/><rect x="134.36" y="348.6" width="12.68" height="83.7" fill="#555" fill-opacity="0.5"/><rect x="134.36" y="348.6" width="12.68" height="83.7" fill="url(#hatch0)"/><rect x="134.36" y="348.6" width="12.68" height="83.7" fill="none" stroke="#222" stroke-width="1"/><rect x="1273.63" y="348.6" width="6.04" height="83.7" fill="#555" fill-opacity="0.5"/><rect x="1273.63" y="348.6" width="6.04" height="83.7" fill="url(#hatch1)"/><rect x="1273.63" y="348.6" width="6.04" height="83.7" fill="none" stroke="#222" stroke-width="1"/><path d="M108.4,445 L108.4,408.8 L109.4,405.5 L110.4,402.8 L111.4,399.3 L112.4,397.7 L113.4,397.3 L114.4,396.0 L115.4,395.1 L116.4,395.0 L118.4,394.8 L120.4,395.1 L122.4,395.2 L124.4,394.5 L126.4,395.4 L128.4,395.2 L130.4,395.1 L132.4,394.6 L134.4,394.7 L136.4,395.5 L138.4,394.5 L140.4,395.9 L142.4,395.5 L144.4,395.5 L146.4,395.4 L148.4,395.9 L150.4,396.2 L152.4,396.6 L154.4,396.4 L156.4,396.9 L158.4,397.1 L160.4,396.9 L162.4,397.2 L164.4,396.5 L166.4,397.5 L168.4,396.5 L170.4,397.1 L172.4,397.1 L174.4,398.1 L176.4,397.8 L178.4,398.2 L180.4,398.6 L182.4,398.1 L184.4,397.9 L186.4,398.5 L188.4,398.0 L190.4,398.8 L192.4,398.0 L194.4,398.6 L196.4,399.7 L198.4,399.1 L200.4,399.7 L202.4,399.6 L204.4,400.2 L206.4,399.4 L208.4,399.1 L210.4,400.3 L212.4,399.6 L214.4,399.4 L216.4,402.0 L218.4,403.0 L220.4,403.0 L222.4,403.1 L224.4,403.1 L226.4,402.0 L228.4,403.1 L230.4,402.4 L232.4,402.9 L234.4,402.6 L236.4,402.6 L238.4,402.5 L240.4,403.2 L242.4,402.9 L244.4,402.5 L246.4,403.3 L248.4,402.3 L250.4,403.1 L252.4,402.5 L254.4,403.3 L256.4,403.4 L258.4,402.5 L260.4,403.4 L262.4,402.4 L264.4,402.8 L266.4,403.3 L268.4,402.3 L270.4,403.3 L272.4,403.4 L274.4,402.4 L276.4,403.6 L278.4,403.0 L280.4,403.2 L282.4,404.1 L284.4,402.7 L286.4,404.2 L288.4,403.6 L290.4,404.5 L292.4,404.3 L294.4,404.3 L296.4,403.8 L298.4,403.8 L300.4,404.5 L302.4,404.9 L304.4,405.2 L306.4,405.3 L308.4,405.4 L310.4,404.0 L312.4,404.4 L314.4,405.3 L316.4,405.0 L318.4,405.4 L320.4,404.9 L322.4,405.4 L324.4,405.3 L326.4,405.7 L328.4,405.2 L330.4,406.5 L332.4,406.4 L334.4,406.2 L336.4,405.4 L338.4,405.8 L340.4,406.4 L342.4,407.0 L344.4,405.9 L346.4,406.0 L348.4,407.4 L350.4,406.0 L352.4,406.4 L354.4,406.5 L356.4,407.0 L358.4,406.4 L360.4,406.3 L362.4,407.3 L364.4,406.3 L366.4,406.8 L368.4,407.5 L370.4,407.6 L372.4,407.0 L374.4,407.2 L376.4,407.1 L378.4,407.2 L380.4,407.3 L382.4,406.6 L384.4,407.2 L386.4,408.1 L388.4,408.1 L390.4,407.1 L392.4,406.9 L394.4,407.8 L396.4,408.1 L398.4,408.0 L400.4,407.0 L402.4,406.9 L404.4,408.2 L406.4,407.1 L408.4,408.4 L410.4,407.1 L412.4,407.3 L414.4,408.2 L416.4,408.7 L418.4,408.5 L420.4,408.5 L422.4,408.4 L424.4,408.5 L426.4,407.5 L428.4,408.3 L430.4,407.8 L432.4,407.9 L434.4,408.7 L436.4,408.1 L438.4,408.2 L440.4,407.8 L442.4,409.2 L444.4,408.9 L446.4,408.9 L448.4,408.9 L450.4,408.6 L452.4,409.3 L454.4,408.1 L456.4,409.4 L458.4,408.7 L460.4,408.3 L462.4,408.4 L464.4,408.6 L466.4,409.2 L468.4,408.7 L470.4,408.9 L472.4,409.2 L474.4,408.6 L476.4,409.1 L478.4,408.6 L480.4,408.9 L482.4,408.7 L484.4,409.3 L486.4,409.3 L488.4,409.8 L490.4,409.3 L492.4,409.9 L494.4,409.7 L496.4,409.3 L498.4,408.9 L500.4,409.6 L502.4,409.9 L504.4,408.8 L506.4,408.8 L508.4,409.9 L510.4,409.0 L512.4,409.1 L514.4,409.7 L516.4,408.7 L518.4,409.0 L520.4,409.5 L522.4,408.6 L524.4,409.3 L526.4,408.9 L528.4,410.1 L530.4,409.5 L532.4,409.1 L534.4,408.8 L536.4,410.1 L538.4,410.1 L540.4,409.9 L542.4,409.1 L544.4,409.7 L546.4,409.1 L548.4,410.2 L550.4,409.5 L552.4,409.4 L554.4,409.8 L556.4,409.6 L558.4,409.7 L560.4,409.0 L562.4,409.7 L564.4,410.2 L566.4,409.2 L568.4,409.7 L570.4,409.7 L572.4,409.2 L574.4,408.8 L576.4,409.9 L578.4,409.9 L580.4,409.1 L582.4,410.1 L584.4,409.5 L586.4,410.0 L588.4,409.3 L590.4,409.6 L592.4,409.3 L594.4,408.9 L596.4,408.9 L598.4,410.0 L600.4,409.1 L602.4,409.4 L604.4,410.1 L606.4,409.7 L608.4,409.4 L610.4,409.6 L612.4,409.1 L614.4,410.1 L616.4,410.1 L618.4,410.3 L620.4,409.7 L622.4,409.8 L624.4,409.9 L626.4,410.2 L628.4,409.8 L630.4,408.8 L632.4,409.9 L634.4,409.7 L636.4,409.2 L638.4,408.9 L640.4,409.9 L642.4,409.8 L644.4,410.3 L646.4,410.1 L648.4,409.0 L650.4,409.3 L652.4,409.8 L654.4,409.4 L656.4,410.0 L658.4,410.3 L660.4,410.4 L662.4,410.1 L664.4,410.2 L666.4,410.3 L668.4,410.1 L670.4,409.1 L672.4,409.1 L674.4,409.2 L676.4,410.1 L678.4,409.6 L680.4,409.4 L682.4,410.2 L684.4,409.3 L686.4,410.1 L688.4,409.6 L690.4,409.9 L692.4,409.0 L694.4,410.2 L696.4,409.7 L698.4,409.3 L700.4,409.6 L702.4,409.1 L704.4,409.3 L706.4,409.1 L708.4,409.7 L710.4,410.2 L712.4,409.7 L714.4,409.1 L716.4,409.4 L718.4,409.8 L720.4,410.0 L722.4,409.3 L724.4,410.2 L726.4,410.3 L728.4,410.6 L730.4,409.5 L732.4,410.4 L734.4,409.6 L736.4,410.2 L738.4,410.0 L740.4,409.1 L742.4,409.4 L744.4,409.2 L746.4,410.6 L748.4,410.7 L750.4,410.4 L752.4,410.6 L754.4,409.6 L756.4,410.6 L758.4,409.6 L760.4,409.3 L762.4,409.7 L764.4,410.6 L766.4,410.3 L768.4,410.5 L770.4,410.6 L772.4,409.8 L774.4,410.4 L776.4,409.6 L778.4,410.3 L780.4,410.3 L782.4,410.0 L784.4,410.3 L786.4,409.9 L788.4,410.3 L790.4,409.6 L792.4,410.2 L794.4,410.6 L796.4,410.6 L798.4,409.7 L800.4,409.3 L802.4,410.7 L804.4,410.1 L806.4,409.3 L808.4,409.6 L810.4,409.4 L812.4,410.1 L814.4,409.6 L816.4,409.6 L818.4,409.9 L820.4,410.2 L822.4,410.1 L824.4,409.5 L826.4,410.5 L828.4,409.2 L830.4,409.5 L832.4,409.3 L834.4,409.6 L836.4,410.2 L838.4,410.4 L840.4,409.8 L842.4,409.9 L844.4,410.5 L846.4,410.5 L848.4,410.1 L850.4,410.4 L852.4,409.8 L854.4,409.3 L856.4,410.4 L858.4,410.2 L860.4,409.5 L862.4,410.8 L864.4,409.9 L866.4,409.5 L868.4,410.7 L870.4,410.6 L872.4,410.2 L874.4,410.1 L876.4,410.7 L878.4,410.7 L880.4,410.4 L882.4,410.8 L884.4,409.7 L886.4,409.5 L888.4,410.4 L890.4,410.0 L892.4,409.3 L894.4,409.6 L896.4,409.8 L898.4,410.4 L900.4,409.4 L902.4,409.9 L904.4,409.4 L906.4,410.3 L908.4,410.8 L910.4,409.8 L912.4,409.7 L914.4,410.0 L916.4,409.8 L918.4,409.7 L920.4,410.6 L922.4,409.7 L924.4,410.5 L926.4,409.4 L928.4,410.1 L930.4,409.3 L932.4,410.4 L934.4,410.8 L936.4,410.8 L938.4,409.5 L940.4,409.9 L942.4,409.3 L944.4,409.4 L946.4,409.6 L948.4,409.9 L950.4,409.3 L952.4,410.2 L954.4,410.7 L956.4,409.6 L958.4,410.4 L960.4,410.0 L962.4,410.1 L964.4,409.5 L966.4,410.2 L968.4,410.6 L970.4,410.3 L972.4,410.5 L974.4,409.9 L976.4,409.5 L978.4,410.3 L980.4,410.1 L982.4,409.8 L984.4,410.5 L986.4,410.7 L988.4,409.7 L990.4,409.9 L992.4,410.5 L994.4,410.2 L996.4,410.1 L998.4,410.0 L1000.4,410.3 L1002.4,409.4 L1004.4,409.8 L1006.4,410.6 L1008.4,410.2 L1010.4,410.7 L1012.4,409.8 L1014.4,409.7 L1016.4,410.7 L1018.4,409.7 L1020.4,409.7 L1022.4,409.6 L1024.4,409.3 L1026.4,409.5 L1028.4,410.0 L1030.4,410.5 L1032.4,410.5 L1034.4,409.7 L1036.4,409.3 L1038.4,410.0 L1040.4,410.1 L1042.4,409.6 L1044.4,409.4 L1046.4,409.5 L1048.4,410.3 L1050.4,409.4 L1052.4,410.4 L1054.4,409.5 L1056.4,410.6 L1058.4,410.7 L1060.4,409.8 L1062.4,409.8 L1064.4,409.6 L1066.4,409.4 L1068.4,409.8 L1070.4,409.3 L1072.4,410.7 L1074.4,410.8 L1076.4,409.8 L1078.4,410.0 L1080.4,409.7 L1082.4,409.8 L1084.4,410.5 L1086.4,409.9 L1088.4,409.9 L1090.4,410.5 L1092.4,410.2 L1094.4,410.6 L1096.4,410.7 L1098.4,409.5 L1100.4,409.5 L1102.4,410.8 L1104.4,410.6 L1106.4,409.2 L1108.4,410.5 L1110.4,410.3 L1112.4,410.4 L1114.4,410.1 L1116.4,409.4 L1118.4,409.7 L1120.4,409.8 L1122.4,409.8 L1124.4,410.8 L1126.4,410.6 L1128.4,409.7 L1130.4,409.6 L1132.4,410.0 L1134.4,409.7 L1136.4,409.7 L1138.4,409.9 L1140.4,410.1 L1142.4,410.8 L1144.4,409.9 L1146.4,409.3 L1148.4,410.6 L1150.4,409.3 L1152.4,409.8 L1154.4,409.8 L1156.4,410.1 L1158.4,409.9 L1160.4,410.3 L1162.4,409.7 L1164.4,409.8 L1166.4,410.2 L1168.4,410.1 L1170.4,409.6 L1172.4,410.2 L1174.4,409.3 L1176.4,409.7 L1178.4,410.1 L1180.4,410.1 L1182.4,410.5 L1184.4,410.7 L1186.4,410.3 L1188.4,410.6 L1190.4,410.0 L1192.4,409.7 L1194.4,410.5 L1196.4,409.3 L1198.4,409.8 L1200.4,410.5 L1202.4,409.6 L1204.4,410.0 L1206.4,410.2 L1208.4,409.9 L1210.4,410.8 L1212.4,409.3 L1214.4,410.4 L1216.4,409.3 L1218.4,410.0 L1220.4,410.6 L1222.4,409.7 L1224.4,410.1 L1226.4,409.5 L1228.4,409.3 L1230.4,409.2 L1232.4,410.0 L1234.4,409.3 L1236.4,410.0 L1238.4,410.1 L1240.4,410.8 L1242.4,410.0 L1244.4,409.7 L1246.4,409.4 L1248.4,410.2 L1250.4,410.4 L1252.4,410.6 L1254.4,409.5 L1256.4,409.9 L1258.4,409.5 L1260.4,409.5 L1262.4,410.7 L1264.4,410.7 L1266.4,409.5 L1268.4,409.3 L1270.4,409.8 L1272.4,410.5 L1274.4,409.8 L1276.4,409.5 L1278.4,409.6 L1280.4,409.7 L1282.4,409.6 L1284.4,410.1 L1286.4,410.3 L1288.4,410.3 L1290.4,409.5 L1292.4,409.8 L1292.4,429.2 L1290.4,429.9 L1288.4,428.9 L1286.4,428.2 L1284.4,428.5 L1282.4,429.4 L1280.4,428.6 L1278.4,429.7 L1276.4,429.1 L1274.4,429.0 L1272.4,427.8 L1270.4,429.7 L1268.4,429.7 L1266.4,429.0 L1264.4,428.2 L1262.4,427.7 L1260.4,430.0 L1258.4,430.1 L1256.4,428.8 L1254.4,428.8 L1252.4,428.8 L1250.4,429.2 L1248.4,428.6 L1246.4,429.6 L1244.4,430.0 L1242.4,428.5 L1240.4,428.5 L1238.4,428.6 L1236.4,429.6 L1234.4,429.2 L1232.4,429.1 L1230.4,430.5 L1228.4,429.9 L1226.4,429.3 L1224.4,429.5 L1222.4,429.1 L1220.4,428.9 L1218.4,428.9 L1216.4,428.9 L1214.4,429.4 L1212.4,429.6 L1210.4,428.5 L1208.4,428.5 L1206.4,429.0 L1204.4,428.9 L1202.4,429.2 L1200.4,428.0 L1198.4,428.4 L1196.4,428.9 L1194.4,428.6 L1192.4,428.8 L1190.4,429.7 L1188.4,428.2 L1186.4,428.1 L1184.4,428.2 L1182.4,429.0 L1180.4,429.3 L1178.4,429.6 L1176.4,428.6 L1174.4,429.4 L1172.4,428.2 L1170.4,429.2 L1168.4,428.3 L1166.4,429.4 L1164.4,429.0 L1162.4,429.3 L1160.4,428.4 L1158.4,429.7 L1156.4,429.5 L1154.4,428.8 L1152.4,430.0 L1150.4,430.3 L1148.4,428.9 L1146.4,429.6 L1144.4,429.3 L1142.4,428.3 L1140.4,429.5 L1138.4,429.0 L1136.4,430.1 L1134.4,429.5 L1132.4,429.4 L1130.4,428.8 L1128.4,430.1 L1126.4,429.0 L1124.4,428.9 L1122.4,429.4 L1120.4,428.9 L1118.4,429.3 L1116.4,429.7 L1114.4,428.8 L1112.4,427.9 L1110.4,428.7 L1108.4,429.3 L1106.4,430.4 L1104.4,427.8 L1102.4,428.1 L1100.4,428.8 L1098.4,429.2 L1096.4,428.8 L1094.4,427.9 L1092.4,429.5 L1090.4,428.0 L1088.4,429.1 L1086.4,429.1 L1084.4,428.7 L1082.4,429.6 L1080.4,428.5 L1078.4,429.3 L1076.4,430.0 L1074.4,427.8 L1072.4,429.1 L1070.4,429.2 L1068.4,429.9 L1066.4,429.0 L1064.4,428.8 L1062.4,430.0 L1060.4,428.6 L1058.4,428.3 L1056.4,427.7 L1054.4,430.0 L1052.4,428.1 L1050.4,428.9 L1048.4,429.0 L1046.4,430.3 L1044.4,430.2 L1042.4,430.2 L1040.4,428.2 L1038.4,428.7 L1036.4,429.3 L1034.4,430.1 L1032.4,427.7 L1030.4,428.7 L1028.4,429.3 L1026.4,428.8 L1024.4,429.2 L1022.4,430.2 L1020.4,428.8 L1018.4,429.1 L1016.4,429.0 L1014.4,428.9 L1012.4,429.7 L1010.4,427.8 L1008.4,428.3 L1006.4,429.1 L1004.4,429.2 L1002.4,429.9 L1000.4,429.3 L998.4,428.7 L996.4,429.0 L994.4,428.1 L992.4,429.2 L990.4,429.7 L988.4,429.3 L986.4,427.7 L984.4,428.4 L982.4,429.2 L980.4,428.8 L978.4,429.5 L976.4,429.0 L974.4,429.2 L972.4,428.7 L970.4,429.4 L968.4,428.3 L966.4,429.4 L964.4,428.8 L962.4,428.6 L960.4,429.5 L958.4,429.0 L956.4,428.8 L954.4,428.8 L952.4,429.1 L950.4,429.6 L948.4,428.7 L946.4,429.9 L944.4,429.3 L942.4,429.8 L940.4,428.8 L938.4,428.7 L936.4,427.5 L934.4,428.7 L932.4,428.5 L930.4,429.2 L928.4,428.4 L926.4,429.6 L924.4,427.7 L922.4,428.9 L920.4,428.9 L918.4,429.3 L916.4,429.8 L914.4,429.0 L912.4,429.2 L910.4,428.7 L908.4,428.8 L906.4,429.4 L904.4,430.0 L902.4,428.5 L900.4,429.3 L898.4,428.3 L896.4,429.6 L894.4,429.3 L892.4,430.1 L890.4,429.2 L888.4,428.3 L886.4,428.9 L884.4,430.0 L882.4,428.9 L880.4,428.4 L878.4,428.3 L876.4,428.9 L874.4,428.8 L872.4,429.5 L870.4,429.2 L868.4,428.7 L866.4,428.9 L864.4,428.4 L862.4,427.9 L860.4,429.2 L858.4,428.9 L856.4,428.5 L854.4,429.8 L852.4,429.2 L850.4,428.0 L848.4,428.9 L846.4,428.0 L844.4,428.6 L842.4,428.5 L840.4,429.4 L838.4,429.2 L836.4,429.0 L834.4,430.0 L832.4,429.6 L830.4,430.1 L828.4,430.5 L826.4,427.9 L824.4,428.8 L822.4,428.4 L820.4,429.3 L818.4,429.6 L816.4,429.5 L814.4,430.2 L812.4,428.1 L810.4,429.8 L808.4,428.7 L806.4,429.9 L804.4,428.3 L802.4,427.6 L800.4,429.5 L798.4,429.1 L796.4,428.7 L794.4,428.3 L792.4,429.4 L790.4,430.0 L788.4,428.1 L786.4,429.5 L784.4,427.9 L782.4,428.5 L780.4,428.5 L778.4,428.8 L776.4,428.9 L774.4,428.5 L772.4,428.7 L770.4,428.1 L768.4,428.6 L766.4,429.0 L764.4,427.8 L762.4,429.6 L760.4,429.5 L758.4,430.0 L756.4,427.7 L754.4,429.6 L752.4,427.6 L750.4,429.3 L748.4,428.3 L746.4,428.0 L744.4,430.1 L742.4,428.9 L740.4,429.2 L738.4,428.2 L736.4,429.6 L734.4,428.7 L732.4,428.8 L730.4,429.2 L728.4,428.1 L726.4,428.6 L724.4,428.4 L722.4,429.0 L720.4,428.7 L718.4,428.7 L716.4,429.0 L714.4,430.7 L712.4,429.2 L710.4,428.1 L708.4,429.1 L706.4,429.1 L704.4,429.7 L702.4,429.3 L700.4,428.8 L698.4,429.1 L696.4,428.8 L694.4,428.2 L692.4,429.5 L690.4,428.6 L688.4,429.5 L686.4,428.7 L684.4,430.4 L682.4,428.7 L680.4,429.5 L678.4,429.6 L676.4,429.0 L674.4,429.8 L672.4,429.5 L670.4,429.2 L668.4,428.8 L666.4,428.6 L664.4,429.5 L662.4,428.7 L660.4,429.0 L658.4,428.9 L656.4,428.4 L654.4,430.2 L652.4,429.9 L650.4,429.1 L648.4,429.8 L646.4,429.1 L644.4,428.1 L642.4,430.0 L640.4,429.0 L638.4,430.1 L636.4,429.9 L634.4,429.3 L632.4,429.1 L630.4,430.6 L628.4,429.6 L626.4,428.8 L624.4,428.8 L622.4,429.9 L620.4,429.4 L618.4,428.5 L616.4,429.5 L614.4,428.2 L612.4,429.5 L610.4,429.5 L608.4,429.1 L606.4,428.7 L604.4,429.3 L602.4,429.9 L600.4,429.4 L598.4,429.4 L596.4,429.5 L594.4,429.7 L592.4,430.2 L590.4,429.8 L588.4,429.6 L586.4,428.8 L584.4,429.1 L582.4,428.1 L580.4,429.7 L578.4,428.9 L576.4,429.1 L574.4,430.5 L572.4,429.3 L570.4,429.2 L568.4,429.4 L566.4,430.1 L564.4,428.2 L562.4,428.7 L560.4,430.7 L558.4,429.5 L556.4,428.9 L554.4,429.5 L552.4,429.3 L550.4,428.9 L548.4,429.1 L546.4,430.3 L544.4,429.8 L542.4,430.2 L540.4,429.5 L538.4,428.7 L536.4,428.3 L534.4,430.8 L532.4,430.2 L530.4,428.9 L528.4,428.7 L526.4,430.2 L524.4,429.7 L522.4,430.1 L520.4,429.8 L518.4,429.7 L516.4,430.8 L514.4,428.6 L512.4,429.8 L510.4,430.6 L508.4,429.7 L506.4,430.5 L504.4,429.8 L502.4,428.7 L500.4,430.1 L498.4,430.4 L496.4,429.3 L494.4,430.0 L492.4,429.0 L490.4,430.1 L488.4,429.3 L486.4,430.3 L484.4,429.9 L482.4,431.1 L480.4,430.5 L478.4,430.1 L476.4,429.7 L474.4,429.6 L472.4,429.4 L470.4,430.7 L468.4,430.7 L466.4,430.5 L464.4,430.0 L462.4,430.8 L460.4,430.3 L458.4,430.7 L456.4,429.6 L454.4,431.3 L452.4,429.1 L450.4,430.6 L448.4,430.2 L446.4,430.5 L444.4,429.5 L442.4,429.6 L440.4,431.2 L438.4,430.7 L436.4,430.7 L434.4,430.1 L432.4,431.3 L430.4,430.7 L428.4,431.2 L426.4,431.3 L424.4,431.2 L422.4,429.9 L420.4,430.5 L418.4,429.8 L416.4,430.4 L414.4,431.3 L412.4,432.3 L410.4,432.4 L408.4,430.1 L406.4,431.2 L404.4,430.1 L402.4,431.5 L400.4,432.1 L398.4,431.1 L396.4,431.2 L394.4,431.8 L392.4,432.6 L390.4,431.8 L388.4,431.4 L386.4,430.7 L384.4,432.4 L382.4,432.2 L380.4,432.0 L378.4,431.4 L376.4,432.2 L374.4,432.2 L372.4,431.8 L370.4,431.6 L368.4,431.3 L366.4,432.4 L364.4,432.2 L362.4,431.5 L360.4,432.8 L358.4,432.4 L356.4,431.8 L354.4,432.7 L352.4,432.3 L350.4,433.0 L348.4,432.1 L346.4,432.3 L344.4,432.5 L342.4,431.2 L340.4,432.6 L338.4,433.2 L336.4,433.2 L334.4,433.4 L332.4,431.8 L330.4,433.0 L328.4,434.3 L326.4,433.8 L324.4,433.2 L322.4,434.1 L320.4,434.7 L318.4,433.3 L316.4,434.7 L314.4,433.8 L312.4,434.3 L310.4,435.4 L308.4,433.8 L306.4,434.3 L304.4,434.1 L302.4,433.4 L300.4,434.2 L298.4,434.5 L296.4,435.0 L294.4,434.7 L292.4,435.2 L290.4,434.1 L288.4,436.1 L286.4,435.6 L284.4,437.0 L282.4,434.4 L280.4,435.7 L278.4,435.9 L276.4,435.0 L274.4,436.2 L272.4,435.3 L270.4,435.9 L268.4,436.4 L266.4,436.3 L264.4,435.7 L262.4,436.0 L260.4,435.5 L258.4,436.7 L256.4,435.1 L254.4,435.6 L252.4,436.2 L250.4,435.2 L248.4,436.6 L246.4,435.3 L244.4,436.1 L242.4,436.5 L240.4,435.0 L238.4,436.3 L236.4,436.6 L234.4,436.1 L232.4,435.8 L230.4,436.5 L228.4,436.7 L226.4,436.3 L224.4,436.2 L222.4,435.7 L220.4,435.9 L218.4,435.3 L216.4,437.2 L214.4,439.8 L212.4,438.6 L210.4,438.8 L208.4,439.6 L206.4,440.0 L204.4,438.8 L202.4,439.6 L200.4,439.4 L198.4,439.9 L196.4,439.1 L194.4,441.1 L192.4,441.5 L190.4,439.6 L188.4,440.8 L186.4,439.7 L184.4,440.4 L182.4,441.7 L180.4,441.2 L178.4,440.6 L176.4,440.4 L174.4,440.1 L172.4,442.4 L170.4,441.3 L168.4,443.0 L166.4,442.2 L164.4,441.8 L162.4,441.9 L160.4,441.6 L158.4,442.0 L156.4,442.9 L154.4,442.0 L152.4,443.2 L150.4,443.5 L148.4,443.8 L146.4,443.8 L144.4,443.4 L142.4,443.2 L140.4,443.0 L138.4,444.1 L136.4,442.9 L134.4,445.0 L132.4,444.8 L130.4,444.5 L128.4,444.5 L126.4,443.6 L124.4,443.8 L122.4,443.9 L120.4,443.2 L118.4,444.5 L116.4,444.6 L115.4,443.3 L114.4,443.0 L113.4,441.7 L112.4,440.9 L111.4,440.2 L110.4,435.5 L109.4,433.7 L108.4,430.3 Z" fill="#808080" fill-opacity="0.5"/><line x1="101.5" y1="419.5" x2="1299.1" y2="419.5" stroke="#555" stroke-width="1"/><line x1="243.2" y1="348.6" x2="243.2" y2="432.3" stroke="#111" stroke-width="1" stroke-dasharray="1.6,1.6"/><polyline points="101.6,388.3 104.7,384.6 106.3,386.2 109.4,408.2 111.5,369.4 113.6,389.3 115.2,352.1 117.3,396.7 119.4,382.0 121.5,355.7 123.6,389.3 126.0,425.0 130.4,379.9 132.5,401.9 134.1,388.3 136.7,410.3 139.0,356.3 140.4,400.9 141.4,382.0 143.0,390.4 144.6,397.7 146.2,383.0 148.5,379.9 150.9,431.3 152.5,376.7 154.6,415.6 156.7,413.5 159.3,379.9 160.9,394.6 163.0,386.2 165.1,370.4 167.2,407.2 168.7,382.0 170.3,403.0 172.4,389.3 174.5,394.6 177.6,392.5 179.2,398.8 180.8,390.4 182.4,397.7 183.9,388.3 186.6,377.8 188.1,398.8 190.8,422.9 193.4,373.6 195.5,373.6 197.1,401.8 199.5,369.1 203.0,403.9 205.4,369.6 207.9,385.7 208.9,384.6 211.6,397.5 215.4,400.7 216.2,405.0 217.5,388.9 219.6,390.0 221.3,396.4 223.1,383.0 225.0,392.1 226.6,377.1 227.7,390.0 229.1,376.6 230.9,387.9 232.5,369.6 234.1,392.1 235.5,384.6 237.3,403.9 238.9,383.0 241.1,380.4 243.2,372.9 244.8,381.4 246.4,380.9 248.0,390.0 250.7,392.1 251.8,394.3 253.9,379.3 255.5,402.9 258.8,364.3 260.9,401.8 263.4,380.4 265.7,395.4 266.8,392.1 268.4,403.4 270.5,380.4 272.7,381.4 275.1,406.1 277.0,385.7 278.6,394.3 280.2,385.2 281.8,394.3 283.9,378.2 285.5,380.4 288.2,394.3 290.4,388.9 292.5,396.4 294.1,375.0 296.3,399.6 297.9,375.0 298.9,405.0 302.1,390.0 306.4,382.5 308.6,391.1 311.8,365.4 314.5,388.9 315.5,384.6 317.7,391.1 319.3,387.9 322.5,390.0 324.1,378.2 325.7,390.0 329.5,409.3 332.1,381.4 334.3,393.2 336.4,384.6 339.6,385.2 341.8,395.4 343.2,387.9 345.9,385.7 347.5,379.3 350.2,383.6 352.6,378.8 355.5,398.6 358.4,372.9 361.4,393.2 363.8,375.0 366.8,384.6 368.7,398.6 371.1,388.9 373.2,393.2 375.4,392.1 376.4,397.5 378.0,392.1 379.6,397.5 381.8,388.9 385.5,413.6 387.7,380.4 392.5,394.3 395.2,377.1 397.9,382.5 403.2,394.3 404.3,385.7 405.4,392.1 410.7,384.6 411.6,375.0 415.0,408.8 418.2,380.4 422.0,396.4 423.6,394.3 425.2,388.9 426.6,394.3 427.9,384.6 429.8,394.3 431.6,379.3 434.8,408.2 436.4,386.8 438.6,400.2 439.9,379.3 441.3,390.0 444.5,403.9 447.1,382.5 448.2,397.5 450.4,386.8 453.0,402.9 455.2,394.3 456.8,382.5 459.5,386.8 461.1,379.3 463.8,394.3 465.4,386.8 467.5,388.9 469.6,373.9 471.3,390.0 472.9,382.0 474.5,394.3 476.1,388.9 478.8,380.9 480.4,387.9 483.0,399.1 484.6,393.2 488.2,392.1 492.0,397.5 493.6,391.6 495.2,392.1 497.9,379.3 500.0,395.4 502.7,399.6 504.3,386.8 508.6,378.8 513.4,397.5 515.5,387.9 517.7,390.0 519.8,397.5 522.0,394.3 524.1,399.1 525.5,384.6 527.3,387.9 530.0,395.4 532.1,387.9 534.8,383.0 537.0,404.5 538.6,393.2 540.7,392.1 542.9,388.4 545.5,401.3 547.7,378.8 549.8,386.3 552.5,397.5 555.2,385.7 558.7,400.2 560.0,395.4 562.1,390.0 565.4,404.5 568.0,392.1 570.2,398.6 573.9,388.4 575.5,392.1 577.1,388.9 579.8,400.2 584.6,386.8 586.8,379.8 589.5,392.1 591.1,386.8 595.4,390.0 598.0,382.5 601.3,395.4 603.9,394.3 607.7,399.1 609.3,394.3 612.5,401.8 615.2,388.9 618.4,398.6 621.1,392.1 623.8,388.9 625.9,395.4 628.6,380.9 630.7,397.5 634.3,387.9 638.6,396.4 640.7,388.9 642.9,389.5 645.0,401.8 647.1,407.1 649.5,383.0 651.4,398.6 654.1,386.3 656.8,398.6 658.9,387.9 662.1,394.3 664.1,407.1 666.4,387.9 668.6,380.9 670.7,393.2 673.4,407.1 676.1,384.6 679.3,385.7 680.9,395.4 682.0,383.6 683.6,392.1 685.7,394.3 687.6,375.5 688.7,397.5 691.1,386.8 693.8,380.9 696.4,388.9 698.6,390.0 701.8,398.6 703.4,378.2 705.0,393.8 708.2,388.9 711.4,384.6 714.6,394.3 716.8,390.0 718.4,398.6 721.1,385.7 723.2,394.3 724.5,382.5 728.0,399.6 731.8,396.4 733.4,390.0 736.1,395.4 738.2,390.0 741.4,392.1 743.6,390.0 746.8,392.1 748.9,385.7 750.5,386.8 753.2,398.6 755.4,387.9 757.5,385.2 760.2,394.3 763.9,391.1 766.1,387.9 769.3,405.0 772.0,395.4 774.6,384.6 776.8,390.0 779.8,384.6 780.9,390.0 782.5,378.2 785.7,391.1 789.5,379.3 790.9,398.6 792.1,382.5 793.8,387.3 795.1,383.0 797.0,407.1 798.6,398.6 800.2,401.3 801.8,393.2 804.5,395.4 807.1,390.0 809.8,386.8 812.0,394.8 815.2,385.2 817.9,392.7 821.6,385.2 823.8,393.2 825.4,391.1 826.4,394.3 828.0,388.9 830.2,391.1 833.9,405.0 838.2,384.6 840.4,393.2 842.0,387.9 843.6,393.2 846.3,387.9 847.9,390.0 850.0,408.2 853.2,384.6 855.9,405.5 859.6,386.3 862.9,399.6 865.5,394.8 867.1,398.6 870.4,390.0 874.1,382.0 876.8,394.8 878.9,387.9 882.1,390.0 883.2,398.6 885.4,393.2 888.0,399.6 890.2,398.6 892.9,383.6 895.5,403.9 898.2,390.0 900.9,379.3 902.0,384.6 903.6,379.3 904.6,394.3 905.7,385.7 908.4,398.6 911.1,395.4 914.3,395.4 917.5,379.8 920.2,397.0 925.4,389.5 928.0,398.6 929.4,391.1 930.7,395.4 933.9,382.0 938.4,400.2 940.4,382.5 942.5,400.2 944.9,380.9 946.8,390.0 950.0,393.2 952.1,386.3 955.4,403.4 958.0,393.8 960.2,398.0 963.4,388.9 966.6,383.0 969.5,403.4 972.0,387.9 974.1,384.6 976.3,398.6 977.9,379.8 981.6,400.7 984.8,383.0 986.4,387.9 991.3,388.4 993.4,391.1 998.0,380.4 1000.6,400.2 1003.0,391.1 1005.7,388.9 1007.6,401.3 1010.0,386.8 1011.3,403.4 1012.4,370.2 1014.3,391.1 1015.9,398.6 1018.0,382.0 1019.6,399.1 1021.8,392.1 1024.5,396.4 1027.1,394.3 1029.3,385.7 1033.6,398.6 1035.7,392.1 1038.9,397.5 1040.9,405.5 1043.2,399.6 1045.9,398.6 1048.0,388.9 1050.2,401.3 1052.9,384.6 1055.0,401.3 1058.2,395.4 1061.4,391.1 1064.1,394.3 1066.8,390.0 1069.1,399.6 1070.4,388.9 1072.0,395.4 1075.2,399.6 1077.9,387.9 1080.9,398.6 1085.4,384.6 1088.0,388.9 1089.4,402.9 1091.3,397.5 1093.1,382.5 1094.1,403.9 1096.1,396.4 1099.3,392.1 1102.5,386.3 1105.7,392.1 1108.9,395.4 1111.1,391.1 1113.0,406.1 1114.8,391.1 1117.0,387.3 1119.1,397.5 1121.3,384.6 1123.9,397.5 1127.1,401.8 1129.3,394.8 1132.0,393.8 1135.7,390.0 1138.9,397.5 1141.6,384.6 1143.8,395.4 1146.2,384.6 1148.0,401.3 1150.7,394.3 1155.5,385.2 1159.3,392.1 1162.7,400.2 1164.6,390.0 1167.6,388.9 1169.5,395.4 1171.1,388.9 1175.9,395.4 1178.0,392.1 1181.8,387.3 1183.9,395.4 1186.6,392.1 1189.8,395.4 1191.4,409.8 1194.6,385.7 1196.3,407.1 1199.5,388.9 1202.1,384.6 1204.3,388.9 1207.5,402.9 1210.2,385.7 1212.3,392.1 1213.8,399.8 1215.2,390.3 1217.1,395.0 1219.4,408.3 1222.7,399.8 1223.7,404.5 1226.8,377.1 1228.9,396.9 1230.8,386.5 1232.7,406.4 1234.6,387.5 1236.4,382.8 1237.9,392.2 1240.0,384.2 1244.9,396.9 1248.7,407.3 1251.1,392.2 1253.0,389.4 1255.3,390.3 1258.2,397.9 1260.0,394.1 1261.5,398.8 1264.8,391.3 1267.1,401.7 1270.4,402.6 1274.2,386.5 1276.1,403.5 1278.0,392.2 1280.8,409.2 1284.6,390.3 1288.4,407.3 1290.3,396.0 1291.2,410.2 1292.2,389.9 1294.0,397.9" fill="none" stroke="#0000ff" stroke-width="1.4" stroke-linejoin="round"/></g>
<rect x="101.5" y="348.6" width="1197.6" height="83.7" fill="none" stroke="#333" stroke-width="1"/>
<line x1="114.40" y1="432.3" x2="114.40" y2="435.8" stroke="#333" stroke-width="0.9"/>
<text x="114.40" y="447.60" class="s" font-size="10.28" fill="#111" text-anchor="middle" textLength="24.69" lengthAdjust="spacingAndGlyphs" xml:space="preserve" >3500</text>
<line x1="173.64" y1="432.3" x2="173.64" y2="435.8" stroke="#333" stroke-width="0.9"/>
<text x="173.64" y="447.60" class="s" font-size="10.28" fill="#111" text-anchor="middle" textLength="24.69" lengthAdjust="spacingAndGlyphs" xml:space="preserve" >3600</text>
<line x1="232.87" y1="432.3" x2="232.87" y2="435.8" stroke="#333" stroke-width="0.9"/>
<text x="232.87" y="447.60" class="s" font-size="10.28" fill="#111" text-anchor="middle" textLength="24.69" lengthAdjust="spacingAndGlyphs" xml:space="preserve" >3700</text>
<line x1="292.11" y1="432.3" x2="292.11" y2="435.8" stroke="#333" stroke-width="0.9"/>
<text x="292.11" y="447.60" class="s" font-size="10.28" fill="#111" text-anchor="middle" textLength="24.69" lengthAdjust="spacingAndGlyphs" xml:space="preserve" >3800</text>
<line x1="351.34" y1="432.3" x2="351.34" y2="435.8" stroke="#333" stroke-width="0.9"/>
<text x="351.34" y="447.60" class="s" font-size="10.28" fill="#111" text-anchor="middle" textLength="24.69" lengthAdjust="spacingAndGlyphs" xml:space="preserve" >3900</text>
<line x1="410.58" y1="432.3" x2="410.58" y2="435.8" stroke="#333" stroke-width="0.9"/>
<text x="410.58" y="447.60" class="s" font-size="10.28" fill="#111" text-anchor="middle" textLength="24.69" lengthAdjust="spacingAndGlyphs" xml:space="preserve" >4000</text>
<line x1="469.81" y1="432.3" x2="469.81" y2="435.8" stroke="#333" stroke-width="0.9"/>
<text x="469.81" y="447.60" class="s" font-size="10.28" fill="#111" text-anchor="middle" textLength="24.69" lengthAdjust="spacingAndGlyphs" xml:space="preserve" >4100</text>
<line x1="529.05" y1="432.3" x2="529.05" y2="435.8" stroke="#333" stroke-width="0.9"/>
<text x="529.05" y="447.60" class="s" font-size="10.28" fill="#111" text-anchor="middle" textLength="24.69" lengthAdjust="spacingAndGlyphs" xml:space="preserve" >4200</text>
<line x1="588.28" y1="432.3" x2="588.28" y2="435.8" stroke="#333" stroke-width="0.9"/>
<text x="588.28" y="447.60" class="s" font-size="10.28" fill="#111" text-anchor="middle" textLength="24.69" lengthAdjust="spacingAndGlyphs" xml:space="preserve" >4300</text>
<line x1="647.51" y1="432.3" x2="647.51" y2="435.8" stroke="#333" stroke-width="0.9"/>
<text x="647.51" y="447.60" class="s" font-size="10.28" fill="#111" text-anchor="middle" textLength="24.69" lengthAdjust="spacingAndGlyphs" xml:space="preserve" >4400</text>
<line x1="706.75" y1="432.3" x2="706.75" y2="435.8" stroke="#333" stroke-width="0.9"/>
<text x="706.75" y="447.60" class="s" font-size="10.28" fill="#111" text-anchor="middle" textLength="24.69" lengthAdjust="spacingAndGlyphs" xml:space="preserve" >4500</text>
<line x1="765.99" y1="432.3" x2="765.99" y2="435.8" stroke="#333" stroke-width="0.9"/>
<text x="765.99" y="447.60" class="s" font-size="10.28" fill="#111" text-anchor="middle" textLength="24.69" lengthAdjust="spacingAndGlyphs" xml:space="preserve" >4600</text>
<line x1="825.22" y1="432.3" x2="825.22" y2="435.8" stroke="#333" stroke-width="0.9"/>
<text x="825.22" y="447.60" class="s" font-size="10.28" fill="#111" text-anchor="middle" textLength="24.69" lengthAdjust="spacingAndGlyphs" xml:space="preserve" >4700</text>
<line x1="884.46" y1="432.3" x2="884.46" y2="435.8" stroke="#333" stroke-width="0.9"/>
<text x="884.46" y="447.60" class="s" font-size="10.28" fill="#111" text-anchor="middle" textLength="24.69" lengthAdjust="spacingAndGlyphs" xml:space="preserve" >4800</text>
<line x1="943.69" y1="432.3" x2="943.69" y2="435.8" stroke="#333" stroke-width="0.9"/>
<text x="943.69" y="447.60" class="s" font-size="10.28" fill="#111" text-anchor="middle" textLength="24.69" lengthAdjust="spacingAndGlyphs" xml:space="preserve" >4900</text>
<line x1="1002.93" y1="432.3" x2="1002.93" y2="435.8" stroke="#333" stroke-width="0.9"/>
<text x="1002.93" y="447.60" class="s" font-size="10.28" fill="#111" text-anchor="middle" textLength="24.69" lengthAdjust="spacingAndGlyphs" xml:space="preserve" >5000</text>
<line x1="1062.16" y1="432.3" x2="1062.16" y2="435.8" stroke="#333" stroke-width="0.9"/>
<text x="1062.16" y="447.60" class="s" font-size="10.28" fill="#111" text-anchor="middle" textLength="24.69" lengthAdjust="spacingAndGlyphs" xml:space="preserve" >5100</text>
<line x1="1121.40" y1="432.3" x2="1121.40" y2="435.8" stroke="#333" stroke-width="0.9"/>
<text x="1121.40" y="447.60" class="s" font-size="10.28" fill="#111" text-anchor="middle" textLength="24.69" lengthAdjust="spacingAndGlyphs" xml:space="preserve" >5200</text>
<line x1="1180.63" y1="432.3" x2="1180.63" y2="435.8" stroke="#333" stroke-width="0.9"/>
<text x="1180.63" y="447.60" class="s" font-size="10.28" fill="#111" text-anchor="middle" textLength="24.69" lengthAdjust="spacingAndGlyphs" xml:space="preserve" >5300</text>
<line x1="1239.87" y1="432.3" x2="1239.87" y2="435.8" stroke="#333" stroke-width="0.9"/>
<text x="1239.87" y="447.60" class="s" font-size="10.28" fill="#111" text-anchor="middle" textLength="24.69" lengthAdjust="spacingAndGlyphs" xml:space="preserve" >5400</text>
<line x1="1299.10" y1="432.3" x2="1299.10" y2="435.8" stroke="#333" stroke-width="0.9"/>
<text x="1299.10" y="447.60" class="s" font-size="10.28" fill="#111" text-anchor="middle" textLength="24.69" lengthAdjust="spacingAndGlyphs" xml:space="preserve" >5500</text>
<line x1="98.0" y1="419.50" x2="101.5" y2="419.50" stroke="#333" stroke-width="0.9"/>
<text x="94.60" y="423.00" class="s" font-size="10.28" fill="#111" text-anchor="end" textLength="6.17" lengthAdjust="spacingAndGlyphs" xml:space="preserve" >0</text>
<line x1="98.0" y1="397.00" x2="101.5" y2="397.00" stroke="#333" stroke-width="0.9"/>
<text x="94.60" y="400.50" class="s" font-size="10.28" fill="#111" text-anchor="end" textLength="6.17" lengthAdjust="spacingAndGlyphs" xml:space="preserve" >2</text>
<line x1="98.0" y1="374.50" x2="101.5" y2="374.50" stroke="#333" stroke-width="0.9"/>
<text x="94.60" y="378.00" class="s" font-size="10.28" fill="#111" text-anchor="end" textLength="6.17" lengthAdjust="spacingAndGlyphs" xml:space="preserve" >4</text>
<line x1="98.0" y1="352.00" x2="101.5" y2="352.00" stroke="#333" stroke-width="0.9"/>
<text x="94.60" y="355.50" class="s" font-size="10.28" fill="#111" text-anchor="end" textLength="6.17" lengthAdjust="spacingAndGlyphs" xml:space="preserve" >6</text>
<text x="114.00" y="346.20" class="s" font-size="10.28" fill="#111" text-anchor="start" textLength="5.97" lengthAdjust="spacingAndGlyphs" xml:space="preserve" >e</text>
<text x="120.40" y="341.20" class="s" font-size="7.42" fill="#111" text-anchor="start" textLength="14.77" lengthAdjust="spacingAndGlyphs" xml:space="preserve" >−17</text>
<text x="134.80" y="346.20" class="s" font-size="10.28" fill="#111" text-anchor="start" textLength="11.91" lengthAdjust="spacingAndGlyphs" xml:space="preserve" >x2</text>
<text x="146.30" y="346.20" class="s" font-size="10.28" fill="#111" text-anchor="start" textLength="6.64" lengthAdjust="spacingAndGlyphs" font-style="italic" xml:space="preserve" >Å</text>
<text class="s" font-size="10.2" fill="#f5a623" textLength="16.10" lengthAdjust="spacingAndGlyphs" transform="translate(118.90,319.60) rotate(90)" x="0" y="0">CIV</text>
<path d="M118.0,347.5 L118.0,345.2 L121.7,345.2 L122.5,343.6 L123.3,345.2 L127.0,345.2 L127.0,347.5" fill="none" stroke="#f5a623" stroke-width="0.9"/>
<text class="s" font-size="10.2" fill="#ff2020" textLength="13.75" lengthAdjust="spacingAndGlyphs" transform="translate(286.00,320.10) rotate(90)" x="0" y="0">NV</text>
<path d="M285.1,347.5 L285.1,345.2 L288.8,345.2 L289.6,343.6 L290.4,345.2 L294.1,345.2 L294.1,347.5" fill="none" stroke="#ff2020" stroke-width="0.9"/>
<text class="s" font-size="10.2" fill="#ff2020" textLength="14.42" lengthAdjust="spacingAndGlyphs" transform="translate(327.40,324.90) rotate(90)" x="0" y="0">SiII</text>
<path d="M326.5,347.5 L326.5,345.2 L330.2,345.2 L331.0,343.6 L331.8,345.2 L335.5,345.2 L335.5,347.5" fill="none" stroke="#ff2020" stroke-width="0.9"/>
<text class="s" font-size="10.2" fill="#9060f0" textLength="18.79" lengthAdjust="spacingAndGlyphs" transform="translate(370.70,321.00) rotate(90)" x="0" y="0">HeII</text>
<path d="M369.8,347.5 L369.8,345.2 L373.5,345.2 L374.3,343.6 L375.1,345.2 L378.8,345.2 L378.8,347.5" fill="none" stroke="#9060f0" stroke-width="0.9"/>
<text class="s" font-size="10.2" fill="#ff2020" textLength="18.16" lengthAdjust="spacingAndGlyphs" transform="translate(571.60,320.90) rotate(90)" x="0" y="0">SiIV</text>
<path d="M570.7,347.5 L570.7,345.2 L574.4,345.2 L575.2,343.6 L576.0,345.2 L579.7,345.2 L579.7,347.5" fill="none" stroke="#ff2020" stroke-width="0.9"/>
<text class="s" font-size="10.2" fill="#f5a623" textLength="12.37" lengthAdjust="spacingAndGlyphs" transform="translate(602.40,324.60) rotate(90)" x="0" y="0">CII</text>
<path d="M601.5,347.5 L601.5,345.2 L605.2,345.2 L606.0,343.6 L606.8,345.2 L610.5,345.2 L610.5,347.5" fill="none" stroke="#f5a623" stroke-width="0.9"/>
<text class="s" font-size="10.2" fill="#8a2090" textLength="12.37" lengthAdjust="spacingAndGlyphs" transform="translate(721.40,324.60) rotate(90)" x="0" y="0">CII</text>
<path d="M720.5,347.5 L720.5,345.2 L724.2,345.2 L725.0,343.6 L725.8,345.2 L729.5,345.2 L729.5,347.5" fill="none" stroke="#8a2090" stroke-width="0.9"/>
<text class="s" font-size="10.2" fill="#9060f0" textLength="15.20" lengthAdjust="spacingAndGlyphs" transform="translate(753.30,324.60) rotate(90)" x="0" y="0">CIII</text>
<path d="M752.4,347.5 L752.4,345.2 L756.1,345.2 L756.9,343.6 L757.7,345.2 L761.4,345.2 L761.4,347.5" fill="none" stroke="#9060f0" stroke-width="0.9"/>
<text class="s" font-size="10.2" fill="#ff2020" textLength="16.10" lengthAdjust="spacingAndGlyphs" transform="translate(847.70,320.90) rotate(90)" x="0" y="0">CIV</text>
<path d="M846.8,347.5 L846.8,345.2 L850.5,345.2 L851.3,343.6 L852.1,345.2 L855.8,345.2 L855.8,347.5" fill="none" stroke="#ff2020" stroke-width="0.9"/>
<text class="s" font-size="10.2" fill="#ff20ff" textLength="13.22" lengthAdjust="spacingAndGlyphs" transform="translate(974.70,323.20) rotate(90)" x="0" y="0">OII</text>
<path d="M973.8,347.5 L973.8,345.2 L977.5,345.2 L978.3,343.6 L979.1,345.2 L982.8,345.2 L982.8,347.5" fill="none" stroke="#ff20ff" stroke-width="0.9"/>
<text class="s" font-size="10.2" fill="#ff2020" textLength="18.79" lengthAdjust="spacingAndGlyphs" transform="translate(1013.60,320.60) rotate(90)" x="0" y="0">HeII</text>
<path d="M1012.7,347.5 L1012.7,345.2 L1016.4,345.2 L1017.2,343.6 L1018.0,345.2 L1021.7,345.2 L1021.7,347.5" fill="none" stroke="#ff2020" stroke-width="0.9"/>
<text class="s" font-size="10.2" fill="#f5a623" textLength="12.37" lengthAdjust="spacingAndGlyphs" transform="translate(1162.40,324.50) rotate(90)" x="0" y="0">CII</text>
<path d="M1161.5,347.5 L1161.5,345.2 L1165.2,345.2 L1166.0,343.6 L1166.8,345.2 L1170.5,345.2 L1170.5,347.5" fill="none" stroke="#f5a623" stroke-width="0.9"/>
<text class="s" font-size="10.2" fill="#8a2090" textLength="20.04" lengthAdjust="spacingAndGlyphs" transform="translate(1272.00,319.20) rotate(90)" x="0" y="0">MgII</text>
<path d="M1271.1,347.5 L1271.1,345.2 L1274.8,345.2 L1275.6,343.6 L1276.4,345.2 L1280.1,345.2 L1280.1,347.5" fill="none" stroke="#8a2090" stroke-width="0.9"/>
<rect x="572.4" y="450.0" width="17.4" height="6.4" fill="#ff0000"/>
<text x="596.40" y="456.20" class="s" font-size="7.63" fill="#333" text-anchor="start" textLength="12.84" lengthAdjust="spacingAndGlyphs" xml:space="preserve" >Lyα</text>
<rect x="626.4" y="450.0" width="17.4" height="6.4" fill="#8a2be2"/>
<text x="650.40" y="456.20" class="s" font-size="7.63" fill="#333" text-anchor="start" textLength="12.08" lengthAdjust="spacingAndGlyphs" xml:space="preserve" >CIV</text>
<rect x="681.4" y="450.0" width="17.4" height="6.4" fill="#800080"/>
<text x="705.40" y="456.20" class="s" font-size="7.63" fill="#333" text-anchor="start" textLength="11.40" lengthAdjust="spacingAndGlyphs" xml:space="preserve" >CIII</text>
<rect x="733.0" y="450.0" width="17.4" height="6.4" fill="#ff00ff"/>
<text x="757.00" y="456.20" class="s" font-size="7.63" fill="#333" text-anchor="start" textLength="15.03" lengthAdjust="spacingAndGlyphs" xml:space="preserve" >MgII</text>
<rect x="789.0" y="450.0" width="17.4" height="6.4" fill="#ffa500"/>
<text x="813.00" y="456.20" class="s" font-size="7.63" fill="#333" text-anchor="start" textLength="14.09" lengthAdjust="spacingAndGlyphs" xml:space="preserve" >HeII</text>
<g clip-path="url(#cFib)"><rect x="70.4" y="533.0" width="148.0" height="147.5" filter="url(#fLight)"/><g filter="url(#fBlur2)"><ellipse cx="153" cy="606" rx="30" ry="34" fill="#000" fill-opacity="0.16" transform="rotate(25 153 606)"/><ellipse cx="160" cy="594" rx="11" ry="10" fill="#000" fill-opacity="0.55"/><ellipse cx="148" cy="630" rx="9" ry="11" fill="#000" fill-opacity="0.4"/><ellipse cx="130" cy="618" rx="10" ry="10" fill="#000" fill-opacity="0.18"/><rect x="140" y="600" width="24" height="17" fill="#000" fill-opacity="0.95"/></g><rect x="143" y="602" width="19" height="13" fill="#000" fill-opacity="0.8" filter="url(#fBlur1)"/></g>
<rect x="94.6" y="557.8" width="99" height="98" fill="none" stroke="#ff0000" stroke-width="1.3"/>
<circle cx="125.6" cy="555.7" r="12.1" fill="none" stroke="#555" stroke-width="0.9"/><circle cx="149.8" cy="551.5" r="12.1" fill="none" stroke="#555" stroke-width="0.9"/><circle cx="165.5" cy="568.7" r="12.1" fill="none" stroke="#555" stroke-width="0.9"/><circle cx="142.8" cy="573.1" r="12.1" fill="none" stroke="#555" stroke-width="0.9"/><circle cx="118.7" cy="579.4" r="12.1" fill="none" stroke="#555" stroke-width="0.9"/><circle cx="94.1" cy="583.6" r="12.1" fill="none" stroke="#555" stroke-width="0.9"/><circle cx="181.7" cy="586.1" r="12.1" fill="none" stroke="#555" stroke-width="0.9"/><circle cx="111.4" cy="600.8" r="12.1" fill="none" stroke="#555" stroke-width="0.9"/><circle cx="88.3" cy="607.1" r="12.1" fill="none" stroke="#555" stroke-width="0.9"/><circle cx="198.4" cy="605.0" r="12.1" fill="none" stroke="#555" stroke-width="0.9"/><circle cx="174.3" cy="609.2" r="12.1" fill="none" stroke="#555" stroke-width="0.9"/><circle cx="103.0" cy="624.3" r="12.1" fill="none" stroke="#555" stroke-width="0.9"/><circle cx="191.1" cy="627.0" r="12.1" fill="none" stroke="#555" stroke-width="0.9"/><circle cx="167.0" cy="632.7" r="12.1" fill="none" stroke="#555" stroke-width="0.9"/><circle cx="142.8" cy="637.5" r="12.1" fill="none" stroke="#555" stroke-width="0.9"/><circle cx="120.4" cy="641.7" r="12.1" fill="none" stroke="#555" stroke-width="0.9"/><circle cx="135.9" cy="660.6" r="12.1" fill="none" stroke="#555" stroke-width="0.9"/><circle cx="160.3" cy="654.3" r="12.1" fill="none" stroke="#555" stroke-width="0.9"/>
<circle cx="134.4" cy="596.4" r="12.1" fill="none" stroke="#00ff00" stroke-width="1.4"/>
<circle cx="158.9" cy="592.1" r="12.1" fill="none" stroke="#ffa500" stroke-width="1.4"/>
<circle cx="151.4" cy="613.8" r="12.1" fill="none" stroke="#0000ff" stroke-width="1.4"/>
<circle cx="127.3" cy="620.0" r="12.1" fill="none" stroke="#ff0000" stroke-width="1.4"/>
<path d="M141,608 h6 M144,605 v6" stroke="#ff0000" stroke-width="1.2"/>
<text x="143.90" y="546.60" class="s" font-size="11.13" fill="#ff0000" text-anchor="middle" textLength="7.85" lengthAdjust="spacingAndGlyphs" xml:space="preserve" >N</text>
<text x="80.00" y="611.00" class="s" font-size="11.13" fill="#ff0000" text-anchor="middle" textLength="6.63" lengthAdjust="spacingAndGlyphs" xml:space="preserve" >E</text>
<rect x="70.4" y="533.0" width="148.0" height="147.5" fill="none" stroke="#333" stroke-width="1"/>
<line x1="78.42" y1="680.5" x2="78.42" y2="684.0" stroke="#333" stroke-width="0.9"/>
<text x="78.42" y="696.00" class="s" font-size="11.13" fill="#111" text-anchor="middle" textLength="15.48" lengthAdjust="spacingAndGlyphs" xml:space="preserve" >−4</text>
<line x1="66.9" y1="672.18" x2="70.4" y2="672.18" stroke="#333" stroke-width="0.9"/>
<text x="62.80" y="676.08" class="s" font-size="11.13" fill="#111" text-anchor="end" textLength="15.48" lengthAdjust="spacingAndGlyphs" xml:space="preserve" >−4</text>
<line x1="111.16" y1="680.5" x2="111.16" y2="684.0" stroke="#333" stroke-width="0.9"/>
<text x="111.16" y="696.00" class="s" font-size="11.13" fill="#111" text-anchor="middle" textLength="15.48" lengthAdjust="spacingAndGlyphs" xml:space="preserve" >−2</text>
<line x1="66.9" y1="639.44" x2="70.4" y2="639.44" stroke="#333" stroke-width="0.9"/>
<text x="62.80" y="643.34" class="s" font-size="11.13" fill="#111" text-anchor="end" textLength="15.48" lengthAdjust="spacingAndGlyphs" xml:space="preserve" >−2</text>
<line x1="143.90" y1="680.5" x2="143.90" y2="684.0" stroke="#333" stroke-width="0.9"/>
<text x="143.90" y="696.00" class="s" font-size="11.13" fill="#111" text-anchor="middle" textLength="6.68" lengthAdjust="spacingAndGlyphs" xml:space="preserve" >0</text>
<line x1="66.9" y1="606.70" x2="70.4" y2="606.70" stroke="#333" stroke-width="0.9"/>
<text x="62.80" y="610.60" class="s" font-size="11.13" fill="#111" text-anchor="end" textLength="6.68" lengthAdjust="spacingAndGlyphs" xml:space="preserve" >0</text>
<line x1="176.64" y1="680.5" x2="176.64" y2="684.0" stroke="#333" stroke-width="0.9"/>
<text x="176.64" y="696.00" class="s" font-size="11.13" fill="#111" text-anchor="middle" textLength="6.68" lengthAdjust="spacingAndGlyphs" xml:space="preserve" >2</text>
<line x1="66.9" y1="573.96" x2="70.4" y2="573.96" stroke="#333" stroke-width="0.9"/>
<text x="62.80" y="577.86" class="s" font-size="11.13" fill="#111" text-anchor="end" textLength="6.68" lengthAdjust="spacingAndGlyphs" xml:space="preserve" >2</text>
<line x1="209.38" y1="680.5" x2="209.38" y2="684.0" stroke="#333" stroke-width="0.9"/>
<text x="209.38" y="696.00" class="s" font-size="11.13" fill="#111" text-anchor="middle" textLength="6.68" lengthAdjust="spacingAndGlyphs" xml:space="preserve" >4</text>
<line x1="66.9" y1="541.22" x2="70.4" y2="541.22" stroke="#333" stroke-width="0.9"/>
<text x="62.80" y="545.12" class="s" font-size="11.13" fill="#111" text-anchor="end" textLength="6.68" lengthAdjust="spacingAndGlyphs" xml:space="preserve" >4</text>
<text x="144.40" y="525.60" class="s" font-size="13.14" fill="#111" text-anchor="middle" textLength="90.30" lengthAdjust="spacingAndGlyphs" xml:space="preserve" >Fiber Positions</text>
<text x="143.90" y="706.80" class="s" font-size="11.66" fill="#111" text-anchor="middle" textLength="41.59" lengthAdjust="spacingAndGlyphs" xml:space="preserve" >arcsecs</text>
<g clip-path="url(#cLf)"><rect x="255.3" y="532.5" width="148.7" height="147.6" fill="#2c7a8e"/><g filter="url(#fBlur1)"><polygon points="250.0,528.0 268.0,528.0 272.0,600.0 262.0,640.0 250.0,650.0" fill="#356a8d" fill-opacity="1.00"/><polygon points="250.0,528.0 282.0,528.0 285.0,560.0 274.0,600.0 250.0,612.0" fill="#3b5c8b" fill-opacity="0.70"/><polygon points="276.0,532.0 316.0,532.0 320.0,557.0 281.0,558.0" fill="#27a087" fill-opacity="1.00"/><polygon points="342.0,528.0 372.0,528.0 372.0,556.0 344.0,556.0" fill="#24958a" fill-opacity="1.00"/><polygon points="368.0,528.0 410.0,528.0 410.0,562.0 376.0,560.0" fill="#414487" fill-opacity="1.00"/><polygon points="250.0,650.0 268.0,612.0 285.0,612.0 300.0,625.0 304.0,640.0 296.0,658.0 280.0,660.0" fill="#2c7f8e" fill-opacity="0.90"/><polygon points="255.0,658.0 300.0,664.0 318.0,685.0 250.0,685.0" fill="#24998a" fill-opacity="1.00"/><polygon points="318.0,560.0 345.0,560.0 345.0,600.0 338.0,612.0 338.0,640.0 348.0,652.0 345.0,685.0 300.0,685.0 296.0,660.0 304.0,638.0 294.0,627.0 300.0,601.0 312.0,572.0" fill="#23978a" fill-opacity="1.00"/><ellipse cx="327" cy="612" rx="10" ry="22" fill="#30b47b" fill-opacity="0.7"/><polygon points="307.1,524.9 346.7,524.6 344.7,556.3 315.2,561.2" fill="#3b528b" fill-opacity="0.85"/><polygon points="289.4,558.5 317.9,565.9 305.7,604.9 286.4,612.0 268.9,607.9 261.0,588.6 276.0,561.4" fill="#3b528b" fill-opacity="0.85"/><polygon points="345.0,561.4 377.6,564.0 387.2,557.2 412.5,547.7 412.6,689.3 397.8,689.7 387.7,666.7 379.0,656.9 366.1,647.9 341.3,647.4 333.2,631.4 335.2,609.6 341.0,597.0" fill="#3b528b" fill-opacity="0.85"/><polygon points="259.9,625.5 307.0,636.1 300.6,651.9 277.5,658.1 258.9,649.9" fill="#3b528b" fill-opacity="0.85"/><polygon points="311.0,528.0 343.0,528.0 341.0,553.0 318.0,557.0" fill="#440154" fill-opacity="1.00"/><polygon points="288.9,563.5 313.7,568.6 302.2,601.3 286.5,607.0 272.0,604.0 266.0,588.0 278.0,566.0" fill="#440154" fill-opacity="1.00"/><polygon points="347.0,566.0 377.0,569.0 386.0,562.0 410.0,552.0 410.0,685.0 396.0,685.0 386.0,662.0 378.0,652.0 367.0,643.0 345.0,644.0 338.0,630.0 340.0,611.0 345.0,600.0" fill="#440154" fill-opacity="1.00"/><polygon points="263.7,628.8 302.2,637.5 296.0,650.0 278.6,653.2 263.7,648.5" fill="#440154" fill-opacity="1.00"/><polygon points="391.0,553.0 404.0,550.0 404.0,580.0 395.0,578.0" fill="#414487" fill-opacity="0.75"/><polygon points="365.0,613.0 376.0,613.0 378.0,650.0 367.0,643.0" fill="#46327e" fill-opacity="0.80"/><polygon points="390.0,655.0 410.0,640.0 410.0,685.0 380.0,685.0" fill="#3b528b" fill-opacity="0.70"/></g><ellipse cx="352.6" cy="540.5" rx="4.5" ry="4.5" fill="#5ec962" fill-opacity="0.75" filter="url(#fBlur1)"/><ellipse cx="358.1" cy="668.2" rx="5" ry="5" fill="#5ec962" fill-opacity="0.75" filter="url(#fBlur1)"/></g>
<rect x="280.2" y="557.9" width="98.5" height="98" fill="none" stroke="#ff0000" stroke-width="1.2"/>
<path d="M292.3,606.3 H321.4 M337.3,606.3 H367.7 M329.1,569.5 V600.2 M329.1,614.5 V643.8" stroke="#ff0000" stroke-width="1.2"/>
<text x="329.10" y="546.80" class="s" font-size="11.13" fill="#ff0000" text-anchor="middle" textLength="7.85" lengthAdjust="spacingAndGlyphs" xml:space="preserve" >N</text>
<text x="265.20" y="610.50" class="s" font-size="11.13" fill="#ff0000" text-anchor="middle" textLength="6.63" lengthAdjust="spacingAndGlyphs" xml:space="preserve" >E</text>
<rect x="255.3" y="532.5" width="148.7" height="147.6" fill="none" stroke="#333" stroke-width="1"/>
<line x1="263.90" y1="680.1" x2="263.90" y2="683.6" stroke="#333" stroke-width="0.9"/>
<text x="263.90" y="696.00" class="s" font-size="11.13" fill="#111" text-anchor="middle" textLength="15.48" lengthAdjust="spacingAndGlyphs" xml:space="preserve" >−4</text>
<line x1="251.8" y1="671.50" x2="255.3" y2="671.50" stroke="#333" stroke-width="0.9"/>
<text x="247.70" y="675.40" class="s" font-size="11.13" fill="#111" text-anchor="end" textLength="15.48" lengthAdjust="spacingAndGlyphs" xml:space="preserve" >−4</text>
<line x1="296.50" y1="680.1" x2="296.50" y2="683.6" stroke="#333" stroke-width="0.9"/>
<text x="296.50" y="696.00" class="s" font-size="11.13" fill="#111" text-anchor="middle" textLength="15.48" lengthAdjust="spacingAndGlyphs" xml:space="preserve" >−2</text>
<line x1="251.8" y1="638.90" x2="255.3" y2="638.90" stroke="#333" stroke-width="0.9"/>
<text x="247.70" y="642.80" class="s" font-size="11.13" fill="#111" text-anchor="end" textLength="15.48" lengthAdjust="spacingAndGlyphs" xml:space="preserve" >−2</text>
<line x1="329.10" y1="680.1" x2="329.10" y2="683.6" stroke="#333" stroke-width="0.9"/>
<text x="329.10" y="696.00" class="s" font-size="11.13" fill="#111" text-anchor="middle" textLength="6.68" lengthAdjust="spacingAndGlyphs" xml:space="preserve" >0</text>
<line x1="251.8" y1="606.30" x2="255.3" y2="606.30" stroke="#333" stroke-width="0.9"/>
<text x="247.70" y="610.20" class="s" font-size="11.13" fill="#111" text-anchor="end" textLength="6.68" lengthAdjust="spacingAndGlyphs" xml:space="preserve" >0</text>
<line x1="361.70" y1="680.1" x2="361.70" y2="683.6" stroke="#333" stroke-width="0.9"/>
<text x="361.70" y="696.00" class="s" font-size="11.13" fill="#111" text-anchor="middle" textLength="6.68" lengthAdjust="spacingAndGlyphs" xml:space="preserve" >2</text>
<line x1="251.8" y1="573.70" x2="255.3" y2="573.70" stroke="#333" stroke-width="0.9"/>
<text x="247.70" y="577.60" class="s" font-size="11.13" fill="#111" text-anchor="end" textLength="6.68" lengthAdjust="spacingAndGlyphs" xml:space="preserve" >2</text>
<line x1="394.30" y1="680.1" x2="394.30" y2="683.6" stroke="#333" stroke-width="0.9"/>
<text x="394.30" y="696.00" class="s" font-size="11.13" fill="#111" text-anchor="middle" textLength="6.68" lengthAdjust="spacingAndGlyphs" xml:space="preserve" >4</text>
<line x1="251.8" y1="541.10" x2="255.3" y2="541.10" stroke="#333" stroke-width="0.9"/>
<text x="247.70" y="545.00" class="s" font-size="11.13" fill="#111" text-anchor="end" textLength="6.68" lengthAdjust="spacingAndGlyphs" xml:space="preserve" >4</text>
<text x="329.10" y="525.60" class="s" font-size="13.14" fill="#111" text-anchor="middle" textLength="78.96" lengthAdjust="spacingAndGlyphs" xml:space="preserve" >Lineflux Map</text>
<text x="329.10" y="706.50" class="s" font-size="11.45" fill="#111" text-anchor="middle" textLength="101.61" lengthAdjust="spacingAndGlyphs" xml:space="preserve" >s/b: 0.63 +/- 0.101</text>
<g clip-path="url(#cHsc)"><rect x="440.4" y="532.7" width="148.3" height="147.8" filter="url(#fLight)"/><g filter="url(#fBlur2)"><ellipse cx="521" cy="610" rx="25" ry="29" fill="#000" fill-opacity="0.2" transform="rotate(30 521 610)"/><ellipse cx="534" cy="596" rx="10" ry="9" fill="#000" fill-opacity="0.5"/><ellipse cx="512" cy="627" rx="9" ry="12" fill="#000" fill-opacity="0.3"/><ellipse cx="524" cy="609" rx="10" ry="9" fill="#000" fill-opacity="0.8"/></g><ellipse cx="523.5" cy="608.5" rx="8" ry="7.5" fill="#000" fill-opacity="0.9" filter="url(#fBlur1)"/></g>
<rect x="465.3" y="557.7" width="98.2" height="98.1" fill="none" stroke="#ff0000" stroke-width="1.2"/>
<path d="M478.5,606.6 H506.9 M521.7,606.6 H551.7 M514.3,569.2 V599.7 M514.3,613.5 V643.6" stroke="#ff0000" stroke-width="1.2"/>
<ellipse cx="521.7" cy="609.8" rx="46.5" ry="41.5" fill="none" stroke="#ffd700" stroke-width="1.3" transform="rotate(-30 521.7 609.8)"/>
<rect x="517.3" y="602.0" width="13.2" height="13.9" fill="none" stroke="#0000ff" stroke-width="1.2"/>
<text x="514.30" y="547.00" class="s" font-size="11.13" fill="#ff0000" text-anchor="middle" textLength="7.85" lengthAdjust="spacingAndGlyphs" xml:space="preserve" >N</text>
<text x="450.80" y="610.80" class="s" font-size="11.13" fill="#ff0000" text-anchor="middle" textLength="6.63" lengthAdjust="spacingAndGlyphs" xml:space="preserve" >E</text>
<rect x="440.4" y="532.7" width="148.3" height="147.8" fill="none" stroke="#333" stroke-width="1"/>
<line x1="449.10" y1="680.5" x2="449.10" y2="684.0" stroke="#333" stroke-width="0.9"/>
<text x="449.10" y="696.00" class="s" font-size="11.13" fill="#111" text-anchor="middle" textLength="15.48" lengthAdjust="spacingAndGlyphs" xml:space="preserve" >−4</text>
<line x1="436.9" y1="671.80" x2="440.4" y2="671.80" stroke="#333" stroke-width="0.9"/>
<text x="432.80" y="675.70" class="s" font-size="11.13" fill="#111" text-anchor="end" textLength="15.48" lengthAdjust="spacingAndGlyphs" xml:space="preserve" >−4</text>
<line x1="481.70" y1="680.5" x2="481.70" y2="684.0" stroke="#333" stroke-width="0.9"/>
<text x="481.70" y="696.00" class="s" font-size="11.13" fill="#111" text-anchor="middle" textLength="15.48" lengthAdjust="spacingAndGlyphs" xml:space="preserve" >−2</text>
<line x1="436.9" y1="639.20" x2="440.4" y2="639.20" stroke="#333" stroke-width="0.9"/>
<text x="432.80" y="643.10" class="s" font-size="11.13" fill="#111" text-anchor="end" textLength="15.48" lengthAdjust="spacingAndGlyphs" xml:space="preserve" >−2</text>
<line x1="514.30" y1="680.5" x2="514.30" y2="684.0" stroke="#333" stroke-width="0.9"/>
<text x="514.30" y="696.00" class="s" font-size="11.13" fill="#111" text-anchor="middle" textLength="6.68" lengthAdjust="spacingAndGlyphs" xml:space="preserve" >0</text>
<line x1="436.9" y1="606.60" x2="440.4" y2="606.60" stroke="#333" stroke-width="0.9"/>
<text x="432.80" y="610.50" class="s" font-size="11.13" fill="#111" text-anchor="end" textLength="6.68" lengthAdjust="spacingAndGlyphs" xml:space="preserve" >0</text>
<line x1="546.90" y1="680.5" x2="546.90" y2="684.0" stroke="#333" stroke-width="0.9"/>
<text x="546.90" y="696.00" class="s" font-size="11.13" fill="#111" text-anchor="middle" textLength="6.68" lengthAdjust="spacingAndGlyphs" xml:space="preserve" >2</text>
<line x1="436.9" y1="574.00" x2="440.4" y2="574.00" stroke="#333" stroke-width="0.9"/>
<text x="432.80" y="577.90" class="s" font-size="11.13" fill="#111" text-anchor="end" textLength="6.68" lengthAdjust="spacingAndGlyphs" xml:space="preserve" >2</text>
<line x1="579.50" y1="680.5" x2="579.50" y2="684.0" stroke="#333" stroke-width="0.9"/>
<text x="579.50" y="696.00" class="s" font-size="11.13" fill="#111" text-anchor="middle" textLength="6.68" lengthAdjust="spacingAndGlyphs" xml:space="preserve" >4</text>
<line x1="436.9" y1="541.40" x2="440.4" y2="541.40" stroke="#333" stroke-width="0.9"/>
<text x="432.80" y="545.30" class="s" font-size="11.13" fill="#111" text-anchor="end" textLength="6.68" lengthAdjust="spacingAndGlyphs" xml:space="preserve" >4</text>
<text x="514.30" y="525.60" class="s" font-size="13.14" fill="#111" text-anchor="middle" textLength="72.18" lengthAdjust="spacingAndGlyphs" xml:space="preserve" >HSC(26.2) r</text>
<text x="514.30" y="707.10" class="s" font-size="11.45" fill="#111" text-anchor="middle" textLength="120.21" lengthAdjust="spacingAndGlyphs" xml:space="preserve" >m:20.1  re:2.7&quot;  s:0.5&quot;</text>
<text x="516.00" y="718.60" class="s" font-size="11.45" fill="#111" text-anchor="middle" textLength="104.05" lengthAdjust="spacingAndGlyphs" xml:space="preserve" >EWr: 0, PLAE: 1000</text>
</svg></body></html>
